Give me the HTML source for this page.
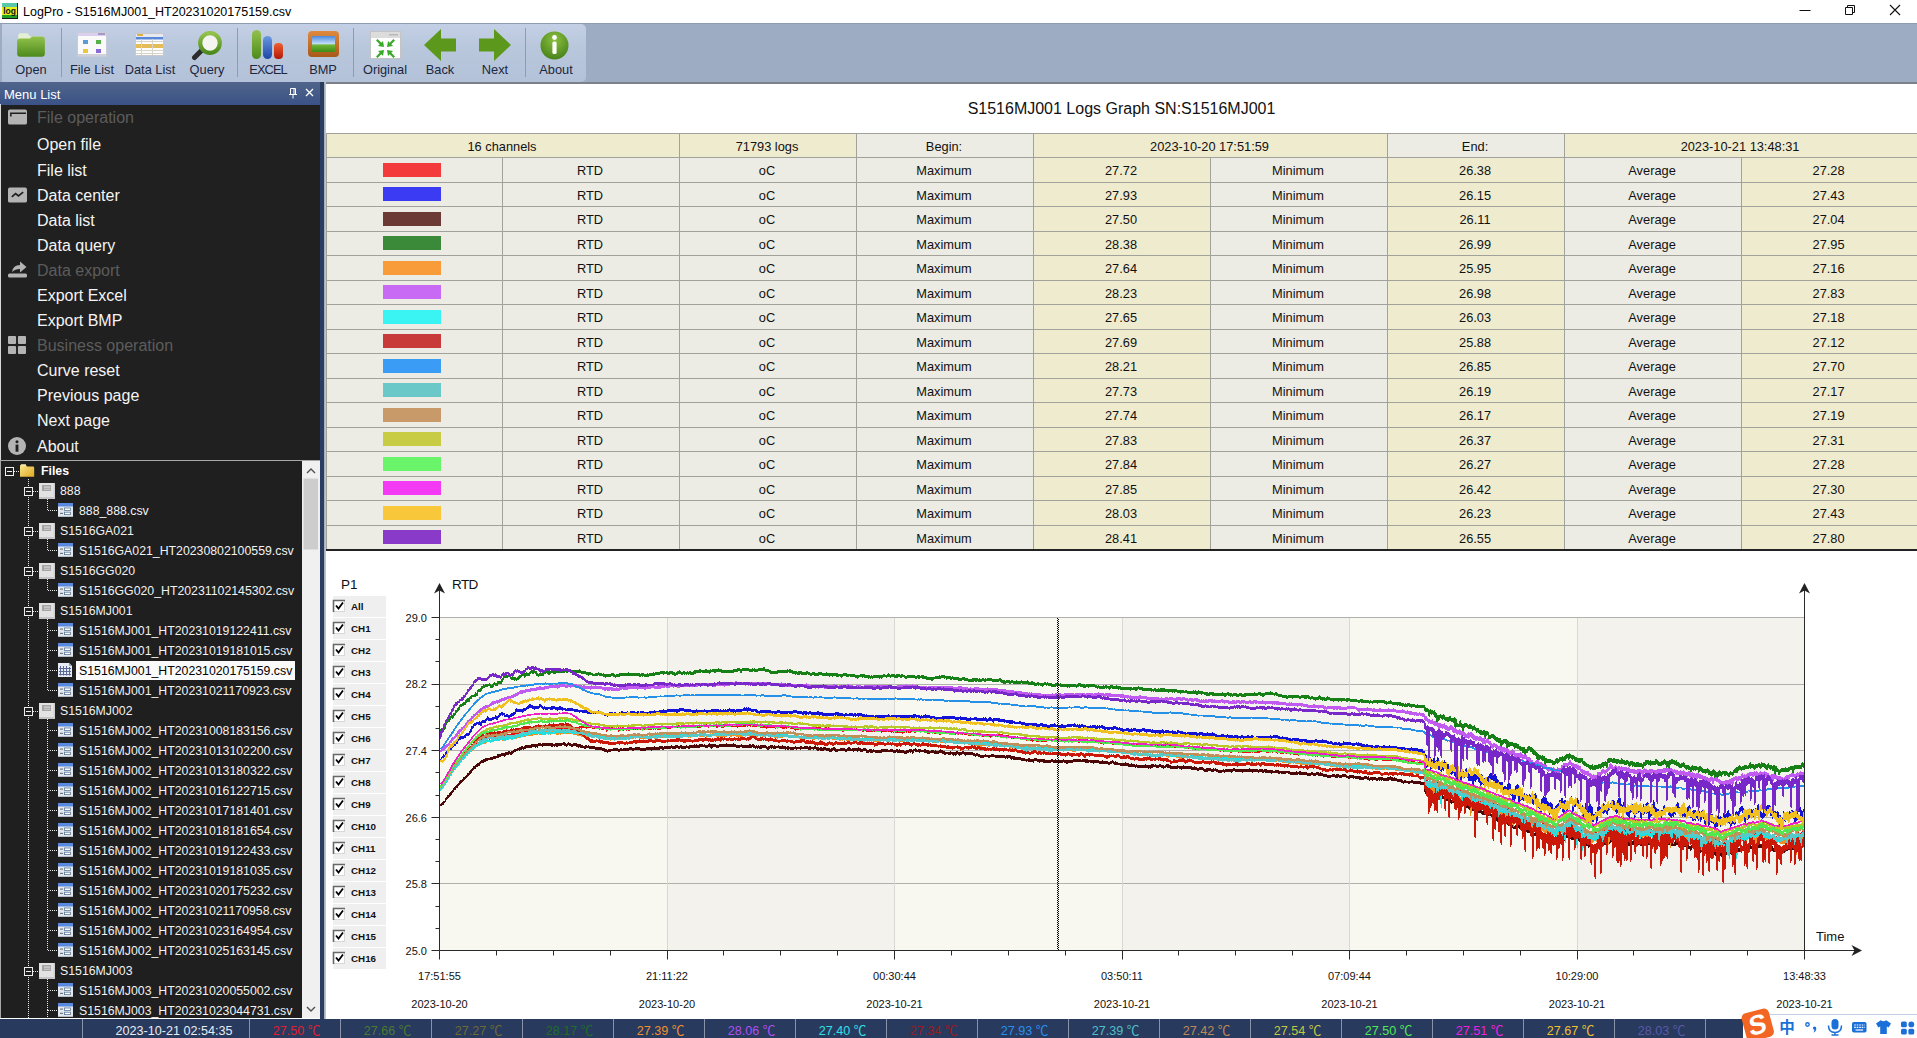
<!DOCTYPE html><html><head><meta charset="utf-8"><title>LogPro</title><style>

*{box-sizing:border-box}
html,body{margin:0;padding:0}
body{width:1917px;height:1038px;overflow:hidden;background:#fff;font-family:"Liberation Sans",sans-serif;position:relative;color:#000}
.abs{position:absolute}
#titlebar{left:0;top:0;width:1917px;height:23px;background:#fff}
#title{left:23px;top:4px;font-size:12.5px;line-height:16px;white-space:nowrap;color:#000}
#toolbar{left:0;top:23px;width:1917px;height:59px;background:#9dabc3;border-top:1px solid #8f9bb1}
#tbline{left:324px;top:82px;width:1593px;height:1.5px;background:#7c8088}
#tbpanel{left:2px;top:24px;width:584px;height:58px;background:linear-gradient(#c3cfe4,#b9c7dd 40%,#b4c2d9);border-radius:0 5px 5px 0}
.tbl{top:62px;font-size:12.8px;line-height:15px;color:#1c2740;white-space:nowrap;text-align:center;width:80px;margin-left:-40px}
.tsep{top:28px;width:1px;height:49px;background:#8d9bb5}
#lp{left:0;top:83px;width:320px;height:935px;background:#202020}
#mlh{left:0;top:82px;width:320px;height:23px;background:linear-gradient(#50658b,#3a5287);color:#fff;font-size:13px;line-height:26px;padding-left:4px;overflow:hidden}
.mi{left:37px;font-size:16px;line-height:20px;color:#f4f4f4;white-space:nowrap}
.mh{color:#5c5c5c}
#split{left:320px;top:82px;width:6px;height:937px;background:linear-gradient(90deg,#2c3d62 0,#2c3d62 4px,#9ea6b6 4px,#c8ccd4 6px)}
#tree{left:0;top:460px;width:320px;height:558px;background:#1f1f1f;border-top:1px solid #a8a8a8;border-left:1px solid #a8a8a8;overflow:hidden}
.tr{font-size:12.3px;line-height:16px;color:#f2f2f2;white-space:nowrap}
#main{left:326px;top:84px;width:1591px;height:934px;background:#fff}
#gtitle{left:326px;top:99px;width:1591px;text-align:center;font-size:16px;line-height:20px;color:#111}
table{border-collapse:collapse;position:absolute;left:326px;top:133px;width:1591px;table-layout:fixed;font-size:12.8px;color:#111}
td{border:1px solid #a2a29c;padding:2px 2px 0 0;text-align:center;height:24.5px;background:#edece4;overflow:hidden;white-space:nowrap}
td.y{background:#efebcf}
tr.h td{height:24px}
.sw{display:inline-block;width:58px;height:14px;vertical-align:middle;position:relative;top:-2px;left:-2px}
#status{left:0;top:1019px;width:1917px;height:19px;background:#283a5e}
.sc{font-family:"Liberation Sans","Noto Sans CJK SC",sans-serif;top:1019px;height:19px;font-size:12.6px;line-height:24px;padding-left:3px;text-align:center;white-space:nowrap;border-left:1px solid #8892a8}

</style></head><body>
<div id="titlebar" class="abs"></div>
<svg class="abs" style="left:2px;top:3px" width="16" height="16" viewBox="0 0 16 16"><rect x="0" y="0" width="16" height="16" fill="#1a1a1a"/><rect x="0" y="0" width="15" height="15" fill="#e8f020"/><rect x="0" y="0" width="15" height="4" fill="#58c8a8"/><rect x="0" y="12" width="15" height="3" fill="#20a020"/><text x="7.5" y="11" font-size="8.5" font-weight="700" text-anchor="middle" font-family="Liberation Sans, sans-serif" fill="#111">log</text></svg>
<div id="title" class="abs">LogPro - S1516MJ001_HT20231020175159.csv</div>
<svg class="abs" style="left:0px;top:0px" width="1917" height="23" viewBox="0 0 1917 23"><path d="M1799.5 10.5h11" stroke="#111" stroke-width="1" fill="none"/><path d="M1845.5 7.5h7v7h-7z M1847.5 7.5v-2h7v7h-2" stroke="#111" stroke-width="1" fill="none"/><path d="M1890 5l10 10M1900 5l-10 10" stroke="#111" stroke-width="1.1" fill="none"/></svg>
<div id="toolbar" class="abs"></div><div id="tbline" class="abs"></div><div id="tbpanel" class="abs"></div>
<div class="abs tsep" style="left:61px"></div>
<div class="abs tsep" style="left:237px"></div>
<div class="abs tsep" style="left:353px"></div>
<div class="abs tsep" style="left:525px"></div>
<svg class="abs" style="left:16px;top:29px" width="30" height="32" viewBox="0 0 28 30"><defs><linearGradient id="gG" x1="0" y1="0" x2="0" y2="1"><stop offset="0" stop-color="#93c24c"/><stop offset="1" stop-color="#4c8a1c"/></linearGradient><linearGradient id="gB" x1="0" y1="0" x2="0" y2="1"><stop offset="0" stop-color="#6a98e0"/><stop offset="1" stop-color="#1c48a8"/></linearGradient><linearGradient id="gR" x1="0" y1="0" x2="0" y2="1"><stop offset="0" stop-color="#f06030"/><stop offset="1" stop-color="#b01808"/></linearGradient><linearGradient id="gO" x1="0" y1="0" x2="0" y2="1"><stop offset="0" stop-color="#e08a40"/><stop offset="1" stop-color="#a85818"/></linearGradient><linearGradient id="gS" x1="0" y1="0" x2="0" y2="1"><stop offset="0" stop-color="#4a88e0"/><stop offset="0.5" stop-color="#c8e0f8"/><stop offset="0.55" stop-color="#70b838"/><stop offset="1" stop-color="#3c8a18"/></linearGradient><radialGradient id="gA" cx="0.5" cy="0.3" r="0.8"><stop offset="0" stop-color="#8cc040"/><stop offset="1" stop-color="#3f7a14"/></radialGradient></defs><path d="M2 6 q0-2 2-2 h7 l2 3 h11 q2 0 2 2 v4 h-24z" fill="#e4efd4"/><path d="M1 12 q0-3 3-3 h9 l2-2 h9 q3 0 3 3 v13 q0 3-3 3 h-20 q-3 0-3-3z" fill="url(#gG)"/></svg>
<div class="abs tbl" style="left:31px">Open</div>
<svg class="abs" style="left:77px;top:32px" width="30" height="25" viewBox="0 0 30 25"><rect x="0.5" y="0.5" width="29" height="24" fill="#fafafa" stroke="#c8ccd8"/><rect x="1" y="1" width="28" height="3" fill="#d8d0ec"/><rect x="21" y="1" width="7" height="2" fill="#a898c8"/><rect x="1" y="22" width="28" height="2" fill="#d0d0d8"/><rect x="6" y="8" width="5" height="4" fill="#5a9ad8"/><rect x="19" y="8" width="5" height="4" fill="#58b048"/><rect x="6" y="17" width="5" height="4" fill="#e8c840"/><rect x="19" y="17" width="5" height="4" fill="#8a6ad8"/></svg>
<div class="abs tbl" style="left:92px">File List</div>
<svg class="abs" style="left:135px;top:33px" width="29" height="23" viewBox="0 0 29 23"><rect x="0.5" y="0.5" width="28" height="22" fill="#fcfcfc" stroke="#c8c8cc"/><rect x="1" y="1" width="27" height="3" fill="#e8e8f0"/><rect x="2" y="1" width="6" height="2" fill="#e0b040"/><rect x="1" y="4" width="27" height="2.5" fill="#5a88d8"/><rect x="1" y="11" width="27" height="4" fill="#e4bc58"/><path d="M1 8.5h27M1 17.5h27M1 20.5h27M6.5 6v16M17.5 6v16" stroke="#d8d4c8" stroke-width="1" fill="none"/></svg>
<div class="abs tbl" style="left:150px">Data List</div>
<svg class="abs" style="left:191px;top:30px" width="32" height="32" viewBox="0 0 32 32"><defs><linearGradient id="gG" x1="0" y1="0" x2="0" y2="1"><stop offset="0" stop-color="#93c24c"/><stop offset="1" stop-color="#4c8a1c"/></linearGradient><linearGradient id="gB" x1="0" y1="0" x2="0" y2="1"><stop offset="0" stop-color="#6a98e0"/><stop offset="1" stop-color="#1c48a8"/></linearGradient><linearGradient id="gR" x1="0" y1="0" x2="0" y2="1"><stop offset="0" stop-color="#f06030"/><stop offset="1" stop-color="#b01808"/></linearGradient><linearGradient id="gO" x1="0" y1="0" x2="0" y2="1"><stop offset="0" stop-color="#e08a40"/><stop offset="1" stop-color="#a85818"/></linearGradient><linearGradient id="gS" x1="0" y1="0" x2="0" y2="1"><stop offset="0" stop-color="#4a88e0"/><stop offset="0.5" stop-color="#c8e0f8"/><stop offset="0.55" stop-color="#70b838"/><stop offset="1" stop-color="#3c8a18"/></linearGradient><radialGradient id="gA" cx="0.5" cy="0.3" r="0.8"><stop offset="0" stop-color="#8cc040"/><stop offset="1" stop-color="#3f7a14"/></radialGradient></defs><path d="M3.5 27.5 L11 20" stroke="#2c2c2c" stroke-width="5" stroke-linecap="round"/><circle cx="19" cy="13" r="9.8" fill="#f4f4f0" stroke="url(#gG)" stroke-width="4.2"/></svg>
<div class="abs tbl" style="left:207px">Query</div>
<svg class="abs" style="left:251px;top:30px" width="33" height="30" viewBox="0 0 33 30"><defs><linearGradient id="gG" x1="0" y1="0" x2="0" y2="1"><stop offset="0" stop-color="#93c24c"/><stop offset="1" stop-color="#4c8a1c"/></linearGradient><linearGradient id="gB" x1="0" y1="0" x2="0" y2="1"><stop offset="0" stop-color="#6a98e0"/><stop offset="1" stop-color="#1c48a8"/></linearGradient><linearGradient id="gR" x1="0" y1="0" x2="0" y2="1"><stop offset="0" stop-color="#f06030"/><stop offset="1" stop-color="#b01808"/></linearGradient><linearGradient id="gO" x1="0" y1="0" x2="0" y2="1"><stop offset="0" stop-color="#e08a40"/><stop offset="1" stop-color="#a85818"/></linearGradient><linearGradient id="gS" x1="0" y1="0" x2="0" y2="1"><stop offset="0" stop-color="#4a88e0"/><stop offset="0.5" stop-color="#c8e0f8"/><stop offset="0.55" stop-color="#70b838"/><stop offset="1" stop-color="#3c8a18"/></linearGradient><radialGradient id="gA" cx="0.5" cy="0.3" r="0.8"><stop offset="0" stop-color="#8cc040"/><stop offset="1" stop-color="#3f7a14"/></radialGradient></defs><rect x="1" y="0" width="9" height="29" rx="4.5" fill="url(#gG)"/><rect x="12" y="6" width="9" height="23" rx="4.5" fill="url(#gB)"/><rect x="23" y="13" width="9" height="16" rx="4" fill="url(#gR)"/></svg>
<div class="abs tbl" style="left:268px;letter-spacing:-0.9px">EXCEL</div>
<svg class="abs" style="left:307.5px;top:31px" width="31" height="26" viewBox="0 0 31 26"><defs><linearGradient id="gG" x1="0" y1="0" x2="0" y2="1"><stop offset="0" stop-color="#93c24c"/><stop offset="1" stop-color="#4c8a1c"/></linearGradient><linearGradient id="gB" x1="0" y1="0" x2="0" y2="1"><stop offset="0" stop-color="#6a98e0"/><stop offset="1" stop-color="#1c48a8"/></linearGradient><linearGradient id="gR" x1="0" y1="0" x2="0" y2="1"><stop offset="0" stop-color="#f06030"/><stop offset="1" stop-color="#b01808"/></linearGradient><linearGradient id="gO" x1="0" y1="0" x2="0" y2="1"><stop offset="0" stop-color="#e08a40"/><stop offset="1" stop-color="#a85818"/></linearGradient><linearGradient id="gS" x1="0" y1="0" x2="0" y2="1"><stop offset="0" stop-color="#4a88e0"/><stop offset="0.5" stop-color="#c8e0f8"/><stop offset="0.55" stop-color="#70b838"/><stop offset="1" stop-color="#3c8a18"/></linearGradient><radialGradient id="gA" cx="0.5" cy="0.3" r="0.8"><stop offset="0" stop-color="#8cc040"/><stop offset="1" stop-color="#3f7a14"/></radialGradient></defs><rect x="0" y="0" width="31" height="26" rx="4" fill="url(#gO)"/><rect x="4" y="5" width="23" height="16" rx="1" fill="url(#gS)"/></svg>
<div class="abs tbl" style="left:323px">BMP</div>
<svg class="abs" style="left:369.5px;top:31px" width="31" height="28" viewBox="0 0 31 28"><rect x="0.5" y="0.5" width="30" height="27" fill="#fff" stroke="#c4c4c4"/><rect x="1" y="1" width="29" height="6" fill="#dcdcdc"/><rect x="19" y="3" width="9" height="1.5" fill="#b8b8b8"/><g transform="translate(14,16)"><path d="M0 0 L-6 -1 L-4.3 -2.7 L-8 -6.4 L-6.4 -8 L-2.7 -4.3 L-1 -6z" fill="#3aa828"/></g><g transform="translate(17,16) scale(-1,1)"><path d="M0 0 L-6 -1 L-4.3 -2.7 L-8 -6.4 L-6.4 -8 L-2.7 -4.3 L-1 -6z" fill="#3aa828"/></g><g transform="translate(14,19) scale(1,-1)"><path d="M0 0 L-6 -1 L-4.3 -2.7 L-8 -6.4 L-6.4 -8 L-2.7 -4.3 L-1 -6z" fill="#3aa828"/></g><g transform="translate(17,19) scale(-1,-1)"><path d="M0 0 L-6 -1 L-4.3 -2.7 L-8 -6.4 L-6.4 -8 L-2.7 -4.3 L-1 -6z" fill="#3aa828"/></g></svg>
<div class="abs tbl" style="left:385px">Original</div>
<svg class="abs" style="left:424px;top:29px" width="32" height="32" viewBox="0 0 32 32"><path d="M0 16 L17 0 V9.5 H32 V22.5 H17 V32z" fill="#5c981c"/></svg>
<div class="abs tbl" style="left:440px">Back</div>
<svg class="abs" style="left:479px;top:29px" width="32" height="32" viewBox="0 0 32 32"><path d="M32 16 L15 0 V9.5 H0 V22.5 H15 V32z" fill="#5c981c"/></svg>
<div class="abs tbl" style="left:495px">Next</div>
<svg class="abs" style="left:540px;top:31px" width="29" height="29" viewBox="0 0 29 29"><defs><linearGradient id="gG" x1="0" y1="0" x2="0" y2="1"><stop offset="0" stop-color="#93c24c"/><stop offset="1" stop-color="#4c8a1c"/></linearGradient><linearGradient id="gB" x1="0" y1="0" x2="0" y2="1"><stop offset="0" stop-color="#6a98e0"/><stop offset="1" stop-color="#1c48a8"/></linearGradient><linearGradient id="gR" x1="0" y1="0" x2="0" y2="1"><stop offset="0" stop-color="#f06030"/><stop offset="1" stop-color="#b01808"/></linearGradient><linearGradient id="gO" x1="0" y1="0" x2="0" y2="1"><stop offset="0" stop-color="#e08a40"/><stop offset="1" stop-color="#a85818"/></linearGradient><linearGradient id="gS" x1="0" y1="0" x2="0" y2="1"><stop offset="0" stop-color="#4a88e0"/><stop offset="0.5" stop-color="#c8e0f8"/><stop offset="0.55" stop-color="#70b838"/><stop offset="1" stop-color="#3c8a18"/></linearGradient><radialGradient id="gA" cx="0.5" cy="0.3" r="0.8"><stop offset="0" stop-color="#8cc040"/><stop offset="1" stop-color="#3f7a14"/></radialGradient></defs><circle cx="14.5" cy="14.5" r="14" fill="url(#gA)"/><circle cx="14.5" cy="6.5" r="2.4" fill="#fff"/><rect x="12.4" y="10.5" width="4.2" height="12.5" rx="1.5" fill="#fff"/></svg>
<div class="abs tbl" style="left:556px">About</div>
<div id="lp" class="abs"></div>
<div id="mlh" class="abs">Menu List</div>
<svg class="abs" style="left:0px;top:0px" width="320" height="104" viewBox="0 0 320 104"><path d="M290.5 88.5h5v6h-5z M294 88.5v6 M289 94.5h8 M293 94.5v4" stroke="#fff" stroke-width="1" fill="none"/><path d="M306 89l7 7M313 89l-7 7" stroke="#fff" stroke-width="1.3" fill="none"/></svg>
<div class="abs mi mh" style="top:108px">File operation</div>
<svg class="abs" style="left:8px;top:109px" width="19" height="16" viewBox="0 0 20 16"><rect x="0" y="0" width="20" height="16" rx="2" fill="#b4b4b4"/><path d="M3 7.5 V4 H19" stroke="#1f1f1f" stroke-width="1.6" fill="none"/></svg>
<div class="abs mi" style="top:135px">Open file</div>
<div class="abs mi" style="top:161px">File list</div>
<div class="abs mi" style="top:186px">Data center</div>
<svg class="abs" style="left:8px;top:187px" width="19" height="16" viewBox="0 0 20 16"><rect x="0" y="0" width="20" height="16" rx="2" fill="#b4b4b4"/><path d="M4 10 L8 6.5 L11 9 L16 5" stroke="#1f1f1f" stroke-width="1.8" fill="none"/></svg>
<div class="abs mi" style="top:211px">Data list</div>
<div class="abs mi" style="top:236px">Data query</div>
<div class="abs mi mh" style="top:261px">Data export</div>
<svg class="abs" style="left:8px;top:260px" width="19" height="18" viewBox="0 0 19 18"><rect x="0" y="13.5" width="19" height="4" rx="1.5" fill="#b4b4b4"/><path d="M4 12 q1-7 8-7 v-3.5 l6.5 5.5 l-6.5 5.5 v-3.5 q-5 0 -8 3z" fill="#b4b4b4"/></svg>
<div class="abs mi" style="top:286px">Export Excel</div>
<div class="abs mi" style="top:311px">Export BMP</div>
<div class="abs mi mh" style="top:336px">Business operation</div>
<svg class="abs" style="left:8px;top:335.5px" width="18" height="18" viewBox="0 0 19 19"><rect x="0" y="0" width="8.5" height="8.5" rx="1" fill="#b4b4b4"/><rect x="10.5" y="0" width="8.5" height="8.5" rx="1" fill="#b4b4b4"/><rect x="0" y="10.5" width="8.5" height="8.5" rx="1" fill="#b4b4b4"/><rect x="10.5" y="10.5" width="8.5" height="8.5" rx="1" fill="#b4b4b4"/></svg>
<div class="abs mi" style="top:361px">Curve reset</div>
<div class="abs mi" style="top:386px">Previous page</div>
<div class="abs mi" style="top:411px">Next page</div>
<div class="abs mi" style="top:437px">About</div>
<svg class="abs" style="left:8px;top:437px" width="18" height="18" viewBox="0 0 19 19"><circle cx="9.5" cy="9.5" r="9.5" fill="#b4b4b4"/><circle cx="9.5" cy="5" r="1.6" fill="#1f1f1f"/><rect x="8" y="8" width="3" height="7.5" fill="#1f1f1f"/></svg>
<div class="abs" style="left:0;top:104px;width:1px;height:356px;background:#d8d8d8"></div>
<div id="tree" class="abs"></div>
<svg class="abs" style="left:0;top:0;font-family:'Liberation Sans',sans-serif" width="320" height="1018" viewBox="0 0 320 1018"><defs><linearGradient id="fy" x1="0" y1="0" x2="1" y2="1"><stop offset="0" stop-color="#fbe890"/><stop offset="1" stop-color="#e0a820"/></linearGradient><g id="exp"><rect x="0.5" y="0.5" width="8" height="8" fill="#1f1f1f" stroke="#f0f0f0"/><path d="M2 4.5h5" stroke="#f0f0f0" stroke-width="1"/></g><g id="dev"><rect x="0" y="0" width="16" height="16" fill="#e2e2e2"/><rect x="0" y="14" width="16" height="2" fill="#c4c4c4"/><rect x="14.5" y="0" width="1.5" height="16" fill="#cfcfcf"/><rect x="3" y="2" width="9" height="6" fill="#a4a4a4"/><rect x="5" y="3.5" width="6" height="1.2" fill="#d8d8d8"/><rect x="5" y="5.8" width="6" height="1" fill="#d0d0d0"/></g><g id="csv"><rect x="0" y="0" width="15" height="14" fill="#e4e8ec"/><rect x="0" y="0" width="15" height="3.5" fill="#5a8ae0"/><rect x="0" y="13" width="15" height="1" fill="#b8bcc4"/><rect x="2" y="5.5" width="3" height="1.2" fill="#6a7a8a"/><rect x="6.5" y="5" width="6" height="2.4" fill="#fff" stroke="#5a7a9a" stroke-width="0.8"/><rect x="2" y="9.8" width="3" height="1.2" fill="#6a7a8a"/><rect x="6.5" y="9.2" width="6" height="2.4" fill="#fff" stroke="#5a7a9a" stroke-width="0.8"/></g><g id="csvs"><path d="M0 0h11l3 3v11h-14z" fill="#e8ecf4"/><path d="M11 0l3 3h-3z" fill="#9aa8c0"/><path d="M2.5 3v9.5M5.5 3v9.5M8.5 3v9.5M11.5 4v8.5M1 5.5h12M1 8.5h12M1 11.5h12" stroke="#5a6a9a" stroke-width="1" fill="none"/></g></defs><path d="M28.5 479 V1020" stroke="#e8e8e8" stroke-width="1" stroke-dasharray="1 1" fill="none"/><path d="M47.5 499 V510.5" stroke="#e8e8e8" stroke-width="1" stroke-dasharray="1 1" fill="none"/><path d="M47.5 539 V550.5" stroke="#e8e8e8" stroke-width="1" stroke-dasharray="1 1" fill="none"/><path d="M47.5 579 V590.5" stroke="#e8e8e8" stroke-width="1" stroke-dasharray="1 1" fill="none"/><path d="M47.5 619 V690.5" stroke="#e8e8e8" stroke-width="1" stroke-dasharray="1 1" fill="none"/><path d="M47.5 719 V950.5" stroke="#e8e8e8" stroke-width="1" stroke-dasharray="1 1" fill="none"/><path d="M47.5 979 V1010.5" stroke="#e8e8e8" stroke-width="1" stroke-dasharray="1 1" fill="none"/><path d="M47.5 1010 V1020" stroke="#e8e8e8" stroke-width="1" stroke-dasharray="1 1" fill="none"/><path d="M14 471.5 H20" stroke="#e8e8e8" stroke-width="1" stroke-dasharray="1 1" fill="none"/><use href="#exp" x="5" y="467"/><path d="M20 466 q0-1.5 1.5-1.5 h4 l1.5 2 h6 q1.2 0 1.2 1.2 v9 h-14.2z" fill="url(#fy)"/><path d="M21 465 h5" stroke="#fdf6d0" stroke-width="1"/><text x="41" y="474.5" font-size="12.3" font-weight="700" fill="#fff">Files</text><path d="M33 491.5 H39" stroke="#e8e8e8" stroke-width="1" stroke-dasharray="1 1" fill="none"/><use href="#exp" x="24" y="487"/><use href="#dev" x="39" y="483"/><text x="60" y="494.5" font-size="12.3" fill="#f2f2f2">888</text><path d="M48 510.5 H58" stroke="#e8e8e8" stroke-width="1" stroke-dasharray="1 1" fill="none"/><use href="#csv" x="58" y="503"/><text x="79" y="514.5" font-size="12.3" fill="#f2f2f2">888_888.csv</text><path d="M33 531.5 H39" stroke="#e8e8e8" stroke-width="1" stroke-dasharray="1 1" fill="none"/><use href="#exp" x="24" y="527"/><use href="#dev" x="39" y="523"/><text x="60" y="534.5" font-size="12.3" fill="#f2f2f2">S1516GA021</text><path d="M48 550.5 H58" stroke="#e8e8e8" stroke-width="1" stroke-dasharray="1 1" fill="none"/><use href="#csv" x="58" y="543"/><text x="79" y="554.5" font-size="12.3" fill="#f2f2f2">S1516GA021_HT20230802100559.csv</text><path d="M33 571.5 H39" stroke="#e8e8e8" stroke-width="1" stroke-dasharray="1 1" fill="none"/><use href="#exp" x="24" y="567"/><use href="#dev" x="39" y="563"/><text x="60" y="574.5" font-size="12.3" fill="#f2f2f2">S1516GG020</text><path d="M48 590.5 H58" stroke="#e8e8e8" stroke-width="1" stroke-dasharray="1 1" fill="none"/><use href="#csv" x="58" y="583"/><text x="79" y="594.5" font-size="12.3" fill="#f2f2f2">S1516GG020_HT20231102145302.csv</text><path d="M33 611.5 H39" stroke="#e8e8e8" stroke-width="1" stroke-dasharray="1 1" fill="none"/><use href="#exp" x="24" y="607"/><use href="#dev" x="39" y="603"/><text x="60" y="614.5" font-size="12.3" fill="#f2f2f2">S1516MJ001</text><path d="M48 630.5 H58" stroke="#e8e8e8" stroke-width="1" stroke-dasharray="1 1" fill="none"/><use href="#csv" x="58" y="623"/><text x="79" y="634.5" font-size="12.3" fill="#f2f2f2">S1516MJ001_HT20231019122411.csv</text><path d="M48 650.5 H58" stroke="#e8e8e8" stroke-width="1" stroke-dasharray="1 1" fill="none"/><use href="#csv" x="58" y="643"/><text x="79" y="654.5" font-size="12.3" fill="#f2f2f2">S1516MJ001_HT20231019181015.csv</text><path d="M48 670.5 H58" stroke="#e8e8e8" stroke-width="1" stroke-dasharray="1 1" fill="none"/><use href="#csvs" x="58" y="663"/><rect x="76" y="661" width="219" height="19" fill="#fafafa"/><text x="79" y="674.5" font-size="12.3" fill="#000">S1516MJ001_HT20231020175159.csv</text><path d="M48 690.5 H58" stroke="#e8e8e8" stroke-width="1" stroke-dasharray="1 1" fill="none"/><use href="#csv" x="58" y="683"/><text x="79" y="694.5" font-size="12.3" fill="#f2f2f2">S1516MJ001_HT20231021170923.csv</text><path d="M33 711.5 H39" stroke="#e8e8e8" stroke-width="1" stroke-dasharray="1 1" fill="none"/><use href="#exp" x="24" y="707"/><use href="#dev" x="39" y="703"/><text x="60" y="714.5" font-size="12.3" fill="#f2f2f2">S1516MJ002</text><path d="M48 730.5 H58" stroke="#e8e8e8" stroke-width="1" stroke-dasharray="1 1" fill="none"/><use href="#csv" x="58" y="723"/><text x="79" y="734.5" font-size="12.3" fill="#f2f2f2">S1516MJ002_HT20231008183156.csv</text><path d="M48 750.5 H58" stroke="#e8e8e8" stroke-width="1" stroke-dasharray="1 1" fill="none"/><use href="#csv" x="58" y="743"/><text x="79" y="754.5" font-size="12.3" fill="#f2f2f2">S1516MJ002_HT20231013102200.csv</text><path d="M48 770.5 H58" stroke="#e8e8e8" stroke-width="1" stroke-dasharray="1 1" fill="none"/><use href="#csv" x="58" y="763"/><text x="79" y="774.5" font-size="12.3" fill="#f2f2f2">S1516MJ002_HT20231013180322.csv</text><path d="M48 790.5 H58" stroke="#e8e8e8" stroke-width="1" stroke-dasharray="1 1" fill="none"/><use href="#csv" x="58" y="783"/><text x="79" y="794.5" font-size="12.3" fill="#f2f2f2">S1516MJ002_HT20231016122715.csv</text><path d="M48 810.5 H58" stroke="#e8e8e8" stroke-width="1" stroke-dasharray="1 1" fill="none"/><use href="#csv" x="58" y="803"/><text x="79" y="814.5" font-size="12.3" fill="#f2f2f2">S1516MJ002_HT20231017181401.csv</text><path d="M48 830.5 H58" stroke="#e8e8e8" stroke-width="1" stroke-dasharray="1 1" fill="none"/><use href="#csv" x="58" y="823"/><text x="79" y="834.5" font-size="12.3" fill="#f2f2f2">S1516MJ002_HT20231018181654.csv</text><path d="M48 850.5 H58" stroke="#e8e8e8" stroke-width="1" stroke-dasharray="1 1" fill="none"/><use href="#csv" x="58" y="843"/><text x="79" y="854.5" font-size="12.3" fill="#f2f2f2">S1516MJ002_HT20231019122433.csv</text><path d="M48 870.5 H58" stroke="#e8e8e8" stroke-width="1" stroke-dasharray="1 1" fill="none"/><use href="#csv" x="58" y="863"/><text x="79" y="874.5" font-size="12.3" fill="#f2f2f2">S1516MJ002_HT20231019181035.csv</text><path d="M48 890.5 H58" stroke="#e8e8e8" stroke-width="1" stroke-dasharray="1 1" fill="none"/><use href="#csv" x="58" y="883"/><text x="79" y="894.5" font-size="12.3" fill="#f2f2f2">S1516MJ002_HT20231020175232.csv</text><path d="M48 910.5 H58" stroke="#e8e8e8" stroke-width="1" stroke-dasharray="1 1" fill="none"/><use href="#csv" x="58" y="903"/><text x="79" y="914.5" font-size="12.3" fill="#f2f2f2">S1516MJ002_HT20231021170958.csv</text><path d="M48 930.5 H58" stroke="#e8e8e8" stroke-width="1" stroke-dasharray="1 1" fill="none"/><use href="#csv" x="58" y="923"/><text x="79" y="934.5" font-size="12.3" fill="#f2f2f2">S1516MJ002_HT20231023164954.csv</text><path d="M48 950.5 H58" stroke="#e8e8e8" stroke-width="1" stroke-dasharray="1 1" fill="none"/><use href="#csv" x="58" y="943"/><text x="79" y="954.5" font-size="12.3" fill="#f2f2f2">S1516MJ002_HT20231025163145.csv</text><path d="M33 971.5 H39" stroke="#e8e8e8" stroke-width="1" stroke-dasharray="1 1" fill="none"/><use href="#exp" x="24" y="967"/><use href="#dev" x="39" y="963"/><text x="60" y="974.5" font-size="12.3" fill="#f2f2f2">S1516MJ003</text><path d="M48 990.5 H58" stroke="#e8e8e8" stroke-width="1" stroke-dasharray="1 1" fill="none"/><use href="#csv" x="58" y="983"/><text x="79" y="994.5" font-size="12.3" fill="#f2f2f2">S1516MJ003_HT20231020055002.csv</text><path d="M48 1010.5 H58" stroke="#e8e8e8" stroke-width="1" stroke-dasharray="1 1" fill="none"/><use href="#csv" x="58" y="1003"/><text x="79" y="1014.5" font-size="12.3" fill="#f2f2f2">S1516MJ003_HT20231023044731.csv</text><rect x="302" y="461" width="18" height="557" fill="#f0f0f0"/><rect x="303.5" y="478.5" width="14.5" height="71" fill="#cdcdcd"/><path d="M307 473l4-4l4 4" stroke="#505050" stroke-width="1.4" fill="none"/><path d="M307 1007l4 4l4-4" stroke="#505050" stroke-width="1.4" fill="none"/></svg>
<div id="split" class="abs"></div>
<div id="main" class="abs"></div>
<div id="gtitle" class="abs">S1516MJ001 Logs Graph SN:S1516MJ001</div>
<table><colgroup><col style="width:176px"><col style="width:177px"><col style="width:177px"><col style="width:177px"><col style="width:177px"><col style="width:177px"><col style="width:177px"><col style="width:177px"><col style="width:176px"></colgroup>
<tr class="h"><td class="y" colspan="2">16 channels</td><td class="y">71793 logs</td><td>Begin:</td><td class="y" colspan="2">2023-10-20 17:51:59</td><td>End:</td><td class="y" colspan="2">2023-10-21 13:48:31</td></tr>
<tr><td><span class="sw" style="background:#f43b3b"></span></td><td>RTD</td><td>oC</td><td>Maximum</td><td class="y">27.72</td><td>Minimum</td><td class="y">26.38</td><td>Average</td><td class="y">27.28</td></tr>
<tr><td><span class="sw" style="background:#3b3bf4"></span></td><td>RTD</td><td>oC</td><td>Maximum</td><td class="y">27.93</td><td>Minimum</td><td class="y">26.15</td><td>Average</td><td class="y">27.43</td></tr>
<tr><td><span class="sw" style="background:#6b3a35"></span></td><td>RTD</td><td>oC</td><td>Maximum</td><td class="y">27.50</td><td>Minimum</td><td class="y">26.11</td><td>Average</td><td class="y">27.04</td></tr>
<tr><td><span class="sw" style="background:#3a8a3a"></span></td><td>RTD</td><td>oC</td><td>Maximum</td><td class="y">28.38</td><td>Minimum</td><td class="y">26.99</td><td>Average</td><td class="y">27.95</td></tr>
<tr><td><span class="sw" style="background:#f89c3a"></span></td><td>RTD</td><td>oC</td><td>Maximum</td><td class="y">27.64</td><td>Minimum</td><td class="y">25.95</td><td>Average</td><td class="y">27.16</td></tr>
<tr><td><span class="sw" style="background:#c86af4"></span></td><td>RTD</td><td>oC</td><td>Maximum</td><td class="y">28.23</td><td>Minimum</td><td class="y">26.98</td><td>Average</td><td class="y">27.83</td></tr>
<tr><td><span class="sw" style="background:#3af4f4"></span></td><td>RTD</td><td>oC</td><td>Maximum</td><td class="y">27.65</td><td>Minimum</td><td class="y">26.03</td><td>Average</td><td class="y">27.18</td></tr>
<tr><td><span class="sw" style="background:#c83a3a"></span></td><td>RTD</td><td>oC</td><td>Maximum</td><td class="y">27.69</td><td>Minimum</td><td class="y">25.88</td><td>Average</td><td class="y">27.12</td></tr>
<tr><td><span class="sw" style="background:#3a9cf4"></span></td><td>RTD</td><td>oC</td><td>Maximum</td><td class="y">28.21</td><td>Minimum</td><td class="y">26.85</td><td>Average</td><td class="y">27.70</td></tr>
<tr><td><span class="sw" style="background:#6ac8c8"></span></td><td>RTD</td><td>oC</td><td>Maximum</td><td class="y">27.73</td><td>Minimum</td><td class="y">26.19</td><td>Average</td><td class="y">27.17</td></tr>
<tr><td><span class="sw" style="background:#c89a6a"></span></td><td>RTD</td><td>oC</td><td>Maximum</td><td class="y">27.74</td><td>Minimum</td><td class="y">26.17</td><td>Average</td><td class="y">27.19</td></tr>
<tr><td><span class="sw" style="background:#c8cc44"></span></td><td>RTD</td><td>oC</td><td>Maximum</td><td class="y">27.83</td><td>Minimum</td><td class="y">26.37</td><td>Average</td><td class="y">27.31</td></tr>
<tr><td><span class="sw" style="background:#6af46a"></span></td><td>RTD</td><td>oC</td><td>Maximum</td><td class="y">27.84</td><td>Minimum</td><td class="y">26.27</td><td>Average</td><td class="y">27.28</td></tr>
<tr><td><span class="sw" style="background:#f43af4"></span></td><td>RTD</td><td>oC</td><td>Maximum</td><td class="y">27.85</td><td>Minimum</td><td class="y">26.42</td><td>Average</td><td class="y">27.30</td></tr>
<tr><td><span class="sw" style="background:#f8c83a"></span></td><td>RTD</td><td>oC</td><td>Maximum</td><td class="y">28.03</td><td>Minimum</td><td class="y">26.23</td><td>Average</td><td class="y">27.43</td></tr>
<tr><td><span class="sw" style="background:#8a3ac8"></span></td><td>RTD</td><td>oC</td><td>Maximum</td><td class="y">28.41</td><td>Minimum</td><td class="y">26.55</td><td>Average</td><td class="y">27.80</td></tr>
</table>
<div class="abs" style="left:326px;top:549px;width:1591px;height:2px;background:#222"></div>
<svg class="abs" style="left:326px;top:551px;font-family:'Liberation Sans',sans-serif" width="1591" height="467" viewBox="326 551 1591 467"><rect x="440.0" y="617" width="227.5" height="334" fill="#f8f7f0"/><rect x="667.5" y="617" width="227.5" height="334" fill="#f3f2ec"/><rect x="895.0" y="617" width="227.5" height="334" fill="#f8f7f0"/><rect x="1122.5" y="617" width="227.5" height="334" fill="#f3f2ec"/><rect x="1350.0" y="617" width="227.5" height="334" fill="#f8f7f0"/><rect x="1577.5" y="617" width="227.5" height="334" fill="#f3f2ec"/><path d="M440 617.5H1804" stroke="#b0b0ac" stroke-width="1"/><path d="M440 684.5H1804" stroke="#b0b0ac" stroke-width="1"/><path d="M440 750.5H1804" stroke="#b0b0ac" stroke-width="1"/><path d="M440 817.5H1804" stroke="#b0b0ac" stroke-width="1"/><path d="M440 883.5H1804" stroke="#b0b0ac" stroke-width="1"/><path d="M440 950.5H1804" stroke="#b0b0ac" stroke-width="1"/><path d="M667.5 618V950" stroke="#d8d8d4" stroke-width="1"/><path d="M894.5 618V950" stroke="#d8d8d4" stroke-width="1"/><path d="M1122.5 618V950" stroke="#d8d8d4" stroke-width="1"/><path d="M1349.5 618V950" stroke="#d8d8d4" stroke-width="1"/><path d="M1577.5 618V950" stroke="#d8d8d4" stroke-width="1"/><g fill="none" stroke-linejoin="round" shape-rendering="crispEdges"><path d="M440.5,786.9v1.1l1-1.3v-.7l1-.3v.7l1-1.4v-.8l1-1.5v.8l1-1.6v-1.5l1-1.7v1l1-1.6v-.7l1-2.3v1.4l1-1.7v-.8l1-1.9v1.3l1-2.1v-.8l1-1.7v1l1-1.5v-1.2l1-.5v.8l1-1.7v-.9l1-1.3v.9l1-1.2v-.9l1-1.2v.9l1-1.3v-.8l1-1.6v1.7l1-1.7v-1l1-.9v1.2l1-1.2v-.8l1-1.3v.8l1-.7v-1.3l1-.6v2.3l1-2.3v-.8l1-1v1.3l1-1.5v-.9l1-.9v.7l1-.9v-1l1-.8v.9l1-.3v-1.1l1-1.2v1.4l1-.9v-1.1l1-1.1v1.3l1-.8v-.9l1-.1v.8l1-.8v-1.1l1-.7v1.1l1-.9v-.9l1-.6v1.2l1-.4v-.7l1-1.3v.9l1-.3v-.8l1-.4v.8l1,.1v-.7l1-.1v.7l1,.1v-1l1-.6v1.3l1-.5v-1.3l1-.1v1.1l1-.2v-.7l1-.6v1.4l1,.2v-1.2l1-.3v1l1-.5v-.7l1,.2v.8l1,.4v-1l1-.1v1l1-.5v-1l1-.6v.9l1-.1v-1.1l1-.4v1l1-.1v-1l1-.1v1.1l1,0v-.8l1,0v1.7l1-.9v-1.1l1-.1v.9l1,.1v-1.1l1-.2v1.1l1-.5v-1l1-.1v.7l1,.4v-1.2l1-.2v.8l1,0v-1.1l1-.4v1.1l1-.1v-.9l1-.1v.7l1,0v-1l1-.7v1.4l1-.3v-1.1l1-.3v.9l1-.2v-.8l1-.5v1.1l1,.1v-.9l1,.1v.7l1-.2v-.8l1,0v.9l1,.1v-1.1l1,.1v1l1,.2v-1l1-.3v.8l1,0v-1.2l1,.4v1.2l1-.2v-.9l1,.2v.8l1-.5v-1.2l1,.3v1l1-.3v-1.3l1-.2v.9l1,0v-1.1l1,.3v.9l1,.1v-.8l1-.2v.7l1-.5v-.8l1,.1v.9l1-.2v-.9l1-.4v.9l1,0v-1.2l1,.4v.8l1,.2v-.7l1-.3v1l1,.1v-.8l1,0v1.2l1-.2v-1l1,.2v1.1l1-.5v-.9l1-.3v1.1l1,.4v-1.2l1,.1v1.1l1,0v-1.3l1,.1v1l1,.5v-1.2l1,0v.8l1,0v-1l1-.5v1.4l1-.3v-.8l1-.3v.8l1-.1v-.9l1-.2v.7l1,.4v-1.6l1,.4v.9l1-.1v-1.2l1,.2v.9l1-.2v-.9l1-.2v.8l1,0v-.8l1-.7v1l1,.2v-.9l1-.6v.9l1,.1v-.9l1,.3v1l1-.2v-.8l1-.6v1.9l1-.5v-.9l1-.2v.8l1,0v-.8l1,0v1l1,.1v-1.1l1,.6v.9l1,.3v-1.2l1-.3v1.1l1,.2v-1.6l1,.4v.9l1,.6v-1.3l1,.3v.7l1,.8v-1.2l1-.2v1l1,.4v-1l1,0v1l1,.1v-.8l1-.3v.9l1,.2v-.7l1,.1v2.6l1-1.7v-.7l1-.5v1.3l1-.5v-1l1-.2v.9l1-.1v-.7l1,.3v.9l1,.5v-.9l1,.1v.7l1,0v-.7l1-.3v1.1l1,.3v-1.1l1-.4v2.7l1-1v-1l1-.8v1.4l1,.1v-1l1-.4v1.2l1,.5v-1.3l1,.4v.7l1-.1v-.7l1-.3v1.3l1-.2v-1.1l1,.5v.7l1,0v-1.1l1,.1v.8l1,.1v-1.1l1,.3v.7l1,.1v-1.1l1,.2v.9l1-.7v-.7l1-.2v.8l1,0v-.8l1,.4v.8l1,.3v-.8l1-.3v.9l1,.2v-1l1,.1v1.3l1-.3v-1.3l1,.1v.6l1,.1v-1.3l1,.1v1l1,.2v-.8l1,0v1l1-.3v-.7l1-.1v.8l1-.2v-.9l1-.1v.7l1,.2v-1.1l1-.1v1l1,.2v-.9l1,.1v.6l1,.3v-1.5l1,.9v1l1-.2v-1l1,0v.9l1-.5v-1.1l1-.4v1.1l1,0v-1.2l1,.3v.9l1,.2v-1.1l1,0v.9l1,.1v-.9l1-.3v1.1l1-.3v-.8l1-.6v1.7l1-.6v-.7l1-.3v.9l1-.1v-.7l1,.1v.9l1-.3v-.7l1-.5v.8l1,.3v-1.4l1,0v1.1l1,.2v-1l1,.2v1l1-.1v-1.1l1-.1v.7l1,.1v-1l1,.4v.7l1,.3v-1.1l1,0v1.3l1-.5v-.9l1,.1v1l1-.2v-1.1l1,.4v1l1,.3v-1.1l1-.6v1.2l1,0v-.8l1,.1v.7l1,.1v-.9l1,0v.6l1,.5v-1.2l1-.4v1.4l1-.3v-.8l1-.4v1.2l1-.3v-1.1l1,.1v1.2l1-.5v-1l1-.2v.8l1,.2v-1.1l1,.3v.9l1,.4v-.8l1-.3v1.4l1-.3v-.8l1-.5v1.1l1,.2v-.8l1,0v.8l1,0v-1l1-.3v.9l1,.4v-1.1l1,.7v.7l1,.2v-1l1-.3v1l1-.2v-1.4l1,.8v.7l1,.3v-.8l1,0v.9l1-.2v-1.1l1-.3v.9l1,.2v-.8l1-.2v.7l1-.1v-.8l1-.3v1l1,.1v-.9l1-.1v1l1,0v-.8l1,0v1.1l1-.3v-.9l1,.1v.9l1,.1v-1l1,.1v.9l1,.5v-.8l1-.4v.9l1-.2v-.9l1-.5v1.4l1-.3v-1l1,.4v.9l1-.3v-1l1,.4v.8l1,.4v-1.3l1-.5v.9l1,.2v-1l1-.1v.9l1,0v-.9l1,0v1.1l1-.3v-.7l1-.2v1.1l1,.2v-1l1-.1v1.3l1,0v-1l1-.2v1l1,.4v-1.3l1,.1v.8l1,.4v-.8l1,.4v.9l1,.1v-1.3l1,.2v1.4l1-.4v-.8l1,.4v.8l1-.2v-.8l1,.5v1l1-.6v-1.2l1,.2v1.3l1-.4v-.9l1,.3v1l1,.1v-1.1l1,.1v.8l1-.2v-.9l1,.2v1.1l1,.2v-1.1l1,.1v.8l1,0v-.9l1-.1v.8l1,.3v-1.1l1-.7v1.1l1,.3v-1l1,.7v1.2l1,0v-1.1l1-.5v1.2l1-.1v-1.1l1,.6v.9l1-.4v-.9l1-.1v.9l1,.1v-1l1,.4v.8l1,.2v-.8l1-.1v.7l1,.8v-1l1-.4v1.5l1,1v-1.9l1-.3v1.2l1,.1v-1.3l1,.3v.9l1,.1v-.8l1-.5v.8l1,.1v-.7l1,.1v1.1l1,0v-.8l1-.5v.8l1,.7v-1.9l1,.5v.8l1,.1v-.7l1,0v.9l1-.4v-1.2l1,.2v1l1,.4v-1.3l1-.2v1l1,.2v-1.3l1,.5v1.3l1-.3v-.6l1-.6v1.1l1-.1v-1.1l1,.1v1.3l1,.3v-1.2l1,0v1.3l1,.3v-1.1l1-.2v1.1l1,.3v-1.2l1-.5v1l1-.2v-.9l1-.3v1.6l1,.1v-.9l1-.3v1l1,1v-1.6l1,.3v1.1l1-.2v-.8l1-.1v1.1l1,.2v-1l1-.1v1.3l1-.5v-.9l1-.4v1.1l1,0v-.8l1,.3v.9l1,.4v-1.1l1,.4v.7l1,.3v-.8l1-.2v1.2l1,0v-1.6l1,.2v.9l1-.3v-1l1,0v.9l1,0v-1.1l1,.3v.9l1,.4v-1.2l1,.3v.8l1,.1v-1.2l1-.1v.7l1,.4v-.8l1,.1v.9l1-.2v-1l1-.2v1.2l1,0v-.9l1,.1v.8l1-.1v-.8l1,0v.8l1,.5v-1.3l1,.1v1.4l1,.1v-1.6l1,.3v1l1,0v-.9l1,.1v1.1l1-.2v-1l1-.1v1.1l1,.6v-1.2l1,0v1l1,0v-.9l1,0v.8l1,0v-.8l1,.1v.8l1,.4v-.7l1-.6v.9l1,0v-1.2l1,.1v1.1l1,.1v-1l1-.1v1.2l1,.4v-1l1-.5v1.3l1-.2v-.9l1-.6v1.5l1-.4v-.7l1-.1v.8l1,0v-1l1-.5v1.4l1,.2v-1.3l1,.2v1.1l1,.7v-1.1l1,.1v.8l1,.3v-1.3l1,.1v.8l1,.4v-1.2l1,.2v1.2l1,.5v-1l1,.1v.7l1,.2v-1.1l1-.4v1.4l1-.1v-.8l1-.1v1.3l1-.5v-1.1l1-.5v1.1l1-.4v-1l1,.2v1.4l1-.3v-.7l1-.1v1.4l1-.4v-1.1l1,.5v1.1l1-1v-1l1,0v1.1l1-.2v-.9l1,.3v1.1l1,.3v-1.3l1-.2v1l1-.1v-1.5l1,.5v.9l1,.2v-1.4l1,.2v1.1l1,.1v-1.1l1-.2v1.2l1-.7v-.7l1-.2v1.2l1,.6v-1.2l1,.9v.9l1,.8v-1.5l1,.2v1.4l1-.4v-1l1-.3v1l1-.2v-1.3l1,.4v.7l1,.6v-1.1l1,.3v.9l1,0v-1l1-.7v1.1l1,.5v-1.1l1,.6v.7l1,.9v-1.2l1,.4v.9l1-.2v-1.1l1-.9v.8l1,0v-.9l1,.3v1.1l1,.2v-1.1l1-.4v1.1l1,.1v-1.3l1-.1v1.3l1,.2v-1.2l1,.3v1.2l1,.1v-1.1l1,.3v.9l1,0v-1l1,.2v1.4l1-.3v-.9l1-.6v1.1l1-.3v-1l1,.4v1.3l1-.1v-1.1l1,.8v.8l1-.4v-.9l1,0v1.1l1-.4v-.8l1,.2v1.1l1-.1v-.7l1,0v1.2l1,.1v-.9l1,.2v.8l1,.6v-1.8l1,.2v1.1l1-.5v-.8l1,.3v1.1l1,.4v-1.1l1,.3v.9l1,0v-1l1-.2v.9l1,.4v-1l1,0v1l1-.1v-1.2l1,.4v.8l1,.1v-.7l1,.1v.7l1,.7v-1.2l1-.4v1.1l1,.4v-1.2l1-.2v1.4l1-.3v-.7l1-.4v1l1,.1v-1.1l1,.5v1.9l1-1.5v-.7l1-.1v.8l1-.3v-.8l1-.2v1.3l1-.1v-1.1l1,.5v1.2l1-.1v-1.1l1,.2v1l1-.2v-.9l1-.2v1l1,.1v-1.5l1,.9v1.1l1-.3v-.7l1,0v1.3l1,.2v-1.2l1,.1v1.5l1-.1v-1.2l1,0v1l1,.3v-1l1,.3v1l1,.3v-.9l1,.3v.7l1,.3v-1.2l1,.1v1.2l1-.4v-1.2l1,.6v.9l1-.3v-1l1,.6v.9l1,0v-.8l1-.2v.8l1,.4v-.9l1,0v1.1l1-.1v-.9l1-.1v.7l1,.6v-1.1l1,.6v1l1,.5v-1.2l1,.4v1l1-.1v-1l1,0v.8l1,.3v-.7l1-.2v1.3l1-.5v-.9l1,.1v.9l1,.3v-1.3l1,.4v1.8l1-1v-1l1,.4v1.1l1-.4v-.9l1-.1v1.1l1,0v-.8l1,.4v.8l1,.1v-.8l1,.1v.8l1,0v-.9l1-.5v1.1l1-.4v-1.1l1-.4v.9l1,.6v-1l1-.1v.9l1,.7v-1l1-.5v1.4l1-.6v-.7l1-.3v1.8l1-.6v-1.5l1,.9v1.1l1-1v-.6l1,.1v.8l1-.2v-.7l1,.3v.7l1,.2v-1l1-.4v1.3l1,.2v-1.2l1,.3v1l1-.1v-1.2l1,.3v.9l1-.5v-.9l1,.3v.9l1,.4v-1l1-.1v.8l1,0v-1l1-.1v1l1-.1v-1.1l1,.1v.9l1,.1v-.9l1,.5v.8l1,.1v-.8l1-.1v1.5l1,.4v-.9l1-.4v.7l1,.1v-1.2l1-.2v1l1,.2v-.8l1,.1v.8l1,.1v-1l1-.2v1.1l1,.1v-1.4l1,.4v.8l1-.1v-1l1,.3v.9l1-.3v-.8l1,0v1.2l1-.1v-.8l1,.3v.9l1,0v-.9l1,.1v1l1-.1v-1.1l1,.1v.8l1,.5v-.8l1,.2v1l1,.8v-1l1-.4v.8l1,1.1v-2.4l1,0v1.3l1-.1v-1.1l1,.4v.9l1-.1v-.7l1,0v1.3l1-.8v-.7l1,.3v.9l1,.3v-1l1,.3v1.1l1-.1v-1.3l1-.3v1.2l1,.3v-1.1l1,.2v.8l1,.4v-1l1-.2v1.2l1-.1v-.9l1,.5v.8l1-.3v-.9l1,.1v1.3l1-.3v-1.2l1-.1v1.2l1,0v-.6l1-.3v1.1l1,.7v-1l1-.5v1.3l1,0v-.9l1,.1v1.1l1,.5v-1.4l1,0v1.4l1,.1v-.7l1,.1v1.3l1-.6v-.7l1-.3v.8l1,.1v-1.1l1,.3v.7l1,.4v-1l1,.5v.9l1,0v-.8l1,.1v.8l1,0v-.9l1-.2v.9l1,.1v-1l1-.6v1.1l1,.4v-.8l1-.3v1l1,.3v-.9l1-.2v1.1l1,.2v-1.2l1-.3v1.3l1-.3v-.9l1,.2v1l1,.2v-1.2l1,.4v1l1,.1v-1.1l1-.4v.8l1,.3v-1.1l1,.1v1l1,.1v-1.1l1-.5v.8l1,0v-.8l1,.3v1l1,0v-.9l1-.1v.8l1,.1v-.7l1,.2v.9l1-.5v-.9l1,.1v1l1,.1v-1.6l1,.9v.6l1,.7v-1l1-.1v1.4l1-.4v-1.1l1-.1v1l1,0v-1.2l1,.5v.8l1,.7v-1.4l1,0v.8l1,.2v-1.3l1,0v1.3l1,0v-.9l1,.4v.7l1,.2v-1.1l1,.6v1l1-.1v-.9l1-.2v1l1-.1v-1.3l1,.5v.9l1,0v-1l1,.1v1l1,.3v-.7l1-.1v1.4l1-.1v-1.1l1-.8v1.1l1,.3v-.8l1,.1v1l1,.3v-.9l1-.1v1l1-.1v-1.2l1-.4v.7l1,.5v-1l1-.1v1.1l1,.4v-1.3l1-.1v1.3l1,.3v-1.2l1,.6v.9l1,.4v-1.1l1-.3v.8l1,.5v-1l1-.3v.7l1,.8v-1.4l1,0v1l1,.5v-.9l1-.3v1l1,.3v-.9l1,.2v.9l1,.2v-.8l1-.3v1.5l1-.3v-1.2l1,.2v.9l1,.5v-.8l1,0v.9l1,.3v-1.2l1,0v.9l1,.1v-.9l1,.3v1.2l1-.4v-1.1l1,0v1.7l1,0v-1l1-.1v.9l1-.2v-.8l1-.2v1.1l1-.1v-.8l1-.4v.8l1,.4v-.9l1,.3v1l1,.7v-1.2l1-.2v1.2l1,0v-1.3l1-.3v1.4l1-.1v-.8l1-.5v1.4l1,0v-1.2l1,0v.9l1,.4v-1.2l1,.1v1.1l1-.4v-1.2l1,.3v.9l1-.2v-1.1l1,.3v.9l1-.3v-.9l1,.2v.9l1,.5v-1.1l1,0v1.3l1-.2v-.7l1-.3v1l1-.3v-.9l1-.7v1.1l1,.3v-1.5l1-.1v1.4l1,0v-.8l1-.1v.8l1,.2v-.7l1,.1v.8l1,.5v-.8l1,.1v1l1-.1v-1.1l1-.6v1.2l1-.4v-.8l1,.2v1.1l1-.5v-.8l1,.1v.8l1-.1v-.7l1-.1v.8l1,1.2v-1.9l1,.1v1l1,.6v-1.1l1,.5v1.1l1-.1v-.9l1-.3v1.2l1-.2v-1.3l1,0v1l1,.2v-1l1,.5v.9l1,0v-1l1,.4v.8l1,.3v-1l1,.2v1.2l1-.5v-.7l1,0v.8l1,.2v-.8l1,.1v.8l1,0v-.9l1,.3v1.1l1,0v-.8l1,.6v1l1-.7v-1l1,.2v.8l1-.3v-.8l1,0v.9l1-.1v-1.1l1,.7v.7l1,.3v-1l1-.2v1.1l1-.2v-1.2l1,.4v.8l1,.4v-1.3l1,.8v1l1,.2v-1.1l1,.3v.9l1-.5v-1l1,.3v.8l1,.6v-1.2l1,.1v.9l1,.3v-1.3l1,.2v.7l1-.1v-.7l1,0v.9l1,.3v-.9l1-.1v1.2l1,1.2v-2.1l1-.7v1.2l1,0v-.7l1-.1v1.4l1,.1v-1.2l1,0v1l1,0v-1l1,.3v.9l1,.6v-1.2l1-.2v1.5l1-.4v-.9l1-.6v1.6l1,.2v-1.1l1-.2v.8l1,.3v-1.1l1-.2v1.3l1,.2v-1l1,0v.9l1,.3v-1l1-.4v1.1l1,0v-.8l1,0v1.1l1,.2v-1l1,.4v.8l1,0v-1.3l1,.7v1.1l1,.2v-1l1,.3v.8l1-.1v-.8l1-.5v1l1-.4v-.9l1,.2v1l1,.1v-.9l1,.4v.7l1,.2v-1.1l1,.1v.9l1-.3v-.8l1,0v.8l1,.1v-.8l1,0v.8l1,.5v-1l1,.5v1l1,.1v-1.1l1,.2v.8l1-.1v-.8l1,.4v1.1l1,0v-.9l1-.7v1.1l1-.3v-1l1,0v1.3l1,0v-.7l1,.3v1.3l1-.3v-.9l1,.5v.9l1-.7v-.9l1-.2v1l1-.1v-1.5l1,.5v.8l1,.3v-.8l1-.1v1.2l1-.1v-.9l1,.4v.9l1-.5v-.7l1,.1v1l1-.1v-.9l1-.3v1.7l1-.5v-.8l1,.1v1.3l1-.4v-1.1l1-.2v1.2l1,.1v-1.4l1,.5v.9l1-.4v-.7l1,0v.7l1,.4v-1.1l1,.2v1.4l1,0v-1.1l1-.1v1.3l1,.5v-1.1l1,.2v1l1-.1v-.8l1-.3v1l1,.2v-.6l1,.2v.8l1,.3v-.8l1-.3v.8l1,.4v-1.1l1,.3v.9l1,0v-.9l1,.4v.7l1,.4v-.9l1,.2v.9l1,.2v-.8l1-.1v1.1l1,0v-1l1,.5v1.1l1,.1v-1.5l1,.5v.9l1-.3v-.8l1,.2v1l1,.1v-.7l1,.3v1.1l1,15.9v-2.8l1,.6v2.4l1,1.9v-2l1,1.1v3.6l1-3v-2.2l1,1.3v1.9l1,1v-1.5l1-.8v1.7l1,1.4v-2.8l1-.3v1.6l1-.6v-1.8l1,1.6v2.4l1,.7v-3.7l1,.9v2.3l1,.5v-2.3l1,.7v2.7l1,.6v-2.4l1,.1v2.2l1-.4v-1.8l1,1.3v1.9l1,2.4v-2.1l1-.8v2.1l1-.5v-2.2l1,0v2.9l1-.3v-1.9l1-.2v2.3l1,1.7v-2l1-1.3v5.5l1-2.1v-3.2l1,1.4v4.8l1-2.5v-2.9l1-.8v3.4l1,1.5v-4.5l1,1.7v2.8l1-1.7v-1.8l1,.9v2l1,1.8v-2.8l1,1.1v2.3l1,.5v-2.1l1,1.1v1.8l1,1.3v-1.4l1-.5v1.6l1-.9v-2.1l1-.4v2.3l1,.9v-2.6l1-.3v2l1,1.1v-2l1,2.4v1.7l1-1.3v-2.2l1-1.1v2.6l1,2.5v-2l1-.9v3.2l1-1.6v-1.6l1,.4v1.9l1,.7v-1.8l1,.7v2.9l1,.1v-2.2l1-.9v2.2l1-1v-1.7l1,0v1.7l1,1.5v-2.3l1,.5v3.4l1,.1v-2.2l1,.8v1.9l1,1.4v-2.3l1,2.5v2.7l1-1.5v-1.4l1,0v2.2l1-2.1v-1.9l1-.4v2l1-.2v-2.4l1,1.5v2l1-.3v-1.7l1-.4v2.8l1,2.2v-2.7l1,1.7v1.2l1-1.7v-1.5l1-.3v2.8l1,.6v-1.9l1,2.1v1.7l1,.9v-1.6l1,.2v1.5l1,0v-1.3l1-2v2.8l1,0v-1.4l1,.3v3.2l1-.6v-2l1,.7v1.5l1,.9v-3.7l1,1.5v2.5l1-.2v-1.4l1,.3v2.8l1-.4v-2.2l1,1.2v1.7l1,1.9v-3.6l1,1.6v1.6l1,0v-1.8l1,.3v2.6l1,.9v-1.8l1-.4v1.8l1,1.6v-2.4l1,2.5v2l1-.2v-2.2l1-1v3.4l1-1.1v-1.8l1-.1v2.2l1,.1v-2.1l1,0v2l1,1v-2l1-1v2.4l1,1.6v-2.5l1,1.8v5.1l1-3.1v-1.8l1,1.4v1.5l1,.4v-2l1,.5v1.6l1-1v-2.1l1-.1v1.7l1-.8v-1.9l1,.3v1.9l1,.8v-2.3l1,2.7v2.1l1,.1v-2.2l1,.2v3.8l1-1.3v-2.9l1,.9v2l1-.3v-2.6l1,1.7v2.5l1,2.8v-2.4l1,.3v3.7l1-2.6v-3.1l1,.1v2.3l1,.8v-2.3l1-2.6v2.1l1-1.7v-1.8l1,.2v2.1l1-.3v-2l1-.9v1.7l1-.1v-2l1-.1v1.2l1-.4v-1.9l1-.8v1.6l1-.6v-2.3l1-.1v2.6l1-1.7v-2.2l1,1.9v1.5l1,1.7v-1.9l1,.7v2.1l1,.8v-2l1-1.3v2l1,1v-2.1l1,1.9v2l1,2.6v-2.9l1-1v3.1l1,2.8v-4l1-.5v2.3l1,1.3v-2.6l1-.4v2.5l1-.6v-1.4l1-.3v2l1,3.4v-3l1,1.4v4.8l1-2.6v-2.3l1-.2v1.3l1,.5v-2.3l1,.5v2l1,1.9v-2.1l1,1.1v2l1,1.6v-1.7l1-.8v1.9l1-2.2v-2.8l1-1.4v2.5l1-.1v-1.5l1,.1v2.5l1,4.1v-6.6l1-1.7v2.8l1-.7v-2.5l1,.6v1.6l1-.9v-2.2l1-1v1.8l1,.7v-1.7l1-.5v2.8l1,3v-5.6l1-1.7v2.9l1-.7v-2l1-.1v1.7l1,1.6v-3.2l1-1v4.9l1-4.1v-2.2l1,1.8v1.8l1,2.9v-3l1-2.1v2.2l1,.9v-2.8l1,1v1.6l1-.5v-2.3l1,.7v2l1,1.5v-1.9l1,0v2.3l1-.7v-1.9l1-.5v2.4l1-.3v-2.3l1,1v2.5l1-1.6v-1.6l1-.3v2l1,.1v-1.4l1-.3v2.2l1,.8v-2.5l1,1.2v1.9l1,.3v-2.4l1-1.8v1.5l1,.1v-1.9l1-.2v3l1,.4v-2.1l1,1.5v1.8l1,.1v-1.9l1-.1v1.5l1-1.1v-2.2l1,.9v2.6l1,0v-2.1l1-.9v2.4l1,3.3v-5.1l1,0v3.3l1-2.6v-1.6l1-1.4v2.2l1,1.9v-1.8l1,.1v2.4l1,1.8v-4.7l1,1.1v1.9l1,.6v-3.5l1,0v1.8l1-.1v-3.1l1,.8v3.1l1,.8v-1.6l1-1.2v3.1l1,.4v-2.1l1-.4v2.2l1-.2v-2.8l1,1.1v5.2l1-4.2v-2.4l1-.6v1.8l1,1.4v-2.5l1-.8v2.5l1-1.7v-1.5l1-.9v3.5l1,.2v-2.2l1,.8v2.6l1-.6v-2l1,.7v2.9l1,.6v-2.5l1-.1v1.5l1,1v-1.7l1-.1v2.6l1,1.8v-4.9l1,.9v1.9l1-.3v-2.4l1-.8v2.1l1,2v-2l1-1.7v1.5l1-.4v-3.5l1,2.7v2.6l1,2.4v-2.5l1-.3v2l1,.2v-2.3l1,.1v2.5l1-.6v-2.4l1-1.1v6.6l1-4.2v-2.6l1,1.6v1.6l1,1.5v-2.2l1,.4v1.4l1-.4v-2.6l1,1.3v1.8l1-.6v-1.4l1-.6v2.9l1,1.4v-2.1l1-1v3l1,.4v-2l1,.7v2.2l1,0v-2.1l1-.1v1.8l1,.6v-1.5l1-.6v1.9l1,.8v-1.6l1,.9v2.8l1-.4v-1.6l1-1.3v2.8l1-.3v-2.4l1,1.3v1.7l1,1v-1.7l1-1.9v2l1-1v-1.6l1,1.6v2.5l1-.1v-2l1-.8v2l1,.9v-1.7l1,.6v2.1l1-.2v-1.8l1-.7v1.8l1,.6v-2.3l1,.2v2.3l1-1.7v-2.6l1-1v2.6l1,4.2v-4.8l1-.6v2.9l1-1.7v-2.3l1-1.6v1.5l1,0v-3.1l1,1.8v3.2l1-.1v-2.5l1-.2v1.7l1-.2v-1.8l1-1.7v2.9l1,2.4v-3.1l1-2.6v4.2l1-1v-1.8l1-1.9v1.7l1-.6v-2.5l1,.7v2.3l1,5v-6.3l1-2.8v5.1l1-1.1v-1.6l1,.4v2.1l1-.2v-2.3l1,0v2.2l1,.2v-2.4l1-1.8v1.6l1,1.5v-2.1l1,0v1.3l1-1v-2.3l1,0v2.3l1,.1v-1.4l1-.4v2.6l1,5.4v-7.5l1,.2v5.6l1-3.4v-2.6l1-2.3v3.5l1-2.2v-1.9l1,0v1.3l1,1.6v-2.2l1,.5v2.2l1,.5v-2.6l1,2.7v4l1-2.2v-2.8l1,.5v2l1,1v-2.7l1,1.1v2.6l1,2.1v-2.5l1-1.7v3l1-1.9v-2.5l1,1.1v1.8l1,1v-1.4l1-.5v1.9l1,2.1v-2.9l1,.2v2.7l1,.5v-1.9l1,.9v2.8l1-1.3v-2.1l1-2.2v1.9l1,.3v-2.1l1,1.2v1.8l1,1.5v-2.8l1-2.1v2.4l1-.1v-1.8l1-.7v3.6l1-1.4v-2.5l1-1.9v2.4l1-1.4v-1.7l1,.7v2.5l1,.3v-1.8l1-1.4v2.8l1-1.1v-2.6l1,.5v4l1-2.3v-2.5l1-.1v2.2l1,1.4v-2.2l1-.5v2l1-.9v-2l1-.9v1.8l1,.2v-2.2l1,.6v2.1" stroke="#e81010" stroke-width="1.5"/><path d="M440.5,760v1.1l1-2.1v-.8l1-1.5v.8l1-1.3v-.9l1,.2v.7l1-1.1v-.9l1-2v1.2l1-2.2v-.9l1-1.5v1l1-.8v-1l1,.2v1.3l1-.9v-1.9l1-.6v1l1-1.1v-.9l1-.3v.7l1-.9v-1.2l1-1.3v1.1l1-.4v-1.7l1-2v1l1-.8v-1.2l1-.7v1.6l1-1.3v-1l1-.2v1.8l1-.9v-.7l1-.3v1.2l1-1v-2.1l1-.1v1.2l1-1.2v-.8l1,.3v.9l1-1.4v-1.1l1-1.2v1.5l1-4.2v-1l1-.5v1.5l1-1.8v-1.3l1-.9v1.1l1-1.2v-.7l1-.5v.9l1-.5v-.9l1,1.1v.7l1-1v-1.2l1,1.8v.8l1-.2v-1.4l1-2.1v1.5l1-1.1v-.8l1-.1v1l1,.4v-1.3l1-1.7v1.2l1-1.1v-1.7l1,.7v1.2l1,1v-1.7l1,.3v1l1,.1v-.8l1-1v1.1l1-.1v-1.1l1-.6v1l1-1.8v-.7l1,1.3v1.2l1,.7v-1.1l1-2.1v.8l1-1.7v-.7l1-.6v1.4l1-1.8v-.9l1,1.2v1.1l1-.6v-.8l1,.2v1.3l1,1.5v-.8l1-.3v.8l1,0v-1.2l1,1.7v1.6l1-1.4v-.8l1-1v1.2l1-.3v-1.5l1-.5v.9l1-.1v-1l1-1v1.3l1-2.4v-1.5l1-1.3v1.9l1,.3v-1.2l1-.2v1l1,.9v-1.5l1,.4v1l1-.8v-1.2l1,1.2v1.3l1-1.2v-.8l1-1.3v1.3l1,.2v-.8l1-1.4v1.2l1-1.3v-1l1-.7v1.6l1-1.2v-1.9l1,1.1v1.6l1-.1v-1.6l1,1v1.1l1,.3v-1.5l1,.9v1.3l1-.8v-1.4l1,.9v.9l1,.2v-.9l1-.9v.9l1-.8v-1l1-1.3v1.3l1,1.4v-1.3l1,.9v1.4l1,.8v-.9l1-1.1v1.1l1,1v-1l1,0v.9l1,.1v-1.1l1-.3v.8l1,0v-.8l1,0v1.2l1-.2v-1.7l1,.2v1.8l1-.7v-1.1l1-.1v1l1,.8v-1.1l1,.5v1.3l1,.1v-1l1-1v1.8l1-1.1v-1.2l1,.2v1.4l1,.6v-1.8l1,.9v1.2l1-.3v-1l1,0v.9l1,.4v-.6l1,.4v1l1,.1v-1.2l1-.3v1.3l1-.3v-1l1,0v1.2l1,0v-1.2l1,.3v1.1l1,.1v-.9l1,.6v1l1-.1v-1.3l1-.1v1.3l1,0v-1.1l1,.6v1l1,.1v-1.3l1,.4v.7l1,.1v-1l1,.2v.8l1,.3v-1.4l1,.5v1l1,.3v-1l1,0v1.1l1,.5v-1l1-.3v1.4l1-.2v-.7l1-.6v1.2l1,.1v-1.1l1-.1v1.1l1,0v-.7l1-.4v1.7l1-.1v-1l1-.4v1l1,.4v-1.4l1-.4v1l1,.4v-.9l1,.3v1.1l1,.1v-.8l1,.4v1l1,.3v-.8l1,0v1.4l1,.2v-1.1l1,.2v1.1l1,.7v-1.6l1-.3v1.1l1-.5v-1.4l1-.3v1.1l1,.2v-1l1,.1v1.2l1,.7v-1.7l1-.4v1.5l1-.6v-1l1,.7v.7l1,.1v-1.1l1,.3v1.2l1-.7v-1.4l1-.2v1.1l1-.9v-.9l1,0v.9l1,.8v-1.3l1,.4v1.4l1,0v-1.7l1,.1v.7l1,.1v-1.1l1,.2v.8l1,.3v-1l1-.2v1.1l1-.3v-1l1-.1v1.3l1-.1v-.9l1-.2v1l1,.8v-1.5l1,0v1.2l1-.3v-1.1l1,.1v.9l1,.4v-1.2l1-.1v1.5l1-.8v-1.2l1,.3v1l1,.1v-1.2l1,.5v.9l1,.1v-.7l1,0v1.5l1-.4v-.7l1,.1v.8l1-.4v-1.5l1,.1v1.1l1-.3v-1.1l1-.2v1.6l1-.7v-1l1-.5v1.6l1,.4v-1.3l1-.1v.9l1,0v-1.2l1,.1v1l1-.7v-1.5l1,.6v1.2l1-.8v-1l1,.1v1.8l1-1v-1l1,.5v1l1-.3v-.9l1,.4v.7l1-.4v-1l1-.2v1.4l1-.8v-1.1l1,.2v1.2l1-.3v-.7l1,.1v1l1-.2v-.8l1-.6v1.9l1-.3v-1l1,.2v1.4l1-.2v-1.1l1-.7v1.4l1-.7v-1.1l1-.5v1.2l1,.1v-.9l1-.7v1.3l1,.3v-.9l1,.5v1.3l1,0v-1.1l1-.1v.9l1,.5v-1.5l1,.3v.9l1,.3v-1l1-.1v1.2l1-.1v-.9l1,.4v.9l1,1.7v-2.5l1,.7v.8l1-1v-.7l1-.8v2.3l1,.1v-1.3l1,.4v1.3l1-.7v-.9l1-.1v.8l1,.8v-1.2l1-.5v1.1l1,0v-1.5l1-.3v1.1l1,.2v-.9l1,.3v1.1l1,.3v-1.3l1-.3v.7l1,.2v-1.1l1,0v.9l1-.6v-.8l1-.5v1.1l1,.7v-1.5l1,.5v1.2l1,0v-1.3l1-.2v1.4l1-.3v-.8l1,.1v.9l1,.4v-.7l1-.6v1.4l1,.2v-1.4l1,.6v1.1l1-.3v-1.8l1,.4v.9l1,.6v-2.1l1,.9v.8l1-.2v-1.3l1-.2v1.1l1-.7v-1.3l1,1.2v1.2l1,.5v-1.5l1-.6v2.6l1-1.4v-.8l1,0v1.2l1,.2v-1.2l1-.2v1.2l1,.4v-1.9l1-.1v1.3l1,.1v-1.5l1-.2v1.5l1,.1v-1l1-.7v.7l1-.4v-1l1-.6v1.6l1,.5v-.9l1-1v1.7l1,.5v-1.4l1-1.1v1.7l1,.1v-1.1l1,.6v1l1,.4v-1.1l1,.4v1.4l1-.5v-1.4l1,.1v.8l1,.5v-.7l1-.3v1.2l1,1.3v-1.4l1,.6v1.1l1,0v-1l1-.4v1l1-.9v-.8l1,.2v1.2l1-.3v-1.3l1,.9v.7l1,0v-.7l1-.4v1.2l1-.1v-1.4l1,.1v1l1,.7v-1.7l1,.8v1.3l1-.2v-1.2l1,0v1.2l1-.1v-1l1,.3v1.1l1,0v-.9l1-.4v.9l1-.4v-1l1,0v.8l1,.2v-1.3l1,.9v1l1,.1v-1.4l1,.7v1.2l1,.1v-2l1,.4v1.2l1-.2v-1.4l1,.5v.8l1,.1v-.7l1-.5v.8l1,.3v-1.1l1,0v1l1,.2v-.8l1-.4v1.5l1-.9v-.9l1-.5v1.3l1-.3v-1.1l1,.1v1.1l1,.8v-1.3l1,.5v1.3l1-.6v-.8l1-.1v1.2l1,.3v-.9l1,.1v1l1,.6v-2l1-.1v1.5l1,.2v-1.3l1-.1v1.4l1-.1v-1l1,.1v1l1-.3v-.9l1-.5v1.3l1,.5v-.9l1,.3v1l1,.5v-1.3l1-.3v1.2l1,.3v-1.1l1-.9v1.1l1,.2v-1.1l1-1.1v1.8l1,1.1v-1.4l1-.2v.8l1,.3v-1l1,.3v1.2l1,.4v-1.1l1,.2v1.1l1,.1v-1.6l1,.4v1.1l1,0v-1.6l1,.5v1l1,.1v-1.6l1,.4v1.1l1-.3v-.8l1,.1v1.2l1-.6v-1.1l1-.1v.7l1,.5v-1.7l1-.3v.9l1,1.1v-1.4l1-.1v1.8l1,.3v-1.3l1-.2v1.4l1-.2v-1l1-.1v1.1l1,.3v-.8l1,0v1.1l1-.4v-1.1l1,.1v1.1l1,.1v-.9l1,.1v.8l1-.2v-1l1-.6v1.2l1,0v-.9l1,0v1.6l1,.4v-1l1-.5v1.1l1,.3v-1.5l1,.2v1l1-.5v-.7l1-.2v1.8l1-.6v-1.2l1-.1v1.3l1,.2v-1.1l1,.2v1.2l1,.5v-1.3l1,.4v1.6l1-.5v-.9l1-.2v1.3l1,.2v-.8l1,.1v1.2l1-.6v-1.1l1,.2v.7l1,0v-.8l1,.6v1.2l1-.5v-1l1,.6v.9l1-.6v-1.2l1-.1v1.5l1-.8v-.8l1,.2v1l1,.2v-1.1l1,.1v1l1,.1v-1.3l1,.3v1l1-.3v-.9l1,0v1.1l1,.1v-.9l1-.1v.8l1,.1v-1.1l1-.9v.9l1,1.1v-.9l1,.5v1.1l1,.8v-2.3l1,0v1l1,0v-1l1-.5v1.1l1,.3v-1l1,.2v1.1l1-.3v-1l1-.4v.9l1,.7v-.9l1-.2v1.4l1,0v-1.3l1-.3v1.1l1,0v-.7l1-.2v1.1l1,0v-.9l1-.4v1.1l1,.6v-2l1,.3v1.7l1-.6v-1.3l1,0v1.2l1-.3v-1l1-.1v1.8l1-.8v-1.6l1,.3v1.6l1-.7v-1l1,.5v1.2l1-.4v-1l1,.9v.8l1-.2v-.8l1,.4v1.3l1-.4v-1.1l1,.2v1.3l1-.3v-1.5l1-.2v1.1l1-.4v-1.5l1,.9v1.4l1-.2v-1.4l1,.5v1l1-.3v-1l1,.7v1.4l1,.7v-1.9l1-.4v1.6l1,0v-1.1l1,.2v1l1,.4v-1.1l1,.3v1.2l1,0v-1.1l1,0v.8l1,.2v-.6l1-.3v.9l1,.1v-1.2l1-.9v2.2l1-.6v-1.2l1-.5v1.3l1-.4v-.8l1-.2v.9l1,.3v-1l1,.4v.9l1-.1v-.8l1-.6v1.4l1,0v-.9l1-.1v1.5l1-.9v-1l1,.2v1.5l1,.4v-1.2l1,.1v1.3l1-.2v-1.2l1,.4v.8l1-.3v-.9l1-.2v1.2l1,.3v-1.4l1,.4v.8l1,.4v-.8l1-.6v1.1l1,0v-.9l1,.1v1.3l1,1.1v-1.9l1,.5v.8l1,0v-1l1-.4v1.3l1-.4v-.7l1,.1v.9l1-.1v-1l1-.1v.9l1,.2v-1.2l1,.1v1.2l1,.3v-.7l1-.3v1l1,.6v-1.5l1,.2v1.1l1-.1v-.9l1-.5v1.4l1-.2v-1.6l1,.2v1.1l1,.1v-1.5l1,.8v1.5l1,.2v-1.2l1-.6v1.2l1-.8v-1.1l1,.1v1.4l1,.5v-.9l1,.1v.7l1,1.7v-1.9l1-1.5v1.9l1-.2v-1.3l1,0v1.4l1-.1v-.9l1,.1v.9l1,1.2v-2.1l1,.4v1.3l1-.3v-.9l1,.1v1.1l1-.2v-.7l1,0v1.5l1-.3v-.8l1,.7v.8l1,0v-.9l1,.1v.9l1,.4v-1.7l1,.1v1.8l1-.1v-1.3l1,0v1.5l1-.4v-1l1,.8v1.1l1-.1v-.8l1,.2v.9l1-.3v-.8l1,0v1.1l1-.2v-1.4l1,.2v1.1l1,.4v-1.2l1,.6v1.9l1-.9v-1.3l1,.6v1.1l1,.4v-1.1l1,.4v.9l1,.7v-1.6l1-.2v1.3l1-.3v-1l1-.1v.7l1,.5v-1.6l1,.1v.9l1,.7v-1.5l1,.2v1l1,.2v-1.3l1,.8v1.5l1-.4v-1l1,0v.9l1,.4v-1.4l1-.4v1l1-.5v-1l1,.7v1.3l1,.5v-.9l1-.5v1.1l1,.1v-1l1,.1v.9l1,1.4v-1.4l1,.3v1.8l1-1.2v-1l1-.9v1.5l1-.4v-1l1-.3v1.4l1-.2v-1.2l1-.5v1.8l1,.4v-1.3l1,.4v1l1-.1v-1.2l1,.3v1.2l1,.3v-.9l1-.2v1.3l1-.3v-1.4l1-.8v1.9l1,.8v-1.8l1-.1v1.3l1,.2v-1.6l1,0v1l1-.1v-.8l1-.7v1.2l1,.4v-1.2l1-.3v.7l1,.4v-1l1-.5v.9l1,.3v-.8l1-.6v1.2l1,.3v-.9l1,.6v1.1l1-.3v-1.1l1,.4v1.6l1-.4v-1.5l1,.1v1.4l1-.4v-1.2l1,0v1l1,.7v-1.3l1,.9v.9l1,.5v-1.6l1,.1v.9l1,.2v-1l1,.1v.9l1-.3v-.8l1-.2v1.2l1,.2v-1.2l1-.4v.9l1,0v-1.2l1,.3v.8l1,1.2v-2l1,.7v.9l1,0v-1.6l1,.6v.9l1,.1v-1.3l1,.4v.7l1-.2v-1l1,0v1.1l1,1v-1.6l1,0v2.5l1-.8v-.9l1,0v.9l1,.3v-1.1l1-.1v1.4l1,.1v-1.4l1-.1v.9l1,.2v-.9l1-.3v1.1l1,0v-1.4l1,0v1.2l1,0v-1.1l1,.8v1.1l1,.2v-1.3l1,.5v.9l1-.5v-.7l1,.5v1l1,.5v-1.5l1,.8v1.1l1,.7v-1.2l1-.7v1.1l1-.2v-.9l1-.2v.9l1-.4v-.6l1-.2v1.2l1,1.2v-1.8l1,.3v1l1-.3v-1.2l1,.1v1.3l1-1v-.7l1,.2v.8l1,.3v-1.3l1,.4v1.4l1-.2v-.9l1,.4v1l1,.4v-1.7l1-.2v1.4l1-.2v-1l1-.5v.8l1-.1v-.8l1,0v1.2l1,.6v-1.5l1,.3v1.7l1-.2v-1l1-.5v1.2l1,.2v-1.6l1,.4v1l1,.7v-1.3l1-.2v1.3l1,.2v-1.2l1,.1v1.5l1,.5v-1.3l1-.1v.8l1-.5v-1.1l1,.5v1.3l1,.4v-1.4l1,.1v1.5l1-1.2v-.7l1-.8v2.1l1,.5v-1.6l1,.3v.9l1-.2v-.8l1-.1v1l1-.1v-.9l1-.1v1.3l1-.2v-.9l1,.4v.8l1-.4v-.7l1-.2v1.3l1,.4v-.9l1,.3v1.3l1-.1v-1.4l1,.3v1l1-1.1v-1.6l1,.7v.7l1,.3v-1.1l1,.8v1.2l1-.2v-.8l1-.1v1.2l1-.2v-.8l1,.4v1.3l1,0v-1l1,.3v.9l1,.1v-1.2l1-.3v.9l1,.2v-1.3l1,0v1.2l1,.3v-1.1l1,0v1.2l1-.3v-1l1,.1v1.4l1-.2v-1.5l1,.5v1.1l1,.9v-1l1-.6v1.8l1-.6v-1.9l1,.3v1.1l1-.4v-1.3l1,.9v.8l1,.6v-1.4l1,.2v1.3l1-.2v-1.2l1-.2v1l1,.2v-1.6l1,.7v1.8l1-.9v-1l1-.1v1.4l1-.1v-1.1l1-.6v1.7l1,.3v-1l1,0v1.2l1,.4v-1l1,.1v.9l1,.9v-.9l1-.2v1.4l1-.2v-.7l1-.5v1l1-.1v-1.5l1,.1v.9l1,.6v-1.6l1,1.4v.9l1-.6v-.8l1-.5v1.8l1-1.7v-.7l1,1.3v1.4l1-.3v-1.3l1,.5v1.1l1-.2v-1.2l1-.2v1.9l1-.6v-.8l1-.3v1.1l1-.1v-1.6l1,1v1l1,0v-1.3l1,.5v.9l1-.2v-1l1,.2v1l1-.2v-1l1-.6v1l1,.7v-.8l1-.3v1.5l1,0v-1.2l1-.1v1.1l1-.5v-1.1l1,0v1l1,1.1v-1.6l1,.1v1.7l1,.1v-2.1l1-.5v1.6l1,.8v-1.5l1,1.2v1l1-.5v-1l1-.6v.9l1-.4v-.8l1,.2v1.1l1,.5v-1.5l1-.1v1.4l1,.3v-1.3l1,0v1.3l1-.7v-1.1l1-.2v.8l1-.2v-.8l1,.2v1.3l1,.3v-1.1l1,.1v1.1l1,.2v-1.7l1-.7v1.8l1-.1v-1.1l1,0v.7l1,0v-1l1-.4v1.2l1-.7v-.7l1,.4v.8l1,.7v-1.6l1,1.2v.8l1,.6v-1.4l1,.5v1.3l1,.3v-1.5l1-.5v1.3l1,.4v-1.5l1,.6v1.1l1-.3v-1.2l1,.3v.8l1,.7v-1.4l1,.4v1.6l1-.2v-1l1,.4v.9l1,0v-.8l1-.2v.8l1,.2v-1.1l1-.1v1.2l1-.3v-.9l1-.2v1.1l1,.7v-1.4l1,0v1l1,.4v-1.2l1,.3v1l1,.6v-1.1l1-.6v1l1-.3v-.7l1,.2v.7l1,1v-1.2l1-.2v1.6l1,.1v-.9l1,.2v1.1l1-.3v-1.6l1,.8v1.1l1-.2v-1l1,0v.8l1-.3v-1.1l1,.2v1l1-.2v-1.4l1-.2v1.3l1,.5v-.9l1,0v1.4l1,.1v-1.1l1-.5v1.2l1-.2v-1l1-.6v1.5l1,.8v-1.4l1,0v.9l1,.5v-1.3l1,0v1.4l1,.4v-.7l1,.1v.8l1,.4v-.7l1-.8v1.2l1,.3v-1.3l1,.5v1.9l1,.1v-1.2l1-.2v1.1l1-.4v-1.3l1,.5v1l1,.1v-.7l1-.2v1.2l1,.1v-1.4l1,.9v1l1-.2v-1.5l1,0v1.1l1-.7v-1.6l1,.3v1.3l1,.4v-1.2l1-.3v1.6l1,.1v-1.2l1-.5v1.1l1,.1v-1l1,.4v.9l1,.1v-1l1,.3v1.5l1-.8v-.9l1,.1v1.1l1-.2v-.8l1-.4v1.3l1,.1v-1l1-.4v1.4l1,.4v-.9l1-.1v.8l1,.7v-1.2l1,.2v1.4l1,1.1v-1.7l1-.3v1.6l1,.5v-1.5l1-.5v1.1l1,.1v-1.1l1,.2v1.1l1,.4v-1l1-.5v1.2l1,.6v-1.7l1,.4v.8l1,1.1v-1.4l1,0v1l1,.7v-2.2l1,.2v1.3l1-.4v-.7l1-.1v1.1l1,.2v-.7l1-.1v.8l1,.3v-1.1l1-.1v.7l1-.1v-1.2l1-.1v1.4l1,.2v-.7l1,0v1.4l1-.3v-1.3l1-.2v1l1,.2v-1.8l1,1v.9l1-.1v-.7l1-.2v.9l1,.4v-1.5l1,0v1.6l1,.4v-1.6l1,0v1.2l1,.6v-1.4l1,.4v.9l1,.5v-.9l1-.1v.7l1,.1v-.9l1,.3v1.1l1-.3v-.9l1-.5v1.6l1,.2v-1l1,.1v.9l1,1.2v-1.5l1-.1v1.4l1,.3v-2.2l1,.2v.7l1-.3v-1l1,.3v1.8l1-.4v-1.2l1,.1v.9l1,.2v-1.2l1,.1v.8l1,.9v-1.4l1,.5v1.1l1-.1v-1.3l1,.8v.8l1,.4v-1.4l1,.5v2l1-.1v-.9l1,.7v1.4l1,9v-4.9l1-2v11.5l1-2.6v-5.7l1,.8v3.3l1,1.8v-7.9l1,2.7v10l1-3.2v-6.2l1,.3v4.7l1,.6v-5.2l1-2.7v6.1l1,.9v-3.2l1-.5v5.4l1-2.5v-5.7l1,2.2v8.5l1-.6v-6.6l1,1.3v4.1l1,4.2v-5.4l1-.3v2.5l1,1.6v-5l1-3.5v5.7l1,.9v-5.2l1,.1v4.7l1,3.5v-6.5l1,.5v3.6l1,3.1v-3.2l1,.9v3.2l1,1.1v-3.3l1-.9v3.1l1-.9v-4.9l1,.9v5.2l1,2.8v-6.2l1,1v4.4l1,8.2v-9.7l1,.8v3.8l1-2.5v-3.1l1-1.7v7.4l1,1.1v-9.6l1-.2v7.4l1-1.5v-3.7l1,1.3v4.1l1-3.3v-3.2l1-1.5v6.3l1,1.5v-4.7l1-.5v7.2l1,1.5v-5.4l1,.6v3.6l1,1.2v-3.3l1,0v6.2l1,5.2v-13l1-3.9v5.4l1,4.1v-6.5l1,.8v3.9l1-1.6v-3.5l1,2.7v3.9l1,1.3v-3.6l1-1.3v8.8l1-5v-6.4l1,1.9v5.6l1,2.2v-3.8l1-1.5v8.4l1-4v-4.4l1-.7v5.8l1-.3v-5.4l1-1.2v3.7l1-.7v-3.8l1-2.3v4.1l1,.6v-4.8l1,.5v3.7l1,1.8v-3.3l1-1.8v4.5l1,3.5v-7.7l1,4.8v3.4l1,1.5v-4.8l1,.5v3.5l1,3v-4l1,.3v4.4l1-.1v-4.4l1-.3v5.9l1,3.6v-3.7l1-2.2v4.7l1-.3v-3.6l1,1.1v4.3l1-1.2v-2.7l1-5.2v5l1,1v-5.8l1,5v3.3l1,2.6v-5.2l1,.3v7.1l1,5.9v-9l1,.5v5.7l1-5.9v-3.9l1-4.6v3.4l1,1.1v-5.5l1,4.9v11.6l1-.2v-7.8l1,2.1v4.8l1-3.1v-5.7l1,2.5v4.1l1,2.4v-4l1-1.9v4.5l1,.6v-2.9l1-1.8v3.7l1,1.2v-4.2l1,2.8v3.5l1-1.7v-5.1l1,1.6v3.4l1-.4v-5.3l1,1.4v4.5l1,3.8v-6.6l1-2.2v3.7l1,1.1v-5.6l1,6.6v4.5l1,1v-5.1l1,.3v2.9l1,3.8v-5.8l1,1.8v8.5l1-4v-7.8l1-1.8v4.5l1-1.8v-5.1l1,2.4v4.1l1,4.1v-9.4l1,2.8v5.2l1-.8v-3.1l1,.5v3.7l1,7.3v-10.2l1-.2v6.4l1-1.4v-4.7l1,6.5v8l1-3.9v-5.7l1,.5v5.5l1-1.8v-3l1-4.1v4.7l1,.9v-3l1-4.3v2.6l1-.6v-4.5l1-.8v7.1l1-3v-5.6l1-.4v6.9l1,7.1v-10.8l1-.7v9.5l1-2.9v-6.9l1,4.5v5.7l1-5.4v-4.3l1,.6v2.3l1,0v-3.1l1-3.6v4.5l1,.6v-5.4l1,5.2v6.1l1,4.4v-9l1-2.4v4.8l1-.2v-5.3l1-2.3v3.8l1,1.6v-5l1,5.9v3.6l1-.6v-4.6l1,2.2v3.4l1,3.3v-4.7l1-1.7v11.7l1-5.6v-5.1l1,1.1v7.6l1-5.1v-6.6l1-.8v6.8l1,4v-6.2l1-1.1v6.4l1-3.2v-5.3l1,1.8v4l1,4.9v-8.2l1,5v9.6l1-1.5v-5.5l1,.5v3.3l1-.9v-4.3l1,.7v7.9l1-6.1v-7.1l1-1.7v3.9l1,1.7v-5.2l1,2.1v3.7l1-3.7v-2.9l1-1.1v6.7l1,.9v-9l1,1.7v6.1l1-.9v-4.3l1-.2v4l1,4v-7.3l1-.2v3.6l1-1.6v-3l1-2.3v3.9l1,0v-4.7l1-1.9v3.7l1-.2v-3.6l1,1.5v3.9l1,5.2v-4.1l1,1.7v4.2l1-3v-2.8l1-8.3v7l1-2.6v-5l1,2.1v3.5l1,4.8v-3.4l1,.2v8.7l1-3.9v-7.7l1,2.8v3.6l1,1.2v-3.3l1,2.4v2.5l1,3.3v-2.1l1-2.5v5l1,1.5v-9.7l1,.6v4.2l1-1.6v-3.5l1-2.4v6.3l1,2.1v-2.8l1,2.3v4.1l1-1.1v-5.2l1-.8v3.4l1-.5v-3.2l1-1.7v4.6l1-1v-5.5l1,1.2v6.3l1,4.8v-8.7l1-.5v4.1l1,1.4v-9.1l1,4.8v3l1-.6v-5.9l1-2.4v9.4l1-2.4v-8.4l1,6.5v7.4l1,2v-7.9l1,.6v4.6l1-2.1v-3.1l1-5.8v9.5l1-6.1v-7l1,5v4.1l1,2.4v-4.8l1,1.8v3l1,1.9v-4l1-1.1v4.5l1,.7v-2.6l1,.9v3.1l1,.4v-4.8l1-1.3v4.4l1-1.6v-3.9l1-3.2v2.6l1,4.3v-4.6l1-.3v3.4l1-1.7v-2.2l1,1.4v3.4l1,2.8v-4.2l1,.8v4.4l1,.6v-4l1-1.8v4.1l1,.6v-4.8l1-1.3v3.7l1,.4v-2.9l1-5.7v5.2l1-.7v-6.7l1,1.7v5l1,2.5v-4l1,.2v5.9l1-.9v-3.3l1,3.1v3.2l1-1.6v-3.5l1,.4v4.4l1-.2v-3.3l1-2.2v3.2l1-.9v-4.8l1-.8v3l1,2.2v-5.9l1,5.5v3l1,2.7v-4.6l1-.6v7.8l1-.1v-9.3l1,.5v6l1,2.5v-8.9l1,1.1v4.1l1,1.5v-4.5l1-.1v6.7l1-2.6v-5.3l1,3.7v5.1l1-3.3v-3.7l1-2.2v4.8l1,2.3v-4.4l1-1.4v6.3l1,5.2v-8.8l1,1.1v4.4l1-1.6v-4l1-.3v9.9l1-3.4v-3.9l1-.4v3.1l1,2.1v-7.8l1,1.4v5.9l1,1v-3.4l1,1.3v5.6l1,1.6v-6.6l1-2.6v6.4l1,1.2v-9.6l1-.8v4.3l1,4.2v-6.5l1-1v9.2l1-5.2v-3.6l1,.4v6.4l1-3.4v-4.7l1-3.2v4.3l1,1.4v-2.8l1-1.4v3.8l1-1.9v-2.7l1-2.5v5.3l1,7.2v-9.5l1,2.2v10.8l1-7.5v-4.9l1,2.5v4.6l1,1.6v-3.9l1-2v6.5l1-3v-7l1-1.9v3.7l1,2v-4.2l1-1.3v3.5l1-1.3v-4.2l1-2.5v3.1l1-.5v-3.1l1-.4v3.8l1,1.9v-3.7l1,2.7v4.9l1,5.4v-8l1-1.2v6.8l1-1.3v-6.3l1,2.1v4.1l1-3.3v-5.1l1,1.4v4.7l1-2.6v-3.4l1,1.6v3.5l1,1.4v-6.2l1,.5v8.9l1-4.8v-5.8l1,.8v4.4l1-1.8v-3.1l1-4.7v7.2l1,1.5v-3.9l1,1.9v3.2l1,3v-4.3l1,.5v4.4l1-1v-5.4l1,1v3.8l1-3.8v-5.6l1,.5v5.4l1-1.3v-6l1,0v5.8l1-.7v-5.2l1,3.3v5.5l1,1.2v-2.9l1-1.7v6.9l1-.5v-3.9l1-1.3v6l1,.3v-6.9l1,2.1v4.8l1-2.9v-3.5l1,3.4v6.1l1,3.8v-9.8l1,1.6v4.8l1,4.3v-5.5l1-1.4v4.4l1-5.7v-5.7l1,4v3.6l1,.9v-6.3l1,.1v4.7l1-.8v-4.3l1,.2v3.9l1-2.2v-4.2l1,.9v3.1l1-.4v-4l1-.6v5.2l1,1.7v-6.2l1,2v8.9l1-4.4v-3.9l1-1.5v7.6l1-2.8v-4.6l1-5.3v3.9l1-1.5v-2.8l1,1.3v4.2l1,3.2v-4.7l1,1.5v8.8l1-2.2v-7.3l1-2.8v7.9" stroke="#1414d8" stroke-width="1.8"/><path d="M440.5,803.9v1.5l1-.7v-1l1-.7v1.1l1-.3v-1.2l1-1v.8l1-1.8v-.9l1-2.1v1.1l1-.9v-1.2l1-1.1v1.3l1-1.3v-1l1-1.3v1.4l1-1.7v-1l1-1v.8l1-1v-1.6l1-.7v1l1-1.3v-1.1l1-.6v1.1l1-1.5v-.7l1-1.2v.9l1-.8v-1.3l1-1.6v1.6l1-1v-.9l1-.9v1.1l1-1.7v-1.3l1-.7v1.2l1-.7v-.8l1-1.2v.8l1-1v-1.2l1-.7v.8l1-.2v-1.6l1-1.7v1.5l1-1.6v-.9l1-1v1l1-1.2v-.7l1-1.8v1.9l1-1.2v-.9l1-1.7v1.3l1,.1v-1.7l1-.7v1.1l1,.2v-1.8l1-.8v.7l1-.5v-1.2l1-.7v1.7l1-1.1v-1l1-.3v1.2l1-.4v-1.2l1-.9v1.6l1-.8v-.9l1,0v.9l1,0v-.9l1-.1v.9l1-.2v-1.4l1,.2v1l1-.4v-1.1l1-.2v.9l1-.2v-1.1l1-.2v.8l1-.6v-1.2l1-.8v1.9l1-.2v-1.4l1-.5v1.3l1-.5v-1l1-.8v1.9l1-.2v-1.3l1,.4v1.3l1-.6v-1.5l1-.8v1.4l1-.3v-1.3l1-.5v1.8l1-.4v-1.1l1,.3v1l1,.1v-1.2l1-.7v.9l1-.8v-1.3l1-.6v1l1,.2v-1.3l1-.5v.8l1,.2v-1.4l1-.5v.8l1,.3v-1.5l1-.6v1.2l1,0v-1.6l1,.1v1l1,.3v-.9l1-.6v1.4l1,.1v-1.7l1-1.3v1.2l1,.7v-1.5l1-.1v1.5l1-.2v-1l1-.3v1.4l1-.6v-1l1-1v1.2l1,.2v-.9l1-.4v.9l1,1v-2.2l1,.8v1l1,.3v-1.5l1-.8v.8l1,.1v-1l1,0v1.1l1,.2v-.9l1-.3v1.6l1-.5v-1l1-.3v1.2l1-.1v-1.2l1-.1v1.3l1-.2v-1.2l1,.4v1.3l1-.6v-.7l1-.1v1.3l1,.6v-1.3l1-.9v2.1l1-.5v-.7l1-.2v1.2l1-.4v-1.2l1,.3v1.3l1,.1v-1.6l1-.4v1.1l1,.3v-1.3l1,.2v.8l1,.5v-1.8l1,0v.8l1-.4v-1.2l1,.5v1.4l1,.4v-.8l1,.3v1.4l1-1v-.9l1-.7v1.1l1,.5v-1.1l1,.5v.9l1,.3v-1l1,.4v.8l1-.9v-.9l1,.5v1.1l1-.2v-1.2l1,0v1.3l1,.6v-1.2l1,.7v1.2l1-.8v-.8l1-.1v2.3l1-.5v-1.4l1,.8v.8l1,.2v-.7l1,.1v1.2l1-.3v-1.3l1-.1v1.3l1,0v-.9l1-.4v1.2l1,.7v-1l1,.3v.8l1,.2v-1.4l1,.3v1.3l1-.2v-1.2l1,.1v.9l1,.5v-1.2l1,.5v1l1-.2v-.7l1-.2v1.1l1-.1v-1.1l1,.3v1l1,.2v-.9l1,.3v1.7l1,0v-1l1-.3v1.7l1,.6v-1.1l1-.2v1.1l1,.5v-1l1-.4v.7l1,.1v-1.5l1,.3v1.1l1-.5v-.9l1,0v.8l1,0v-1.3l1,.3v.8l1-.2v-1.1l1,0v1.4l1,.1v-1.1l1,.3v1.5l1-.5v-1l1-.2v1.2l1-.2v-1l1,.2v.7l1,0v-1l1-.6v1.6l1-.5v-.8l1,0v.7l1,.6v-1.1l1-.3v1.1l1-.9v-1l1-.4v1.4l1,.2v-.9l1,.2v1.1l1,.1v-1.1l1,0v.8l1-.2v-.9l1-.3v1.1l1-.4v-1.1l1,0v1l1,.4v-1l1,.5v1.1l1,.2v-1.2l1,.2v1.2l1-.1v-1.5l1,.6v.8l1,0v-1.4l1-.1v1l1-.2v-.8l1-.5v.9l1,.4v-1.1l1,0v1.3l1,.3v-1.4l1,0v.9l1-.5v-1l1-.4v1.5l1,.3v-1.2l1,.2v1l1-.2v-.7l1-.3v.9l1-.2v-1.5l1,.2v1l1,0v-1.1l1-.1v1.7l1,.1v-.9l1-.6v.9l1-.2v-.7l1-.7v1.1l1,.2v-.8l1,0v.9l1-.3v-.7l1-.4v1l1-.6v-1l1,.7v.9l1,.4v-1.2l1-.4v2l1-1.5v-1.3l1,.5v1.1l1,.1v-1.1l1,.5v1.1l1-.2v-.8l1-.6v1l1,.4v-1.3l1,.2v1.2l1,.4v-.7l1-.9v1.2l1-.1v-.9l1-.8v1.2l1,.2v-.8l1,.1v1.5l1-.7v-1.4l1-.2v.9l1,.5v-1.1l1-.3v1.2l1,.3v-1.1l1-1.2v1.7l1,.2v-1.2l1-.5v1.3l1,.6v-1.1l1-.4v1.2l1-.1v-1.7l1,.2v.9l1,0v-1.2l1,.5v.7l1,.3v-1l1-.4v1l1,.6v-1l1,.2v1l1-.3v-1l1-.3v1.3l1-.7v-1.5l1,.4v1.2l1,1.8v-2.8l1,0v1.7l1-.5v-.8l1,0v1.1l1-.2v-1.2l1,.6v.9l1,.4v-1.1l1-.3v1.3l1-1v-1l1,.1v1.1l1,.1v-.7l1-.6v1.4l1-.2v-.9l1-.4v.9l1,.3v-.9l1-.7v2l1-.3v-1l1-.5v1.3l1,.2v-1l1,.2v.8l1-.3v-1.2l1,.1v1l1,.3v-2l1,.7v1.1l1,.2v-.9l1,.7v1.2l1,0v-1.1l1,.2v1.2l1-.2v-1.3l1-.1v.7l1,.1v-1.2l1,.5v1l1,.5v-1.1l1,.2v1l1-.1v-1.4l1-.2v1.6l1,.1v-1.3l1-.1v.9l1-.3v-1.2l1-.6v1.8l1,.4v-1.2l1-.6v1.2l1,.3v-1.5l1,.7v.9l1,1.3v-1.4l1-.4v.9l1,.4v-1l1-.5v1.2l1,.5v-.8l1-.8v1.7l1-.2v-1.6l1-.2v1l1,0v-1.2l1-.1v1.1l1,.7v-1.3l1,.7v1.5l1,.4v-.9l1-.4v1.3l1-.4v-1l1-1.6v1.8l1,.2v-1.7l1,.1v1l1,.6v-1.1l1-.4v1.9l1,.2v-1.8l1,0v.9l1-.1v-.8l1-.4v1.1l1,.8v-1.2l1-.1v1l1,.5v-.8l1-1.1v1.4l1,.2v-1.1l1,.2v1l1,.6v-1.3l1,.2v1.1l1,.1v-1.4l1-.4v2l1-.4v-.9l1,.1v1.4l1,.4v-1.2l1,0v1.1l1-.2v-1.4l1-.2v.9l1-.2v-1l1,.2v1.2l1-.1v-1.1l1,0v1.1l1,0v-.9l1-.3v1.4l1-.4v-1l1,.2v.9l1,.1v-1.1l1-.2v1l1-.9v-.8l1,.3v.8l1,.5v-1l1,.6v1.3l1-.6v-1.3l1,0v1.5l1-.3v-.8l1-.1v.7l1,.5v-1.1l1-.5v1l1,.4v-1.2l1,.8v1.2l1,.4v-1.4l1,.1v1.3l1-.2v-.9l1-.4v.9l1,1.3v-2l1,.2v1.1l1,0v-1.7l1,.2v.8l1,.3v-1.1l1,.5v1l1,.3v-1l1,.4v.9l1,.5v-1.5l1,.7v.8l1,0v-.9l1-1.3v1.5l1-.8v-1.5l1,.7v1l1,1.2v-1.4l1,.3v1.2l1,.1v-1.4l1,.1v.8l1,0v-.9l1-.1v.9l1,.1v-1l1-.3v.8l1,.1v-1l1-.4v1.6l1,.7v-1.2l1-.1v1.4l1-.6v-1.7l1-.7v1.8l1,0v-1.5l1,1.4v.8l1,.1v-.8l1-.8v1l1,.6v-1.4l1-.5v.7l1,1v-1.4l1-.1v1.2l1,.8v-1.1l1-1.7v2.1l1,.3v-1.3l1,.1v.6l1,1.5v-1.4l1-.2v1.1l1-.4v-.9l1-.7v1.3l1,0v-.8l1,1.3v1l1,.4v-1.4l1-.2v1.5l1-1.2v-1.1l1,.6v2.2l1-1v-1.4l1,.6v1.1l1-.5v-1.2l1,.6v.9l1,.1v-.9l1,.2v.8l1,0v-.9l1,0v1.1l1,.4v-1.6l1,.2v1.2l1-.4v-1.4l1-.1v1.3l1-.2v-1.2l1,0v1.2l1-.3v-1.2l1,0v1.2l1,.1v-.9l1,.2v.8l1-.1v-.7l1-.4v1.1l1-.3v-1.1l1,.4v1.1l1,.5v-.7l1-.4v1l1,.3v-1l1-.8v.9l1,.7v-1.5l1,.4v1.4l1,.4v-2.1l1,1.1v.9l1-.1v-1.3l1-.3v1.7l1-.2v-1.2l1,.7v1.2l1,.2v-1.2l1-.6v2.1l1-1.7v-.9l1,.6v.8l1-1v-1.1l1,.1v1.7l1-1v-.7l1,.8v1.7l1-1.2v-1.4l1-.2v.7l1,.1v-1.4l1,.4v1.8l1-.4v-.6l1-.2v1l1,.3v-1.2l1-.1v1l1,.2v-.7l1-.1v.7l1,.1v-.7l1-.7v1.6l1,.1v-1.5l1,.9v1.2l1,.3v-2.1l1,1.3v1.1l1-.3v-1l1-.1v.8l1-.6v-1.1l1,.1v1.4l1,0v-1.2l1,.8v1.1l1-.1v-1.6l1,.3v1.2l1,.2v-.9l1-.5v1.8l1-1.3v-.9l1-1.1v1.6l1,.8v-1.1l1-.2v1.2l1,1.2v-1.4l1,.2v1.4l1,0v-.8l1-.3v.7l1,.2v-1l1,.4v1.1l1,.4v-1.3l1-.7v1.5l1-.4v-.8l1-.1v1.3l1,.7v-1.5l1-.1v1.3l1,.3v-1.6l1-.6v1.4l1-.5v-.9l1,.1v1.1l1,1.6v-2l1-.2v1l1,0v-.9l1-.8v1.3l1,0v-1.2l1,.6v.9l1,.8v-1.3l1-.3v.7l1,0v-.9l1-.2v1.3l1,.1v-1.2l1-.1v1.4l1,.1v-1.2l1-.1v1.2l1,1v-1.1l1,0v1.3l1,.5v-1.1l1-.4v.9l1,0v-1.2l1,1v1l1-.3v-.7l1,1v1.1l1-.6v-.8l1-.2v1.8l1-.4v-.9l1-.5v.6l1,.2v-1l1,.4v.7l1,0v-.7l1-.2v1.9l1-.3v-1.3l1-.4v1.1l1-.7v-.9l1-.2v.9l1,.1v-1l1,1v.6l1,.3v-.7l1,0v1.4l1-.3v-1.1l1,.3v1.1l1-.1v-1l1-.4v.9l1,.1v-1.3l1,.1v.9l1,.8v-1.6l1,.1v.8l1,1.1v-1.3l1-.2v.8l1,.5v-1.1l1-.6v.9l1,.6v-1.6l1,.3v.8l1,1.9v-2.1l1,.4v1l1,1.1v-1.9l1,.1v1.1l1,.9v-1.5l1,0v1.5l1,.2v-1.1l1-.8v1.6l1-.5v-.9l1,.1v1.2l1,.8v-1.5l1,.4v.7l1,.6v-1.2l1-.1v1.2l1,.3v-.7l1,.1v1.1l1-.6v-.7l1-.2v1.2l1,.5v-1.7l1,.4v1l1,.2v-1.1l1,.1v.7l1,1v-1.8l1-.7v1.3l1,0v-1.2l1-.2v1l1,1.1v-1.4l1,.3v.9l1,.6v-1.1l1-.5v.6l1,.5v-.9l1-.2v1.1l1,.7v-1.6l1-.1v1.5l1,.5v-1.2l1,.1v1.1l1,.3v-1.1l1-.4v1.2l1,0v-1.2l1,0v.9l1-.5v-.9l1,0v1.1l1,.2v-1l1-.2v1.1l1,.3v-1.6l1,1v.9l1,.2v-1.6l1,.1v1.1l1,0v-1.4l1,0v1.5l1-.4v-.9l1,.2v1.1l1-1v-.8l1,.3v1.2l1-.2v-1l1,.5v1.6l1,.1v-1.4l1-.2v1.1l1,.2v-1.1l1-.4v1.3l1-.2v-.9l1-.4v1l1-.4v-.9l1-.6v1.2l1-.5v-.7l1,.2v1.2l1,.2v-1.5l1,.3v1.1l1,.1v-1.4l1-.1v1.5l1,.1v-.9l1-.4v1.3l1-.3v-1.1l1-.6v1.3l1,.7v-1.3l1,0v1.8l1-.6v-1.2l1,.5v1.2l1-.5v-1l1,.4v.8l1,.1v-.8l1-.2v1.4l1,.6v-1.5l1,0v1.1l1,0v-1l1-.1v.8l1,.3v-1.2l1-.1v1l1,1v-1.3l1,.5v1.2l1,0v-1.1l1-1.2v1.6l1,0v-1.2l1,.3v.8l1,.2v-1l1,.2v.8l1,.5v-1.5l1,.8v.9l1,.2v-.8l1-1.1v1.1l1,.3v-1.8l1-.1v.8l1,.8v-.8l1,.4v1.1l1,0v-1.4l1,1v1l1,0v-1.2l1,.4v1.1l1-.1v-1l1,.4v.9l1,.2v-1.2l1,0v1.1l1,.5v-1.6l1-.1v1.2l1-.2v-1.4l1,.4v.9l1,.5v-1.2l1,0v2.1l1-.4v-.9l1-.1v1.2l1-.2v-1.2l1,.3v1.1l1,.4v-1.4l1,.3v1l1,.6v-1.1l1-.5v.8l1,.7v-1.1l1,.2v1.1l1,.7v-1.1l1-.1v1.1l1-.8v-1l1,.6v.8l1,.1v-1.4l1,.2v1.4l1-.7v-1.2l1,.2v1.2l1-.1v-.8l1,.2v1.6l1-.5v-1.1l1-.6v2.4l1-1.5v-1.4l1,0v2l1-.8v-1.1l1,.5v.7l1,0v-.9l1,.2v1.4l1,.3v-1.2l1-.4v1.3l1-.5v-1.4l1,0v1.2l1,.3v-1l1,.4v1l1,.8v-1.6l1,.4v.6l1-.5v-1.2l1-.3v1.3l1,.3v-1.7l1,.2v2.1l1-.5v-.7l1-.2v1.7l1,0v-1.1l1,0v1.1l1,.4v-1.4l1,.2v1.3l1,.1v-1.3l1,.3v1.2l1-.8v-1.4l1,.3v.7l1,.4v-1.1l1,.5v.8l1,.7v-1.8l1,.4v1.1l1-.2v-1.7l1,.2v1.5l1-.2v-.7l1,.1v.9l1-.1v-.9l1-.3v1.1l1-.3v-.9l1,.2v1.2l1,.4v-1.2l1,.6v.7l1,.3v-1.5l1-.4v1.6l1,.5v-1.3l1-.1v1.4l1,.6v-1.3l1,0v1.3l1-.4v-1.1l1-.5v1.5l1-.3v-.9l1,.3v1.1l1,.5v-.8l1,.7v1l1-.2v-1.1l1-.4v1.4l1,.3v-1.5l1-.7v1.4l1,.2v-1l1,0v1.2l1,.5v-1.2l1,.2v.8l1-.2v-1.3l1,.6v.7l1,0v-1.7l1,1.2v1.4l1-.2v-1.4l1,.9v1.2l1,.1v-1.4l1,.1v1.6l1-1.2v-.7l1,.2v.8l1-.3v-.9l1,.2v1.5l1-.5v-1.4l1,.1v1.4l1-.7v-.9l1-.3v1.1l1,.2v-1.1l1-.4v1.1l1,1v-1.4l1-.7v1.5l1-.7v-1.5l1-.2v1.8l1,.3v-1l1,.2v1.7l1-.4v-1.5l1,.3v1l1,0v-1.3l1,.2v1.4l1-.2v-1.1l1,.5v1.2l1-.3v-1.2l1,.2v.9l1-.2v-1.1l1-.2v1.1l1,.4v-1.4l1,.3v1.1l1-1v-1.3l1,.6v.9l1,.6v-1.1l1,.5v1.4l1-.8v-1.1l1,.4v1.1l1-.2v-1.3l1,0v1.5l1-.4v-.9l1,.5v1.1l1-.8v-.9l1-.2v.9l1,.2v-1.1l1,.2v1.7l1-.2v-.9l1-.4v.9l1,.6v-1.8l1,.3v1.3l1,.5v-1.3l1,.6v.8l1-.1v-.8l1,0v.9l1,.4v-1.2l1-.4v1.3l1,.2v-.8l1-.2v.9l1,.1v-1.3l1-.3v1.1l1-.1v-1.2l1,.2v1.2l1,1.4v-1.8l1,.1v.7l1,.4v-1l1-.1v1l1,.4v-1.1l1,0v.9l1-.3v-.7l1-.4v1l1,0v-.9l1-.2v1.2l1,.6v-1.4l1,.9v1l1,.6v-1.5l1,.3v1.1l1-.1v-1l1-.7v1.2l1,.4v-1.2l1-.6v1.5l1,.2v-1l1-.5v1l1,.2v-1l1-.9v1.6l1,.9v-1.2l1,0v.8l1,.6v-1.3l1-.5v1.8l1-.5v-1.1l1,.2v1l1,.6v-1.2l1,.9v.9l1,0v-1.1l1-.4v1.1l1-.4v-1.6l1,.1v1.3l1,.3v-.8l1-.1v1.3l1-.3v-1.2l1-.2v1.1l1-.3v-1l1,.2v1.7l1,.1v-1l1-.9v1.3l1,.8v-1.5l1,.3v1l1,1.1v-1.3l1,.7v.7l1,.2v-1.3l1,.2v1l1,.5v-1.4l1,0v1.2l1,.7v-1.5l1-.4v1.2l1-.1v-.8l1-.6v1.3l1-.4v-.9l1-.3v1.2l1,.7v-1.2l1-.2v2.1l1-.7v-1.5l1-.4v.9l1,1.3v-1.3l1-.1v1.4l1,0v-.9l1-1.4v1.6l1-.1v-1.6l1,.5v.8l1,.3v-1.1l1,.8v1l1,.3v-.8l1,.1v1.3l1-.3v-1.4l1-.1v1.2l1,0v-1l1,0v.8l1,.5v-1.2l1,.2v1l1,.1v-1l1,.4v.9l1,0v-.7l1-.1v.8l1,.6v-1.5l1-.3v1.7l1,.6v-1.6l1,.3v1.6l1-.8v-.7l1-.9v.9l1,0v-1.2l1,.2v1.2l1,.8v-1.1l1-.4v1.5l1,.9v-1.3l1-.4v1.1l1,0v-1l1,.1v1.4l1-.8v-1.2l1,.8v.8l1-.3v-1.1l1,1.2v.9l1-.2v-1.2l1-.5v1.2l1,.3v-1.4l1-.2v.9l1,.7v-1.2l1,0v1.2l1,.1v-.9l1,.1v1.1l1-.1v-1.1l1-.1v.9l1,.3v-1.6l1,0v1.7l1-1.2v-.8l1-1.1v1.3l1,1.4v-1.4l1,0v1.4l1,.4v-1.1l1-1v1.5l1,1.1v-1.2l1-.4v1.1l1,.8v-1l1-.2v1.7l1-.5v-1.3l1,.2v1l1,.9v-1.2l1,.8v1.2l1,.3v-1.2l1-.3v1.2l1-.1v-1.4l1,.9v.8l1,0v-1l1,.1v.8l1,.8v-1.7l1,0v.7l1,.1v-1l1-.2v1.1l1,.3v-1l1,0v1l1,.5v-1l1-.3v1.6l1,.1v-1.4l1-.2v1l1,.3v-1.2l1,.5v1.3l1,.4v-1.2l1,.4v.8l1,.1v-1.1l1,0v.7l1,8.8v-2.6l1-.5v2.5l1,.3v-1.9l1-.4v2l1,.7v-2.2l1,1.4v1.4l1,0v-1.6l1-1v1.6l1,1.7v-1.6l1,.9v2.7l1,.1v-2.4l1-.1v2.3l1,2v-2.1l1-.4v3.2l1-2.2v-2.3l1,1.4v1.3l1,0v-1.4l1-.3v1.7l1,1.5v-1.7l1-.3v2.3l1-.7v-2.6l1,2.3v1.8l1,.7v-2.2l1-.6v2.4l1,.2v-1.4l1,1.3v1.5l1,1.5v-2.2l1-.3v2l1-.3v-2l1,.7v1.4l1,.5v-2l1,.5v1.6l1,1.6v-2.2l1-.6v1.3l1,.7v-1.9l1,1.2v2.2l1-.2v-1.9l1,0v2.1l1,.3v-2.4l1,1.7v1.9l1-.6v-1.8l1-.6v3.2l1,.2v-1.6l1,.9v1.5l1,1.5v-1.7l1,.1v3l1-1.2v-1.7l1,.5v1.5l1,.1v-2.3l1,.3v2.4l1-.2v-1.9l1,1.2v1.4l1,1.7v-2.7l1,.1v2.4l1,0v-1.4l1-.8v1.9l1,.7v-1.3l1,.2v1.7l1,.9v-1.9l1,.7v1.4l1,0v-2.6l1,.3v1.9l1,1.1v-2l1,.3v2l1-.4v-1.6l1-.3v1.8l1,1.4v-1.6l1,.9v1.7l1-.2v-1.8l1,.1v1.9l1,1v-1.6l1,.5v1.9l1,1.5v-2.3l1-.3v2l1,1.8v-2.8l1,.7v1.4l1,.6v-1.7l1,.6v1.6l1,.1v-2.5l1,1v2.2l1-.4v-3l1,.8v1.5l1,1.8v-2.3l1,.5v3.3l1-.9v-1.9l1,1.7v1.9l1,1.1v-2.3l1,.2v2.2l1,.5v-1.3l1,.2v1.6l1,.3v-1.9l1-1.2v1.4l1-1.1v-2.1l1,1.6v2.2l1,.7v-2.3l1,1v2.4l1,.1v-2.3l1,.9v1.7l1-.3v-1.3l1,.3v2.3l1-.1v-1.3l1,1v1.3l1,.2v-1.8l1-.2v1.6l1,.9v-2.4l1,0v2l1,.5v-1.9l1,1.3v2.1l1,1.7v-2l1,.4v1.4l1,.2v-2.2l1,1.3v2.1l1,.9v-1.9l1-.7v1.4l1,0v-2.9l1,1.8v1.6l1,1.7v-2.5l1,.7v1.4l1,1.7v-1.8l1,.1v2l1-.4v-2.1l1,1v1.7l1,1.2v-2.1l1-.3v2.4l1,0v-2.1l1-.2v2.6l1,1.3v-2.8l1,1.2v2.3l1-.6v-2.5l1,1.2v1.9l1-1.3v-1.6l1-.8v1.9l1,.8v-1.8l1-.8v2.5l1-1v-1.9l1-.3v2.8l1-1.6v-1.6l1-1.8v1.8l1,1.2v-1.6l1-.4v1.5l1-1.6v-1.8l1-1.9v2.5l1-.4v-1.8l1-1.3v1.9l1-.4v-1.9l1,2.6v2l1,1v-1.6l1,.4v1.9l1-.1v-1.7l1,.9v1.8l1,.3v-1.9l1-.5v2.7l1-.5v-2.2l1,.4v1.8l1,.5v-1.5l1,.4v1.9l1,.2v-1.4l1,.6v2l1-.4v-1.6l1,1.2v1.8l1,1.1v-2.1l1-.5v1.7l1,1.1v-2.4l1,1.9v1.7l1-.8v-1.7l1,1.5v1.3l1,2.7v-2.6l1,.2v2.1l1-.3v-1.7l1,.1v1.9l1,.2v-2.1l1-.2v1.9l1-.7v-2.1l1-.6v1.9l1-.4v-1.7l1-1.1v2.4l1-1.2v-1.9l1-.5v2l1-.5v-1.3l1-1.5v2.1l1-.1v-1.8l1-.1v1.3l1-.7v-1.5l1-.2v1.3l1,.3v-2.4l1-.5v2.5l1-1.9v-1.7l1-.7v2.2l1,.5v-2l1,.3v2.8l1-.4v-1.7l1,.4v2.6l1-.2v-1.9l1,.6v1.8l1,1v-1.5l1,0v2.1l1-.8v-1.8l1-.7v2.6l1-.5v-1.5l1,.3v1.5l1-.1v-2.6l1,.7v1.6l1,1.6v-2.2l1,.5v2.1l1-.5v-3.3l1,.6v1.7l1,1.1v-1.7l1-.8v1.5l1,0v-2.3l1,.8v1.7l1,.7v-2l1,.4v1.3l1,.4v-1.9l1-1.2v2.4l1,0v-2.4l1,1.1v2l1,.4v-2.2l1,0v2l1,.4v-2.4l1-.4v1.3l1,.5v-2.1l1,1.2v1.4l1-.6v-2.7l1,0v2.5l1-.6v-2.7l1,.7v1.8l1,.7v-1.7l1-.2v2.2l1,.4v-2l1,.6v1.6l1,.1v-2l1-.7v2.1l1-1.5v-2.1l1-.3v2.3l1,1.2v-2.1l1-.6v2.9l1-.7v-1.8l1,.1v1.6l1,.1v-2.4l1,.2v1.4l1,0v-2.5l1-.1v1.9l1,1.7v-3l1,1.2v2l1,.5v-2.2l1,.8v1.5l1,.3v-2.4l1-.1v2.4l1,.7v-2.6l1,.7v2.1l1-1.3v-1.8l1-1v2.4l1,.3v-2.5l1,1v2.2l1-.2v-2.4l1,.7v2.4l1,.5v-1.5l1-.1v2.6l1-.4v-2l1-.6v2.3l1-.3v-1.8l1,1.2v2.5l1-.2v-2.3l1,.7v2.3l1,.2v-1.6l1,.1v2.9l1-1.1v-2l1-1.3v1.7l1-.9v-1.6l1,1.3v2.6l1,.6v-1.8l1-.6v1.6l1,.6v-2l1,1.4v1.8l1-.8v-2.5l1,1.5v3.4l1-.3v-2.2l1,1.4v2.4l1-.7v-1.7l1-.6v2l1-.1v-2.1l1,.4v2.3l1-1.3v-2.8l1,2.1v1.9l1-.3v-1.2l1-.7v2.1l1,.3v-2.9l1,.6v2.3l1,.2v-1.8l1,1.4v1.8l1,.7v-1.9l1-.1v1.9l1,.2v-2l1-.6v2.9l1-.1v-1.6l1,.1v1.3l1,.7v-1.5l1-1.2v1.4l1,.2v-2.3l1,1.4v1.5l1,.4v-2.6l1-.6v2.1l1-1.2v-2l1,.2v1.4l1-.4v-2.1l1,.9v1.7l1,1.1v-2.4l1-1.8v2.7l1-1v-2.6l1-.2v2.4l1,.1v-1.9l1-.2v1.4l1,.4v-1.5l1-.6v1.4l1,.9v-2l1,.6v1.5l1-.2v-2.8l1-.3v2.5l1-1.1v-2.3l1,.4v1.4l1,.5v-2.3l1,.1v1.5l1-.3v-1.7l1-.9v1.4l1,.7v-3l1,1.8v1.8l1-.4v-1.5l1-.8v1.3l1,.1v-1.9l1,0v2l1-2.1v-2.7l1,.7v2.2l1,1.3v-1.8l1,0v2.3l1-.3v-2.3l1,.2v2.2l1-.1v-2.2l1-.6v2l1-.9v-2.3l1-.7v2.8l1,.6v-1.9l1,1v1.8l1-.2v-3.1l1,2.2v1.9l1,1.2v-1.7l1-.5v1.9l1-.1v-2.3l1,1.4v1.9l1,1.6v-1.8l1,.1v2l1-.9v-2l1,1.2v1.7l1,1.4v-1.7l1-.8v1.6l1-.2v-3l1,2.7v1.8l1-.4v-1.5l1-.7v2.3l1-.8v-1.8l1-.3v2.3l1-.8v-1.6l1-.7v1.4l1-.3v-2.5l1-.3v2.2l1-.3v-2l1,.7v2l1,0v-2.2l1-.9v2.8l1-.9v-1.6l1,.2v1.5l1-.3v-1.8l1-.1v2.3l1-.6v-1.4l1-.5v2.6l1-1.2v-1.7l1-2v3.2l1-2.2v-1.4l1-1.1v2l1-.3v-1.7l1,.9v1.5" stroke="#4c0808" stroke-width="1.8"/><path d="M440.5,729.1v1l1-.3v-.9l1,.4v1.1l1,.7v-1.4l1-2.3v2l1-3.4v-1.3l1-2.7v1.2l1-1.6v-.7l1-.5v.7l1-.2v-1.2l1-3.2v1.3l1-1.1v-1.7l1,1.7v1l1-1.7v-.7l1-1.8v1.3l1-1.9v-.9l1-1.3v.9l1-1.4v-1.5l1-.5v1.6l1-2.5v-.8l1-1.7v1.6l1-.3v-1.2l1-.8v1.2l1-1.3v-.8l1,.4v.8l1-1.8v-1.2l1-1v1.2l1-1.6v-1.4l1,1.3v1.6l1-2.5v-1l1-1.1v1.5l1-1.1v-.9l1-.7v.7l1-.1v-.8l1,.3v.6l1-2v-1.4l1,1v1.5l1-2.4v-.9l1-2.2v1.3l1,.1v-1l1-.9v1.1l1-1.3v-1.7l1-.7v.9l1-1.6v-1.1l1,.7v.9l1-.5v-1.1l1-.1v.6l1,.7v-1.6l1-.2v.9l1,0v-1.3l1,1.3v1.4l1,.6v-1.2l1-.8v1.5l1-1.4v-1.2l1-1v.8l1,1v-1.2l1,.2v1.4l1-1.8v-1.4l1-.5v1.2l1,.2v-1l1,.3v1l1-1v-.8l1-2.7v1.3l1-2.6v-1l1-.6v1.1l1-.5v-1l1,.3v1.4l1-.6v-.8l1-.6v1.1l1-.5v-1.3l1,1.9v1.1l1,1v-1l1-.6v1.1l1,1.2v-1.5l1,.5v1.6l1-.6v-1.3l1,.8v1.3l1-1.6v-.9l1-.6v1.7l1-.6v-1.7l1-.3v.8l1-.8v-1.4l1-1.7v1.6l1-.1v-1.2l1,2v1.2l1-1v-1.3l1-.8v1.5l1,.3v-1.2l1-.5v1.3l1,.2v-1.7l1-1.4v1.1l1-2v-1l1,2.1v.7l1,.1v-1.6l1-.2v.9l1,.5v-1l1,1.4v1.3l1,1.1v-1.4l1,1.3v1l1-2.1v-.7l1,.3v.9l1,.7v-1.3l1-.2v.9l1,0v-1.1l1-1.7v1.2l1-.8v-1.1l1,.2v.7l1,.9v-1.5l1,1v1.8l1-1.3v-1.3l1,0v1.3l1-1.3v-.7l1-.3v1.1l1,.8v-1.4l1,.3v1.4l1-.5v-.8l1-.8v.9l1,.1v-.7l1-.1v1.1l1-.4v-1.2l1-.2v1.7l1-.2v-1.1l1-.3v1.6l1-.7v-1.7l1,.6v1.5l1-.4v-1.1l1,.6v.9l1-.1v-1l1-.3v1.1l1-.2v-.7l1,.3v.8l1,.4v-.8l1,.1v.8l1-.1v-1.3l1,.3v1l1-.3v-1.3l1,.3v1.5l1-.3v-1.4l1,.4v1.4l1-1v-1l1,.7v1l1,.6v-1.2l1,.5v.6l1,.8v-1.6l1,.5v.7l1,.1v-.9l1,.4v1.3l1-.1v-1l1,.7v1.5l1-.7v-1.3l1,.5v.9l1-.1v-.7l1,.9v.9l1,.1v-1l1,.2v.8l1-.5v-.9l1-.6v1.4l1-.2v-.9l1-.7v1.1l1,.6v-.8l1-.3v1.5l1,.1v-1.1l1,.6v.7l1,.3v-1.5l1,.4v1.3l1,.7v-1.2l1-.7v1l1-.1v-.7l1-.1v1l1-.4v-1l1,.1v1.4l1-.8v-.9l1-.1v1.2l1,.2v-1.2l1,.6v1.2l1,.5v-.9l1-.4v1.1l1-.2v-.7l1-1v1.6l1-1v-1.4l1,.4v1.1l1-.5v-.8l1-.2v1.2l1,.4v-1.3l1-.1v1.4l1-.3v-1l1-.5v1.1l1,.2v-1.1l1-.6v1.9l1,.2v-.8l1-.4v.8l1,.2v-1.1l1-.3v1.1l1,.4v-1.6l1,.6v.6l1,.3v-.9l1,0v1.2l1,0v-1.8l1,.8v1.1l1,.2v-1.3l1,.2v1l1-.8v-.8l1-.1v1.8l1-.7v-.7l1,.3v1l1,.2v-1.3l1,.6v1.1l1-.8v-1l1,.3v.9l1-.2v-1.6l1,.6v.7l1-.1v-1.1l1,0v.8l1,.5v-2l1,.4v1l1-.2v-1.3l1-.1v.8l1,.2v-.9l1-.5v1.6l1-.2v-1.1l1-.7v1.1l1-.2v-1.3l1,.3v1l1,.5v-1.1l1-.4v1.4l1-.3v-.7l1-.2v1.2l1,.2v-1.4l1,.7v1.1l1-.5v-1.1l1-.9v1.9l1-.6v-1.4l1,.7v1.6l1,.3v-1l1,.4v1.9l1-1v-.7l1-.4v.8l1-.3v-1.8l1-.3v.9l1,.1v-1.3l1,.7v.9l1,.6v-.8l1,.1v.8l1-.2v-1.1l1,0v1.4l1-.3v-.8l1,0v1l1-.4v-1l1,.2v1.3l1-.6v-.9l1,.1v1.2l1,.6v-1.7l1,.4v.9l1-.2v-1.1l1-1.3v1.5l1-.1v-1.1l1-.8v1.6l1,.1v-1.1l1-.3v1l1,0v-1.6l1-.7v2l1-.4v-.8l1,.8v.6l1,0v-1l1,.1v1.3l1-.4v-1.7l1,.2v1.8l1-.6v-1l1,.5v1.2l1,.6v-1.5l1-1.2v1.4l1-.2v-.9l1-.2v.9l1,.2v-1.8l1,.6v1.3l1,.4v-1.6l1,0v1.2l1-.9v-.7l1-.5v1.3l1,.1v-1l1,.6v1.1l1,.3v-1.5l1,.7v1l1-.1v-1.2l1-.2v1.5l1,.2v-.9l1-.7v1.4l1,.1v-1l1-.3v1.2l1-.2v-1.3l1,.1v.9l1,.4v-1.2l1,0v1.3l1-.4v-1.3l1-.4v1.4l1,0v-1l1-.1v.9l1-.6v-1.1l1-.5v1.6l1,0v-1.5l1,1v1l1,1.3v-2.2l1-.7v1l1-.3v-.9l1-.2v1.3l1,.1v-1.7l1,.8v.9l1-.2v-1.3l1,.7v.8l1,.4v-1.1l1,.6v1.2l1-.3v-1.3l1-.7v1.4l1-.3v-.7l1-.2v1.4l1,.4v-1l1-.4v1.3l1-.6v-1l1-.2v1l1-.4v-1.1l1,.3v1l1,.3v-1.1l1-.2v.9l1-.3v-1.4l1-.1v1.2l1,1.2v-1.1l1,.6v1.1l1,.1v-1.1l1-.5v1.6l1,.6v-1l1-.2v2l1,.3v-1.2l1,0v1.2l1,.2v-.9l1-.1v1.1l1-.1v-.8l1-.2v1.1l1-.5v-1.5l1-.1v1.3l1-.5v-1.1l1,.1v1.2l1-.1v-1.2l1,.3v1.1l1-.5v-1.3l1,.1v1l1,.3v-1.2l1,.5v1l1,.2v-2l1,.4v.7l1,.1v-1.3l1,.1v1.1l1,.6v-1.4l1,.8v1.3l1-.2v-1.1l1,.6v1l1,.6v-1.4l1,.1v.9l1,.5v-.8l1-.8v1.4l1,0v-1.2l1-.2v1l1,.4v-1.2l1,.5v1.1l1-.1v-.8l1-.1v1.2l1-.5v-1l1-.3v1.2l1-.3v-1l1,.2v1.3l1,.5v-1l1,.6v.8l1-.1v-.9l1-.4v.7l1-.2v-1.1l1,.3v2l1-.2v-1.1l1,.6v1.2l1-.1v-1.1l1-.8v1.3l1-.5v-.9l1-.4v1l1,.3v-.9l1,.8v.9l1,.2v-.9l1,0v.9l1-.3v-1l1-.8v1.8l1-.1v-1l1,.1v1.4l1,.2v-1.4l1,0v1.1l1-.2v-1l1,.1v1.8l1-.7v-1.2l1,.2v1l1,.2v-1.6l1,.2v1.7l1,.2v-1.7l1,.5v1l1-.5v-.6l1-.2v1l1,1.8v-2.4l1,0v.9l1-.3v-1.2l1,0v.9l1,.2v-1.1l1,.1v1.3l1,.2v-1l1,0v1.1l1-.6v-.7l1-.2v1.4l1,0v-1l1,.2v1.4l1-.2v-1.6l1,.3v1.3l1,.3v-.9l1,.2v1.1l1,.6v-1.6l1,.1v.7l1-.3v-1l1-.2v1.1l1-.2v-1.4l1,.5v1.4l1-.3v-1.3l1,.3v1.3l1,.5v-1.2l1,.1v1.1l1-.2v-1.3l1,.4v1.5l1-.4v-1.1l1,.7v1l1-.4v-1l1,.4v1.1l1-.6v-1.5l1,0v1.5l1-.4v-1.4l1,.3v1.1l1,.3v-1.2l1,0v.9l1,.8v-1.1l1-.6v1.2l1,.6v-1.8l1-.3v1.1l1-.4v-1.4l1-.2v1.2l1,.5v-.9l1,0v1.1l1-.4v-1.2l1-.7v1.3l1,.5v-1.2l1,.8v1.1l1-.5v-1l1-.3v1.4l1-.6v-1l1,.8v1.1l1,.4v-1.2l1-.6v1.9l1-1.1v-.8l1-.2v.8l1,.4v-1.2l1,.4v1l1,.3v-1.7l1-.1v1.4l1,0v-.8l1,.5v.9l1,.6v-1l1,.3v.9l1-.5v-1.4l1,0v1.2l1-.4v-1l1-.1v1.2l1-.3v-1.1l1,.9v.6l1-.1v-1.1l1,.5v1.1l1,.2v-1l1,.3v1.1l1-.8v-.8l1-.3v2.1l1-.7v-1.3l1,.4v.9l1-.3v-1.4l1,.5v1.4l1,0v-1.3l1,.4v1.6l1-.2v-1.2l1,.5v1.2l1,.3v-1.3l1-.2v1.7l1-.3v-1.2l1,.6v.7l1,.6v-.9l1-1v1.9l1-.5v-1.4l1,0v.7l1-.1v-1.2l1,.2v.7l1,.1v-1.2l1,.2v1.1l1-.6v-1.2l1,.1v1.1l1-.4v-1.1l1-.3v1.2l1-.2v-.8l1,.3v1.3l1-.2v-.7l1,.6v1.5l1-.5v-1l1,.1v1l1,0v-1.1l1,0v1.4l1,.4v-1.5l1-.3v.9l1,.4v-.8l1,0v1.2l1,.2v-1.2l1,.2v1.2l1-.1v-1.2l1,0v1.4l1,.9v-1.1l1-.1v.8l1,.1v-1.3l1-.5v.9l1,.3v-1.3l1-.1v1.4l1,.7v-1.6l1,.4v.7l1,.5v-.8l1,.3v.9l1,.3v-1.1l1,.4v1.3l1-.3v-.7l1-1.1v1.4l1,.2v-2l1,.3v.9l1,.4v-1.7l1,.6v1.4l1-.5v-1.1l1,.4v1l1,.4v-1.7l1,.5v1.1l1-.5v-.9l1-.2v.6l1,.3v-1l1,.4v.9l1,0v-1.3l1,.3v.8l1-.1v-1l1-.5v1.5l1-.5v-1.1l1,.3v1.4l1-.3v-.9l1,.5v1.2l1,.1v-1.1l1,0v1.4l1-.4v-1.1l1-.2v1.6l1-.3v-1.1l1,0v.9l1-.2v-1.1l1-.1v2.2l1,.1v-1.7l1,1.5v.9l1,.7v-2.3l1,.8v.9l1,.8v-1.5l1-.4v1.2l1-.4v-.9l1-.2v1.2l1,.6v-1.5l1,.5v.8l1-.1v-1l1-.4v1.2l1,.3v-.8l1,.2v1.3l1-.6v-1.1l1-.3v1.3l1,.5v-1.5l1,.8v.7l1,0v-1.3l1-.1v1.1l1-.6v-1l1,.8v1.3l1-.2v-1.4l1,.3v1.3l1-.1v-1.4l1-.3v1.3l1,0v-1.6l1,1.2v.8l1,1v-1l1-.3v1.2l1-.2v-1.8l1-.4v1.9l1,.4v-1.1l1,.7v.7l1,1.1v-1.4l1,.2v.6l1-.4v-1.5l1,.7v1.2l1-.3v-.9l1,.3v1l1-.1v-1l1,.4v1.5l1-.9v-.9l1-.8v1.3l1,0v-1.2l1,.6v.8l1-.2v-1l1,.2v1.4l1-.1v-1.1l1,.3v1.2l1,.6v-1.9l1,1.1v.7l1,0v-.8l1-.1v1l1,.5v-2.1l1-.1v1l1,0v-1l1-.2v1.3l1,.2v-.8l1-.4v1.6l1,.1v-1.5l1,.7v.9l1-.1v-1.4l1,.2v1l1,.3v-1.1l1,.1v1l1,.5v-1.3l1-.4v1.1l1,.6v-1.5l1,.2v.9l1,0v-1.4l1-.1v1.4l1-.7v-.9l1,.4v1.5l1-.3v-1l1,.6v1.1l1-.6v-1.4l1-.5v1.5l1-.6v-1l1,.3v2l1-.7v-1.2l1,.5v1.4l1,.2v-1.6l1,.4v1.1l1,0v-.9l1-.5v1.2l1,.1v-1.3l1,.2v1.2l1-.3v-.8l1-.5v1.1l1-.1v-1.5l1,0v1.1l1,.5v-1l1,.1v.8l1,1.1v-1.4l1,.5v1l1,.5v-1.1l1-.3v.7l1,1.1v-1.1l1-.1v1.4l1,.1v-1.1l1-.6v1.3l1,0v-1.6l1,.2v1.3l1-.7v-1.2l1,.4v1.2l1-.1v-.8l1,0v1.2l1,.7v-1.4l1-.7v1.3l1-.3v-1.2l1-.1v1.3l1,.5v-1.2l1,.1v1l1,0v-.9l1-1.1v2.1l1-.5v-1l1,.1v2.5l1-1.2v-1.2l1,.9v.9l1,.7v-.9l1,.1v1.1l1-.4v-.9l1-.3v.8l1,.3v-.8l1-.1v.9l1,0v-1.2l1,.1v.7l1,.2v-.8l1,.3v1.4l1-.2v-1.2l1,.3v.7l1-.1v-1.2l1,.3v1.1l1,.5v-1.7l1,.3v1.2l1-.3v-1.1l1-.8v1l1,.1v-.7l1-.3v1.6l1,.3v-1.7l1,.9v1l1,.3v-1.1l1-.2v1.4l1-.1v-1.4l1,.1v1.1l1,0v-.8l1-.1v1.4l1-.6v-.8l1,.1v1l1,.9v-1.7l1,.4v.9l1,.1v-1l1-.4v1.2l1,.4v-1.4l1,.2v1.2l1,0v-.8l1-.9v1.5l1,.1v-1.2l1-.1v1.3l1,0v-1.2l1-.6v2l1-.4v-1.5l1,.5v1.4l1-.2v-1l1,.7v.9l1,.1v-1.3l1,.3v1.2l1-.2v-1.6l1,.5v1.2l1-.1v-1.5l1,.8v1l1-.2v-1.4l1,.2v1.3l1-.8v-1l1,.2v1.4l1,.4v-1.1l1,.5v.8l1,.1v-.9l1-.5v2.1l1-1.2v-1.1l1,.5v1.2l1,.3v-1.2l1,.2v.7l1,0v-.9l1-.4v.9l1,.9v-1.2l1,0v1.2l1,.4v-1.3l1,.2v1.1l1-.6v-.9l1,.4v1l1-.4v-1.3l1,.4v1.1l1,.3v-1.9l1,1.3v1.4l1-.3v-1.1l1-1.1v1.4l1,.2v-1.5l1,.5v.9l1,.8v-1.5l1,0v1.1l1,.2v-.9l1,0v1.3l1,.5v-1.2l1,.2v1.3l1,.3v-1.6l1,.3v1.3l1-.3v-1.3l1-.2v1.3l1-.4v-.8l1-.2v1.3l1,.6v-1.6l1,.1v1.2l1,.2v-.7l1-.3v.9l1,.2v-.9l1-.4v1.2l1-.2v-.9l1-.3v1.1l1,.1v-1.2l1-.1v1.1l1,.4v-1.2l1,.8v1.1l1,.1v-.7l1-1.3v1.4l1-.9v-1.1l1,.2v1.3l1,.3v-1.4l1,1.1v1.1l1-.5v-1.2l1,.7v.9l1-.6v-1.3l1,.8v.9l1-.4v-1.2l1,.4v1l1,1v-1.7l1,.2v1l1-.3v-1l1-.4v1.5l1,.3v-1.4l1,.1v1.3l1-.1v-.8l1-.5v1.2l1,.1v-1.5l1-.5v1l1,0v-1l1,.2v1.4l1-.4v-1.2l1,0v1l1-.1v-.7l1,.1v1.2l1-.4v-.8l1-.6v1.1l1,.4v-1l1,0v.7l1,.1v-.9l1-.5v.9l1,.1v-1.5l1,.5v1.6l1-.2v-.7l1,.3v1.4l1-.1v-1.4l1-.6v1.6l1-1.1v-.9l1-.6v1.5l1,.1v-1l1,0v1.2l1-.2v-1.1l1-.9v1.5l1,.1v-.8l1-.3v1.5l1,.3v-.9l1,.1v.9l1-.5v-1.2l1,.7v1.3l1,.2v-1l1,.5v1.3l1-.1v-1l1,.5v1.2l1,0v-1.3l1,.6v.9l1,.3v-1.2l1,.3v.9l1,.3v-1.1l1,.2v1.5l1-.1v-1.3l1-.2v1.2l1-.5v-1.1l1-.2v1l1,0v-1.1l1,.5v2l1-1.1v-1.4l1,.5v.9l1-.1v-.7l1-.5v1.3l1,.1v-.9l1-.1v1.3l1,.5v-1.1l1-.1v1.2l1-.7v-1.1l1,0v1.3l1-.3v-.8l1,.1v1.2l1,0v-.7l1-1.2v2.1l1-.5v-.9l1-.2v1.7l1,.6v-1.1l1,.4v.9l1-.2v-.9l1-.6v1.5l1,.2v-.8l1,.3v1.1l1,.5v-1.2l1-.6v1l1,.1v-1.1l1-.8v1.5l1-1v-1.6l1,1.5v.9l1,.6v-.8l1-.3v1.7l1-.3v-1.3l1,.4v1.1l1,.5v-1.3l1-.7v1.6l1-.7v-1.8l1,.4v1.6l1,.2v-1l1,.3v1.3l1,.4v-1.6l1,.5v1l1,.6v-1.4l1-.3v1.3l1-.2v-.9l1-.3v.9l1,0v-.9l1,.3v1.7l1-.8v-1.2l1-.3v1.7l1,.1v-1.2l1,0v.7l1,.4v-1.3l1,0v1.1l1,.1v-.9l1-.2v.9l1,1v-2l1,.1v1l1,.1v-1.4l1,.8v1l1-.2v-.7l1,0v.8l1,.4v-1.1l1-.4v1.5l1,.2v-1.3l1,.3v.9l1,.3v-1l1,.3v.9l1,.6v-1.1l1-.7v.9l1,.3v-1.4l1-.1v1.8l1-.5v-.7l1,.4v1.1l1-.2v-1.3l1,.1v1.2l1,0v-1.2l1,.4v.9l1,.9v-1.5l1-.4v1.3l1-.1v-.6l1-.2v1l1-.5v-.9l1-.5v1.2l1,.3v-1l1-.2v1.1l1,.6v-1.2l1-.7v1l1,0v-1l1-.1v1l1,.4v-.8l1-.1v.8l1,.4v-1.4l1,.5v1.5l1,.1v-1.3l1,.5v1.5l1-.3v-.9l1-.5v1l1,.1v-1l1-.9v1.8l1,.1v-.9l1,.2v1l1,.7v-.7l1-.6v1.4l1-.1v-1.2l1-.5v1.8l1,.4v-1.5l1,.1v.8l1,.5v-2l1,.7v1.5l1,.3v-1.2l1,.1v1.6l1-.1v-1.2l1,.6v1.1l1,0v-2.1l1,1v1.5l1-.9v-1.4l1,.2v1l1,.6v-1.5l1,.6v1l1,.7v-1.3l1-.4v.8l1,.2v-1.2l1,.4v1.2l1,.4v-1.1l1,.1v1.1l1,0v-1.6l1,.8v1l1,.2v-.7l1-.8v1.3l1,.4v-1.6l1-.4v1.3l1,.5v-1l1-.2v1.3l1,3.5v-2.4l1,.1v1.9l1,.6v-2.5l1,2.2v2.4l1,2.7v-4.6l1-1v2.8l1,.7v-2.8l1-.1v1.7l1,1.5v-2.4l1-.3v2.2l1,3.3v-3.6l1,.8v7.9l1-1.6v-4.6l1,.6v3.5l1-.8v-3.2l1-.8v1.8l1,1.1v-2.5l1,1.1v2.1l1-.9v-2.4l1,.1v1.6l1,3.1v-2.5l1,.4v2.1l1,.4v-2.3l1-.6v2.9l1-1.6v-2l1,.5v2.7l1,.5v-1.9l1,.1v1.8l1,1.5v-2.9l1-1v4.2l1,4.5v-8l1,3.4v2.7l1,1.4v-2.1l1,.1v1.7l1-1v-2.2l1-1.5v3.3l1,2v-2.6l1,1.7v5l1-2.9v-2.9l1-1.1v2.8l1-.3v-1.6l1-1.1v2.3l1,.8v-1.5l1,.5v2.3l1-.4v-3l1-.3v2.2l1,1.6v-2.6l1,1.9v2.1l1-.4v-1.9l1-.9v2.4l1,.9v-2.1l1,1.6v2.7l1-1.3v-1.9l1,0v2.5l1,1.5v-2l1,.5v2.9l1-.9v-2.3l1,.7v2.1l1,0v-2.7l1,.4v2.9l1,3.7v-5.8l1-.4v2.9l1-.7v-2.5l1,2.7v2.3l1,1.8v-2.4l1-.4v2.2l1-.8v-1.9l1-.2v2.5l1,.5v-3l1,2v2.3l1,.5v-2.3l1,1.1v2.1l1,.2v-2.9l1,.9v2.2l1,1.4v-3.2l1-.3v4.2l1,5.1v-7.3l1-.1v2.8l1-2v-1.9l1,.5v1.8l1,1.2v-2.9l1-.2v2.7l1,5.5v-7.4l1,2.3v3l1,.2v-3.3l1-.3v2.1l1,.3v-1.8l1-.2v1.9l1,.6v-1.7l1-.1v3.8l1-.9v-2.6l1,.1v2.4l1,1.1v-2.4l1-.4v2.2l1,1.4v-1.9l1,.6v1.9l1,1.3v-2.9l1-.1v5l1-2.1v-2.9l1,1.4v2.6l1,5v-6.6l1-.4v3l1-.9v-2.3l1-2.4v3l1-.7v-2.6l1,2.2v1.8l1,.8v-3.2l1,1.2v2.3l1,2.1v-3.4l1,.9v2l1,1.8v-2.8l1,2v2.6l1,2v-4.7l1,3.2v2.2l1-1.4v-2l1-.1v1.9l1,1.2v-2.1l1-.8v4.1l1-1.6v-1.6l1-.4v2.9l1,5.3v-6.1l1,0v3.1l1,.2v-1.9l1-.7v2.4l1,.3v-2l1-.5v2l1,.2v-1.5l1,1.2v2.2l1-.1v-2.1l1,.1v2.6l1-2.3v-2l1-.8v2l1,1.3v-3.3l1,.6v1.8l1-.7v-3.3l1-.1v2.2l1,0v-2l1-.5v3.3l1-1v-2l1-.3v2.3l1,.1v-2.5l1-2.4v2.9l1-1.1v-2.1l1,1.4v3l1-1.5v-3.2l1,.6v2.3l1,.9v-2.1l1,.2v2.8l1-1.2v-1.9l1,1.2v2.3l1,1.3v-2.5l1,.3v3.1l1-.1v-2.7l1,.3v2.6l1,.2v-2.6l1,.3v2.3l1-.8v-2.5l1,1.7v2.6l1,.9v-2.1l1,.5v3.3l1-.2v-2.2l1,1.2v2.1l1,.1v-1.7l1,.5v2.3l1,.1v-1.9l1,.2v2.7l1-.9v-2l1-.4v2.7l1,1.5v-2.8l1-.4v3.2l1-.9v-2.6l1-.4v2.3l1,.4v-2.3l1-1.1v2.7l1-.7v-1.9l1,.4v2.5l1-.6v-3l1-1v2.4l1,1.2v-2.6l1-1.6v2.5l1-.2v-2.7l1,1v2.6l1,2.3v-6.5l1-2.7v3.3l1-.8v-2.4l1,.2v2l1-.2v-1.8l1,.2v2.4l1-.2v-2.2l1-.3v2l1,1.3v-2.6l1,.8v2.7l1-1.4v-2.1l1,.2v1.7l1,1.4v-2.2l1-.5v2.1l1,0v-4l1,2.8v2l1,0v-2.1l1,.1v2.4l1,.3v-2l1-.8v2.3l1-.4v-1.9l1,1v2.4l1,1.2v-2.6l1-1.1v2.6l1-.7v-2l1,.3v3.7l1-1.2v-2.1l1-.3v2.9l1,.7v-1.9l1-1v2.2l1,1.1v-3.7l1,.9v1.5l1,1.1v-2.1l1-.1v2l1-.4v-1.9l1,2.1v2.1l1-1.2v-2l1-2.2v2.4l1-.4v-2.4l1-1.6v3l1-1v-2.1l1,.9v2.8l1,.3v-2.3l1-1v3.9l1-1.5v-2.1l1,.7v1.8l1,.1v-2.5l1,.2v1.9l1,.7v-4.9l1,.7v2.9l1,.8v-2.6l1,1v2.4l1,0v-1.7l1,.5v1.5l1,0v-2.3l1-1.1v2.9l1-.2v-3l1-1v2.7l1,1.1v-3l1,.7v5.2l1-2v-3.5l1,0v3.1l1,3.6v-6.8l1-.3v2.6l1-.9v-2.1l1-.8v2.6l1,.6v-2.6l1,.1v1.6l1,2.2v-2.9l1-.1v2.9l1,1v-2.2l1,.3v2.3l1,1v-2.3l1,.6v2l1-.5v-2.6l1,.1v1.9l1-.4v-2.1l1,1.3v1.7l1,1.3v-1.6l1-.3v3.4l1-1.4v-2.1l1,.2v1.7l1,1.9v-2.8l1,1.9v2.8l1-.1v-2.2l1-2.8v2.3l1,1v-3l1,.5v2l1,.6v-1.8l1-1.2v2.6l1,.1v-1.7l1,1.3v2.7l1-1.3v-3.3l1,.4v2l1,1v-2.4l1,1.7v1.9l1,.7v-2.4l1,.3v1.9l1,.4v-2.2l1-.5v1.8l1,0v-2.5l1,1.5v2.4l1,1.4v-3.5l1,1.3v3.2l1-1.9v-1.6l1-.9v3.6l1-2.2v-2.1l1,.6v2.4l1,4.2v-5.5l1,1v4.9l1,1.9v-5.8l1-1.8v3.3l1-1.4v-2.8l1,1.3v2l1,1.1v-2.2l1-1.9v2l1-.8v-1.4l1,1.6v2.2l1-.9v-2.1l1-.7v2.4l1,.9v-1.6l1,.2v2l1,.9v-3.2l1-1.4v2.4l1,.2v-1.6l1-.2v2.5l1-2.4v-1.6l1-.7v1.9l1,.1v-3l1-1.1v4.1l1-1.8v-2.4l1-1.1v2.9l1-.9v-3l1,1v2.2l1,.3v-1.6l1-.6v1.8l1-.2v-1.8l1-1v2.4l1-.9v-2.2l1,.1v2.1l1,.5v-1.6l1-.4v1.6l1-1v-2.5l1-.9v4.2l1-.9v-2.1l1,0v2.5l1,.7v-2.4l1,.6v3.2l1-2.2v-1.8l1-.2v1.8l1-.2v-1.8l1-.7v2.1l1,.8v-3l1,.9v2.9l1-1.4v-3l1,.7v1.8l1,.2v-2.4l1,1.2v2.1l1,1v-3l1,1.7v2.6l1-.9v-2.3l1-2.5v3.7l1,.6v-2.4l1,1.1v2.2l1-.7v-1.8l1,1.7v1.9l1,.1v-3.3l1-1v4.1l1,4v-7l1,1.1v3.2l1,.2v-2.1l1,1.4v1.8l1,2v-3.5l1-.8v2.2l1-1.6v-2l1,.5v2l1-.6v-1.9l1,0v2.2l1,.6v-3.2l1,.9v1.7l1,0v-1.8l1-1v2.7l1-1.6v-1.5l1-.4v1.9l1-.1v-2.6l1,1.7v6.7l1-3.2v-4l1-1.5v2.5l1-1.4v-1.6l1,.4v1.6l1,.5v-2.2l1,.3v1.6l1-.2v-1.9l1,1v1.7l1-2.3v-1.6l1-1.5v2.9l1,.6v-2.6l1,.6v2.3" stroke="#168016" stroke-width="1.9"/><path d="M440.5,787.2v3.4l1-2.9v-1.2l1-1.3v1l1-1.3v-1.2l1-1.1v1.1l1-2.2v-1l1-1.8v1.4l1-1.6v-1l1-1.4v1l1-2v-.8l1-1.9v.8l1-1.6v-.7l1-1.4v1l1-.8v-1.1l1-.9v1l1-.8v-.8l1-1.5v1l1-.9v-1l1-2.4v1l1-1v-1.2l1-2.3v1.6l1-.7v-.7l1-1v1.1l1-.4v-1.2l1-1.2v.8l1-1.2v-1.1l1-.8v.7l1-.6v-.8l1-1.8v1.8l1-.7v-.9l1-1.2v1l1-.4v-.9l1-1.1v1.1l1-.8v-1.2l1-.9v1.1l1-1.1v-1l1-.6v1l1-.5v-1.2l1-.8v1l1-.5v-1.2l1-.5v1.1l1-.5v-.8l1-.5v1.2l1-.1v-1.4l1-.8v1.6l1,.1v-2.3l1,.2v1.3l1-.5v-1l1-.2v1l1,.2v-.9l1,.1v1l1-.3v-.9l1-.2v1.1l1-.3v-1.2l1-.7v1.3l1-.1v-1l1-.2v.8l1,.1v-.9l1,.2v.7l1,.2v-1.1l1-.6v.9l1,.1v-1l1,.5v.9l1,.2v-.7l1-.4v.7l1,0v-1.3l1,.2v.9l1-.1v-.7l1-.7v1l1-.8v-1.1l1-.2v1l1,.4v-1.3l1,.4v1.6l1-.6v-1.1l1-.1v1.3l1-.5v-.9l1-.2v1.1l1-1v-.7l1,.2v.9l1-.7v-1.3l1,.6v1l1-.7v-1.7l1,.5v.9l1-.2v-1l1,.5v.8l1-.2v-1.1l1-.4v1.1l1-.2v-.8l1,0v1l1-.3v-.7l1-.1v.7l1-.2v-1l1-.3v1.2l1-.4v-.8l1-.8v1.1l1,.2v-.9l1-1v1.7l1,.2v-1.6l1-.3v1l1,.4v-1.1l1,.5v.8l1,.1v-1.4l1-.2v1.5l1-.1v-.8l1,.1v1.2l1-.6v-.7l1-1v1l1-.3v-1.1l1-.1v1l1,.7v-1.4l1,0v2.2l1-.9v-.9l1-.1v1.3l1,0v-.9l1-.4v1.2l1,0v-.8l1-.1v1.3l1,0v-1.6l1,.4v1.4l1-.3v-1.1l1,.2v1l1-.7v-.9l1,.1v.7l1,0v-1.1l1-.3v1.5l1-.2v-1.2l1,.5v1.2l1,0v-1.8l1,.4v.9l1,.1v-.8l1,.4v1l1,.1v-1.3l1,.2v.8l1,.7v-1.8l1,.9v.8l1,.3v-.9l1,0v1l1,.4v-1.1l1,0v1.3l1-.2v-.9l1,.3v1.1l1,.6v-.9l1-.2v1.3l1,.4v-1l1-.3v1l1,.1v-.8l1-.1v.9l1,1v-1.8l1-.1v.9l1-.4v-1l1,.2v1.3l1,0v-1.1l1,.2v2.1l1-1.6v-1.1l1,.2v1.3l1-.1v-1.3l1,.2v1.2l1-.1v-.6l1,.2v1.2l1-.3v-1l1,.6v.8l1,.2v-1.1l1,.3v1.2l1,0v-.7l1,.5v1.1l1,.2v-1.1l1-.2v.8l1,.7v-1.1l1-.2v1.3l1,.3v-1.2l1,0v1.7l1-.3v-1.5l1,.5v1.1l1,0v-1.4l1,.1v1.5l1-.5v-1.2l1,.4v.9l1-.1v-1l1,.1v1.2l1-.6v-.9l1-.4v.9l1,.5v-.9l1-.3v1.2l1-.2v-.7l1-.3v.8l1,.2v-1.1l1-.5v1.2l1-.5v-1.4l1,.1v1.5l1-.6v-1.2l1,.2v.8l1,.2v-.7l1-.3v1.1l1-.3v-1.4l1-.2v1.5l1-.3v-.9l1,.2v.7l1,0v-1l1,.3v1.1l1,.7v-1.2l1,.6v1.1l1,0v-1.6l1,0v.6l1,1.3v-2.1l1-.3v1.7l1-.4v-.8l1-.4v1.2l1,.4v-.9l1-.3v1l1-.5v-1.4l1,.2v1l1-.3v-.7l1-.3v1.2l1,.1v-1.3l1,.4v1.3l1,.9v-1.9l1,.1v.9l1,0v-1.1l1-.4v1l1,0v-1.1l1,0v1.3l1-.1v-.9l1-.1v1.2l1-.1v-1.3l1,0v1.1l1-.2v-1l1-.4v1.5l1-.1v-1.3l1-.1v1.2l1,.2v-.9l1,.6v.8l1-.2v-.7l1-.9v1.5l1-.3v-1.3l1,.4v.9l1,.7v-1.2l1-.5v.9l1-.2v-1.1l1,0v1.4l1,0v-1.4l1,.5v.9l1-.3v-1.2l1-.1v1.2l1-.2v-.9l1-.1v.7l1,.4v-.9l1,.1v1l1,0v-1l1-.2v1.6l1-1v-.6l1-.3v1.8l1-.8v-1.2l1,.4v.8l1-.1v-.8l1-.2v.7l1,.1v-1l1-.3v1.1l1-.1v-.8l1,0v.9l1-.5v-1.1l1,0v1.7l1,.2v-1.2l1,.4v1.1l1-.5v-1.1l1-.1v1.1l1,0v-1.1l1,.2v2l1-.8v-1l1-.3v1.2l1,.1v-1l1-.8v1.1l1,.5v-1.2l1-.7v.8l1,.9v-1.6l1,.2v1l1,.5v-.6l1-.1v1.5l1,0v-1.6l1-.5v1.5l1,.3v-1l1-.4v1l1,.1v-.9l1-.4v1.1l1,.5v-.9l1,.1v1l1-.3v-.9l1-.1v.7l1-.6v-1.1l1,.2v.7l1,0v-.6l1,.3v.9l1,.7v-1.4l1-.8v1.2l1-.3v-.8l1,.2v.8l1,0v-.8l1,.2v1.3l1,.2v-1.2l1,.3v1.3l1-.2v-.9l1-1v1.6l1,0v-1l1,.1v.8l1-.2v-1.2l1,.1v1.1l1-.3v-1.3l1-.6v1.5l1,.2v-1.6l1,1.1v.8l1,.3v-.8l1,0v2l1-1.4v-.9l1-.2v1.2l1-.2v-1.1l1-.1v.8l1,.9v-1.3l1,.5v.9l1-.1v-1.3l1-.6v1.5l1-.3v-1.7l1,.8v.7l1,.4v-.7l1,.1v.8l1,.5v-1.5l1-.1v.9l1-.1v-1.5l1-.3v1.1l1,.2v-1l1,1v.9l1,.6v-1.2l1,.5v1.3l1-.4v-1l1,0v.9l1,.2v-1.3l1,.5v.9l1,.5v-1.2l1,0v1.3l1,.4v-1.3l1-.2v1.2l1-.2v-.9l1-.1v.8l1,.2v-1.5l1,0v1.2l1-.8v-.9l1,0v.9l1,.4v-1.7l1-.3v1.4l1-.1v-1l1,.7v.7l1,.5v-.9l1,.1v.9l1-.5v-.8l1-.1v1l1,0v-.8l1,.3v1l1-.6v-1.1l1,.3v1l1,.3v-.8l1,.3v.9l1,0v-.9l1,.1v1.4l1-.1v-1.4l1,.3v1.1l1-.3v-1.2l1,0v.9l1,.9v-1.6l1,.2v1.1l1,.5v-.8l1-.9v1.2l1,.2v-1l1-.7v1.4l1,.3v-.7l1,.3v1.1l1,.4v-1.1l1,0v1l1-.3v-1.4l1-.1v1.2l1-.1v-.8l1-.3v1l1,.3v-.8l1-.4v1.1l1,.4v-1l1,.3v1.1l1-.8v-.9l1-.2v1l1,.1v-.9l1,.3v.7l1,.6v-1.4l1,.1v1.1l1-.4v-.8l1-.2v.9l1-.1v-.9l1,.2v1.1l1,.4v-1.5l1,.4v1.3l1-.4v-1.2l1,.1v1.1l1-.2v-1l1,.4v1.1l1,1v-1.5l1,.2v.9l1-.3v-1.1l1-.8v2.2l1-1.1v-.8l1,.5v.7l1,.6v-.7l1,.2v.8l1,.3v-1.4l1,.4v1.1l1,.1v-1.6l1,.3v.9l1-.4v-.8l1-.1v1.4l1-.7v-.7l1,.5v.9l1-.3v-.7l1-.6v1.3l1,.1v-1.2l1-.3v.9l1,.5v-1.1l1-.1v.8l1,.9v-1.1l1,.2v.7l1,.1v-.8l1-.7v1.4l1-1.2v-.7l1,.1v.8l1,.1v-.7l1-.3v1.6l1,0v-1.2l1-.7v1.2l1,.7v-1.1l1,.3v1.3l1,1v-1.1l1-.3v1.1l1,.2v-.9l1,0v1.2l1,.1v-1.4l1-.3v.8l1-.2v-.8l1-.2v1.1l1-.2v-1.1l1,0v.8l1,.1v-1.5l1,.2v1.3l1,0v-.9l1,.2v.8l1,.3v-.8l1-.3v1.1l1,0v-1.3l1-.3v1.1l1-.1v-1.1l1,.2v.9l1,.4v-1.1l1,.3v1l1,0v-.7l1-.6v.7l1,0v-1.3l1,.2v1.1l1,.5v-.9l1,0v1.2l1-.1v-1.4l1,.3v1.1l1-.3v-.8l1-.1v1l1-.1v-1l1-.2v1.1l1,0v-.9l1-.1v1.1l1,.1v-.9l1,0v.8l1,.3v-1.1l1,.2v1l1,.3v-.8l1-.3v1.3l1-1v-.7l1-.2v.9l1,0v-1l1,.3v1.3l1-.2v-.9l1,.6v1l1-.6v-.9l1-.2v.9l1-.2v-1.3l1,.4v.9l1-.1v-.8l1,.2v1.1l1,.1v-1.3l1,0v1l1,.4v-1.1l1-.3v1.1l1-.1v-.9l1,.1v1.1l1,.1v-.8l1,0v1.7l1-.2v-.9l1-.1v1.1l1-.3v-.9l1-.5v1.2l1,.2v-1l1,.5v.8l1,.2v-1.3l1-.2v1.2l1,.2v-.9l1,.2v1.2l1,.2v-1.3l1-.6v1.4l1,.1v-.6l1-.4v1.2l1,0v-1.1l1,.3v.7l1-.3v-.7l1,.4v.7l1,.2v-1.3l1,.4v1.4l1,0v-.8l1-.2v1l1-.1v-1.2l1,0v.8l1,.1v-1l1,.3v.8l1-.2v-.6l1-.3v1l1,.2v-1.3l1,.2v1l1-.3v-.8l1,.6v.7l1,.2v-.7l1,.5v.9l1,.1v-.9l1,.1v1.4l1-.6v-.8l1,.1v1.5l1-.6v-.6l1-.5v1.7l1,.1v-1l1,.3v1.1l1-.5v-1l1,.2v1l1,.3v-.9l1,.8v1.2l1-.8v-.6l1-.6v1.1l1-.7v-1.2l1,.7v.8l1,.4v-.9l1,.1v.8l1,.1v-1l1,.2v1.6l1-.9v-1.3l1-.2v1.4l1-.5v-1.2l1,.6v.8l1,.9v-1.5l1,.4v.8l1-.4v-.9l1-.4v1.1l1,0v-.8l1,.2v.9l1,.3v-.9l1,0v.9l1,.7v-.8l1-.2v.8l1-.3v-1.3l1,.3v.7l1,.3v-.9l1,.4v.9l1-.3v-1l1,.7v.7l1,.3v-.9l1,.5v1.5l1-.6v-1.1l1,0v1.3l1,.2v-1.1l1,.1v1.2l1-.8v-.9l1,.1v1.5l1-.1v-.8l1-.4v1.2l1,.2v-1.2l1-.1v1.2l1,.5v-1l1,.5v.9l1,.1v-2l1,1v1.3l1-.3v-1.1l1,.4v1.3l1-.3v-.9l1-.9v1.2l1,.4v-1.1l1-.5v1.2l1,.3v-.9l1,.2v1l1,.4v-1.5l1-.1v.9l1,.8v-1.2l1-.7v.8l1,.7v-1.6l1,.1v1.2l1,.8v-.7l1-.6v1l1-.4v-1l1-.3v1l1,.3v-1.2l1,.3v1.2l1-.5v-.9l1,.2v1.4l1,.2v-1.1l1,.2v.9l1,.2v-1.3l1,0v1.2l1-.3v-.6l1,0v.9l1-.5v-1.4l1,.5v1.7l1,0v-1.1l1,.5v1.1l1-.3v-1.1l1-.1v.8l1-.3v-.8l1,.1v.7l1,.4v-1.1l1,.3v.9l1-.4v-1l1,.1v.8l1,.1v-.8l1,.1v.8l1,.6v-1.1l1-.7v1.1l1,0v-1l1,0v1.1l1,.8v-1.2l1,.8v.9l1,.2v-1.5l1-.3v1.4l1,0v-1.4l1-.3v1l1,.1v-1.2l1,.1v.6l1,.2v-1.2l1,0v1.2l1,0v-.9l1-.2v1.2l1,0v-.9l1,.3v.9l1,.3v-1.4l1,.5v.9l1,.8v-1l1-.2v.7l1-.3v-.8l1-.5v1.2l1,.7v-1.1l1,.2v1.3l1,0v-1.3l1,.2v.8l1-.5v-.8l1,.4v.7l1-.1v-1.4l1,.1v1.8l1,.2v-1.2l1-.3v1.1l1-.1v-1.5l1,.1v.8l1,.5v-.9l1-.8v1.5l1-.2v-1.2l1-.1v1.2l1,.1v-1l1-.1v1.3l1-.6v-.7l1-.5v.9l1,.4v-1.2l1,.3v.8l1,.4v-.8l1,.6v1.4l1,0v-.8l1-.6v1.4l1-.1v-.9l1-.2v1.2l1,0v-.8l1-.2v.8l1,.6v-1.1l1-.5v1.1l1,1.7v-2l1,.1v1l1,.6v-1l1,.6v.7l1,.1v-.9l1,0v.9l1,0v-1l1-.1v1l1,.4v-1.2l1,.4v1l1-.1v-1l1-.3v1.2l1-.1v-1l1-.1v1.8l1,.2v-1.5l1,0v1.4l1,.3v-1.1l1,.3v1.2l1-.1v-1.4l1-.3v1.2l1-.2v-1.1l1,.1v1l1-.4v-.7l1,.8v1.2l1,.3v-1.3l1,.2v.9l1,.3v-1.2l1,0v1.3l1,.2v-1.8l1,.2v1.1l1,.2v-1.2l1,.3v.9l1,0v-.8l1-.2v1l1-.4v-1l1,.1v1l1-.2v-1.3l1,.8v.7l1-.1v-1.6l1,.1v1.5l1,0v-.8l1,0v.9l1,0v-1l1,0v1.4l1,.1v-1.3l1,.7v1.4l1-.7v-.9l1,.2v.8l1-.5v-.7l1,0v1.6l1-.6v-.8l1,.3v1.1l1,0v-1.1l1,.3v1.8l1-.4v-1.4l1-.2v1.2l1,1v-1.6l1,.6v.9l1,.1v-.9l1-.2v.8l1-.4v-.9l1-.2v1.1l1-.3v-.8l1,.5v.6l1,.8v-1.2l1-.8v1.3l1,.9v-1.4l1-.4v1.1l1-.3v-1.2l1,.5v.9l1,.3v-1.1l1,0v1.1l1-.7v-1l1,.6v.9l1-.1v-.8l1-.1v1.2l1,.2v-.9l1-.1v.7l1,.7v-.9l1,.3v1l1-.1v-1.1l1,.4v.8l1,.2v-1.6l1,.2v.9l1-.2v-.8l1,0v1.3l1,0v-.9l1,.2v1l1,.2v-1.2l1-.1v1l1,.2v-1.3l1,.5v.9l1-.1v-1.3l1-.2v1.5l1-.3v-.9l1,.6v1.3l1-.1v-1.1l1-.2v1.3l1-.2v-.9l1-.3v.8l1-.2v-.9l1-.4v1.3l1,.4v-1.8l1,1v1.2l1,0v-1.6l1-.1v1l1-.4v-.6l1,.4v.9l1,.3v-1l1,.3v1.1l1-.4v-.7l1-.4v1l1,.4v-1.4l1,0v1.1l1,0v-1.1l1-.1v1.3l1-.2v-.6l1-.6v1.4l1,.1v-.9l1,.2v.9l1-.3v-.8l1-.4v.7l1,.4v-.7l1-.4v1.7l1-.3v-1l1-.1v1.3l1-.2v-1.4l1,0v.9l1-.1v-1.6l1,.1v1.1l1-.1v-.8l1,.4v.9l1,.7v-1.5l1-.1v1l1,.3v-1.4l1,.6v.8l1,0v-1.4l1,.1v1.1l1-.1v-.7l1,.3v1l1-.2v-.8l1-.2v1.6l1-.3v-1.1l1,.3v1l1-.4v-.7l1,0v1.2l1-.1v-1.5l1,.2v1.4l1-.4v-.9l1,0v1.2l1,.2v-1.2l1-.5v1.1l1-.1v-.7l1,.5v1.2l1-.1v-.9l1,.2v1.1l1,.6v-1.7l1,.4v1.1l1-.1v-1.2l1,.3v1.5l1,.3v-1.5l1,.3v1.1l1-.2v-1l1-.3v.7l1,.4v-1l1,.5v1.7l1-.2v-1.4l1,.3v1.5l1-.8v-.9l1,.2v.7l1,.5v-1.3l1-.4v1.1l1,.6v-1l1,0v1.1l1,.1v-1l1-.4v1.4l1,.3v-1.2l1,.7v1.2l1-.3v-.8l1-.2v1.1l1,.3v-1.4l1,.1v.8l1,.7v-1.1l1-.7v1.6l1-.1v-1l1-.2v1l1,.2v-.9l1-.1v1l1,.2v-1.1l1,.7v1l1,.2v-.7l1-.9v1.3l1-.5v-1.1l1,.2v.8l1,.1v-1.4l1,.7v1.4l1-.2v-.9l1-.3v1l1,0v-1l1-.3v1.1l1-.2v-.8l1,.3v.8l1,.8v-1.3l1,0v1.3l1,0v-1l1-.3v1l1,.4v-.8l1-.2v1.5l1,.1v-.8l1-.1v.8l1,.2v-1l1-.1v1.4l1,0v-.8l1,.4v1.2l1-.5v-1l1-.2v.9l1,.3v-1.6l1-.2v1.6l1-.3v-1.1l1,.5v1.1l1,.5v-1.4l1,.2v1l1-.3v-.9l1,0v.8l1,0v-.9l1,.2v.8l1,.5v-1.7l1,.3v.9l1,.2v-1l1,.1v1.4l1-.1v-.9l1,0v1l1,.1v-1.8l1,.7v1.3l1-.3v-1l1,.1v.9l1,.1v-1l1,.2v.6l1-.1v-.8l1,.2v1.1l1-.1v-1.4l1,.6v.9l1-.5v-.8l1,.2v1.1l1,.2v-1.1l1-.2v1.4l1-.1v-.8l1,.3v1.3l1-.2v-.9l1-.5v1.7l1-.4v-1l1,0v1.1l1,.5v-1.2l1,.2v1.4l1,0v-1.4l1,.6v1l1,0v-1.1l1-.3v1l1-.2v-.8l1-.2v.8l1,.1v-1l1-.4v1.3l1-.1v-.9l1-.2v1.8l1-.3v-1l1,.1v.8l1,.3v-1.2l1-.2v.8l1-.2v-1.6l1,.9v.9l1,.4v-1l1,.5v.9l1,.5v-1.4l1,.5v.7l1,.1v-.9l1-.5v1.1l1,.3v-1.2l1,.2v1.4l1-.2v-.9l1-.2v1.1l1,.6v-1.2l1,.4v1l1,.7v-1l1-.9v1.3l1,.1v-1.3l1-.1v1.4l1,.3v-1l1,.7v1.8l1-.9v-1.1l1,.1v1.3l1-.5v-.8l1-.2v1.2l1,.9v-1.2l1-.2v1l1,1v-1.7l1,.3v.8l1,.4v-1.5l1,.6v1.1l1-.3v-1.3l1,.6v1.2l1,.2v-.8l1-.4v1.4l1,14.3v-4l1,1.2v2.2l1-.7v-3.1l1,1.6v2l1,2.2v-4.5l1,1.7v13.1l1-10.4v-3.6l1-.5v5.8l1,11.5v-16.1l1-.1v5.4l1-2.8v-1.9l1,.3v2.6l1,2.1v-4.4l1,2.1v2.7l1-1.9v-2.3l1-2v3.9l1,.7v-1.8l1-2.5v3.5l1-.6v-2.5l1,2.4v2.4l1,2.5v-2.9l1,.1v3l1,0v-2.5l1,0v4l1-1.2v-3.1l1-1.1v3.7l1,.2v-2l1-.8v1.8l1,2.8v-3.2l1,1.1v2.3l1,2.5v-1.9l1,.4v2.1l1-.9v-2.2l1-1.4v1.9l1,2.5v-3l1,1.5v3.4l1-1.8v-2.8l1,.7v2.9l1-.3v-3l1-.6v3.7l1-2.2v-1.8l1-1v3.8l1,.4v-2.7l1-.5v2l1,3.6v-4.6l1,3.4v14.4l1-10.2v-4.7l1,.5v2.6l1-.1v-1.9l1-1.3v2.8l1-.2v-2.5l1,.4v2.4l1,.7v-2.4l1,.4v1.8l1,.1v-1.9l1,2v2.1l1,0v-2.8l1-.2v2.2l1,.5v-2.9l1,1.6v2.2l1,1.1v-3.1l1,.8v3.7l1-.8v-2.2l1-.4v2.6l1,.3v-1.8l1,.1v2.9l1-.2v-2.5l1-.3v4.6l1-3v-1.9l1-.6v3.5l1-.4v-2.4l1-.2v4.2l1,1.5v-2.3l1-.5v3l1-1v-2.7l1,.6v4.1l1,2.7v-4.6l1,1.7v11.7l1-8.6v-3.8l1,.3v2.2l1,1v-2.5l1,.8v2.5l1-1.7v-2.9l1,1.2v2.2l1,.7v-3.8l1,4.2v8l1-3.6v-3.4l1-4v6l1,7.2v-10.4l1,.4v3.4l1-1.3v-2.2l1-1.3v3.1l1,5.9v-7.6l1-.4v3.2l1,.3v-3.3l1,.8v3.1l1-.8v-3.5l1,1.2v3.3l1,.3v-2.4l1-.3v5l1-.5v-2.7l1-.1v4l1,.6v-2.1l1-.2v2.4l1-.1v-2.4l1,1v2.1l1,.9v-3.3l1,.9v6.5l1,9.4v-14.3l1,0v4.2l1-2.5v-2.6l1,3.2v2.9l1-.5v-3.6l1-.7v2.5l1,.1v-2.3l1,1.4v2.3l1,.3v-1.9l1-1.5v2.4l1,1.9v-4.7l1,1.2v15l1-9.7v-4.5l1,.8v3l1,1.2v-5.5l1,1.7v12.3l1-7.3v-4.2l1,1.9v2.8l1-1.4v-3.1l1-.5v3.4l1,2.4v-2.5l1-.1v2.1l1-2.3v-2l1,.7v2.1l1,.2v-2.4l1,1.2v1.9l1,1.1v-3.6l1-1.2v2.4l1-3.4v-2.5l1,.8v3.6l1,.3v-2.8l1-1.6v2.1l1-.2v-4.2l1,1v6.4l1-3.1v-3.2l1-1v5.2l1,7.2v-11.7l1-.2v5.2l1,4.3v-7.8l1-.1v3.4l1-1.3v-2.1l1-.6v3.7l1,.2v-2.5l1-2.5v3.4l1,3.3v-4.8l1,.2v4.8l1-.4v-2.3l1,2.3v2.3l1,1.6v-2.5l1-.6v3l1,1.6v-2.3l1-1.4v4.3l1,8.9v-11.3l1-1.1v5.3l1,2.9v-7.1l1,1.3v3.3l1,.7v-2.1l1-1v1.8l1,1v-1.8l1,.8v2.2l1-1v-1.9l1-3.6v2.4l1,1.8v-2.6l1,.5v3.3l1-.8v-3.1l1,1.8v1.7l1,1.1v-2.4l1-2.7v2.3l1-1.6v-3.2l1-.2v3.8l1,0v-1.8l1-1.4v1.8l1,1.5v-3.9l1,.9v12.7l1-.6v-14.1l1,.8v10.6l1-8.1v-3.8l1-1.9v3.5l1-3.3v-2.4l1,2.2v1.9l1-2.2v-2.6l1,.8v2.7l1,1.4v-2.4l1-1.5v3.2l1-.5v-2.2l1-1.4v2.6l1,2.3v-3.3l1,.3v3.8l1,1.4v-3.7l1,2.3v11.7l1-7.9v-5.3l1,1.1v2.4l1,.7v-2.3l1-1.1v3.8l1,.4v-2l1,1v2.1l1-.4v-2.3l1-.4v3l1-.1v-3.7l1-.7v3.2l1-1.5v-2.3l1,.6v2.5l1-1v-3.1l1,3.4v2.7l1-.2v-2l1-2.3v5.2l1-2.3v-2.4l1-.4v2.1l1,1.4v-2.2l1,.8v1.5l1-2.8v-2.6l1,1.6v3.1l1,4.7v-7.4l1-.6v3.6l1-1v-2l1,1.6v1.9l1-1v-2l1-.5v2.4l1-.4v-3.5l1,.6v3.8l1-1.1v-2l1-1v3.3l1-2.3v-3.2l1,.7v2.1l1,2.1v-2.6l1,2v3.9l1,5.9v-9.8l1,1.1v3.8l1-5.9v-1.8l1-1.8v2.4l1,2.6v-2.9l1-.5v3.7l1,4v-7.3l1,.4v3.4l1,.3v-3.6l1-.9v2.3l1,2.3v-4l1,.3v14.6l1-13v-4.6l1,1.3v1.8l1,3.8v-3l1,.3v3.4l1-2.1v-3.2l1-1.4v4.7l1,1.8v-3.6l1,.6v1.8l1-.2v-1.6l1-.3v2.4l1-.2v-2.9l1-.9v2.8l1,2v-2.2l1,3.1v2l1-2.3v-2.2l1-.9v3l1,1.7v-3.3l1-.1v2.3l1,.9v-4l1,1.6v2.7l1,1v-2.9l1-.7v2.7l1-1.4v-2.5l1,2.2v2.1l1,3.1v-3.9l1-.5v4.5l1,9.5v-12.9l1-2v4.9l1-2.5v-1.7l1,2.1v2.6l1-.3v-3l1-1.3v2.1l1,.6v-1.7l1-.3v4.1l1-.5v-3l1,.1v5.5l1,11v-13.3l1-.7v4.6l1-1.2v-2.7l1,.6v3.1l1-.7v-2.6l1-.6v4l1-1.8v-2.8l1,2.2v2.8l1-2v-1.9l1-.6v4.7l1,4.5v-8.4l1,1.1v3.4l1-1.6v-2.1l1-.4v2.7l1,.1v-1.7l1-2.9v3.8l1,3.2v-3.4l1-.7v4.3l1,5.2v-9.7l1-2.6v3.7l1-.7v-2.5l1-.6v4.6l1,11.4v-14.3l1-.7v4.5l1-3.4v-1.8l1-.5v2.4l1,0v-2.8l1,.7v3.4l1-.1v-3.9l1-1.8v3.1l1,1v-3.8l1-1v2.2l1,.1v-2.4l1,.7v2.1l1-1.6v-2.5l1-1.5v2l1-.4v-2.4l1-.7v2.6l1,1.9v-3.7l1,.5v4.9l1-2.4v-2.3l1-.8v3l1,.6v-2.6l1,.1v2.8l1-2.1v-1.9l1,.7v2.2l1,3.6v-4.8l1,2v13l1-10.4v-4.8l1-1.4v7.9l1-3.9v-3.6l1,.2v3l1-.2v-2l1,.6v1.9l1,.2v-2.8l1,1.6v1.9l1,1v-3.2l1-2.2v2.9l1,1.2v-2l1,1.4v2l1-1.7v-3.2l1,.3v2.5l1,.5v-2.8l1-.8v3.7l1,7v-8.4l1-2.7v5.2l1,2.9v-6.7l1,.7v2.4l1-1.2v-2.4l1,1.7v2.1l1,2.2v-2.7l1-.4v2.2l1,.4v-2.1l1,.7v3l1-1v-1.5l1,.4v2l1,.2v-2.4l1-.2v2l1-1.9v-4l1,1.2v2l1,.7v-2.5l1-1.8v2.5l1-.6v-2.4l1-.6v2.8l1-.7v-4l1,1.3v2.3l1,2.3v-2l1,1v3l1,2.1v-4.7l1,.6v14.2l1-9.2v-5.1l1,.4v7.2l1,3.2v-11.9l1-1.1v12.8l1-10.4v-5.5l1,.8v2.1l1,2.4v-5.1l1,2.2v11.7" stroke="#f09020" stroke-width="1.5"/><path d="M440.5,750.2v1.3l1-.9v-1.3l1-.4v1.4l1-1v-1.1l1-.7v1.3l1-1.3v-1.1l1-.9v1.6l1-1v-1.2l1-.9v1.2l1-1.2v-1.3l1-1.6v1.3l1-1.3v-1.5l1-1.4v1.6l1-.9v-1.3l1-.5v1.1l1-1.4v-1l1-1.8v1.6l1-1.2v-1.4l1-1.7v2l1-1.4v-1.4l1-.9v1.3l1-1.1v-1.2l1-.8v1.3l1-1.2v-1l1-1v1.1l1-1.4v-1.4l1-.7v1.2l1-1.3v-1.1l1-1.6v1.4l1-.8v-1.3l1-1v1.5l1-.9v-1.8l1-1v1.4l1-1.4v-1.2l1-.7v1.2l1-.9v-1.4l1-.4v1.1l1-.7v-1.3l1-1.1v1.1l1-.9v-1.2l1-1.1v1.3l1-.4v-1.3l1-.6v1.1l1-.7v-1.1l1-.7v1.3l1-.4v-1.3l1-.6v1.4l1-.3v-1l1-.5v1.1l1-.2v-1.8l1-.4v1.1l1-.9v-1.2l1-.8v1.2l1,.1v-1.7l1,.1v1l1-.2v-1l1-.8v1.4l1,.2v-1.2l1-.4v1.1l1-.4v-1.4l1-.7v1.3l1-.4v-1.5l1-.1v1.3l1,0v-1.5l1-.9v1.7l1-.4v-1.4l1-.2v1.2l1-.3v-1.5l1-.1v1.3l1,.1v-1.3l1-.4v1.3l1-.6v-1.3l1-.3v1.1l1,0v-2l1,.1v1.3l1-.5v-1.5l1-.2v1.1l1-.4v-1.4l1-.6v1.4l1-.9v-1.5l1-.3v1.8l1-.5v-1.6l1,0v1.5l1-.2v-1.5l1,.1v1.2l1-.4v-1.2l1-.7v1.2l1-.1v-1.3l1-.2v1.2l1,.1v-1.2l1-.2v1.2l1-.5v-1.3l1-.2v1.3l1,.1v-1.3l1,0v1.1l1-.2v-1.1l1-.1v1.3l1-.3v-1.4l1-.2v1.6l1-.6v-1.4l1,0v1.1l1,.8v-1.5l1,.4v.9l1,.2v-1.4l1-.6v1.8l1-1v-.9l1-.5v1.4l1,.2v-1.5l1,0v1l1-.3v-1.3l1-.1v1.1l1-.4v-1.3l1,.3v1.4l1-.4v-1.1l1-.1v1.2l1,.2v-1.7l1,.2v1.4l1,1.3v-2.9l1,.2v1.4l1-.1v-1.5l1,.1v1.1l1-.2v-.9l1-.5v1l1,.2v-1l1-.1v1l1,.9v-1.3l1,0v1.6l1-.2v-1.7l1-.5v1.4l1-.2v-1.3l1,.5v1.4l1-.6v-1.3l1,.2v1.3l1-.2v-1.2l1,.5v1l1,.6v-1.4l1-.3v1.8l1,.1v-1.2l1-.4v1.2l1,.2v-1.1l1,.2v1.5l1,.3v-1.5l1,.3v1l1,.1v-1.2l1-.3v1.8l1,0v-1.3l1,.1v1.6l1-.1v-1.3l1,.1v1.3l1-.3v-1.2l1-.3v2.2l1-1v-1.4l1,.7v1l1,.3v-1.2l1-.4v1.2l1-.4v-1.4l1,.4v1.1l1,.6v-1.2l1,.1v.9l1,.2v-1.4l1,0v1.4l1,.1v-1.1l1,.5v.9l1,.5v-1l1,.2v1.5l1,0v-1.4l1-.4v1.3l1,.5v-1.5l1-.3v1.5l1,0v-1.2l1-.2v1.3l1,.2v-1.3l1,0v1.3l1,0v-1.2l1,0v1.6l1-.3v-1.3l1-.2v1.4l1,.2v-1.2l1,.2v1.1l1-.2v-1.1l1-1.3v1.4l1,0v-1.3l1-.3v1.1l1,.7v-1.2l1-.5v1.4l1,.1v-1.4l1-.1v1.3l1,.7v-2l1-.1v1.2l1-.1v-1l1-.4v1l1,.2v-1.3l1-.1v1.3l1,.3v-1.1l1-.3v1.2l1,.4v-1.6l1,.2v1.4l1,.3v-1.6l1-.1v1.4l1-.3v-1.3l1-.2v1.2l1,.2v-1.1l1-.3v1.3l1,.1v-1.3l1,0v2.7l1-1.3v-1.1l1-.4v1.2l1,.4v-1.5l1-.5v1.3l1,0v-1.5l1,.2v1.3l1-.3v-1.4l1,.1v1.2l1,.1v-1.5l1,.1v1.8l1,.2v-1.4l1,0v1.4l1-.2v-1.4l1,.1v1.5l1-.3v-1.4l1-.2v1.6l1-.3v-1.2l1,0v1.1l1-.3v-1.2l1-.6v1.5l1-.6v-1l1,.3v1.8l1-.3v-1.1l1-.2v1.6l1-.2v-2l1,.3v1.2l1-.5v-1.1l1-.2v1.6l1,.4v-1.3l1,.1v1l1,.1v-1.4l1,.1v1.3l1,.2v-.9l1-.4v1.3l1-.1v-1.3l1-.4v1.2l1,0v-1.3l1,.1v1.6l1-.1v-1l1-.4v1.1l1,0v-1l1-.9v1.6l1-.2v-1.1l1,.1v1.4l1,.1v-1.3l1-.1v1.4l1,.2v-1.2l1-.4v1.8l1-.5v-1.5l1,.2v1.5l1,.2v-1.2l1-.6v1.4l1-.5v-1.1l1-.3v1.1l1,0v-1.3l1-.1v1.1l1,.5v-1.3l1-.3v1.7l1-.3v-1.6l1,.3v1.3l1,0v-1.6l1,.6v1.2l1-.1v-1.2l1,.1v1.4l1-.4v-1.1l1-.2v1.3l1,.1v-1.3l1,.2v1.2l1,.4v-1.3l1-.3v1.6l1-.1v-1.5l1-.2v1.1l1,0v-1.3l1,0v1.2l1,0v-1.1l1-.2v1.2l1,.6v-1.3l1,.1v1.2l1-.3v-1.1l1-.3v1.9l1-1v-1.1l1-.3v1.2l1,.5v-1.3l1,0v1.2l1,0v-1.1l1-.5v1.1l1-.3v-1.3l1-.1v1.2l1,0v-1.3l1,0v1.1l1,.2v-1.5l1-.1v1.2l1,.7v-1.5l1,.3v1l1,.5v-1.5l1,0v1.1l1-.2v-1l1-.1v1.1l1,.3v-1.1l1,.1v1.2l1,.4v-1.5l1-.2v1.3l1-.1v-1.2l1,0v1.8l1-.5v-1.4l1-.1v1.6l1-.2v-1l1,0v1.1l1-.1v-1.3l1,.3v1.5l1,.2v-1.7l1,.1v1.1l1-.1v-1.5l1,.4v1.1l1,0v-1.4l1,.3v1.5l1-.2v-1.2l1,.1v1.1l1,.2v-1.6l1,.1v1.3l1-.2v-1.3l1,.1v1.3l1-.2v-1.2l1,0v1.1l1,.2v-1l1,.2v1.3l1,0v-1l1-.4v1.5l1,.3v-1.3l1-.2v1.1l1,.2v-1.4l1-.1v1.3l1,.2v-1.2l1,.3v1.1l1,0v-1.8l1,.3v1.3l1-.3v-1.7l1,.5v1.2l1,.6v-1.6l1,.8v1l1,.4v-1.2l1-.1v1.6l1-.2v-1.2l1-.1v1.2l1,.1v-1.2l1,0v1.2l1,.3v-1.4l1-.2v1.4l1,.1v-1.1l1,0v1.2l1,.5v-1.7l1-.3v1.6l1-.2v-1.2l1,.2v1l1,.4v-1.3l1-.2v1.2l1-.1v-1.3l1-.1v1.2l1,.4v-1.1l1-.3v1.4l1,0v-1.4l1-1v1.8l1,.4v-1.4l1,.7v1.2l1,.3v-1.1l1-.1v1.3l1,0v-1.4l1,.1v1.1l1,.2v-1.6l1,.2v1l1,.8v-1.7l1-.2v1.4l1,0v-1.2l1-.2v2.1l1-.5v-1.3l1,.2v1.3l1-.1v-1.1l1-.3v1.2l1-.2v-1.2l1,.4v1.4l1,.1v-1.4l1,0v1.3l1,0v-1.5l1-.1v1.1l1-.3v-1.2l1,.4v1l1-.3v-1l1,0v1.4l1,0v-1.9l1,.3v1.6l1-.3v-1.2l1-.1v1.4l1,.6v-1.3l1,.5v1l1-.5v-1.2l1,0v1.4l1-.2v-1.3l1,.4v1.1l1-.1v-1.4l1,0v1l1,.3v-1.2l1-.3v1.3l1-.3v-1.2l1-.6v1.7l1,.3v-1.3l1,.1v1.2l1,.3v-1.3l1,.2v1.6l1-.2v-1l1,.1v1.2l1,.3v-1.6l1-.2v1.2l1-.2v-1.3l1-.5v1.2l1,.5v-1.2l1,.3v1.2l1,.6v-1.2l1,.2v1l1-.2v-1.2l1-.4v1.7l1-.6v-1.1l1-.1v1.5l1,0v-1.6l1,.1v1.6l1,.1v-1.5l1,0v1.3l1-.5v-1l1,.1v1.2l1-.3v-1.1l1,.3v1.1l1-.3v-1.1l1,0v.9l1,.4v-1.4l1,.2v1.2l1,.2v-1.5l1,.4v1.3l1-.6v-1.1l1,.2v1.1l1-.3v-1.2l1,.3v1.4l1-.3v-1.7l1,.6v1.7l1-.4v-1.3l1,.1v1.4l1-.4v-1.3l1,.2v1.5l1,.1v-1.3l1,.5v1.2l1-.2v-1.2l1-.2v1.2l1,.3v-1.5l1-.1v1.2l1-.1v-1.6l1-.2v1.3l1,.2v-1.3l1,0v1.3l1,.5v-1.7l1-.3v1l1,.1v-1l1-.1v1.2l1-.3v-1.1l1-.3v1.5l1,.2v-1.5l1,.5v1.2l1,.3v-1.5l1,.3v1l1,.3v-1.5l1-.8v1.9l1,0v-1.5l1,.4v1.2l1,0v-1.1l1,0v1.5l1,0v-1.2l1,.1v1.3l1,.2v-1.4l1-.2v1.6l1,.2v-1.4l1,.1v1.1l1,0v-1.2l1-.3v1.2l1,.4v-1.5l1,.4v1.1l1,.4v-1l1-.5v1.4l1-.2v-1.3l1,.1v1.4l1-.3v-1l1-.5v1.3l1,.5v-1.6l1,.1v1.4l1-.1v-1.2l1,.2v.9l1,0v-1.3l1,.1v1l1,0v-1.5l1,.3v1.7l1-.1v-1.5l1,.2v1.3l1,.6v-1.6l1-.4v1.5l1-.3v-1.3l1,.1v1.1l1,.2v-1.2l1,.4v1.3l1,.2v-1.7l1-.1v1.4l1-.1v-1.8l1,.7v1.2l1,.7v-1.5l1,.2v1.4l1-.1v-1l1-.5v1.3l1-.1v-1l1-.7v1.1l1,.2v-1.6l1,.5v1.1l1,.5v-1.7l1,.3v1.5l1-.3v-1.1l1,.6v1l1-.1v-1.5l1,.7v1.2l1-.1v-1.2l1,.2v1.2l1-.2v-1l1-.2v1.1l1,.2v-1.1l1,0v1.6l1-.5v-1.2l1-.1v1.3l1-.4v-1.1l1-.2v1.5l1-.2v-1.2l1,.1v1.2l1,.3v-1.2l1,.2v.9l1,0v-.9l1-.1v1.4l1-.1v-1l1,.1v1.2l1-.1v-1.5l1,0v1.4l1-.1v-1.6l1,.6v1.1l1,.2v-1.4l1,.9v1.2l1-.6v-1.3l1,0v1.2l1-.2v-1.4l1,.3v1.2l1,.5v-1.4l1-.5v1.8l1,0v-1.4l1,.5v1l1,.7v-1.3l1,0v1.4l1,.1v-2l1,.2v1.1l1,.3v-1.2l1-.1v1.3l1,.6v-1.4l1,.4v1.1l1,.8v-1.6l1-.1v1.5l1-.1v-1.2l1-.2v1l1,.1v-1.1l1-.3v1.5l1,.4v-1.3l1,.6v1l1,.4v-1.5l1,.1v1.1l1-.1v-1.2l1,.4v1l1,.1v-1.4l1,.6v1.4l1,.1v-1.5l1,.7v2.2l1-.9v-1.3l1,.1v1.2l1,0v-1.1l1-.1v1.2l1,.1v-1.2l1,.4v1.3l1,0v-1.5l1,.1v1.2l1,0v-1.3l1,.1v1.1l1,.4v-1.3l1,.1v1l1,.3v-1.3l1,0v1.1l1,.3v-1.5l1,.6v1l1,.9v-1.9l1,.1v1.6l1,.3v-1.3l1-.3v1l1,.5v-1.3l1,.3v1.2l1-.2v-1.1l1,.1v1l1-.2v-1.2l1,.2v1.3l1,0v-1.2l1-.3v1.4l1,.1v-1.5l1-.5v1.7l1,0v-1.3l1-.2v1.2l1-.2v-1.4l1,.2v1.8l1,.1v-1.5l1-.1v1.2l1-.2v-1.3l1,.1v1.6l1-.4v-1l1,.4v1.1l1-.2v-1l1-.5v1.4l1-.1v-1.3l1-.2v1.2l1,.4v-1.4l1-.1v1.4l1-.1v-1.5l1-.2v1l1,.2v-1.2l1,.3v1.1l1,.3v-1.3l1,.2v1.1l1-.1v-1l1-.3v1.3l1-.6v-1.2l1-.1v1.5l1-.1v-1.5l1,.3v1l1,.8v-1.9l1,.7v1.3l1,.2v-1.9l1,.2v1.3l1,.5v-1.2l1-.5v1.4l1,.1v-1.8l1,0v1.3l1,.1v-1l1-.2v1.3l1,.3v-1.3l1-.5v2l1-.4v-1.1l1-.2v1.1l1,.2v-1.5l1-.4v1.6l1-.5v-1.2l1-.2v1.3l1,.2v-1.1l1,.1v1.5l1-.1v-1l1-.3v1.1l1,.5v-1.3l1,.2v1.2l1,.1v-1.6l1-.2v1.4l1,.5v-1.5l1,0v2l1-.3v-1.8l1-.4v1.5l1,.8v-1.7l1,0v1.6l1,.2v-1.4l1,.2v1.2l1,.1v-1.3l1,0v1.3l1,.1v-1.5l1,.1v1.1l1,.3v-1.5l1,.5v1.7l1-.4v-1.5l1,.1v1.2l1,.3v-1.6l1,.4v1.4l1,.1v-1l1-.2v1.1l1,.5v-1.4l1,.3v1l1,.2v-1.2l1-.1v1.1l1,.8v-1.5l1,0v1l1,.3v-1.5l1-.1v1.4l1,0v-1.3l1,.1v1.5l1-.3v-1.1l1,0v1.3l1-.1v-1.5l1-.3v1.6l1,.2v-1.2l1-.1v1l1,.2v-1.2l1-.2v1.3l1,.3v-1.6l1,1.2v1.3l1,.1v-1.3l1,.1v1.2l1-.4v-1l1,.1v1.4l1-.2v-1.2l1,.5v1.2l1,.2v-1.7l1,.5v1.3l1-.6v-1.3l1-.1v1.3l1,.5v-1.8l1,.3v1.3l1,.3v-1.1l1,.1v1l1-.1v-1.3l1,.2v1.1l1,.3v-1.1l1-.1v1.2l1-.4v-1.4l1-.3v1.5l1,.6v-1.6l1,.3v1l1-.3v-1.1l1-.2v1.1l1,0v-1.1l1,.1v1.1l1,.6v-1.3l1,.1v1l1,.2v-1.2l1-.2v1.5l1-.3v-1.4l1-.3v1.5l1-.1v-1.3l1,.3v1.1l1,.9v-1.6l1-.3v1.2l1-.1v-1.3l1,0v1.2l1,.5v-1.4l1,.2v1.5l1,.6v-1.5l1,.3v1.1l1-.3v-1l1-.3v1.2l1,.3v-1.5l1,.3v1.2l1,.3v-1.2l1-.7v1.3l1,0v-1.4l1,.2v1.4l1,.5v-1.6l1,1.1v1l1,.1v-1.2l1,.2v1.4l1-.2v-1.4l1,.4v1.5l1-.5v-1.6l1,.4v1.2l1,.1v-1.5l1-.1v1.5l1,.1v-1.4l1-.1v1.4l1-.3v-1.3l1-.1v1.1l1,.7v-1.7l1,.2v1.5l1,.2v-1.5l1-.3v1.2l1,.4v-1.3l1-.1v1.3l1,.4v-1.2l1,.2v1.2l1,0v-1.1l1-.6v1.1l1-.3v-1.1l1,0v1.1l1,.8v-1.4l1,.6v1.2l1-.4v-.9l1-.3v1.2l1-.1v-1.1l1,.2v1.6l1-.1v-1.3l1,.5v1.2l1-.1v-1.4l1-.5v1.7l1-.3v-1.5l1,0v1.5l1,.3v-1.3l1-.4v1.5l1-.2v-1.3l1-.2v1.1l1,.7v-1.4l1,.3v1.2l1-.2v-1.2l1-.7v1.2l1,1.2v-2.4l1,.2v1.4l1,.5v-1.3l1,.1v1.2l1,0v-1.4l1,.1v1.1l1-.3v-1l1,0v1.4l1,.1v-1.4l1,0v1.3l1,.1v-1.7l1-.2v1.1l1,.5v-1.3l1,.1v1.2l1-.1v-1l1,.2v1.1l1-.1v-1.1l1-.1v1.5l1,.4v-1.5l1-.8v1.6l1,0v-1.1l1-.1v1l1,1.3v-1.7l1-.2v1.3l1,.3v-.9l1-.7v1.3l1-.1v-1.2l1-.1v1.2l1,.4v-1.4l1,.3v1.3l1-.2v-1.5l1,.4v1.5l1-.4v-1.3l1,.4v1.1l1,.1v-1.3l1-.1v1.6l1,.1v-1.1l1,.2v1.1l1,.2v-1.6l1,.2v1.3l1-.1v-1.1l1,.1v1.2l1-.1v-1.2l1,.5v1.5l1-.3v-1l1,0v1.1l1,.2v-1.7l1,.2v1.1l1-.1v-1.2l1,.1v1.2l1,.4v-1.4l1,0v1.6l1,.2v-1.4l1-.3v1.5l1,.3v-1.5l1,0v1.4l1-.3v-1.5l1,.6v1l1,.3v-1.4l1,.3v1l1,.2v-1.2l1,.1v1.6l1,0v-1l1-.2v1.2l1,.5v-1.4l1,.3v1.1l1,.5v-1.2l1-.4v1.5l1,.3v-1.4l1-.4v1.1l1,0v-1.4l1,.1v1.2l1,.1v-1.2l1,.6v1.3l1,.1v-1.2l1-.3v1.6l1-.7v-1.4l1,.1v1.4l1,.5v-1.4l1,.4v1l1,.3v-1.4l1,.5v2l1-.6v-1.1l1,.5v1l1-.3v-1.1l1-.4v1.6l1-.5v-1.1l1-.3v1.4l1,.2v-1.3l1,.1v1.3l1,.4v-1.8l1,0v1.9l1-.5v-1l1,0v1.4l1-.1v-1.5l1,0v1.3l1,.2v-1.5l1,.2v1.4l1,.1v-1.3l1,.2v1.4l1,.2v-1.5l1,0v1.7l1-.2v-1.1l1-.6v1.3l1-.7v-1.2l1-.1v1.4l1,.1v-1.2l1-.2v1.1l1,.3v-1.5l1-.2v1.2l1,.6v-1.3l1-.1v1.4l1,0v-.9l1,.4v1.5l1,.1v-1.1l1,.5v1.1l1,1.5v-2.6l1,.1v1.3l1-.2v-1.1l1-.3v1.2l1,.3v-1.4l1-.1v1.2l1,0v-1.1l1-.3v1.4l1-.2v-1.6l1,.5v1.8l1,0v-1.1l1-.1v1.1l1,.1v-1.3l1,.4v1.1l1-.1v-1.2l1-.2v1.8l1-.2v-1.1l1-.1v1.2l1-.2v-1.1l1,0v1.3l1-.1v-1.3l1-.3v1.4l1,.5v-1.4l1,.3v1l1,.1v-1.1l1,0v1.4l1-.3v-1.3l1,.1v1l1,.1v-1.2l1-.3v1.6l1,.2v-1.3l1,.3v1.3l1,0v-1.2l1-.4v1.5l1-.5v-1.5l1,.1v1.6l1,.4v-1.1l1,.3v1.1l1,0v-1.1l1-.2v1.8l1-.1v-1.5l1,.5v1.2l1-.6v-.9l1-.5v1.5l1,0v-1.1l1,.2v1.5l1,.2v-1.1l1,.1v1.1l1,.1v-1.6l1,.5v1.1l1,1.3v-1.9l1,0v1.3l1,.1v-1.5l1,.4v1l1,.8v-1.5l1,.6v1.1l1-.3v-1.1l1-.1v1.7l1-.2v-1l1-.1v1.5l1-.6v-1.1l1,.2v1l1,.5v-1.2l1,.7v1.3l1-.1v-1.3l1,.4v1l1,4.2v-2.3l1-.5v2.9l1,.8v-1.7l1,.8v2.6l1-.4v-2.2l1,.7v2.7l1-.2v-2.2l1-.6v2.8l1,.8v-2.2l1,1.1v2l1,.6v-3.4l1,1v1.8l1,.8v-2.6l1,1v4.6l1-.8v-4.1l1,.4v3.1l1-.6v-2.2l1,0v3.3l1-1v-1.8l1-1v3l1,1.6v-2.9l1,1.4v2.1l1,.7v-2.9l1,.9v2l1,.1v-2.4l1-1.9v3.6l1-.3v-2.6l1,.8v3.2l1,1.4v-3.5l1,1v2.3l1,.6v-3.2l1,1.1v2.3l1,1.5v-2.9l1-.3v2.5l1,.8v-3.7l1,.7v1.9l1,1.7v-2.3l1-.1v2.1l1,.4v-2.4l1,1.4v4.4l1-1.5v-2.5l1,.9v2.2l1,.1v-2.8l1-1.1v4.2l1-1.6v-2.3l1-.7v2l1,1.6v-3.3l1,.3v3.3l1,2.3v-4.4l1,1.5v2.7l1,.7v-2.3l1-.3v2.6l1-.2v-2.3l1,1.1v2.1l1-1.1v-1.8l1-.7v1.7l1,2.2v-2.4l1,1.6v3.8l1-.6v-4.4l1-.3v4.6l1,.9v-2.8l1-1.2v2.3l1-.1v-2.7l1,1.8v2.1l1,.6v-2l1,.6v2.6l1,1.7v-3.1l1,2.1v2.5l1-1.8v-2.1l1-.7v2.3l1,1.1v-1.8l1,0v2.9l1-.2v-2.1l1,.9v2.5l1,.1v-2.4l1-.2v2.1l1,1.8v-3.2l1,.8v2.3l1,.8v-3.3l1-.4v4l1-.4v-2l1-.7v1.9l1,1.4v-2.8l1,.7v2.9l1,1.9v-2.6l1-.4v2.2l1,.2v-3.1l1-.6v3.8l1-.5v-2.4l1,2v2.2l1,.8v-2.4l1,.5v2.5l1-.9v-2.1l1-.1v2.6l1,1.4v-2.7l1-1.7v3.7l1-.4v-2.6l1,2.1v2.8l1-.7v-2.2l1-.7v2l1,.9v-2.2l1,.5v3.4l1-.1v-2.1l1,.5v2.3l1,.3v-2.8l1,2.1v2l1,1v-2.1l1,.4v2l1,2.1v-2.3l1,0v2.2l1-.3v-2.4l1-1.5v2.4l1-.2v-2.5l1,.7v3.1l1,.4v-2.2l1-.3v2.8l1,.3v-2.5l1,1.2v2.2l1-.2v-1.8l1,.6v2.5l1,.6v-2.4l1,.3v2.4l1,1.3v-2l1,.9v2.4l1-1.2v-1.6l1-.4v2.5l1,.3v-2.7l1,.5v2.2l1,.3v-2.9l1,1.4v2.1l1,.1v-2.2l1,.8v2.4l1-1.8v-3.1l1,1.2v4.5l1-2.1v-2.2l1-.7v2.3l1-2.3v-2.4l1-.5v2.4l1-.6v-3.3l1-.5v1.9l1,.5v-2.5l1,.7v2l1-.3v-1.9l1-1.2v2.2l1-1.6v-2.7l1,.1v2.9l1,1.3v-2l1,1v2l1,.3v-2.3l1,1.6v1.7l1-.3v-2.4l1,.6v2.2l1,1.6v-3.1l1,.6v2l1,.3v-2.4l1,1.9v1.8l1,1.6v-2.3l1,.7v2.3l1,.8v-2.6l1,0v3.4l1,.1v-2.2l1-.2v2.5l1,.4v-2.6l1,.4v1.9l1,1.3v-2l1,.7v2.2l1,1.1v-2.9l1,1.6v2.1l1,.4v-3.5l1,.1v2.2l1-.2v-2l1,.5v1.8l1-2.4v-2.5l1,.7v2.1l1-.3v-2.9l1,.6v2l1-1.3v-1.9l1-1.6v2.9l1-1.1v-1.8l1,.4v2.5l1,.5v-2.3l1-1.5v2.2l1-1.1v-2.5l1-.8v2l1-1.7v-2.2l1-1.3v2.5l1,1.3v-3l1,.6v2.2l1,1.7v-1.8l1-.8v3.3l1-1.8v-2.7l1,1.5v3l1,1.1v-1.9l1-3.1v3l1-.3v-2.5l1,1.9v2.3l1-1.3v-2.3l1,.6v2.3l1-.2v-2.1l1-.1v2.5l1,.1v-2.9l1,.9v2.6l1-.6v-1.8l1-.3v2.8l1,.7v-2.6l1,.7v2.2l1-.2v-2.3l1,.1v2l1,.8v-2.5l1,.4v2.5l1,0v-2l1-.5v2.7l1-.1v-2.8l1-.1v2.3l1,0v-2.5l1,0v2.4l1,1v-2.6l1,.9v4.4l1-3.3v-2.6l1-.7v2.5l1,.9v-3.1l1,1v3.9l1-.2v-3.8l1,.5v1.9l1-.7v-2.2l1,.3v3.6l1-1.3v-2.3l1-.5v1.8l1,.8v-2l1-.1v2.5l1,.1v-2.1l1,.2v2.4l1,.2v-3.3l1-.4v2.9l1-.6v-2.3l1-.2v2.1l1-.5v-2l1,.5v2.1l1-.5v-2.4l1,.1v2l1,.8v-2.8l1-.4v2.1l1,0v-2.4l1,.7v1.8l1,1.3v-2.4l1-.6v4.1l1-1.6v-2.5l1,.9v4.7l1-1.5v-2.1l1-1.2v2.3l1,.1v-2l1,0v2.5l1,1.1v-2.8l1,.3v2.1l1,0v-2.1l1-.3v2.3l1,.5v-2l1-.1v2.3l1-1.1v-2.4l1,1.4v2.8l1-.2v-2l1,0v2.4l1,.5v-2.6l1-1.3v3.1l1,1v-3.8l1,2.3v3.2l1-1.6v-1.9l1-.8v3.4l1,.3v-3.5l1,1.7v2l1,.3v-2.4l1-.8v4.8l1-2.1v-2.8l1-.6v2.3l1,2v-3l1,.2v3l1,.1v-2.3l1,.1v2l1,1.4v-2.4l1,0v3.7l1-.1v-3.6l1,.6v2.5l1-.2v-2l1,1.4v2.2l1,.5v-2l1-2.4v3.1l1-1.2v-2.2l1,1.7v4.3l1-1.8v-2.8l1-.2v1.9l1-.7v-2.3l1,.7v2.1l1,.8v-2.2l1,1v2.3l1,.4v-2.3l1,.5v3.3l1,.2v-2.7l1,1v2.7l1,.1v-3.4l1,.3v2.2l1-1.5v-2.1l1,.7v3l1-.4v-2.9l1-.1v2.4l1-.6v-2.7l1-.4v3.7l1-1.5v-2.6l1-.3v4.4l1-2.6v-2.8l1-.3v1.8l1-.2v-2.5l1,.4v1.8l1,1v-2.7l1-.1v2.2l1-.4v-2.5l1,.3v3.3l1-2.9v-2.6l1-.4v2.4l1,.8v-1.9l1-.3v2.6l1,.2v-2.7l1-.1v2.2l1-.2v-3l1,0v2.3l1-.9v-2.1l1-.8v2.1l1,0v-2.1l1,.5v2.3l1,.2v-2.5l1-1.6v2.5l1,1v-2.4l1-.6v3l1,.4v-2.8l1,1.1v2.1l1-.7v-2.8l1-.4v2.5l1,.1v-2.3l1,.7v2.5l1-.3v-2.6l1-.5v2.6l1,.9v-2.5l1-.1v2.4l1,.6v-2.1l1-.4v2.8l1,1.5v-2.3l1,.4v2.1l1-.7v-2.6l1,0v2.9l1,1.8v-4.6l1,.1v2.6l1,.8v-2.7l1,.9v1.6l1,1.7v-3.1l1,.3v2.3l1-.4v-2.5l1,.6v2.6l1,1.7v-3.5l1,0v2.8l1,0v-2l1-.4v2.4l1,1.4v-4.5l1-1.4v2.6l1-.2v-2.2l1-.7v3.1l1-2.2v-2l1-.2v1.9l1,.1v-2.7l1-.3v2.4l1,.5v-2.1l1,.7v2.1l1-.2v-2.3l1-.3v2.3l1-.6v-2.8l1,.5v2.5l1-.5v-2.1l1-1.7v2.8l1,.7v-2.5l1,.3v2.9l1-.7v-2.4l1-1.1v2.2" stroke="#c05af0" stroke-width="1.9"/><path d="M440.5,789.4v1.1l1-1.5v-.8l1-1.2v1.3l1-1.5v-1l1-1.9v1.4l1-2v-.9l1-1.2v.7l1-.5v-1.6l1-1.6v.9l1-1.4v-.8l1-2.2v1l1-.6v-1.8l1-1.6v.6l1-1v-1l1-1.5v.8l1-1.2v-1.2l1-.9v1.2l1-1.1v-1.4l1-1v1.2l1-1.1v-1.5l1-1.7v1.2l1-1.5v-1.3l1-.4v.8l1-.6v-1.1l1-1.3v1.4l1-1.3v-1.1l1-.9v.7l1-1v-1.2l1-.6v.8l1-.7v-1.7l1-1.2v1.1l1-1v-.8l1-.9v.8l1-.6v-1l1-.5v1l1-.8v-.9l1-.5v.8l1-.7v-.7l1-.9v1l1-.5v-1l1-.6v.9l1-.3v-1l1-.8v1.1l1-.1v-1l1-.7v1l1-.8v-.7l1-.4v.9l1,.1v-.9l1,.4v.7l1,0v-.7l1-.4v1.3l1-.7v-.7l1-.1v.6l1-.2v-.9l1,.1v.7l1-.8v-.9l1,.3v.7l1-.4v-1.1l1,.3v1.2l1-.7v-.7l1,0v1l1,0v-.9l1,0v.9l1,.3v-1.4l1,.4v1.1l1-.9v-.8l1-.3v.9l1-.3v-.8l1,.1v1l1-.6v-.9l1,.6v.8l1,.1v-.9l1-.2v1.1l1-.7v-1.3l1-.2v1.2l1-.5v-.6l1-.2v.9l1-.2v-1.1l1-.3v.8l1,.1v-1.1l1,.2v1l1-.2v-.8l1-1.1v1.2l1-.6v-1l1-.1v.8l1,.3v-.8l1-.8v1.1l1-.5v-.7l1-.5v.8l1,0v-.9l1,0v.9l1-.2v-1.1l1-.3v1.2l1,.1v-1.1l1-.4v1.3l1,0v-.7l1-.2v1.2l1,0v-.7l1-.2v.7l1-.1v-1.1l1,0v1l1,.4v-1.2l1,.6v1l1-.1v-1l1,.2v.9l1-.6v-1.2l1,.4v.8l1,.1v-.8l1,.2v1.1l1-.5v-.6l1-.5v1.1l1-.1v-.8l1-.4v.9l1-.2v-1l1-.3v1.3l1-.2v-1.3l1,.4v.8l1-.4v-.6l1-1v1.5l1-.3v-.8l1-.2v1l1,0v-1.2l1,.4v1.4l1-.2v-.8l1,.2v1.2l1-.7v-1l1-.2v.9l1,0v-.7l1-.3v.8l1,.8v-1l1-.2v1.3l1,.4v-.9l1-.3v1.1l1,.2v-.9l1-.4v1l1,.4v-1.4l1,.3v1.5l1-.1v-1l1-.4v1.2l1,.7v-.9l1-.2v.9l1-.1v-.8l1,0v.9l1,.1v-1l1,0v1.2l1,.1v-1.1l1,.4v1.1l1,0v-1.1l1,.3v1l1,.9v-1.2l1,.3v1l1-.1v-1.1l1,.4v1.3l1-.6v-1l1,.7v1.1l1-.3v-1.1l1-.1v1.1l1-.4v-1l1,.4v.8l1,.4v-1l1,.1v.9l1,.1v-.9l1,.3v1.1l1,.3v-.9l1,.5v.9l1,.9v-2.1l1,0v.7l1-.3v-1.1l1,.3v.8l1,.3v-.7l1,0v.8l1,.3v-.8l1,0v1l1,.2v-1l1,.2v.7l1-.1v-1.1l1,.1v.8l1,0v-1l1,.3v.9l1,.2v-.8l1-.1v1l1,.3v-1l1-.1v.9l1-.6v-.8l1,0v.8l1-.2v-.8l1,.3v1l1,.1v-1.2l1,.2v.8l1,.3v-.9l1-.3v1l1,.3v-1.8l1-.7v1.3l1,0v-1.1l1,.5v.8l1,.3v-1l1,0v1.2l1-.1v-.7l1-.5v1.2l1-.2v-1.2l1-.1v1l1,0v-1l1-.1v1.3l1-.3v-1.3l1,.6v1.1l1,0v-.7l1,0v1.2l1-.1v-1.3l1,.1v.9l1-.3v-1l1-.3v1.1l1-.3v-1.2l1-.2v1.3l1-.2v-.9l1,.1v1.2l1,0v-.8l1-.2v1.1l1,.2v-1.8l1-.1v1l1,0v-.8l1,0v.9l1,.3v-.9l1-.5v1l1-.2v-1l1-.3v.9l1-.2v-.7l1,.5v.8l1-.1v-.9l1,.3v1.5l1-.7v-1l1,.2v.9l1-.2v-.6l1-.2v1l1-.1v-1.1l1-.4v1.5l1-.7v-.8l1,.1v.9l1,0v-1l1-.5v1.2l1,.5v-1l1,.1v.9l1,.4v-1.2l1-.6v1.6l1-.1v-.8l1,0v1.1l1-.4v-.9l1-.1v1l1-.2v-.8l1,.3v.7l1,.5v-1.8l1,.6v.7l1-.1v-.9l1,.3v.8l1,0v-1.1l1-.1v.9l1,0v-1l1,0v1.6l1-.4v-1.1l1-.1v.9l1,.3v-1.2l1-.3v.9l1-.1v-1.2l1,0v1l1-.1v-1l1,.4v1l1,.4v-1.1l1-.1v1.2l1,.1v-.9l1-.2v1.3l1-.3v-.8l1-.4v.9l1,0v-.7l1,0v1l1,0v-.8l1-.2v.8l1-.4v-.9l1,0v1l1,0v-1l1,.1v.8l1-.2v-1.2l1,.1v.8l1-.4v-.8l1,0v.9l1,.1v-.7l1,.1v1.1l1-.6v-1l1,.3v1l1-.4v-.8l1,0v.8l1,.1v-.9l1-.3v.9l1,.3v-1.1l1-.1v1l1,.1v-1.1l1,.1v.7l1-.6v-.7l1,.1v.7l1,0v-.9l1,.5v1l1,0v-.7l1-.2v.7l1-.3v-1l1,.1v.9l1,.1v-1.2l1,.6v.9l1,0v-1l1,.4v1l1-.1v-1.2l1,.1v1l1,.6v-1.9l1,.6v.6l1-.2v-.7l1-.1v.9l1-.2v-1.5l1,.4v1.1l1-.2v-1.1l1,.4v1l1,1.4v-1.7l1,.2v.9l1-.6v-.8l1-.3v.8l1-.1v-.8l1,.6v.7l1,.6v-1.3l1,.4v1.3l1-.2v-1.3l1,.3v.9l1-.1v-1l1,.5v.8l1,.3v-1l1-.1v1.2l1,0v-1.1l1-.3v1l1,1.1v-1.2l1,0v1.2l1-.2v-1l1-.7v1l1-.2v-.8l1,.3v.9l1,0v-.8l1-.3v.9l1-.2v-1l1,.6v.6l1,.5v-1.3l1,.4v1l1-.1v-.7l1,.2v.9l1,.3v-.9l1,.3v.8l1,.2v-.9l1-.4v1l1,.3v-1l1,0v1l1-.1v-1.1l1,.2v1.1l1,.2v-.7l1,.1v.9l1-.2v-1.1l1,.3v1.2l1-.3v-.7l1,0v1.1l1-.1v-1.3l1,.4v1.3l1,.9v-2.3l1,.4v1l1-.1v-.9l1-.1v1.1l1,.2v-1l1-.2v.9l1,.6v-1.2l1-.4v1.1l1-.3v-.8l1-.2v.9l1,.5v-1l1-.2v.6l1,.1v-1.1l1,.1v.8l1,.7v-1l1,.2v.9l1-.3v-.9l1-.4v1.1l1,.1v-1l1,.2v1.3l1-.1v-.9l1-.3v1.1l1,0v-1.2l1,.7v1l1,.3v-1.3l1,.3v.8l1,.2v-1.2l1-.5v.7l1,.3v-1.1l1,.1v1.4l1,0v-.9l1,.1v1l1-.2v-1.3l1,.2v1l1,.2v-1l1-.1v1.5l1-.5v-.6l1-.6v.7l1-.2v-.8l1,.1v1.3l1,.4v-1.3l1-.4v1.5l1,0v-1l1,.2v.8l1,.5v-1l1,.1v.9l1-.3v-1.1l1,.6v.8l1,.3v-1.2l1,.5v1.1l1,.6v-1.4l1-.3v1l1,.5v-1.5l1-.1v1.1l1,.1v-.8l1-.2v1.1l1,.1v-1.1l1-.1v1.2l1,.4v-1.5l1-.3v.9l1-.3v-.7l1-.4v.9l1-.1v-.8l1,.2v1.1l1-.3v-.8l1-.3v1l1,.4v-1.3l1-.3v1.1l1-.1v-.7l1-.5v1l1,.1v-.8l1,.4v1.1l1,.2v-1.2l1,.3v1.4l1,0v-1l1,.1v.9l1,.2v-.7l1-.4v.8l1-.2v-1l1-.3v1.2l1,.3v-1.3l1,.4v1l1,.2v-1l1,.2v.7l1-.6v-1.3l1-.1v1.2l1,0v-1.1l1,.6v1.3l1-.5v-1l1,.1v.8l1-.2v-1.1l1,.5v.9l1-.2v-.6l1-.4v.8l1,.1v-1l1,0v1.1l1-.1v-.9l1,.1v.7l1,.1v-1.2l1-.3v1.3l1-.2v-1.1l1,.6v.7l1,.3v-1l1-.1v1.6l1-.5v-1.1l1,.2v.8l1,.2v-1.3l1,.4v.8l1,.1v-.7l1-.4v1l1,.4v-1l1-.9v1.1l1,0v-.6l1,.1v.8l1-.1v-.8l1-.5v2l1-.6v-1.1l1,.4v.7l1,0v-.7l1-.1v1.1l1,.1v-.8l1,0v1l1-.1v-1l1-.6v1.5l1-.4v-.9l1-.2v1.1l1,.4v-.7l1,0v1.1l1,.2v-1.1l1,0v.9l1,.7v-1.4l1,.2v.9l1,.3v-.8l1,0v.7l1,0v-1.1l1,0v1.1l1,0v-1.1l1,.1v.8l1,.2v-.9l1-.2v.9l1-.4v-.9l1,.2v1.2l1-.2v-.8l1-.4v1.3l1-.1v-1.2l1,.1v1.2l1-.2v-.8l1-.1v.9l1,0v-.7l1,.1v.7l1,.6v-1l1-.1v1.1l1,.3v-.8l1,0v.7l1,.4v-.9l1,0v.6l1,.2v-.6l1-.2v.9l1,.5v-1l1-.4v1l1,.5v-1l1,.3v1.2l1-.3v-.7l1-.2v1.3l1-.4v-1.3l1,.5v.8l1,.5v-1.3l1,0v.6l1,.2v-1.3l1,.5v.9l1,0v-.9l1-.5v1.2l1-.1v-.8l1,.1v1l1,.2v-1l1,.2v.8l1,.3v-1l1,.4v.7l1,.3v-1.1l1,.1v1l1-.2v-.9l1,.1v1.2l1,.1v-1.2l1,0v1.2l1-.4v-.6l1,.4v1l1-.3v-1l1-.1v1l1-.5v-.7l1,.9v.7l1,.2v-.7l1-.4v2.5l1-1.7v-.9l1,0v1.1l1,0v-1.2l1,.9v.7l1,0v-.7l1,0v.9l1,.1v-1.3l1,.4v1.1l1-.3v-1.2l1,.1v1.2l1,.4v-1.2l1-.7v1.6l1,.3v-.7l1,.3v1.2l1-.9v-.9l1,.1v.8l1,.7v-1l1-.2v1.2l1,.3v-1.3l1-.4v1.3l1-.2v-.7l1-1v1.7l1,.1v-1.1l1,.2v.9l1,.4v-.9l1,.1v.9l1,.7v-.9l1,.3v.8l1,.3v-.9l1-.6v1.1l1-.3v-.8l1-.1v.8l1,.6v-.9l1,0v.7l1,.8v-.8l1-.1v.8l1,.1v-.9l1,0v.8l1,.1v-.8l1,.2v.8l1,.1v-.9l1,.1v.8l1-.3v-1l1,.3v1.2l1,.7v-2l1,.5v1.2l1-.3v-.7l1,.2v1.2l1-.1v-1.3l1-.3v1.1l1,.4v-1.4l1-.1v1.4l1,.4v-1.3l1-.1v1.1l1,.2v-1.1l1-.1v.7l1,.3v-.7l1-.1v.8l1-.4v-.8l1-.1v1l1,.3v-1.6l1,.6v.9l1,.2v-1.1l1,.2v.9l1,0v-.8l1-.1v1.5l1-.3v-.7l1,.3v.7l1,.1v-1l1,.3v1.1l1-.6v-1l1-.1v.7l1,.1v-1.2l1-.1v1l1,.6v-1.6l1,.9v.7l1-.2v-.6l1-.2v1.2l1-.8v-.9l1-.6v.8l1-.3v-1l1,.6v.7l1,.7v-1.2l1,.7v1.2l1-.3v-1.4l1,0v1.1l1-.2v-.8l1-.2v.9l1,.1v-1.2l1,.3v1.2l1,.5v-1l1-.1v1l1-.2v-.9l1,.1v.8l1,.7v-1.3l1,.1v1l1,0v-.9l1-.3v.8l1,.4v-1.1l1-.3v.9l1,1.1v-1.8l1-.1v.9l1,.5v-1.5l1,.6v1.3l1-.1v-.7l1-.1v1.1l1,.1v-1.3l1-.4v1.4l1,0v-.9l1-.2v.8l1,.3v-.7l1,0v1l1,.3v-1.1l1-.1v1.5l1-.4v-1l1,.2v1.1l1,.2v-1.2l1-.1v1.2l1-.5v-.8l1-.1v1.3l1-.2v-1l1,.3v1l1,.2v-.6l1,0v1.4l1-.7v-.7l1-.1v1.2l1-.5v-.9l1,.3v.8l1,.7v-1.3l1,.5v.7l1,.5v-1l1,0v.7l1,.3v-.9l1,0v.8l1,.9v-1.3l1,.4v.9l1-.1v-.8l1,0v.9l1,.1v-1.1l1,.8v1.3l1-.5v-1.1l1,.2v.9l1,0v-.8l1,.3v1.1l1-.2v-.9l1-.2v1.1l1-.2v-1l1,0v.8l1,.3v-.8l1-.1v1.2l1,.3v-.8l1,0v.9l1-.1v-1.3l1,.2v.9l1,.1v-.7l1-.1v.9l1,.3v-1l1-.4v1.1l1,.4v-1.2l1,.1v1l1,0v-.7l1,.2v1.2l1-.3v-1.6l1,.7v.8l1,1v-2l1,0v1.3l1-.4v-.8l1-.2v1l1-.4v-.8l1,.3v.9l1-.3v-.8l1,.2v.9l1-.1v-.8l1,0v.8l1,.4v-1.1l1,.3v.8l1,.4v-1.1l1,0v.9l1,.1v-1.3l1,.2v.9l1,.2v-1.1l1,.3v.9l1,.2v-1.1l1,.4v.7l1-.3v-1.1l1,.4v1l1,.1v-.8l1,.5v1.3l1-.6v-1.3l1,.3v.7l1,.2v-1.2l1,.2v1l1,1.1v-1.9l1-.1v.9l1,.4v-1l1-.1v1.2l1,0v-1l1-.3v1.2l1-.4v-1.2l1,.2v1.1l1-.2v-.8l1,.1v1.1l1,0v-.8l1-.1v1.1l1-.1v-.7l1-.4v1l1,.6v-1.1l1,.5v.7l1,.5v-1.1l1,.2v.8l1,.3v-1.4l1,.1v.7l1,.1v-.9l1-.2v1l1,.4v-1.1l1,0v.9l1,.8v-1.2l1-.3v.8l1,.3v-.7l1-.1v.7l1,.4v-.9l1-.4v1l1,.5v-1.3l1,.4v.7l1,.2v-1l1-.3v.9l1,.7v-.9l1-.8v1.5l1,.2v-.9l1-.4v1l1-.2v-.7l1-.1v1l1-.1v-1l1,.9v.6l1,.3v-.9l1-.3v1.1l1,.1v-1l1-.3v.8l1,.3v-.8l1-.1v1.3l1-.5v-.9l1-.2v1.2l1,.6v-1.8l1,.3v.9l1-.6v-.7l1-.3v1l1-.2v-1l1,.3v.9l1-.1v-1l1,.6v.8l1,.1v-.8l1-.1v1.6l1-.4v-1.1l1,0v.8l1-.4v-.9l1,.3v1.2l1,.2v-1.1l1,.2v.7l1-.2v-.7l1-.2v1l1,0v-.8l1-.2v1.2l1-.4v-1.1l1,.2v1l1,.2v-.7l1,.1v1l1,.7v-1.3l1-.4v.9l1-.2v-.8l1-.5v1l1,.8v-1.4l1,.1v1.5l1-.2v-1.3l1-.2v1.3l1,0v-.8l1-.2v1.3l1-.4v-.9l1,.1v1l1,1.5v-2.4l1-.6v1.5l1-.4v-1.1l1,.1v1.1l1,.4v-1.2l1,.4v1l1-.3v-1.2l1,.2v1.1l1,.1v-1.2l1,.5v1l1-.1v-.9l1,.4v.9l1,.5v-1.3l1,.3v.8l1,.3v-.8l1,.3v1.3l1,0v-1l1-.3v.9l1,.2v-1l1,.1v.6l1,.7v-.8l1-.6v1.3l1-.2v-1.2l1-.8v1.4l1,.1v-1.4l1-.1v1.6l1-.2v-.7l1-.1v.9l1,.2v-1l1-.1v1.1l1,.1v-1l1-.1v1.2l1,0v-.9l1-.2v.7l1,.3v-1.4l1,.3v1.4l1,.2v-1.2l1,.2v.9l1-.1v-.8l1,.2v.8l1,0v-.9l1,.2v.9l1-.3v-1.1l1,.2v1.1l1,.1v-1.2l1,.9v.7l1,1v-1.5l1,0v1.1l1-.1v-.8l1,.1v.8l1,.1v-.9l1,.5v.8l1,.4v-1.1l1,.3v.8l1-.7v-1.1l1,0v.8l1,.5v-1l1,.7v.7l1,0v-.9l1,.5v1.1l1,.3v-1.3l1,.6v.9l1-.1v-.9l1-.2v1l1-.2v-1.1l1,.2v1l1-.3v-.7l1,.2v.9l1-.4v-1.1l1,.5v1.1l1-.5v-1l1,.5v1.1l1-.4v-1l1,.1v1.4l1-.9v-.8l1,.4v.8l1,.2v-1.4l1,.7v1l1,0v-1.1l1-.1v1.1l1,.6v-.9l1-.4v1.3l1-.5v-.7l1-.2v1.2l1,.3v-1.1l1-.6v1l1,0v-.7l1,.4v1l1,.2v-1.3l1,.2v1.4l1-.4v-1.1l1-.2v1.3l1,.1v-.9l1,0v1l1,0v-.9l1,.6v.9l1,.4v-1.1l1,.3v.9l1-.3v-1l1,.8v.8l1,.5v-1.3l1,.2v.8l1-.4v-1l1-.7v1.3l1,.3v-1.4l1,.9v.7l1,.7v-1.3l1-.3v1.1l1-.2v-1.1l1-.1v1.2l1,.3v-1.1l1,.7v.8l1-.1v-1.1l1-.2v1l1,.1v-1.3l1,0v1.3l1,.1v-.9l1,.1v1l1-.2v-.9l1-.4v1.9l1-.6v-.9l1,.5v.7l1,.1v-.8l1,0v.9l1-.1v-.7l1-.5v1.3l1-.2v-.8l1,.3v1l1,.5v-1.1l1,.4v1.1l1-.2v-.9l1-.1v1.3l1-.5v-.8l1-.2v1.2l1-.1v-1l1,.2v.9l1,.8v-1l1,.6v1l1,0v-.9l1-.2v.9l1,.4v-1.3l1,.5v1.2l1,.2v-1.1l1,.7v.7l1,.3v-1.4l1-.1v1.1l1,.5v-1.5l1,.4v1l1,0v-.8l1,.4v1.3l1,0v-.8l1,0v1l1,12.8v-3.9l1,.4v2.7l1,.5v-2.2l1-.9v5.1l1,9.1v-13.6l1-1v4.1l1-.6v-2.5l1,.4v1.8l1-.2v-1.8l1,.7v1.9l1,1.4v-1.7l1-1.1v2.4l1,1.4v-2.3l1,.8v2.9l1-1.9v-2.4l1,1.2v6.2l1,13.7v-16.3l1-2.4v4.6l1-3.5v-3.4l1,.4v2.7l1,2v-3.5l1,1.6v2.3l1,.3v-3.1l1,1v1.6l1,1v-3l1,2.7v2.8l1-1.1v-3.3l1,.1v2.5l1,.8v-2.8l1,2.6v2l1-.2v-2.1l1-2.9v4.2l1-2.6v-2.4l1,3.2v1.7l1,1.1v-3.2l1-1.4v2.9l1,1.8v-1.5l1,.8v4l1,5.2v-8.9l1-1.7v3.6l1,.5v-1.8l1-.3v1.9l1,1.8v-2.3l1,1.9v3.8l1-.3v-4.1l1,1v2.2l1,.9v-2.8l1,.3v2.8l1-1.7v-2.5l1,.1v2.7l1,.2v-2.2l1,0v1.7l1,.9v-2.1l1,0v2.1l1,2.3v-3l1,1.5v1.9l1,2.2v-3.6l1,.3v2.1l1,.5v-2.8l1-.4v2.4l1,2v-3.9l1-.2v3.9l1-.8v-2.4l1,1.2v3l1,1.6v-3l1-.3v2.3l1-.1v-3.5l1,3v8.1l1-3.6v-3.9l1,.2v6.8l1-5.3v-2.8l1,.7v2.2l1,.1v-3l1,.2v2.1l1,1.3v-2.4l1-.3v2.4l1,.4v-2.8l1,.1v3.1l1-1.2v-1.9l1,.4v2.8l1,.2v-3.6l1,2.3v2.8l1,.5v-3.1l1,1.2v1.8l1,0v-2.7l1,1.2v2.1l1,2v-3l1-1v2.9l1,.5v-2.6l1,2.8v2.3l1,.2v-2.7l1,1.2v2.3l1-.4v-3l1,.6v2.4l1-1v-3l1-.9v3.8l1,7.2v-7.8l1,1.9v3.2l1-1.2v-2.1l1-.8v4.5l1-1.8v-2.4l1-1.2v4.7l1,.3v-1.9l1,.1v2.8l1,.1v-1.8l1,.1v2.3l1,1.4v-2.4l1-.3v2.1l1,.1v-2.9l1-.6v3.5l1,.9v-3.3l1-.1v3l1,2.1v-2.1l1,.9v3.3l1-3.3v-2l1-.7v1.7l1,1.9v-2.3l1-.8v2.5l1,.2v-2.7l1,.7v2.9l1-.3v-2.2l1,1v2l1,0v-2.3l1,.7v2l1,2.6v-2.2l1,.6v2.9l1-.9v-3.3l1,1.4v2.4l1,1.1v-1.6l1-1.1v3.2l1,1.8v-4.2l1-.7v8.7l1-7.4v-2.9l1-1.9v3.3l1-.8v-2.5l1-.3v3.2l1,.2v-3.8l1,.7v2.8l1,0v-3.8l1,.4v5.6l1,9.9v-14.8l1-2.3v5.6l1-3.6v-2.6l1,.1v1.6l1-1.8v-2.8l1,.4v4.8l1,.8v-2.1l1,.3v1.9l1,1.9v-3.4l1,2.2v2.4l1,.2v-1.8l1,.6v5.1l1,12.5v-16l1-1.6v5.4l1-2.1v-3.5l1,1.2v2.3l1,4v-5.8l1,3.1v15.6l1-9.3v-6.6l1,.8v7.5l1-5.3v-4.7l1,.5v2.4l1,.4v-3.2l1,1.2v2.6l1,4.6v-6.8l1,4v15.6l1-11.2v-5.7l1-.1v1.9l1,1.6v-2.4l1-.4v2.2l1-1.4v-1.7l1,.1v2.2l1,.9v-1.6l1-1.7v3.8l1,5v-9l1-2.9v3.5l1-.5v-4.2l1,.2v2.6l1-.2v-3.3l1,.9v2.7l1,.6v-2.1l1-1.9v2.1l1,.1v-2.8l1,1.8v2.1l1-.1v-2.7l1-4.3v4.1l1-.7v-3.5l1,.6v2.9l1-1.9v-2.6l1,.2v2.3l1,1.5v-3.1l1-1.1v2.9l1,1.3v-3.2l1,2.4v2.2l1,.2v-3.5l1,.9v2.2l1,.1v-3.4l1,.1v2.6l1,.7v-2.5l1,1.8v3.1l1,.6v-1.5l1-2.4v2.9l1-.4v-2.6l1,1.2v1.4l1,3v-2.7l1-1.1v1.9l1-2.5v-1.7l1,.7v1.4l1,2.6v-4.5l1-1v3.6l1-.1v-2l1,.6v3.8l1-.5v-1.6l1-1.8v2l1,1.7v-3.4l1,.8v9.5l1-5.6v-4l1-.8v2.2l1,1.7v-2.3l1-1.3v3.3l1-2.1v-2l1-.7v2.7l1,1v-3.1l1,.1v2.3l1,1.9v-2.7l1,.3v3.4l1-1.1v-2.1l1-1.9v4.3l1,6.4v-8.8l1-.2v3.4l1-1.3v-2.2l1-.1v4l1,10.5v-12.7l1-1.3v3.9l1-3.2v-2.9l1-.9v2.1l1,3.1v-6.5l1,2.3v16.7l1-5.5v-11.9l1,1.9v4.7l1-5v-1.8l1-.3v3l1,2.1v-3.8l1,2.2v6.7l1-4.2v-3.3l1-1.5v2.4l1-1.8v-2.4l1,1.7v3.7l1,7.8v-11.6l1-1.4v3.8l1,1.2v-3.7l1,1.3v1.8l1,1v-2.5l1,.6v3.6l1,.4v-3.7l1-.3v2.8l1-.2v-1.7l1-2.7v3l1-.6v-2l1,2.8v1.7l1,1v-1.8l1-2.4v2.1l1,1.2v-2.3l1-.1v2.1l1-1.3v-2.1l1,.2v3.3l1,2.1v-3.6l1,.7v7.9l1-4.5v-4.5l1,.2v2l1,3.5v-3.3l1,1.7v3.8l1-2.8v-1.9l1-1v2.3l1,1.4v-2.4l1,1.7v3l1,4.9v-6.4l1-2.1v3.8l1-1.1v-2.2l1-1.2v3.3l1,.5v-1.9l1,.2v2.4l1-.1v-3.1l1,.5v2.5l1,1.9v-2.3l1-1.1v2.9l1-.6v-2.5l1,0v2.6l1-1.9v-3.6l1,1.6v2.4l1,5.6v-4.9l1,2.5v17.2l1-15.2v-5.5l1,1.4v2l1,.4v-2.6l1-.6v2.2l1,4.7v-6.1l1,3.1v15.2l1-10.8v-5.6l1,0v2.3l1-1.1v-2.8l1-.5v3.1l1-.9v-2.8l1-.5v2.3l1,0v-1.9l1-4.1v3.6l1-1.2v-2.2l1,2.7v2.6l1,.9v-2.7l1-1.7v2l1,2.9v-6.3l1,2.5v17.3l1-11.9v-5.3l1-2.2v3l1-1.2v-1.9l1,0v2.4l1-.7v-3.6l1-1.1v2.9l1,.6v-2.6l1-1.1v3.1l1,5.1v-8.3l1-.5v3.8l1-1.8v-2.1l1,0v3.1l1,.8v-3.4l1,1v1.8l1,1.6v-2.5l1,1.1v1.9l1-1.5v-1.8l1-2v1.8l1,.4v-2.9l1-.4v1.5l1-1.1v-2l1-.1v3l1-2.2v-2l1-.3v3.1l1,3.4v-3.2l1-.2v2.9l1,.3v-3.1l1,.2v3.2l1-1.1v-2.6l1,.2v2.7l1,.4v-1.7l1,.4v3l1,.5v-3.3l1,2.5v2.7l1-1.6v-1.9l1,.8v2.8l1-.3v-3.5l1,1v2.6l1,1.7v-5l1-.2v3l1,.1v-2.6l1,0v2.7l1-2.1v-2.6l1,2v2.5l1-1.2v-1.6l1-1.4v2.6l1,.1v-2.5l1,.6v2.2l1-.8v-2.3l1,0v3l1,1.5v-3.1l1-1.2v1.7l1,0v-2.5l1,.8v2.9l1-1.9v-2l1-2.2v2.4l1,.7v-1.7l1,1.3v1.7l1-.1v-3l1,.4v2.4l1,1.5v-2.8l1,.1v2.2l1-.8v-2.4l1,.4v2.1l1-1.6v-2.5l1-.4v2.9l1,.3v-3.7l1,1v2.5" stroke="#20e0e0" stroke-width="1.5"/><path d="M440.5,785.3v.8l1-.8v-1.3l1-1v.9l1-.7v-1.2l1-1.6v1.5l1-1.5v-1.6l1-2v.6l1-1.5v-.7l1-2.3v1.3l1-2.1v-.8l1-1.8v1.5l1-1.4v-1.1l1-.6v1.3l1-2.5v-1.4l1-.8v1.4l1-1.3v-1.3l1-.3v1.5l1-2.9v-1.4l1-.6v1l1-.9v-1l1-.2v1.6l1-2v-1.5l1-.7v1.1l1-2v-.8l1-1.3v1.3l1-1.5v-1.6l1-.3v.7l1-.8v-1l1-1v1.8l1-1.8v-.7l1-1.2v.9l1-.9v-.9l1-1.3v.7l1-1.4v-.9l1-1.2v1.1l1-.8v-.6l1-1.8v1.3l1-1.5v-1.2l1-.6v1l1-.4v-1.4l1,.4v.8l1-1.1v-.8l1-.8v1l1,.1v-1.3l1,.5v.9l1-.3v-1l1-1.4v1.1l1-.5v-1.1l1-.3v1.1l1,0v-.6l1-1.1v1.2l1,0v-.8l1-.2v1l1,0v-1.1l1-.3v.9l1,.4v-.8l1,.7v.8l1-.3v-1.8l1,.2v.7l1-.3v-1l1,.3v1.1l1,.2v-.8l1-.5v1l1-.2v-1.5l1-.1v1.2l1-.9v-.7l1-1v1.8l1,.1v-.9l1,.5v1l1,.1v-1.2l1-.9v.7l1,.4v-2.1l1,.1v1.3l1,.1v-1.6l1,.4v.7l1-.3v-1.2l1,.2v1.2l1-.2v-1.3l1,0v1.7l1-.9v-1.1l1,.5v1.2l1-.9v-.9l1-.1v.7l1-.6v-1.4l1-.2v1.5l1-.6v-1l1,.3v.9l1,.1v-1.4l1-.1v1.6l1-.2v-.7l1,.2v1.1l1,.3v-.8l1-.3v1l1-.7v-1.1l1-.4v.9l1-.4v-1.1l1,0v1.2l1-.4v-.8l1-.5v1.9l1-.4v-1.4l1,.1v.8l1,.5v-.8l1,.2v1.1l1-.1v-1.3l1,.2v1.1l1-.2v-2.1l1,1.2v2.1l1-1.8v-1l1-.2v1.1l1,0v-2.1l1,.9v.5l1,0v-.7l1-.1v1.4l1-.3v-1.6l1,.2v1.4l1,0v-1.1l1-.2v.9l1,.2v-1.2l1,.2v1.2l1-.8v-1l1,0v1.4l1-.8v-.9l1,0v1.7l1-.2v-1.1l1,.4v1l1-1.5v-.9l1,.4v1.3l1-.2v-1l1,.5v1.2l1,.4v-1.4l1,.5v1l1,1.3v-1.2l1,1v1l1,.5v-1l1,.8v.9l1,1v-1l1,.3v1.3l1,.7v-.9l1,.6v.8l1,1.6v-1.6l1,1v1l1,.4v-1.1l1,.7v1.3l1,.3v-1.2l1,1.8v1l1,.4v-.8l1,1v.7l1,.7v-1.2l1,.4v1.6l1,.6v-1.3l1,.8v1.4l1,.2v-1.8l1,.4v1.5l1,.5v-1.3l1-.6v1.6l1-.5v-.8l1-.8v1.3l1,.2v-.6l1,0v1.2l1-.5v-1.2l1,.9v1.3l1-.5v-.9l1,.2v1.6l1,.2v-1.1l1,.3v1.1l1-.3v-1.3l1-.1v1.3l1-.1v-1l1,.6v.8l1,1v-1.3l1,0v.8l1,.2v-1.2l1-.1v1.2l1-.2v-.7l1,.4v.9l1-.1v-1.2l1-.4v.6l1-.6v-1.1l1,0v.9l1,1.6v-2l1,0v1.1l1,.1v-.7l1-.6v1.4l1,0v-.8l1,.2v1l1,0v-1.2l1-.4v1.1l1,.4v-1.1l1-.1v.9l1-.1v-1.2l1-.3v1.3l1-.1v-1l1-.5v1.4l1-.6v-.9l1-.7v1.3l1,.6v-1.1l1-.3v1.7l1-.7v-.7l1-.7v1.6l1-1.1v-1.3l1,1.2v1l1-.4v-.7l1-.1v1.4l1,0v-1.5l1,0v1.1l1-.1v-.9l1,.1v1l1,.1v-1.2l1-.7v1.5l1-.3v-.9l1-.6v1.1l1,.2v-1.2l1,.8v.7l1,.2v-1.1l1,.2v1.6l1-1.6v-1.3l1-.1v1.3l1,.1v-1.5l1,.5v.9l1-.1v-.9l1,.4v.6l1,1v-1.3l1,.6v1.3l1-.3v-1.3l1,.2v1.2l1,.2v-1.3l1-.4v.7l1,.2v-1.6l1-.1v1.3l1,.3v-.7l1-.4v1l1-.3v-1l1-.3v.8l1,.1v-1.1l1,.4v.9l1-.1v-1l1-.7v1.5l1,.1v-1.9l1,.4v1.6l1-.4v-1l1,.3v1.4l1-.1v-1.2l1,.3v1.4l1,.2v-1.7l1,.5v1.1l1,0v-1.5l1,.4v.5l1,.1v-1.2l1-.2v1l1,.6v-.9l1-.7v1.1l1,.6v-.8l1,.2v.8l1-.3v-.7l1-.4v.8l1,.5v-1.1l1-.4v.6l1,.3v-.9l1-.8v1.5l1-.7v-.6l1-.1v.8l1-.2v-1.2l1,.5v1.5l1-.1v-1.7l1,.1v1.4l1-.8v-1.3l1,1.1v.6l1,0v-.6l1-.1v1.8l1-1.2v-1.1l1,.8v1l1,.9v-1.2l1-.9v1.7l1,.1v-1.5l1-.3v.9l1,.3v-1.2l1-.3v1.2l1-.8v-1l1-.4v1.5l1,.4v-1.3l1-.5v2.8l1-1.8v-1.3l1,0v.9l1,.8v-1.1l1-.1v1.1l1,0v-1l1,.3v1.5l1-.3v-1.5l1,.2v.9l1-.3v-.9l1,.6v1.1l1-.4v-.6l1,.3v1l1-.2v-.8l1-1.1v.9l1,.5v-1l1-.2v.8l1,.7v-1.1l1-.9v1.5l1,.5v-1.1l1-1v1.8l1-.4v-1l1-.5v1.4l1-.2v-1l1-.1v1.3l1,0v-.6l1,.2v.8l1-.3v-1.3l1,.3v1.3l1-.4v-1l1-.8v1.3l1-1.2v-.7l1-.2v.7l1,0v-.6l1,0v1.1l1,.8v-1.2l1,.8v.8l1,1v-1.3l1,.4v.9l1-.1v-.8l1-.7v1.2l1,.2v-1.8l1,.6v.8l1,.4v-1l1-.2v.8l1,.5v-1.7l1,.6v.8l1,.6v-1.3l1,.2v1.6l1-.8v-1.1l1-.9v1.9l1-.1v-.6l1-.1v1.4l1,.5v-1.4l1,.2v1.6l1-1.1v-.8l1,.4v1.1l1,.3v-.6l1-.1v1.4l1,.3v-1.2l1-.4v.8l1-.3v-1l1,0v1l1-.5v-.7l1,.1v.7l1,.6v-.9l1,.2v1.3l1-.4v-1.4l1,.5v.8l1,.1v-.7l1,.1v1.1l1,0v-.9l1,.3v.9l1,.4v-1l1,.1v.9l1-.5v-1l1-.2v1.2l1-.3v-1.1l1,.2v.6l1,.1v-.8l1-.8v1.8l1-.4v-.9l1-.6v1.2l1,.2v-1.1l1,.1v1.5l1,.9v-.8l1-1v1.6l1,.2v-1.4l1,0v1.2l1,.4v-1.4l1-.2v2.1l1-.5v-1.1l1-.5v2l1-.4v-1.2l1,.9v1.1l1,.9v-2.1l1,.8v.7l1,.6v-1.1l1-.7v1l1-.3v-1l1-1.1v2.1l1,0v-1l1-.6v1.6l1,.5v-.7l1-.3v1l1,1.3v-1.6l1-.2v1.2l1,.1v-1.4l1-.6v.7l1-.3v-1l1,.2v1.4l1-.4v-1l1,1.6v.8l1,.1v-1.1l1-.8v1.2l1-1.4v-1.1l1-.2v1.1l1,1.4v-.9l1-.4v1.4l1-.1v-1l1,.1v1.3l1-.8v-1.1l1,.1v1.4l1-.5v-.9l1-.4v1.4l1,.2v-.8l1-.2v.7l1-.2v-.9l1-.4v1.4l1-.2v-1l1,.4v1.4l1-.5v-.9l1,.2v.6l1-.7v-.9l1-.6v1.3l1-.1v-.6l1,.1v1.2l1,.8v-1.3l1,.1v.9l1,.2v-1.4l1-.3v1.5l1-.7v-.7l1-.4v1.2l1,1.2v-1.5l1,.2v.7l1,.2v-.6l1-.4v1.2l1,.1v-1l1-.4v1.3l1,0v-1.3l1,.3v.6l1,.1v-1.9l1,1.1v1l1,.5v-1.8l1,1.7v1.3l1-.7v-.9l1-.4v.9l1,.2v-1.4l1-.4v1.3l1-.9v-1.1l1,.3v1.2l1,.1v-.9l1-.4v1.1l1,.6v-1.1l1,.4v.9l1,.6v-1.5l1,0v.6l1,.1v-.8l1-.4v.7l1,.6v-.8l1-.4v1.2l1,.2v-1l1-.4v.8l1,.3v-.8l1,.2v1.3l1,.5v-1.8l1,.5v2.1l1-1.3v-1.3l1,.3v1.3l1-.6v-1.7l1,1.1v1.8l1-1v-1.4l1,.1v.8l1-.2v-.8l1-.2v1l1,.6v-2.1l1,.1v1.5l1-.5v-1.3l1,.1v1.3l1,.7v-1.3l1,.3v1l1,1.5v-1.6l1-.8v1.1l1-.6v-1.6l1,.1v1.3l1,1v-1.5l1,.8v1l1,.7v-1.8l1-.4v1.8l1-.6v-.9l1,.5v1.2l1-.7v-.8l1-1v2l1-.8v-1.3l1,.7v.7l1,.7v-1.5l1,.1v1.5l1,.3v-1.8l1,.5v1.2l1-.2v-.7l1-.4v1.8l1-.1v-.8l1-.1v1.3l1-.5v-1.1l1-.2v1.5l1-.7v-.9l1,.8v.8l1,.3v-.6l1,.1v.8l1-.2v-1l1-.1v1.8l1-.3v-1.1l1,.1v1.2l1-.1v-.9l1,0v1.1l1,.1v-.9l1,.1v1l1,.6v-2.2l1,.8v1.5l1-.3v-1l1,.3v.9l1,.1v-1.1l1,.4v1.3l1-.6v-.9l1-.1v.7l1-.5v-.9l1,.1v.7l1,.3v-1.4l1,.5v.8l1,.8v-1.4l1,.4v2.4l1-.2v-1.7l1,.2v1.1l1-.7v-.8l1-.4v.7l1-.8v-.6l1,.1v.8l1,.6v-.7l1-.1v1.4l1-.4v-.7l1-.6v.7l1,0v-1l1-.7v1.3l1,.8v-1.3l1-.3v1.3l1,.9v-1.2l1,.4v1l1,.4v-1.8l1-.1v1.1l1,.2v-1.5l1,.5v1.7l1-.4v-1.4l1,.3v.9l1,.6v-1.3l1,.3v1.5l1,.1v-1.5l1,.3v1l1-.5v-.9l1,.3v1l1-.2v-.9l1,0v1.1l1,.4v-1.5l1-.1v.8l1,.6v-1.8l1,.4v1.5l1-.1v-1.1l1-.3v1.9l1-.5v-1.2l1,.4v1.2l1,.5v-1.3l1,0v1l1,.1v-1.1l1-.7v1.2l1,.7v-1.4l1-.2v.6l1,.3v-1.3l1,.4v.8l1,.5v-.7l1-.1v1.2l1-.2v-1.4l1,.8v1.4l1-.1v-1.1l1-.8v1.9l1-.2v-1.2l1-.1v1.4l1-.9v-.9l1,.9v1.1l1,.6v-.6l1,.1v.6l1,.1v-1.6l1,1.1v.6l1-.3v-1.2l1,1v1.2l1-.3v-1.1l1,1v.9l1,.3v-1.3l1-.6v1l1,.3v-.9l1,0v1l1,.5v-.9l1,.2v.7l1-.4v-.8l1-.4v.8l1-.2v-1.4l1-.3v1.3l1-.2v-1l1,.6v.6l1,1.5v-1.2l1-.3v1.4l1-.5v-1l1-.6v2.2l1,0v-1l1-.3v.8l1,.6v-1.8l1-.1v1.2l1,.8v-.9l1-.3v1.3l1-.3v-.8l1-.6v2.1l1-.5v-.8l1-.1v1.3l1,0v-.9l1-.1v.6l1-.1v-1.1l1,.3v1.2l1-.3v-.7l1,.1v.7l1,.9v-2.2l1,.6v.9l1-.6v-1.2l1,.7v1.1l1,.8v-.9l1,0v1l1-.6v-1.1l1,.9v.7l1,.7v-1.4l1-.2v.8l1-.2v-1.6l1-.1v1.2l1,.5v-1.2l1,.1v1.2l1,.7v-1.7l1,.4v1.4l1-.3v-1.4l1,.4v.9l1,0v-.8l1-.1v.9l1-.1v-1.1l1,.2v1.5l1,0v-1.4l1-.9v1.2l1-.4v-1.1l1,.4v1l1,1.3v-1.5l1,1.3v.6l1,.9v-2.6l1-.6v1.2l1-.3v-.8l1,0v.9l1,.8v-1.7l1,.1v1.2l1-.6v-1.1l1,.3v1.3l1-.1v-.5l1,.1v.9l1,0v-.6l1,0v1.4l1-.7v-1l1-.1v1.7l1-.5v-1l1-.1v1.4l1-.3v-1.1l1-.1v.8l1,.5v-1l1,.8v.7l1,.8v-1.5l1,.2v1.7l1-.1v-1.3l1-.3v.6l1,.3v-1.7l1,.4v.7l1,0v-1l1,.3v.9l1-.1v-1.1l1,.3v1.3l1,.3v-.7l1-1v1.1l1-.2v-1.9l1,.9v1.1l1,.2v-.7l1,.8v1.5l1-.5v-1.3l1,.3v1.4l1-.3v-2.2l1,1.1v1.1l1,.2v-1.3l1-.5v1.4l1-1v-.9l1,.4v1.4l1,.2v-1.1l1,1.6v.8l1-.2v-.9l1,.1v1.1l1-.2v-.7l1,.7v.9l1-.5v-1.2l1,0v.7l1-.2v-.9l1,.9v.8l1,.5v-1.4l1,.3v1.2l1-.5v-1l1,.2v1.1l1,0v-1.8l1,.4v1.3l1-.3v-1.6l1,.8v1.2l1-.8v-1.4l1,.6v1.2l1-1v-1.6l1,1.6v1l1,.4v-.7l1-.4v1.2l1-.7v-.8l1,.1v1.8l1-1.1v-1.2l1,.6v.8l1,0v-.7l1-.6v1.6l1-.7v-.9l1,.3v1l1,.4v-1l1,0v1.5l1,.3v-1.3l1-.2v1.1l1,0v-1.8l1,.9v1.2l1,0v-1.3l1,.6v.7l1,.9v-.7l1,.4v1.4l1,.4v-1.1l1-.4v.9l1-.8v-1.1l1-.5v1.6l1,0v-.8l1-.1v1.2l1,.3v-1.3l1-1v1.5l1-.3v-.8l1-.1v1.1l1-.1v-.6l1-1.2v1.4l1,.5v-1.9l1,1.5v.7l1,1.1v-1.4l1,.1v.9l1-.2v-1.9l1,.1v1l1-.6v-.8l1,.2v1.2l1,.2v-1.2l1,.4v1.7l1,0v-1.1l1,.7v1.1l1-.1v-.8l1-.4v1l1-.2v-.8l1-.2v1.1l1,.1v-.7l1,0v.8l1,.1v-1.2l1-.4v.8l1,.3v-1.2l1,.5v1.2l1,.4v-.9l1-.6v.7l1,.8v-1.2l1-.4v.7l1,1v-1.2l1-.4v1.6l1-.9v-1.2l1,.1v1l1-.1v-1.3l1,1.1v.9l1,.7v-1.4l1,0v1.8l1,0v-.9l1-.8v1.1l1,.1v-.6l1-.6v1.5l1,.4v-1l1,0v1.9l1-.1v-1.9l1,1v1l1-.3v-.8l1-.1v1.6l1-.9v-.8l1-.4v1.2l1,.1v-.9l1,.5v.9l1,0v-.9l1-.2v1.2l1-.4v-1.3l1,.1v1.4l1-.6v-1.5l1,.1v1.4l1,.9v-2.2l1,.8v.9l1-.4v-.7l1-.4v1.3l1-.4v-.9l1,.2v.8l1,.3v-1.2l1,.1v.8l1,.1v-1.2l1-.1v1l1-.2v-1.2l1,.2v1.2l1-.1v-1.3l1,.7v1.1l1,.3v-2.1l1,.4v1.2l1,0v-1.1l1,.1v.7l1,1v-1.3l1-.7v1.6l1-.5v-.6l1-.4v.6l1,.6v-.9l1,.2v2.2l1-1.1v-1.6l1-.3v1.4l1-.2v-1.5l1,1.1v1.4l1-.4v-1l1,.4v.9l1-.1v-.9l1-.3v1.4l1-.3v-1.3l1,0v1.2l1-.4v-1l1,.6v.8l1,.5v-1.1l1,.7v.8l1-.3v-.8l1-.6v1.5l1-.2v-1.4l1,.4v1.2l1-.1v-.9l1-.2v1.4l1,0v-.9l1,.2v.7l1,.6v-1.5l1,.2v1.6l1-.3v-1l1-.4v1.5l1,.1v-1.3l1-.1v.7l1,.6v-.5l1-.1v1.2l1-.2v-.6l1-.6v1.6l1-.2v-1.3l1,0v1.1l1,.5v-1.6l1,0v.9l1,.8v-1.1l1,.5v1.1l1-.6v-.5l1-.6v1l1-.4v-1l1,.9v.7l1,.3v-.7l1-.5v.9l1-.3v-.8l1-.3v1.4l1,1v-2.2l1,.8v.7l1-.4v-.9l1-.5v1.4l1-.3v-1l1,.4v.9l1,.2v-1.3l1-.5v1l1,.7v-.9l1,.4v.6l1,.8v-1.4l1-.2v1.7l1,.1v-.9l1,.5v.9l1,.2v-.8l1,.7v1.4l1-1.4v-.6l1,.2v.7l1,1v-1.6l1,1v.7l1,.7v-1.6l1-.2v1.7l1-1.4v-.6l1,.1v1.1l1,.1v-.9l1-.3v1.4l1-.7v-1.1l1-.4v.8l1,.4v-.9l1,.5v.5l1,.3v-1.4l1,.3v.9l1-.3v-.8l1-.1v1.5l1,0v-.8l1,.1v.8l1,.1v-1.1l1-.1v.9l1,.5v-1.3l1,1.4v.8l1,.8v-1.4l1-.4v.9l1-.9v-.6l1-1v1.3l1,1.1v-.9l1-.4v1.2l1,.9v-1.3l1-.3v1.6l1,0v-.8l1-.4v.6l1,1.5v-2.7l1,.6v1.3l1,.8v-1.7l1-.1v.8l1,.3v-.9l1,.3v1.2l1,.4v-1.1l1-1v1.5l1,0v-1.9l1,1v1.1l1,1.1v-1.5l1,.6v.8l1-.2v-1.3l1,.4v1l1-.1v-.7l1-.5v1.1l1-.3v-1.2l1,.3v.8l1-.1v-.7l1-.3v1.1l1,0v-1.5l1,.2v1.4l1,.1v-1l1,.9v1.1l1,.3v-1.2l1,.1v1.2l1-.3v-.8l1-.6v1.1l1,.3v-1.6l1,.4v.8l1,.3v-1l1,.2v1l1-.1v-.8l1-1v1.8l1-.1v-1.1l1-.2v1.8l1-.3v-1.1l1-.7v1.4l1,.2v-1.2l1,.1v.6l1,.7v-.9l1-.1v.9l1,0v-1.2l1-.2v1.2l1,.6v-1.9l1,.6v.7l1,.3v-1.5l1,.6v1.3l1,.3v-1.4l1,.3v1.1l1-.3v-.7l1-.1v.7l1,1v-1.2l1-.9v.7l1,1v-1.3l1-.2v1.2l1,1.2v-1l1,.1v.9l1,.1v-.9l1-.4v1.1l1,0v-1.6l1,1.3v1.3l1,.3v-1l1,.2v1.8l1-.5v-1.3l1,.4v1l1,0v-1.6l1,.7v.9l1,11.4v-3.9l1,2.7v3.9l1,4v-8.5l1,2.5v22.8l1-12.5v-11.5l1,3.8v13.8l1-9.2v-6.4l1,1.6v4.9l1,5.4v-7.9l1-.1v15.5l1-14v-7.2l1,.6v8.3l1,13.6v-19.6l1,1.3v5.9l1-.6v-5.9l1-3.9v6.4l1-3.4v-3.4l1,2.1v3.1l1,.7v-3.5l1-.9v5.8l1,13.9v-18.5l1-1.3v7.9l1-.2v-7.6l1,3v17.8l1,6.2v-24.1l1-3.9v7.9l1,1.3v-6.3l1,5.2v3.9l1-1.4v-3.2l1-3.9v5.7l1,11v-15.5l1,.3v14.5l1-4v-9.1l1,4v19.8l1-11.8v-8.1l1,.3v11.9l1-4.2v-6l1,.2v4.6l1-1.1v-7l1,1.7v13.7l1-7.9v-7.4l1,.2v6.4l1-1.6v-6l1,1.2v3.7l1,3.9v-5.6l1,1.9v4.4l1-2v-2.7l1-.3v4.2l1,2.7v-6.9l1,1.7v19.9l1,14.2v-30.4l1-4.3v11.7l1,5.9v-15.8l1-2.8v7.8l1,.2v-6.3l1,1.6v3.9l1,1.1v-4.6l1-.6v3.2l1,1.9v-4.6l1,1.1v3l1,4.9v-5.3l1-3.2v6.1l1,11.7v-18.1l1,2.6v5.9l1,.9v-5.9l1,.6v3.2l1-2.7v-3.3l1,1.7v8.7l1,22.3v-26.9l1-2.9v11.7l1,7.6v-18.1l1-3.3v7.7l1,1.2v-7l1,2.8v18.7l1-.2v-15.4l1-.2v10.7l1,18v-27.1l1-1.9v8.9l1-5v-4.7l1,2v6.2l1,13.9v-14.8l1-4.9v6.6l1-4.8v-5.2l1,2.3v3.2l1,6.7v-8l1,2.8v25.9l1-19.7v-8l1-2.9v5.9l1,1.3v-4.7l1,.1v4.7l1-.9v-4.1l1-1.9v7.4l1,12v-16.8l1-1.3v6.8l1-.3v-5l1,3.7v4.5l1,3v-6.8l1,1.9v13l1-11.1v-6.7l1,.1v8.7l1,22.2v-28.4l1-3.9v10.5l1-.7v-5.7l1-.2v4.3l1,3v-7.3l1,2.8v4.4l1,5.8v-8.2l1,4.9v25.6l1-21.6v-8.1l1-4.8v4.8l1,3.4v-7.5l1,1.9v23.7l1-17.2v-8.2l1,2.4v7.2l1,14.1v-21l1,0v8.1l1,3.3v-6.7l1,4.2v5.6l1,6.3v-14.4l1,1.4v20.1l1-13.8v-7l1,.8v3.2l1,4.5v-10.7l1,3.1v15l1-10.7v-5.1l1-1.6v7.3l1,13.4v-17.5l1-.6v7.2l1,2.7v-8.2l1,2.9v3.7l1,.1v-6.6l1,1.3v20.6l1-14.8v-8.4l1,.6v11.6l1-7.6v-8.7l1,4.8v3.7l1,4v-9.3l1-.3v25.1l1-19.7v-8.6l1-1.2v3.4l1-2.2v-5.8l1,3.1v4.3l1,1.6v-4.5l1-2v9.3l1,21.2v-30.3l1-.6v9.7l1-7.4v-4l1,.4v6.2l1,4.8v-8.2l1,5.2v14.3l1-9.6v-6.6l1,1.4v4.4l1-.6v-6.2l1-.1v3.9l1,2.7v-4.9l1,4.3v8.3l1,13.7v-20.8l1,.1v6.3l1,.3v-7.1l1,1.1v17.1l1-8.9v-7.9l1-2.5v3.6l1,3.7v-5l1,.5v3.5l1,.9v-4.2l1-.6v9.1l1,15v-18.4l1-.4v6.5l1,1.1v-4.8l1-2.8v8.5l1,24.5v-28.1l1-5.9v8.7l1-8.1v-5l1,.2v4.9l1,4.5v-12.8l1,2.4v34.1l1-.7v-32.1l1-2.3v8.5l1-3.9v-3.1l1-1.6v4.8l1,.3v-7.3l1-.1v18.6l1-12.3v-7.1l1-2v3.2l1,.5v-4.5l1-1.1v3.8l1,5.9v-9.5l1,2v24.3l1-17v-9.6l1-.8v17.2l1-.7v-13.8l1-1.7v9.8l1,21.2v-30l1,3.9v26.4l1-13.8v-13.9l1,1.8v29.8l1-14.3v-17.9l1-1.5v6.3l1,15.4v-18.6l1,1.1v23.8l1-15.3v-9.5l1,5v19.5l1-5v-16.1l1-5.5v5.9l1,2.6v-7.4l1,3.6v23.3l1-18.8v-7.4l1-1.4v5.3l1,.8v-6.1l1-1.4v6.9l1,13.7v-15.2l1,1.2v7.3l1-5.9v-4.1l1-.3v3.5l1,4.4v-3.5l1,.1v3.3l1-2v-3.6l1,.6v5.7l1,11.9v-16.7l1-1.5v7.1l1,.1v-8l1,2.6v18l1-10.2v-7.6l1-3.3v5l1,1v-5.2l1,.8v15.8l1,13.9v-28.4l1-.4v8.3l1-5.5v-6.1l1-.2v6.1l1,11.5v-18.5l1-1.6v16.1l1-11.9v-5.4l1,2.2v3.4l1,8.3v-9.3l1,.8v27.4l1-16.3v-14.7l1,1.3v24.7l1-13.6v-12.1l1,1.4v21.5l1-18.7v-7.9l1,.1v7.6l1,19.4v-22.8l1,1.1v6.9l1-3.2v-4.3l1,1v4.7l1,2.1v-3.5l1-.5v3.4l1-3.4v-4.7l1-.5v3.5l1,2.3v-5.1l1,4.5v3.2l1-2v-3.1l1-1.1v4.6l1,6.1v-10.5l1,1.3v30.8l1,3.4v-34.4l1-.8v11.1l1,1.8v-12.5l1,2.1v6.3l1-.4v-5.8l1,3.4v17.5l1-9.9v-7.5l1-2.1v3.4l1-1.1v-4.8l1,2v4l1-1v-2.6l1-1v5.4l1,2.9v-7.2l1,.7v16.1l1-9.1v-6.5l1-2.7v7.9l1,11.8v-18.2l1,1.1v30l1-22.3v-9.2l1,1.6v4.5l1,3.7v-7l1-.6v29.5l1,3.2v-29.8l1-.5v9.8l1-3.8v-6.6l1,1v16.4l1-12.5v-7.1l1-.7v9l1,21v-26.1l1-2.1v11.6l1,3v-15.3l1-1v17.1l1-6.3v-7.2l1,1.3v5.2l1-1.7v-4.8l1,2.1v6.5l1,16.6v-21.5l1-.9v8.2l1,5.2v-13.1l1-3v6.6l1,.8v-8l1,5v25.2l1,7.5v-32.7l1-2.7v22.2l1-7.6v-20.8l1,3.2v6.8l1-.5v-3.5l1-2.3v4.7l1-1.7v-4.3l1-.1v3.5l1,6.3v-8.6l1,.4v21.4l1-18.4v-6.9l1,1v7.7l1,24.8v-28.3l1-4.4v10.3l1-4.3v-4.3l1-3.3v6.3l1-2.9v-3.7l1,2.1v6.3l1,4.1v-5.6l1,.1v3.5l1-.9v-8.1l1,2.6v21.7l1-17.4v-6.9l1,1.3v7.3l1,18.3v-22.6l1-1.1v8.3l1-8.2v-5.9l1,.5v5.5l1-.7v-3.8l1-2v8.3l1,15.3v-19.1l1-1.9v8.3l1,5.6v-9.7l1-.3v24.5l1-10.3v-15.9l1-4.6v6.3l1-2.7v-4.4l1-2.4v4.4l1,1v-5.3l1,2.7v8.7l1,16.1v-23.3l1-.4v10.4l1,11.7v-16.3l1-3.3v6.5l1-2.4v-3.8l1-1.4v10.3l1,12.5v-18l1-5.3v11.3l1-8.2v-3.3l1-1.1v5.4l1,.3v-3.4l1,.3v4.1l1,5.7v-8.8l1,2v29.6l1-12.7v-15.6l1,.7v7.3l1,5.9v-12.9l1,2.3v10.4l1,5.5v-13.8l1-4.2v6.4l1-2.3v-4.2l1-.2v3.7l1,1.3v-6.1l1-1.6v6l1-2.2v-4.5l1-1.5v7l1-.9v-6.6l1-.7v22.2l1-14.6v-9.2l1-.2v6.4l1,3.7v-7.4l1-.9v23.9l1-8.3v-15.2l1-2v14l1-7.1v-7.9l1,1.3v6.7l1,14.6v-18.9l1,.6v10.1l1,8.3v-16.5l1-3.4v6.5l1-2.9v-6.7l1,1.5v5.2" stroke="#cc1808" stroke-width="1.9"/><path d="M440.5,748.8l1-1l1-1l1-1l1-1.6l1-1.4l1-1.6l1-1.2l1-1.6l1-1.5l1-1.3l1-1.4l1-1.6l1-1.4l1-1.9l1-1.7l1-1.6l1-1.2l1-1.4l1-1.2l1-1.4l1-1.3l1-1.1l1-1.6l1-1.4l1-1.2l1-1l1-1l1-1.2l1-1.4l1-1.7l1-.7l1-1.1l1-1.1l1-1.4l1-.9l1-1.2l1-.9l1-.8l1-1l1-1.1l1-.5l1-.6l1-.8l1-.8l1-.6l1-.7l1-.2l1-.3l1-.2l1-.3l1-.3l1-.1l1-.5l1-.1l1-.3l1-.2l1-.2l1-.4l1-.3l1-.3l1-.3l1-.4l1-.4l1-.1l1,0l1,0l1-.4l1,0l1-.4l1,0l1-.3l1,.2l1-.3l1-.2l1-.3l1-.1l1-.4l1-.1l1,.1l1-.3l1-.1l1-.2l1-.1l1-.3l1,0l1-.2l1,.3l1-.4l1-.1l1-.4l1-.2l1,0l1,0l1-.2l1-.4l1,0l1-.2l1-.1l1-.1l1,0l1-.1l1,.3l1,0l1-.2l1-.2l1,.3l1-.1l1,0l1,0l1,0l1,.2l1-.1l1-.2l1-.1l1,.1l1,.2l1-.1l1-.3l1,.1l1,0l1-.5l1,0l1-.3l1,.2l1,0l1,0l1,.4l1,.4l1,.2l1,.2l1,.3l1,.1l1,.6l1,.6l1,.6l1,.6l1,.2l1,.4l1,.3l1,.5l1,.6l1,.8l1,.2l1,.7l1,.1l1,.6l1,.4l1,.5l1,.3l1,.3l1,.3l1,.1l1,.5l1,.1l1,.3l1-.2l1,.6l1-.2l1,.2l1,.4l1,.4l1,.3l1,.5l1,.2l1,.6l1,.3l1,0l1,0l1,.1l1,0l1,.3l1,.1l1,.2l1,.4l1,0l1-.2l1,.1l1-.1l1,.2l1-.1l1,.1l1,0l1-.4l1,.1l1-.4l1-.1l1,.2l1,0l1-.2l1,0l1,0l1-.1l1-.1l1,.2l1-.4l1,.4l1,0l1,.4l1-.3l1,.1l1-.1l1,0l1,.1l1-.2l1,.5l1-.3l1,0l1-.6l1-.1l1,.1l1,.4l1-.4l1,0l1,0l1-.3l1,0l1-.2l1,0l1,0l1-.1l1,.2l1,0l1,0l1-.4l1,0l1-.1l1-.3l1,.2l1,0l1,.1l1-.3l1,0l1,0l1-.2l1-.1l1-.1l1,.2l1-.1l1,.5l1-.4l1-.1l1,.1l1-.2l1,0l1-.1l1-.1l1,.1l1,.1l1,0l1,.1l1-.1l1,0l1-.2l1,.4l1-.2l1-.2l1-.1l1,.1l1-.2l1,0l1,.1l1,.1l1,.1l1,.1l1,0l1-.2l1-.1l1,.1l1-.6l1,.2l1,.1l1,.3l1-.1l1,0l1-.1l1-.1l1-.3l1,0l1,.2l1-.2l1,.2l1-.2l1,.2l1,.3l1,0l1,.1l1-.4l1,.1l1-.3l1,.2l1,.4l1-.1l1,.1l1,0l1-.2l1,0l1-.2l1,.2l1,0l1,.2l1,.3l1,.1l1,0l1-.2l1-.2l1-.2l1,0l1-.3l1,.2l1,.2l1-.1l1,.2l1-.3l1-.1l1,.4l1,.5l1-.1l1-.1l1,.1l1,0l1-.2l1-.1l1,0l1,.6l1-.1l1,.4l1-.2l1-.2l1,.2l1,0l1,.1l1-.1l1,0l1,.2l1-.4l1,0l1,0l1,.2l1,0l1-.4l1,0l1-.2l1,0l1,0l1,0l1,.3l1,.1l1,0l1,.3l1,.1l1,.4l1,0l1,.4l1-.4l1,.2l1,.1l1,.1l1,.3l1-.3l1,0l1-.1l1,.1l1,.2l1,0l1,0l1,0l1,.2l1,.1l1-.1l1,0l1,0l1,.2l1,.1l1-.3l1,0l1,0l1,.1l1,.1l1-.2l1,0l1-.3l1,.4l1,.1l1,0l1,.2l1-.2l1,.2l1,.1l1,.1l1,0l1-.2l1-.2l1-.1l1-.1l1,.1l1,.3l1,0l1-.2l1,.2l1-.1l1,.1l1,.2l1-.2l1-.2l1,0l1,.6l1,0l1-.2l1,.1l1,.1l1,.4l1,0l1,.1l1-.2l1,.1l1-.2l1,0l1,.3l1-.1l1,.2l1-.3l1,.3l1,.1l1-.2l1-.1l1,0l1,0l1,.2l1-.2l1,.3l1,.1l1,.2l1,0l1-.2l1-.1l1-.1l1,.2l1,.1l1,.1l1-.1l1-.1l1-.2l1,.1l1-.1l1,0l1-.1l1-.1l1,.1l1,.1l1,.1l1-.1l1,0l1,.2l1-.4l1-.2l1,.2l1,.1l1,.1l1,0l1,.4l1-.2l1,.1l1,.2l1-.1l1-.1l1,.1l1-.2l1,.2l1,.1l1-.3l1,0l1-.2l1,.4l1-.1l1,.4l1,0l1,.2l1-.3l1,.4l1-.5l1-.1l1,.4l1,.2l1-.3l1,.1l1,.2l1,.2l1,0l1-.2l1,0l1-.1l1-.1l1,.1l1,.1l1,.3l1-.1l1,0l1,.2l1,.2l1-.2l1,0l1,.1l1,.1l1,.2l1,.3l1-.1l1-.1l1-.1l1,0l1,.4l1-.2l1,0l1,0l1,.3l1-.1l1-.2l1,0l1-.1l1,.3l1,0l1,.1l1,.1l1-.2l1,.2l1,.1l1,.1l1-.2l1,0l1,.2l1,.4l1,0l1-.2l1,.2l1,.1l1,.1l1-.2l1-.2l1,.1l1,.5l1,.1l1-.1l1-.2l1,0l1,.2l1,.2l1-.1l1,.1l1-.4l1,.2l1,0l1,.4l1,.4l1,0l1,.2l1,0l1-.2l1,.3l1,.3l1,.2l1-.3l1,.1l1,.4l1,0l1-.1l1,0l1-.1l1,.2l1,0l1,.5l1,.1l1,.1l1,.1l1,0l1,.4l1-.4l1,.1l1,.1l1,.6l1,0l1,.2l1,.1l1,.1l1,.2l1,0l1,.3l1,0l1-.1l1,0l1-.1l1-.1l1,0l1,.2l1-.1l1,0l1,0l1,.4l1,.4l1-.1l1-.1l1,.1l1,0l1,.2l1,0l1,.6l1-.2l1,0l1,0l1,.2l1-.2l1,0l1-.2l1,.2l1,0l1,.4l1-.1l1,.1l1,.2l1,.1l1-.3l1-.2l1-.1l1,0l1,.2l1-.1l1,0l1,0l1-.2l1-.1l1-.1l1,.2l1,.1l1-.2l1,.1l1-.4l1-.1l1,.1l1,.1l1,.1l1,0l1,.4l1,0l1,.1l1,0l1-.5l1,0l1-.2l1,.3l1,.2l1,.1l1,0l1-.1l1,.1l1,.2l1,0l1,0l1,0l1,0l1,.3l1-.1l1-.2l1-.2l1,.2l1,.2l1-.1l1,.1l1,.3l1-.1l1,.2l1,.2l1,.2l1,.4l1,0l1,.2l1-.4l1,.5l1,0l1,.2l1-.1l1-.1l1,.2l1-.1l1,.1l1,.1l1,.6l1-.2l1,.2l1,0l1-.2l1,.2l1,.2l1,.2l1,0l1,0l1-.2l1,.2l1,.2l1,.2l1,0l1,.1l1-.1l1,.1l1,0l1,.3l1,0l1-.2l1,.2l1,.2l1,.2l1-.2l1,.3l1,.1l1,.6l1-.2l1,.4l1-.5l1,.3l1-.2l1,0l1-.2l1,.2l1-.2l1,.3l1-.3l1,.3l1-.1l1,.2l1-.2l1-.2l1,0l1-.2l1,.3l1,.3l1-.2l1,0l1-.1l1,.3l1-.2l1,.2l1,.2l1,.2l1,0l1-.1l1,.3l1,.3l1,.2l1-.1l1,.2l1,.1l1,.3l1,0l1,0l1,.3l1-.1l1,.2l1,.3l1,.1l1,.2l1,.1l1-.1l1,0l1,0l1,0l1,.1l1,0l1,.4l1-.1l1,.1l1,0l1,.1l1,0l1,.1l1,0l1-.1l1,.2l1,.2l1,.6l1,0l1,0l1-.2l1,.2l1-.2l1,.1l1,.1l1,.2l1,0l1,.2l1,0l1,.3l1-.5l1,0l1,.4l1,.2l1-.1l1,.1l1,.1l1-.1l1-.1l1-.1l1,.2l1,.2l1-.4l1,0l1,0l1-.1l1,.2l1,0l1,0l1-.1l1,0l1-.1l1-.1l1,0l1,.2l1,0l1,0l1,0l1-.1l1-.1l1,.2l1,.2l1,0l1,0l1,0l1,.2l1-.1l1,.1l1,.2l1,.1l1,0l1,.3l1,0l1,.2l1-.4l1,0l1,.2l1,.2l1,0l1,.2l1,0l1,.4l1,.1l1,.1l1-.1l1-.1l1,.1l1-.1l1,.4l1,.2l1,.5l1-.3l1-.2l1,0l1,0l1,0l1,0l1,.4l1,0l1,0l1,0l1,0l1,.2l1-.1l1,.1l1,.2l1,.4l1,.2l1-.4l1-.1l1,.2l1,.1l1-.1l1,.2l1-.1l1-.1l1,.1l1,.2l1,0l1,.4l1,0l1,.4l1,.3l1,.2l1,.1l1,.1l1,.1l1,0l1,0l1,.2l1,.2l1,.1l1-.1l1,0l1,.1l1,.1l1,.2l1,.2l1,.1l1,0l1,.1l1-.3l1,.2l1,.1l1,0l1,0l1,.3l1,.1l1,.3l1-.1l1,.2l1-.2l1,.2l1-.3l1-.1l1,.2l1,.2l1,.2l1,0l1-.2l1,.5l1-.3l1,.3l1,.3l1,0l1-.4l1-.4l1,.2l1,0l1,.2l1,.2l1,.2l1,.2l1,.1l1,.1l1,.2l1,.1l1,.1l1,.2l1-.2l1,0l1-.2l1,.5l1-.1l1,0l1,0l1-.3l1,.6l1-.1l1,0l1-.3l1,.4l1-.1l1,.2l1,0l1,0l1,0l1,.2l1,0l1-.2l1,.1l1,.5l1,.3l1,.3l1,.5l1-.1l1-.2l1,.5l1-.3l1,.4l1-.4l1,.4l1,.4l1,.3l1,.1l1,0l1,.4l1,0l1,.2l1-.1l1,.5l1-.2l1,.1l1,.3l1,.4l1,.6l1,2l1,.2l1-.2l1,.8l1-.2l1,.2l1,.6l1,.9l1,0l1,.6l1,.3l1,.2l1,.6l1-.1l1-.3l1,.8l1,0l1,.1l1-.1l1,.4l1,.4l1,.6l1,.6l1-.3l1,.5l1,.8l1-.4l1,.4l1,.6l1,.4l1,.4l1,.6l1-.1l1,.7l1,.7l1,.3l1-.1l1,.3l1,.5l1-.3l1,.4l1,.2l1,.3l1,.3l1,.4l1-.1l1,.1l1,.3l1,.5l1,.6l1,.3l1,0l1,.5l1,.2l1-.1l1-.2l1,.5l1,.3l1,.5l1-.2l1,.4l1,.7l1,.5l1,.2l1,0l1,0l1,.4l1,.2l1,0l1,.7l1,.2l1-.2l1-.1l1,.6l1,.2l1,.4l1,.5l1,.1l1,.6l1,.7l1-.3l1,.4l1,.4l1,.6l1,0l1-.3l1,.3l1,.8l1-.1l1,.2l1,.3l1,.7l1-.5l1,.4l1,.7l1,.5l1-.4l1,.6l1,.2l1,.6l1,0l1,.2l1-.1l1,.3l1,.4l1,.2l1,.4l1,0l1,.1l1,.5l1,.3l1,.7l1-.4l1,.7l1,.7l1-.1l1,.3l1,1l1,.7l1,0l1,.3l1-.1l1,.1l1,.2l1,.2l1,.2l1,.4l1,.5l1,.7l1,.3l1-.2l1-.1l1,.2l1,0l1,.2l1,.4l1,.3l1-.1l1,0l1-.5l1,.8l1,.5l1,.2l1,.4l1,.3l1-.4l1-.5l1,.6l1,1.1l1-.1l1,.6l1,.6l1,.8l1,.7l1-.3l1,.4l1,.9l1-.1l1,.1l1,.9l1,.9l1-.3l1,.2l1,.6l1,1l1,.6l1,0l1,.5l1,.8l1,.2l1-.4l1,.5l1,0l1-.5l1-.4l1,.3l1,.1l1,.4l1-.1l1-.2l1,.4l1-.4l1,0l1,.2l1,0l1,.4l1-.2l1-.4l1,.6l1-.2l1,.5l1,0l1,.2l1,.5l1,.2l1-.4l1-.1l1,.3l1,0l1,0l1,.4l1,.2l1-.1l1-.3l1,0l1,.6l1,0l1,.2l1,.4l1,.4l1-.6l1,.4l1,.5l1-.1l1,.2l1,.4l1,.1l1-.4l1-.1l1-.5l1,.1l1-.1l1,.1l1,.4l1,.4l1-.4l1,0l1,.2l1,0l1,.1l1,.1l1-.4l1,.3l1,.1l1-.1l1,0l1,.2l1,.5l1-.4l1,0l1,.2l1,.4l1,.1l1-.3l1,0l1-.8l1,.4l1,.4l1,.1l1,.2l1,.3l1-.2l1,0l1,.3l1-.4l1-.1l1,.6l1,.8l1,.2l1-.2l1-.3l1,.2l1,.3l1-.4l1,.2l1,.6l1,.4l1,.2l1-.3l1,0l1,.4l1,.1l1,.4l1,.8l1,0l1-.2l1-.1l1-.3l1,.4l1,.3l1,.1l1,.4l1,0l1,.4l1,.6l1,0l1,0l1,.6l1-.1l1,.1l1,.2l1,.2l1,.2l1,.6l1-.1l1-.3l1,.4l1,.1l1,.1l1,0l1-.4l1-.8l1,.2l1-.2l1-.4l1-.3l1,.1l1-.9l1,.1l1-.1l1,.4l1-.5l1,0l1,.4l1-.1l1-.1l1,.6l1-.2l1,0l1-.2l1-.2l1-.7l1,0l1-.2l1-.5l1-.5l1,.5l1-.4l1,0l1,.9l1-.3l1-.7l1,.3l1,.2l1-.7l1,.1l1,.1l1,.1l1-.9l1-.1l1,.2l1-.2l1-.4l1-.2l1,0l1-.3l1,.3l1,.3l1,.1l1-.5l1-.4l1-.1l1-.1l1,0l1-.4l1,.1l1,.4l1-.4l1-.4l1,.2l1,.2l1-.2l1,.4l1-.5l1-.4l1-.1l1,0l1,0l1,.2l1-.4l1-.5l1,0l1-.2l1-.1l1,.1l1-.3l1,0l1,0l1-.2l1-.2" stroke="#2490e8" stroke-width="1.8"/><path d="M440.5,788.1v1.4l1-1.3v-.9l1-.9v.7l1-1.5v-.9l1-1.6v.9l1-1.7v-1l1-1.5v.8l1-1.2v-.9l1-1.7v1.2l1-1.6v-1.1l1-1.8v1.1l1-1.4v-1.2l1-1.8v1.2l1-1.1v-1.2l1-1.8v1.1l1-1.1v-.8l1-1.3v.9l1-1.4v-.8l1-1.8v1.4l1-1.6v-.8l1-1.3v.9l1-1.1v-.9l1-1.6v.9l1-.7v-1.2l1-1v1.1l1-1.1v-.7l1-1.8v.9l1-.4v-1.2l1-.8v1.1l1-1v-1.1l1-.5v.9l1-1.1v-1.1l1-1.1v1l1-1v-.9l1-.5v.8l1-.9v-.6l1-.6v.7l1-.5v-1.1l1-1v1l1-.7v-1.1l1-.9v1.1l1-.5v-1l1-.3v.9l1-.8v-1l1-.4v.9l1-.1v-1.1l1-.3v.9l1-.5v-.6l1-.4v.7l1,0v-1l1,.2v1.1l1,.2v-1.4l1,.6v1l1-.3v-1.3l1-.2v1.1l1,.7v-1.8l1-.2v.9l1,0v-.8l1-.3v1l1-.2v-1.1l1,.2v1l1-.1v-1l1-.5v1.1l1-.2v-1l1,.2v1.1l1-.1v-1.2l1-.7v.9l1,.1v-.9l1,.1v.7l1,.1v-1l1,.2v.6l1,.2v-.9l1-.1v1l1-.1v-.9l1,.1v1.1l1,0v-1.5l1-.6v1.2l1-.6v-.7l1,0v.8l1-.1v-.8l1-.6v.9l1-.4v-.9l1-.4v.8l1-.1v-.8l1,0v.7l1-.1v-1l1-.1v1.1l1,.1v-1.1l1-.4v.9l1-.4v-.9l1-.6v1.2l1,.1v-1.1l1-.6v1l1,.1v-.9l1-.4v.9l1,.1v-1l1-.4v1.4l1,.5v-1.5l1-.3v.9l1,.3v-1.3l1-.1v1l1-.1v-1.1l1,.5v1.1l1-.2v-1l1,.1v.9l1-.1v-1.2l1-.1v1l1,.3v-1.2l1,.1v1.2l1-.4v-.6l1-.3v1.1l1,0v-1.3l1-.3v1.1l1,.4v-1.1l1-.1v.6l1,.4v-1.6l1,.3v1l1,.2v-.8l1,.3v.6l1,.3v-1l1-.2v1.4l1-.2v-.6l1-.2v1l1-.3v-.8l1-.4v1.2l1,.1v-1.1l1,.2v.9l1,.4v-1.3l1-.1v1.1l1,0v-.9l1,.2v1.1l1-.2v-.9l1,.4v1l1-.2v-.7l1,.4v1l1,0v-1.1l1,1.1v.9l1,0v-.7l1,.1v1l1,.1v-1l1-.2v1.2l1-.1v-1.2l1,.7v1.1l1,.6v-1.2l1,.4v.8l1,.3v-1.1l1,.3v1.5l1,0v-1.2l1,.4v1.4l1-.2v-1l1,.8v.8l1,.3v-1.1l1,0v1l1,.2v-1.1l1-.2v1.2l1-.5v-.7l1,.7v.7l1,.5v-1.1l1,.5v1l1,.3v-1.4l1,.2v1.1l1,.1v-.9l1,.1v.8l1,.5v-1.4l1,1v.7l1,.2v-.9l1-.5v1.6l1-.6v-1.1l1-.4v1.4l1,.1v-.8l1-.2v.8l1,.6v-1.6l1,.6v1l1,.1v-1l1,.5v.8l1-.2v-1.1l1-.3v.9l1-.1v-1.3l1,.2v1l1,0v-1.3l1,.2v1l1,0v-1.1l1,.6v1l1,0v-.9l1,0v.6l1-.4v-1.1l1-.2v1.6l1-.9v-1l1,.4v1.8l1-.2v-1.3l1,.1v.7l1-.6v-1.1l1,0v.8l1,.4v-1l1-.2v.7l1,.3v-1.1l1-.2v1.1l1-.3v-.8l1,0v.9l1,.4v-1.3l1,.1v.8l1,.2v-.8l1-.3v.8l1,.7v-1.2l1-.2v1l1,.5v-1l1,.4v.8l1,0v-.9l1-.3v.9l1,.2v-.9l1-.3v1l1,.2v-.9l1-1v1l1,0v-.7l1-.6v1l1,.4v-1.1l1,.5v1.1l1-.1v-1.1l1-.1v1l1,0v-.9l1-.5v1.1l1-.4v-1.1l1-.2v.9l1,.6v-1.6l1,.6v.9l1,.3v-1.1l1,.2v1.3l1-.3v-.9l1,.2v.9l1-.2v-.8l1-.5v.7l1,.6v-1.2l1,.1v.8l1,0v-.8l1-.1v1.3l1-.4v-1l1,.1v.9l1,.1v-1.2l1-.1v1.2l1-.3v-.7l1,0v.9l1-.2v-.8l1-.5v1.6l1-.8v-1.2l1,.1v.8l1-.4v-.8l1-.1v.9l1-.1v-.8l1-.1v1.2l1,.2v-1.3l1,.3v1.6l1-.3v-1l1-.2v.8l1,.5v-1.2l1-.3v1l1-.1v-.7l1-.2v.8l1,0v-1l1-.3v.9l1,.1v-1.3l1,0v.9l1-.3v-1.3l1,.4v.9l1,.6v-.8l1-.4v2.2l1-1.1v-.7l1,.1v.7l1,.5v-.8l1-.2v.9l1-.3v-.7l1,.3v1l1-.6v-.7l1-.3v1.1l1-.6v-1.1l1,.1v1l1,.3v-.8l1,.3v.9l1,0v-1.1l1,0v.9l1-.4v-.7l1-.3v1.2l1-.3v-.7l1,0v1.1l1-.1v-1.1l1-.2v1l1,0v-1.1l1,.3v.8l1-.1v-.8l1,0v1l1-.3v-.8l1-.3v1.1l1-.2v-.8l1,.1v.9l1,0v-1l1-.2v.8l1-.2v-.8l1-.1v.8l1,.5v-1.1l1,.4v.6l1,0v-.7l1-.3v.8l1,.4v-1l1,.2v1l1-.1v-1.1l1,.3v1.1l1,1.1v-2.3l1,.2v1.2l1-.4v-.9l1-.4v1.2l1-.1v-1.1l1,.2v1.2l1-.7v-1.1l1,.4v.8l1,.2v-.7l1,.5v1l1-.3v-.9l1-.1v1.4l1-.7v-1.2l1,.5v1.2l1,.5v-1.2l1,.2v1.1l1-.6v-.8l1,0v1l1,.5v-1l1,.2v1.3l1-.4v-1l1-.4v1l1,0v-1.2l1,.6v1.1l1-.3v-.8l1,.1v.8l1,.1v-.8l1,.4v1l1,.1v-.9l1-.5v1.4l1-.5v-1.1l1-.2v1.3l1,.4v-1.2l1,0v1.4l1,0v-1.1l1,.1v.8l1-.1v-1l1-.2v.9l1,.2v-.9l1,.4v.8l1,0v-.9l1,0v.9l1,0v-.9l1,.3v.9l1-.1v-1l1,.3v1.3l1-.3v-1l1,0v.9l1,.2v-1.4l1,.3v1l1,.5v-1.6l1,.4v.7l1,0v-1.1l1-.3v1.4l1,.8v-1.4l1,.2v.7l1,.3v-1.2l1,.2v1.2l1,.2v-.9l1,.2v1l1-.8v-1l1,.3v1l1-.1v-1.2l1,.2v1.3l1,.1v-1.3l1,.3v1.3l1-.2v-1.1l1-.4v1.1l1-.1v-.8l1,.2v1.1l1-.2v-.8l1-.1v1.1l1-.1v-1.3l1,.1v2.2l1-1.3v-.7l1-.3v1.1l1,.5v-1l1,.4v.8l1,.5v-1.2l1-.3v1.2l1,0v-1.6l1,.2v.9l1,.2v-1l1,.1v1.2l1-.3v-.9l1-.1v.9l1,.1v-1.2l1-.1v1.2l1-.2v-.9l1,.4v.7l1,.4v-1l1-.2v1.1l1-.1v-.8l1-.2v.9l1-.1v-.8l1,.4v.6l1,.8v-1.1l1,.4v.7l1-.4v-1.2l1-.1v2l1-1v-.9l1,.1v1.1l1,.5v-1.1l1,0v.7l1,.6v-.9l1-.1v1.3l1-.2v-1.3l1-.1v1.3l1-.3v-.7l1,.2v.8l1,0v-1.1l1-.1v.7l1,0v-1.7l1,.7v1.1l1,.1v-1.2l1,.7v1.2l1-.1v-.7l1,.3v.8l1,.2v-1.3l1,.2v1.2l1-.5v-.9l1,.1v.8l1,.6v-1.1l1-.2v.9l1,.2v-1.4l1,.6v.7l1,.2v-1.5l1,.5v.7l1,.1v-1.7l1,.3v1.1l1-.1v-.9l1,0v.8l1,.3v-.8l1,.1v.7l1,.3v-.9l1-.5v1.6l1-.4v-.7l1-.2v1l1,.3v-1.3l1,.2v.6l1,.1v-.9l1-.2v1.3l1,.2v-.9l1,0v.7l1,.5v-1l1-.4v.8l1,0v-.7l1,.1v.8l1,.3v-1.2l1,.1v.8l1,.2v-1.3l1,0v1.1l1-.2v-1l1,0v1.2l1-.1v-.8l1-.5v.9l1,.2v-1.1l1-.3v1.3l1,.4v-.9l1-.1v1.1l1-.4v-.8l1,.3v.7l1,0v-.7l1-.4v1.3l1-.9v-.9l1,.5v1l1,.5v-.9l1,.3v.9l1-.7v-.8l1-.5v1.3l1-.1v-1.1l1,.3v1.8l1-.5v-.7l1-.1v.6l1,.2v-1.1l1,.1v.7l1,.3v-.7l1,0v1l1,.2v-1.2l1-.7v1.1l1,0v-.8l1,0v1.1l1,.4v-1l1,.5v.9l1-.2v-1l1-.6v.8l1,.4v-1l1,.4v1.3l1-.3v-.8l1-.4v1.1l1-.5v-.9l1,.6v.8l1,.7v-1.2l1-.6v1.6l1-.7v-.9l1-.4v1.2l1,0v-1.2l1,.2v.9l1,.4v-.7l1,.5v1.1l1,.3v-1.2l1-.4v1.2l1,.2v-1.7l1,.1v1.4l1,.1v-1l1-.2v1.1l1-.4v-1l1,.6v1l1,.3v-.9l1,0v1.1l1,0v-1.1l1,0v.7l1,.3v-1.1l1,0v1.2l1-.2v-1l1,0v1l1,.4v-1.1l1-.1v1.2l1-.3v-1l1,.7v1.1l1-.3v-.7l1,0v.8l1-.5v-.8l1,.6v.7l1-.1v-1.1l1,.1v1.6l1-.9v-.8l1,.1v1.3l1,.3v-1.2l1,.2v.9l1,.1v-1.2l1,.4v.9l1-.1v-.8l1-.1v.8l1,1.5v-2.4l1,.4v.9l1-.6v-1l1,.4v.9l1-.1v-1.1l1,.6v1l1,0v-1.1l1,.8v.8l1,.5v-1.3l1,0v.7l1,0v-.8l1-.1v.8l1,.2v-1.6l1,.9v.7l1,.1v-.8l1,.5v.9l1,.4v-1.1l1-.2v1l1-.1v-1.1l1-.2v1l1,0v-.6l1,.6v.7l1,.3v-.9l1-.2v1.2l1,0v-1.4l1,.2v1.6l1-.3v-1l1,0v1l1-.1v-.8l1-.5v1.2l1,.2v-1.1l1,.2v.9l1,.3v-1l1,.2v1.1l1,0v-1l1,.2v1l1,.2v-.8l1,0v1.1l1,.3v-.8l1,.3v.9l1-.1v-.9l1,.2v.8l1,.1v-1l1,.2v1.2l1,0v-.9l1,.5v.9l1,.6v-1.4l1,.2v2.1l1-1.6v-1l1-.5v1.3l1-.3v-.7l1-.9v1.6l1-.1v-.8l1-.4v.9l1,.7v-1.4l1,.2v1l1,.3v-1l1-.3v.9l1,.1v-1.3l1,1v.8l1,.3v-.9l1-.3v1l1,0v-.9l1-.2v.8l1,.6v-1l1,.1v1l1,.1v-.9l1-.4v1l1,.1v-.9l1,0v1l1,1.6v-2l1,.2v1.1l1,.1v-.8l1-.6v1l1-.5v-.7l1-.2v1l1-.1v-1.5l1,.6v.9l1-.1v-.7l1-.7v1.2l1,.2v-1l1-.1v1.1l1,.2v-.9l1,.1v.8l1,.5v-.8l1-.6v1.1l1-.2v-1l1-.3v1.1l1-.5v-.8l1-.1v1.1l1-.1v-1.1l1,.1v.9l1,0v-.8l1-.1v1.1l1,.8v-2l1,0v1.2l1,0v-1l1,.4v1l1,0v-1.2l1-.1v.9l1,0v-1l1,.5v1l1-.2v-.9l1,.3v.9l1-.2v-.7l1-.1v1l1-.1v-1l1,.7v1.1l1,0v-1l1,.5v1.1l1-.9v-.8l1,.2v.7l1,.1v-.8l1,.2v.9l1-.2v-1.2l1,.1v1.1l1-.3v-1.1l1-.1v1.2l1-.3v-.7l1,.2v1l1,.1v-1.2l1,0v1.1l1,.1v-1.2l1,.3v.7l1,.1v-.8l1-.3v1l1,.1v-1l1,.2v1.2l1,.4v-1.5l1,.6v.8l1,0v-1.1l1,.3v.7l1,.4v-.7l1,.2v.8l1,.2v-1.1l1-.2v1.3l1-.2v-.7l1-.2v1.2l1-.1v-1.1l1,.2v1l1-.3v-.9l1,0v1l1,.4v-.8l1,.1v.7l1-.1v-1l1,0v1.1l1,.1v-.9l1,.6v.9l1,.1v-1.3l1,.4v.9l1-.1v-.8l1,.1v.9l1,.3v-.8l1,.2v.7l1,.7v-.9l1-.1v1l1,0v-1.1l1-.5v1.2l1,0v-.8l1,0v.8l1,.1v-.7l1-.6v1.5l1-.3v-.8l1,0v1l1,.2v-.9l1,.1v1.3l1-.6v-1l1,0v1l1,.2v-.7l1,.1v.9l1-.1v-.8l1,.4v1.1l1-.3v-.7l1,.1v1l1-.3v-1.3l1,.5v1l1,.2v-1l1-.2v.8l1,.1v-1.1l1,0v1.2l1-.6v-.6l1-.5v1l1-.2v-1l1,.2v1.6l1-1v-1.1l1,.2v1.4l1,0v-1.6l1,.2v.9l1,.3v-1l1,.4v.9l1,.2v-1.3l1-.8v1.9l1-.5v-1.1l1,.6v.9l1-.1v-.9l1,.3v.7l1,.4v-.6l1,.1v1.3l1-.2v-1.1l1-.3v1.2l1-.4v-.7l1-.3v1.5l1-.2v-.9l1,.1v1l1,.3v-1.3l1,.7v.7l1,.4v-.7l1,0v1.2l1-.2v-.9l1-.1v.9l1,0v-.9l1,.1v1l1,.2v-.9l1,.5v.8l1,.2v-1.2l1-.2v1.1l1,.3v-1l1,.5v1l1,0v-1.2l1,.4v1.3l1-.4v-.8l1,.2v1.1l1-.5v-.9l1,.5v1.1l1-.7v-.7l1,.6v.6l1-.1v-1l1-.2v1.2l1-.5v-.7l1,.2v1l1,0v-1.3l1,.2v1l1-.5v-.7l1,.4v.9l1,0v-.9l1,.2v1l1-.2v-1l1,.3v1.1l1,.2v-1.4l1,.2v1.4l1-.2v-.9l1-.4v1.8l1,.1v-1.3l1,.4v1.2l1-.6v-.9l1,0v.7l1,.2v-1.2l1,.5v1l1,.6v-.9l1-.1v1l1-.1v-1l1-.3v1l1,.1v-.9l1-.5v1.2l1,.3v-1.1l1,0v1l1,.3v-.8l1,.1v.9l1,.3v-1.1l1-.1v1.4l1-.5v-.8l1-.6v1.3l1-.7v-1.2l1,.4v.8l1,0v-.9l1-.4v1.2l1,.2v-.7l1,.3v.9l1-.1v-.8l1-.2v.6l1,0v-1.1l1,.3v.9l1,.1v-.8l1,0v1l1-.4v-.9l1-.2v1.4l1-.6v-1l1-.4v1.2l1,.1v-1l1-.1v.9l1,.5v-1l1,.2v.9l1-.2v-.8l1-.4v1l1,.3v-1.2l1,.3v.9l1-.1v-.8l1,.2v1l1,.2v-1l1-.3v1.3l1-.2v-.8l1-.1v1l1,0v-1l1,.1v.8l1,.2v-.8l1,0v.8l1,0v-1.1l1-.2v.8l1,.2v-1.1l1,.4v.9l1,.3v-1.1l1,.1v1l1-.3v-.7l1,0v.8l1,.4v-.9l1,0v1.2l1,.2v-.8l1,.1v.8l1,.4v-1.2l1-.4v1.1l1,0v-.7l1-.2v.9l1-.1v-1l1,0v1.2l1,.2v-1l1,.4v1.1l1,0v-1l1-.5v.7l1,.2v-1.7l1,.6v.9l1,.3v-1.3l1,.3v1l1,.1v-1l1,.4v1.1l1-.1v-1l1,.7v1l1-.2v-1l1,.2v.9l1-.3v-.7l1,.4v.7l1-.1v-.8l1,.1v1.3l1-.4v-1.1l1,.4v.9l1-.1v-.9l1,.2v1l1,.2v-.9l1-.1v1l1-.2v-.9l1,.2v.8l1,.1v-.9l1,.3v.7l1-.3v-.8l1,.3v.8l1,.3v-.9l1,.8v.7l1,.4v-1l1-.4v1.1l1,.1v-1l1,.1v.8l1-.3v-.7l1-.3v.9l1,.2v-.9l1,.1v1l1,.2v-1l1,.6v1.3l1,0v-1.3l1,.1v1.1l1,.2v-.9l1,.1v.8l1,.5v-.9l1-.2v1l1-.2v-.9l1,0v1l1,.3v-1.1l1-.1v1.2l1,.1v-1l1,.4v1.3l1-.3v-1l1,.5v1.3l1-.7v-1.1l1,.2v.7l1,.3v-1l1,.5v.9l1,.5v-1.2l1,0v1l1,.1v-1.2l1,0v1.1l1-.4v-1.1l1,.2v.8l1,.6v-1.3l1-.1v.8l1,.4v-.9l1-.3v.8l1,.4v-1.4l1-.1v.9l1,.3v-.8l1,0v1.1l1,.2v-.8l1-1v1.4l1,.3v-1.1l1-.3v1l1,.2v-.9l1-.1v1l1,.1v-1.1l1-.2v1.6l1-.6v-.9l1,.2v.9l1,.1v-.8l1,.5v1.4l1-.6v-1.2l1,.3v1.2l1-.5v-1l1-.4v1.4l1-.1v-.9l1-.4v.9l1,.1v-1.5l1,.8v.7l1,.3v-.9l1,.1v1l1,.4v-1.1l1,.2v.7l1,.1v-.9l1-.1v.9l1,.8v-1.6l1,.6v.8l1-.3v-.8l1,0v.8l1,.1v-1.1l1,.4v1.2l1,.3v-1.5l1,.2v1.2l1-.5v-1l1,.4v1.2l1,.1v-.8l1,.5v1.9l1-1.1v-.9l1-.1v1.3l1-.1v-1.2l1,.8v.9l1-.1v-.8l1,.4v.7l1,0v-1l1,.2v.7l1,.2v-1.4l1-.1v1l1,.3v-.9l1,.4v1.1l1,.4v-1.2l1,.3v1.2l1-.5v-.7l1,.2v.9l1,0v-1.2l1,.5v1l1,.4v-1.1l1,.3v1.4l1,10.4v-2.7l1,.4v2.5l1,0v-2.7l1,0v1.7l1-.5v-1.9l1-.2v2.1l1,.9v-2.6l1,.4v2.5l1,1.1v-1.4l1-1.5v3.2l1-.6v-4.6l1,3.8v8.1l1-4v-4.6l1,2.6v2.3l1-1v-1.7l1-.5v3.8l1-1.9v-2.1l1-.5v2l1-.4v-2.9l1,.6v1.6l1,.9v-1.9l1,.5v2.5l1,1.8v-2.7l1,1.5v2.7l1,1.6v-2.5l1-.2v1.4l1,.8v-1.7l1-2.5v3.9l1,4.8v-6.4l1-1.4v3.5l1,.2v-2.2l1-.4v3.3l1-1.2v-3.2l1,1.1v2.2l1,.7v-2.3l1,2.1v2.5l1-.3v-2.8l1-1.8v3.6l1-.7v-4l1,2.1v2.5l1,1.7v-2.4l1-.4v2.9l1,.9v-2.5l1,1.1v1.8l1,1v-2.2l1,.6v2.4l1,.2v-1.7l1-1.6v2.8l1,.5v-2.9l1-.1v2.2l1,1.6v-2.6l1,2.1v2.3l1-2.4v-1.7l1,.6v2.6l1-.1v-2.9l1,.5v2l1,1v-2l1-.3v3l1,1.2v-3.8l1,.3v2.2l1,.4v-2.6l1-.3v3.3l1-.4v-1.9l1,.9v2.7l1,1.3v-3l1,.6v2.4l1,.9v-4.4l1,1.6v2.2l1,2v-1.9l1-1.3v2.7l1-.8v-3.5l1,2.2v1.7l1,3.8v-4.4l1,.5v9.8l1-5.4v-4.3l1,1.2v2.6l1-1.4v-2.2l1-.7v2.7l1-.1v-1.9l1,.2v3l1,1v-2.3l1,.3v3.6l1,2.5v-3.2l1-1.5v2l1-.9v-3.2l1,2.7v2l1-.3v-2.6l1-.9v2.6l1,1.1v-1.5l1,.7v3.2l1,.9v-2.9l1,1.1v1.6l1,.3v-2.2l1,.4v2.9l1,.4v-3.1l1-.5v3.5l1-1.7v-1.7l1-.7v2.7l1,1.8v-3.6l1,0v9.1l1-3.3v-4.8l1,.4v3.5l1,0v-1.5l1,.3v2.4l1,1v-3.1l1-1.2v3.4l1-1.4v-1.7l1,3v2.2l1-1.8v-2.1l1-1.2v2.8l1,1.4v-2.7l1,.4v3.1l1,5.1v-6.9l1,1.7v3.7l1-.3v-3.1l1,.2v2.1l1,1.9v-2.4l1-.2v2.1l1,.6v-2.6l1-.2v3.1l1,2.7v-2.7l1-1.9v2.4l1-1.7v-2.1l1,.3v2.3l1,2.2v-2.9l1,.1v3.9l1,1.3v-3.4l1,.9v2.5l1,.6v-1.7l1,0v1.7l1-1.2v-2l1-1.6v2.3l1,.1v-2.5l1-1.6v2.8l1,.3v-2.3l1,.1v2.5l1,1.2v-3.7l1-.5v9.1l1-7.6v-3.1l1,.3v4.4l1,3.7v-7.1l1-2.3v3.2l1-1.1v-2.9l1,.7v2.1l1-2.5v-2.6l1,.1v2l1,1.3v-2l1-.4v2.9l1,1.5v-3.2l1,1.3v1.7l1,1.3v-4.1l1,2.3v2.8l1,1.6v-2.9l1,.8v2.5l1,.7v-2.2l1-1.2v3.4l1-1.7v-2.3l1,2.8v2.5l1,.9v-3l1,1.6v6l1-1.6v-3.5l1,.1v2.1l1,.3v-4.3l1,3.3v2.5l1-.7v-2.7l1,.4v2.8l1,1v-2.7l1,.6v3.6l1-.6v-3.9l1-1v4.6l1-1.1v-2.5l1-.3v2.9l1-1v-1.7l1-.8v2.6l1-1.9v-2.3l1-.3v2.2l1,1.4v-4l1,2.2v8.8l1-5.9v-3.2l1-1.1v2.1l1-2.2v-2.9l1-.7v2.4l1,1.2v-2.5l1-2v2.1l1-.7v-2.1l1,.7v2.7l1-.7v-1.6l1-2.4v2.5l1,.8v-2l1,1.4v1.8l1,.4v-2l1-1.8v3l1,.2v-2.7l1,1.2v2.7l1,.5v-3.1l1,.6v1.9l1-2.1v-1.7l1,.4v1.5l1-.3v-2.1l1,0v2.6l1,.4v-2l1-.2v2.6l1,2v-3l1,2.2v1.9l1,2v-2.2l1-.2v1.6l1-3.4v-2.4l1-1.3v2.1l1,2.3v-2.4l1-.1v2.3l1-1v-1.8l1,1.7v2.3l1,.7v-1.6l1-1.2v3.2l1-.9v-2l1-.3v2.7l1,.5v-3.4l1,.8v3l1-.9v-2.3l1-.5v2.8l1-.2v-2l1-.9v3.1l1,.8v-4l1,1.4v2l1-1.1v-2.2l1-.3v1.8l1,1.7v-2l1,.2v1.9l1,.3v-2.7l1-1.2v3l1,.7v-2.6l1,.3v2.2l1-.2v-2.6l1-.9v4.4l1,8.1v-9.7l1-1.7v4.9l1-2.2v-2.2l1-1.4v3.1l1,0v-2l1-2.2v2.9l1,1.4v-3.9l1,2.2v2.5l1,0v-2.1l1-2.4v2.9l1,.5v-3.3l1-.2v8l1-5.3v-2.9l1,0v1.5l1,1.1v-3.1l1,1.8v2.3l1,2.6v-4.1l1-.3v7.7l1-4.3v-3.2l1-1.4v5.1l1,5.8v-8.9l1,0v3.8l1-2v-1.9l1-.2v1.7l1,1.3v-2.2l1-.1v3.3l1,.1v-2.6l1-.6v1.7l1,.2v-3.1l1,2.6v4.1l1,6.5v-9.9l1-.6v3.6l1-1.8v-2.1l1-1.1v3.2l1,1.8v-2.3l1-1.3v3.1l1,.1v-3.7l1,1.1v2.6l1,.6v-3.3l1,1.4v2.2l1,.1v-2.1l1,1v4.2l1,8.5v-10.3l1-1v8.3l1-6.6v-4.2l1,.6v7.6l1,1.1v-9l1,.1v3.3l1-1.2v-1.8l1,.7v4.1l1-.4v-1.7l1,.6v1.8l1-1.2v-2l1-2.1v2l1,1.2v-2.9l1,2.4v3.2l1,6.6v-7.6l1-.6v3.6l1-1.3v-2.9l1,1.4v2.7l1,.8v-1.7l1-.3v1.7l1,2v-3.1l1-.8v1.9l1-3.1v-2.3l1,.1v1.9l1,1.6v-1.7l1,.2v3.8l1,9.6v-12.8l1-.2v14.6l1-11.7v-4.6l1-1.5v1.8l1,.6v-2.7l1-2.5v3.8l1,.5v-1.9l1,.5v2l1,1.2v-2.9l1-1.3v2.5l1-1.8v-1.9l1,0v2.9l1,.3v-3.2l1-1.9v2.6l1-1v-2.4l1,1.1v1.9l1,.4v-3l1,.9v3.3l1-.4v-2l1-1.9v3.3l1-.4v-2.2l1-1.2v2.3l1,.9v-2.5l1,0v2.2l1-1.1v-1.8l1,.5v2.1l1,2.1v-2.6l1-3.5v2.1l1-1.7v-3.4l1,3.1v2.2l1,1.5v-3.2l1-2v3.7l1-.2v-2.8l1-.2v2l1-.2v-2.7l1,1.1v2.7l1,0v-2.5l1-.5v2.3l1,1.1v-2.5l1,2.1v2.4l1-.3v-2.1l1-.8v2.3l1,.4v-1.5l1,1.4v2.6l1,.4v-2l1-1.6v3l1,.3v-2.1l1-1.7v3.3l1,1.7v-2l1,.7v3.3l1-.8v-2.2l1-1.4v1.7l1,.3v-2l1,2.2v2.1l1-1v-2l1-1.1v3.1l1-1v-2.3l1-1v2.2l1,1.2v-2.6l1-1.3v4l1,5v-9.5l1-.3v4.1l1,0v-2.8l1-1.5v6.9l1-4.3v-2.9l1,.8v2.3l1,1.3v-3.7l1,0v9.8l1-8.2v-4.7l1,1.2v2l1,1.7v-2.9l1,0v3l1-.5v-1.8l1,.2v3l1,7.6v-10.3l1-2.3v4.3l1-.4v-2.9l1-1.6v4.4" stroke="#58c8c8" stroke-width="1.5"/><path d="M440.5,786.4v1.3l1-1.5v-1.3l1-.4v.7l1-1.3v-.9l1-1.5v1l1-2v-.6l1-2.1v1l1-1.8v-.8l1-1.6v1.3l1-1.4v-1l1-1.8v1.1l1-1.1v-1l1-1.6v1.1l1-1.6v-1.4l1-1.9v1.4l1-1.5v-1l1-1v1l1-1.5v-.9l1-1.5v1.3l1-1.6v-1l1-1v1.1l1-1.2v-1.1l1-1.5v1.3l1-.9v-1l1-1.3v1l1-.7v-1.6l1-1.1v1.5l1-1v-.7l1-1.2v.8l1-.9v-.9l1-1v1.1l1-1.4v-.9l1-1.1v1.3l1-1.4v-1.1l1-.7v.8l1-1v-1l1-.6v.8l1-.6v-.9l1-.9v.7l1-1v-.7l1-.8v1.1l1-.7v-1.1l1-.3v1l1-.7v-1l1-.3v.8l1-.6v-1.2l1-.1v.9l1,.1v-.7l1-.4v1.5l1-.3v-1.1l1,.3v.9l1-.1v-1.4l1,0v1.2l1,0v-1l1-.2v.8l1,0v-.7l1-.7v1.6l1-.5v-1l1,.1v1.2l1,.1v-1.1l1-.7v1.1l1-.1v-.9l1-.5v.6l1,.7v-1.3l1-.5v1l1,0v-.8l1-.5v1.1l1-.6v-1l1-.7v1.1l1-.5v-.8l1,.2v.8l1,.2v-1l1-.1v1l1-.1v-1.2l1,.1v.9l1,.1v-.9l1-.2v.8l1,.1v-1.1l1,0v1.2l1-1.1v-1l1-.2v1.1l1,0v-1.7l1,.7v1.1l1-.1v-1.2l1-.1v1l1-.2v-.9l1,.2v1l1-.1v-1.1l1,0v.9l1-.3v-1l1-.4v.7l1,.7v-1.4l1-.4v1.1l1-.2v-.8l1-.5v1.2l1-.6v-1.1l1,0v1.3l1-.4v-1.1l1,.8v2.5l1-1.7v-1.3l1-.2v.8l1-.6v-1.1l1-.4v2.1l1-.4v-.8l1,.6v1.1l1-.1v-1.4l1-.1v.9l1-.6v-.9l1,.6v.8l1,.2v-.8l1-.2v1.1l1,.2v-.9l1,.2v.9l1,0v-.8l1-.4v.7l1-.2v-1.2l1-.2v1.1l1,0v-1l1,.1v.8l1,.2v-1.4l1-.1v.9l1,.4v-1l1,0v.9l1,.5v-1l1-.8v1.3l1-.2v-.9l1,.2v.9l1,.3v-1.1l1,.3v1l1,0v-.8l1,0v1.2l1-.1v-.7l1,.2v1l1,.3v-1.1l1,.4v.9l1,.4v-.8l1-.4v1.2l1,.2v-1.2l1,.8v.9l1,.5v-1l1,.5v.7l1,.4v-1.2l1,.5v.9l1,.3v-.9l1,.3v1.1l1,.5v-.8l1,.1v1l1-.4v-1l1-.3v1.3l1,.1v-.8l1,.4v.7l1,.3v-.9l1,.4v1l1,.1v-.8l1-.1v1l1,0v-1.1l1,.1v.9l1,.6v-1l1,.1v.9l1-.3v-1l1,.8v.9l1,.3v-.9l1,.4v.9l1-.1v-1l1,.4v.7l1,.3v-1.1l1,.4v.9l1,0v-.9l1,.4v1l1-.3v-.8l1-.4v1.2l1-.4v-.8l1,.4v1l1-.2v-.8l1-.2v1.1l1-.3v-.7l1,.1v1.3l1-.4v-.8l1-.4v1.1l1,.4v-1.2l1-.5v1.2l1-.6v-.7l1-.3v1.2l1,.4v-1.1l1,.3v1l1,.1v-.8l1-.5v.9l1-.3v-.7l1,0v1.1l1-.8v-1.1l1,.4v.9l1-.5v-.9l1,.6v.7l1-.7v-1l1-.1v1l1,.3v-1l1,.2v.9l1,.2v-1.4l1,.1v.9l1-.2v-.7l1,.3v1.1l1,.1v-.8l1,.2v1.2l1-.8v-.9l1-.2v1.3l1-.3v-.9l1-.1v1.2l1-.4v-1l1-.5v.8l1,0v-1.3l1,.9v1.2l1-.3v-1l1-.1v1l1-.2v-.8l1-.3v.7l1-.2v-.9l1,.4v.6l1-.1v-.8l1,.1v.9l1-.5v-.9l1,.2v.9l1,.3v-1.2l1-.4v1.3l1-.3v-1l1,0v1.1l1,0v-1.1l1,.3v1l1-.1v-1l1,.3v1.3l1-.6v-1l1,.1v1l1-.1v-.8l1,.2v.8l1,.2v-1.1l1-.3v1.1l1,0v-.9l1,0v1.1l1,.1v-.9l1-.7v1.4l1-.4v-1l1,.1v.6l1-.2v-.9l1,.2v.9l1,.1v-.7l1-.1v1.1l1-.4v-1.2l1,.2v.7l1,.9v-1.2l1-.2v1.4l1-.2v-.9l1-.4v.8l1,.5v-1.2l1,0v.9l1,0v-1.2l1,.1v.8l1,0v-.8l1-.3v1.1l1-.6v-.9l1-.5v1l1-.1v-1.3l1,.7v1l1-.2v-.7l1-.4v2l1-1.1v-1.2l1,.3v1.1l1,1.3v-2l1-.2v1.1l1-.3v-.9l1-.2v.9l1,.3v-.9l1-.1v.9l1-.2v-.9l1-.1v1.2l1-.2v-.8l1-.1v1.2l1-.1v-1.5l1,.7v.7l1,.4v-.7l1-.2v.9l1,.3v-1.3l1,.3v.8l1,.1v-1.3l1,.2v.9l1-.3v-1l1,.1v1.1l1,0v-1l1,.1v1.4l1-.3v-.7l1,.3v.9l1-.8v-.8l1-.1v1.1l1,.7v-2.1l1,.3v1.2l1-.2v-.9l1-.3v1.2l1,0v-1l1,.3v1.2l1,.3v-1.2l1-.3v.7l1,.1v-.9l1-.3v1.2l1-.2v-.9l1,0v.9l1,0v-.6l1-.4v.8l1,.3v-1.4l1,.3v.7l1-.2v-.9l1-.3v1l1,0v-1.6l1,.9v.9l1,0v-.8l1-.2v1.1l1,0v-1.3l1,.3v1.1l1,.6v-.9l1,.5v1l1,0v-1l1,.2v.6l1,.2v-.6l1,.1v1.1l1,.3v-1.1l1,0v.7l1,.3v-1l1,.4v.8l1-.1v-1l1-.8v1.1l1,.1v-1.4l1,.3v.9l1,.3v-1.1l1,0v1.3l1,0v-.8l1-.5v1.5l1,0v-1.2l1,.4v.8l1,0v-.9l1-.2v.9l1-.4v-1.2l1,.4v1.1l1,.3v-1.5l1,.2v.8l1-.2v-.9l1,0v1l1-.1v-1l1,.2v.9l1-.1v-.8l1-.4v1l1,.4v-1.4l1,.2v1l1,0v-.8l1-.4v1.5l1-.1v-1.1l1,.1v1l1-.3v-1.1l1,.5v1.5l1,.1v-1l1,.3v.7l1,.3v-.9l1,0v1.2l1-.3v-.7l1-.4v1.2l1-.4v-.8l1,.5v.9l1,.3v-.8l1,.2v1.1l1,.1v-1.1l1,.4v.9l1,.4v-1.2l1,0v.8l1,0v-1.4l1,.5v1.5l1-.4v-.9l1,.3v1l1-.2v-.8l1-.8v.9l1,0v-.8l1,0v1l1,.2v-.7l1-.7v1.4l1,.2v-.9l1-.2v.9l1,.2v-1l1-.1v.7l1,.7v-1.4l1,.3v1.9l1-.9v-1.2l1,.1v.8l1,0v-1.3l1,.1v1.1l1,.1v-1l1,.1v1.1l1-.4v-1.1l1,.2v.8l1,.1v-.8l1,.1v.8l1-.2v-.8l1-.2v.9l1,.3v-.8l1,0v.8l1,.4v-1.1l1,.3v.6l1,.4v-1.1l1-.1v1.3l1-.7v-1l1,.1v.9l1,.4v-.9l1,.3v1.2l1-.1v-1.2l1,.2v.8l1,0v-1l1,.2v.8l1,.2v-1.5l1,.8v.9l1,.3v-.9l1-.8v1.5l1-.3v-.6l1-.5v1.4l1,.1v-1.1l1-.2v1l1,0v-1.1l1-.3v.9l1,.1v-1.6l1,.9v1.1l1-.3v-.9l1,.2v.9l1,.1v-.8l1,0v.9l1,.5v-1.1l1,0v.9l1,.1v-1l1,0v1l1,.2v-.9l1-.1v.7l1,.2v-.8l1,.1v1l1,.2v-1.3l1,.6v1l1-.2v-.9l1,.2v.9l1,.2v-1.5l1,.2v.9l1,.4v-1.2l1,.1v.8l1,.1v-1.3l1,.1v1.2l1-.1v-.9l1,.2v.8l1-.1v-1l1-.9v1.3l1-.5v-1l1,.5v1l1-.1v-1l1,.3v.8l1,0v-1l1-.1v.8l1,.2v-1l1,.2v1.1l1,.1v-.7l1,0v.9l1-.3v-1l1,.1v1.2l1-.2v-.9l1,.1v1l1,.7v-1.3l1,0v2l1-1v-1l1-.4v1.1l1-.5v-1.1l1,.4v1l1,.1v-.6l1-.4v.9l1-.1v-.8l1-.4v.9l1,.2v-.9l1,.4v.7l1,.5v-1.1l1,0v1l1,.1v-.9l1,0v1l1,.2v-1l1-.3v.8l1,.2v-1.2l1-.1v1l1,.3v-1.2l1,.5v.9l1,.2v-1.3l1,.3v1l1-.1v-1l1,.1v1.2l1-.1v-.8l1,.2v.9l1-.4v-.7l1,.2v.7l1-.1v-.7l1,.1v1.1l1-.2v-1l1,.1v.8l1,.2v-.8l1,.1v1.1l1,.1v-.9l1-.5v1.2l1,.9v-2l1-.9v.9l1,.1v-.8l1,0v1l1,.7v-.8l1,.4v1l1,0v-1.2l1,.1v1.1l1-.2v-1.2l1-.4v.9l1,0v-.9l1,.5v1l1,.1v-1.1l1,.5v.9l1-.1v-1.1l1,.5v.8l1-.1v-1.1l1-.2v1.2l1,.1v-.8l1,.3v.9l1,.5v-1.1l1,.1v1.1l1-.2v-.7l1-.3v1.5l1-.4v-.7l1-.2v1.1l1-.4v-.9l1,.1v.8l1,.4v-1.1l1-.2v1.4l1-.5v-.6l1,.1v.9l1-.2v-.7l1-.6v1.7l1-.3v-.6l1-.6v1.1l1-.1v-.9l1,0v1.2l1,.3v-.9l1,.2v1l1-.4v-.8l1,0v.8l1-.3v-1.2l1,.3v1.1l1,0v-1l1,.1v.6l1,.7v-1.3l1,.4v.6l1,.5v-.8l1,.3v.9l1,.2v-1l1-.8v2l1-1.3v-.8l1,.1v1.1l1,.4v-.8l1,.3v.8l1,.3v-.8l1,.4v.9l1,.2v-.9l1-.4v1.2l1,.3v-1.6l1,.4v1.3l1-.3v-1l1,.4v.8l1,.2v-.9l1-.2v1l1-.2v-.9l1,.5v.7l1,.3v-.9l1-.1v.8l1,.1v-.9l1,.1v1l1,.8v-1.4l1,.3v.9l1,.2v-1l1-.5v1.1l1,.1v-.8l1,0v1l1,.4v-1.3l1,.6v1l1,.1v-1.2l1,0v1.2l1-.2v-1.5l1,.4v1.1l1-.1v-1.1l1,0v.9l1-.5v-.7l1,.3v1.2l1,.1v-1.1l1,.1v.9l1-.1v-.8l1,0v1.2l1-.4v-1l1,.3v1.1l1-.2v-.9l1-.6v1.3l1,.3v-.9l1,.1v1.3l1-.2v-1.1l1,.4v.8l1,.6v-1l1-.2v1.1l1-.1v-.8l1-.2v.8l1-.3v-1l1-.2v1.1l1,.1v-1.2l1,.8v1.2l1-.3v-1.1l1,.5v1.1l1,0v-.9l1,.2v.7l1,1v-1.4l1-.1v.9l1,.4v-1.1l1-.5v1.6l1-.3v-1l1,.4v1.2l1-.7v-.9l1-.2v1.2l1-.2v-.8l1,.4v.9l1,0v-1l1-.1v1.1l1-.2v-1.3l1,0v1l1,0v-1l1,0v1.1l1-.2v-.9l1-.1v.8l1,.4v-1.1l1,.1v.9l1,.2v-.6l1-.2v.8l1,.1v-1.1l1-.4v1.2l1,.1v-1.1l1,.1v1.2l1-.5v-1l1-.1v1.1l1,.4v-1.1l1,.2v1.1l1,0v-1l1,0v.9l1-.2v-.9l1,0v1.4l1-.3v-.8l1-.1v1l1-.2v-1.1l1,.5v.8l1-.4v-.9l1-.1v.9l1,.4v-1.3l1,1.2v.8l1,.4v-1.1l1,.1v.8l1,.8v-1.5l1,.2v.9l1,.1v-.7l1-.5v1.1l1,0v-1l1-.2v1.1l1,.1v-.7l1,.1v.8l1,.8v-1.3l1-.3v1.2l1,0v-1.3l1,.1v.7l1,.5v-1.1l1-.1v1.1l1,.2v-1.4l1,.2v1.1l1,.4v-1.1l1,.3v1.2l1,.1v-1.2l1,.4v.9l1,.4v-.9l1-.4v1.4l1-.2v-.9l1-.1v.9l1-.1v-.9l1,.1v1.2l1-.2v-1l1,0v1.1l1,.3v-.9l1,.3v.9l1,.2v-.8l1,.5v.8l1-.5v-1.1l1-.1v1.1l1-.3v-.8l1-.1v1.3l1-.3v-1.2l1-.2v.9l1,.6v-.9l1,.2v1.1l1-.1v-1.1l1,.2v.8l1-.4v-.9l1,.4v.9l1-.3v-.8l1,.5v1.2l1-.5v-.7l1-.3v1.5l1-.1v-.7l1-.3v1.1l1,0v-1.1l1-.2v.7l1-.1v-.9l1,.4v1l1,.2v-1l1,.1v1.2l1-.4v-1.4l1,.7v.9l1-.1v-1.4l1,.7v.6l1,.2v-.7l1-.8v1.2l1,.1v-.9l1-.1v.8l1,.2v-.7l1-.1v.8l1,.6v-1.1l1,.3v.8l1,.2v-1.2l1,.3v.7l1,.2v-1l1,.2v.9l1-.1v-1.6l1,.8v1.2l1-.5v-.7l1-.1v1.1l1,.7v-1.5l1,.5v.6l1,.1v-.7l1-.2v1.1l1-.9v-.9l1,.3v.8l1,.1v-.9l1,.1v1.5l1-.4v-.8l1-.1v1l1,.7v-1.1l1,0v.8l1,.3v-1.1l1,.6v.8l1-.1v-.6l1-.1v.7l1-.2v-1.2l1,.2v.9l1,.3v-1.4l1,.2v.9l1,.4v-.9l1,.1v.9l1,.3v-1.2l1,0v1.1l1-.4v-1l1,.2v.7l1,.8v-1l1-.2v.9l1-.2v-1.1l1-.1v1l1,.4v-1.1l1,0v1.3l1-.1v-.8l1-.1v.7l1,0v-.9l1-.1v2.3l1-.9v-.8l1,.5v1.2l1-.2v-1l1-.1v1.1l1,0v-1.2l1,.6v.8l1,0v-1.4l1,.2v1l1,.2v-1.4l1,0v1l1,.1v-.7l1,.1v1.2l1,.4v-1.5l1-.1v1.1l1-.6v-.8l1,.3v.7l1,0v-.7l1-.1v.9l1,.4v-1.3l1-.1v.9l1,.2v-1.2l1,.6v1.1l1-.1v-.6l1,0v.9l1-.3v-.8l1,.2v.7l1,.3v-1l1,.2v.6l1,.1v-1.1l1,.4v.9l1-.2v-1l1,.3v.7l1,.7v-1.6l1,.5v.8l1,0v-.6l1-.4v1.3l1,.1v-1l1,.2v.8l1,.2v-1.7l1,.7v.7l1,.1v-1.1l1,.1v.8l1-.2v-.8l1-.1v1.3l1,.1v-1l1,.5v.7l1-.1v-.7l1,0v.8l1,.3v-.7l1-.3v.9l1-.3v-1l1,.3v.9l1-.2v-.8l1-.4v1.2l1,0v-1.4l1,.4v.8l1,.1v-1l1,.5v.9l1,.3v-1l1-.3v1l1-.2v-1.3l1,.3v.8l1,1.1v-1.7l1-.1v.9l1,.3v-1.1l1,0v.9l1,.3v-.8l1-.4v1.6l1,0v-1.2l1,.1v1.9l1-1.1v-.9l1-.2v1.2l1,.1v-.8l1,.2v.9l1,.7v-1.3l1,.2v1l1,0v-1l1-.1v1l1,.4v-1.6l1,0v1.1l1-.3v-.7l1,.3v1.1l1,.1v-1l1,.6v.7l1,.1v-.7l1,.1v.9l1-.7v-.7l1-.4v.9l1-.4v-.9l1-.1v1.4l1,0v-1l1,.5v1.2l1,0v-1.1l1-.1v1.5l1-.2v-.8l1,.1v1l1,.5v-1.1l1,.4v.9l1-.4v-.9l1,.2v.6l1,0v-1.3l1,.9v.8l1-.2v-1.2l1,1v1.2l1-.3v-.9l1-.1v.9l1-.9v-.9l1,.2v1.4l1-.3v-1l1,.3v1.3l1-.2v-.6l1,.1v1l1,0v-.7l1,.1v.7l1,0v-.9l1,.2v1l1-.1v-.6l1-.4v1l1-.5v-.8l1,0v1.2l1,0v-.7l1,.1v1.4l1-.2v-.8l1-.1v1.1l1-.4v-.7l1,.1v.8l1,.2v-1l1,.4v1.2l1,.1v-.8l1-.2v1.5l1-.2v-1.3l1,.1v1.1l1,0v-.9l1,.4v1.1l1,.2v-1.2l1,0v.7l1-.3v-1.3l1,.7v.9l1,0v-.8l1,.3v1l1,.2v-1.1l1-.1v.9l1-.2v-.9l1-.4v.8l1-.1v-.8l1-.1v1l1-.5v-.7l1,.2v1.2l1-.2v-1.1l1,0v1.1l1-.2v-1l1,.2v1.3l1,0v-.6l1-.1v1.1l1,0v-1.1l1-.3v1.1l1-.3v-.9l1,.1v1.3l1,0v-.9l1,0v1.3l1,.4v-.9l1-.3v.9l1-.2v-.9l1,.7v.8l1,.2v-.7l1,.2v.9l1-.2v-.8l1,.1v.9l1,0v-.9l1,.2v.9l1-.1v-.8l1,.2v1l1-.5v-.6l1,.1v.9l1-.1v-.7l1-.4v1l1,0v-.8l1-.1v.9l1,0v-.8l1-.1v1l1,.1v-1.1l1,0v1l1,.7v-1.4l1-.1v.9l1,0v-1.2l1,.3v.8l1,.4v-1.1l1,.3v.9l1,.7v-.9l1-.1v1.2l1,.3v-1.2l1,0v1.4l1,.4v-1.1l1,.4v.8l1,.1v-.7l1,0v1l1,.1v-.8l1-.5v.9l1,0v-.7l1-.1v.9l1,.2v-.6l1-.1v1l1-.5v-1.2l1,.4v.9l1,.1v-1.1l1,.4v1.3l1-.6v-1.2l1,.4v1l1,.6v-1.1l1-.1v.7l1,.4v-1.3l1,.5v1l1,.6v-.7l1-.2v.8l1,.1v-.9l1-.2v1.2l1,7.4v-1.7l1,.4v1.6l1,.4v-2.4l1,.9v1.6l1,.9v-2.2l1-.6v1.8l1-.5v-2.3l1,3.5v1.4l1,1.6v-2.5l1-.7v2.1l1-1.8v-2.1l1,1.9v1.6l1-.3v-2.4l1,1v2.4l1,6.1v-6.5l1,.5v2.9l1-2.1v-1.5l1,1.4v1.5l1,.6v-1.7l1,.2v2l1-.6v-2.2l1,.7v1.7l1,1.3v-2l1,1.7v2l1,0v-1.8l1-.7v2.6l1-.3v-2.2l1-1.2v3.7l1,.3v-2.5l1,2.7v1.5l1,.9v-2.4l1-.9v1.8l1-.4v-2.1l1,.8v1.6l1,.7v-2.9l1-1v1.8l1,2.9v-2.5l1,1.6v1.4l1,.9v-1.5l1-.5v2.2l1,.1v-1.8l1-.3v2.9l1-.1v-2.4l1,1v2.2l1-.3v-1.3l1,.7v3.1l1,4.5v-7.6l1,.1v2.3l1,.1v-2.3l1,.3v2.6l1,3.4v-5.5l1,0v3.1l1-.1v-1.8l1,.6v1.7l1,.2v-2.7l1,.7v1.8l1,.2v-1.6l1-.3v3.3l1,3.1v-6l1,.3v2.8l1,0v-1.9l1,0v2.1l1,.2v-2.3l1,1.4v2.9l1-1.7v-2l1,.3v2.3l1-.4v-1.9l1,1.1v2.3l1,.4v-2.4l1,1.1v2.5l1-.2v-2.3l1-.9v2.8l1-.3v-1.6l1,1.2v2.2l1,.3v-1.5l1,.8v2l1,.5v-1.4l1-.6v3l1,0v-2.4l1,.9v1.3l1,.5v-3.6l1,.7v2.3l1,.5v-2l1-1v1.7l1,1v-1.9l1,.2v2.4l1,5.1v-5.5l1,.4v2.4l1,1.5v-3.4l1,1.3v1.4l1-.3v-1.8l1-.9v2.4l1,1.2v-1.5l1,.8v1.6l1-.3v-1.5l1-.5v1.7l1,3.1v-3.3l1,.5v2.3l1-.4v-2.3l1,.9v2.4l1,5.8v-7.5l1-1.3v3.1l1-1.1v-1.8l1,1.1v1.6l1,1.4v-2.3l1,.5v7l1-2.4v-3.2l1,1.6v3.3l1,3.2v-5.8l1-1.1v2.8l1,1.5v-2.8l1,0v2.7l1-1.5v-2.7l1,.6v2.3l1,.9v-2.3l1,.6v2.1l1,0v-1.6l1-.8v3.1l1-.2v-2.2l1,2.9v1.4l1,.8v-2.7l1-1.8v6.2l1-3.2v-2.5l1,1.8v1.6l1,2v-2.1l1,.7v2l1-.6v-1.3l1,.1v2l1,.7v-2.7l1,.8v1.4l1,0v-2.6l1-.9v2.3l1,0v-1.9l1-.4v1.6l1,.3v-1.6l1,.4v1.7l1-.2v-2l1-.6v1.7l1-2.3v-2.5l1-.4v1.8l1,1.6v-2l1-1v1.7l1-1.2v-1.3l1-.9v2l1-.2v-2.5l1,.7v1.4l1,.3v-2.4l1,.9v1.7l1,1.6v-1.8l1-1.1v2.4l1,2.1v-2.3l1,.7v1.8l1-.2v-2.6l1,1.2v1.6l1-.1v-1.9l1,.6v2.2l1,1.4v-2.4l1,.7v1.8l1,1.4v-1.8l1,1.4v2.5l1,4.3v-5.5l1,1.4v2.7l1-.5v-2.1l1,.3v1.8l1,.8v-1.7l1,.2v1.7l1,1v-2.2l1,.2v2l1,.1v-2.6l1-1.3v1.8l1-1.1v-2.5l1,0v2.4l1-.2v-1.5l1,.5v2.1l1-.9v-2l1-.5v1.8l1-.4v-1.6l1-1.4v3l1,0v-1.9l1-1.2v2.6l1-.6v-2.3l1-1.3v3.4l1-1.1v-2.4l1-.7v1.7l1-.6v-2.2l1-.7v2.1l1-.8v-2.1l1-2v2.7l1,.9v-2.5l1,1.1v1.7l1,.2v-2.2l1,1.6v2.4l1-.7v-1.7l1-1.3v2.3l1,1.7v-2.3l1,.3v1.8l1-.4v-2.7l1,2.3v2.3l1,1.1v-2.4l1-.6v2.7l1-2.2v-1.4l1,.3v1.8l1,1.6v-3.1l1,1v2.4l1-1.3v-1.7l1-1.7v2.5l1,.5v-2.2l1,.9v3.1l1,3.1v-5.4l1-1.9v2.8l1,.9v-2.2l1,1.2v2l1,0v-1.4l1-.8v1.2l1,1.7v-2.7l1,1.4v1.7l1,.8v-2.3l1-1v2.3l1,0v-2.1l1,.2v1.6l1-.6v-2l1-.1v1.6l1-.5v-2.4l1,.1v2.4l1,.8v-3l1-.3v2.1l1-1.4v-2.2l1-1.5v4.9l1,2v-4.7l1,.7v3.1l1,2.3v-5.1l1,.8v2.6l1,2.1v-4l1-.5v3.5l1-1.3v-1.7l1,.4v1.7l1,.9v-3l1-.1v3.2l1,3.5v-5.7l1-2.7v2.7l1-1.7v-1.7l1,1.4v3.1l1,3.6v-6.1l1-.2v3.1l1-1.4v-2.8l1,.3v3l1-1.1v-1.4l1-.2v1.7l1-.2v-2.3l1,.7v2.1l1-.4v-1.9l1-.6v2.8l1,1v-1.9l1,.5v1.6l1-.4v-1.7l1-.1v2.2l1,.8v-2.1l1-.8v2.9l1,.5v-2.3l1-.2v6.4l1-3v-4l1,3.2v3.3l1-1v-1.4l1-1.7v3.1l1-.1v-1.9l1-.9v2.7l1-1.6v-1.5l1-.6v1.8l1,.8v-2l1,.2v2.7l1,0v-2.5l1,.7v2.3l1,.4v-1.5l1,.7v1.4l1-.5v-1.9l1-1.3v2.8l1-.1v-2.8l1,1.7v2.2l1,.8v-2.7l1,.6v2.6l1,.1v-2l1,1.2v3l1,4.3v-6.9l1,.8v2.8l1-1.5v-2.7l1-.2v1.8l1,1.4v-3l1,2.5v6.6l1-4.8v-3.2l1-.2v1.9l1,.9v-2.2l1,.5v1.8l1,1.4v-2.1l1,.4v1.8l1-.2v-2.6l1-1.1v2.6l1,1v-1.7l1,.7v2.8l1-2.4v-2.8l1,.7v3.2l1,0v-2.8l1-1.5v2.1l1-2v-2.8l1,.5v1.5l1,1.6v-3.5l1-.1v2.3l1,1.2v-2.7l1,0v1.9l1,.6v-2.8l1-.3v8.2l1-6.5v-2.6l1,.5v2.1l1-.2v-2l1-.4v1.9l1,.8v-2.1l1-.5v1.9l1-1.4v-1.8l1-1.8v2.2l1-.8v-2.3l1,2.4v1.9l1-.7v-1.7l1,0v1.4l1,.1v-2.2l1-.1v2.2l1,.2v-1.7l1-.5v2.3l1-.4v-2.6l1,.9v2.5l1,.6v-2.6l1-.6v2.3l1-.6v-2.3l1-1.5v2.4l1-.7v-1.9l1,2v1.4l1-.7v-2.4l1,.6v1.6l1,.7v-1.6l1-1.6v2.3l1,1.7v-2.9l1,.8v2.3l1-.3v-2.5l1-1.2v2.3l1,.4v-2.4l1,1.6v1.8l1,.9v-1.6l1-1.9v2l1,.1v-2.5l1,.7v2.4l1-.1v-1.8l1,.2v2.4l1,1.5v-2.7l1,1v1.5l1,1.4v-1.8l1-.1v2.4l1-.4v-1.2l1-.1v1.5l1-.3v-2l1,.2v2.5l1,1.5v-2.4l1-.9v3.3l1-2v-1.6l1-.7v2.1l1,2v-5.1l1-1.6v2.7l1,2.8v-5.3l1,0v2.6l1-2v-1.6l1-1.2v2.6l1-.1v-2.5l1-1.2v2.7l1,1.2v-1.7l1,1.4v2.2l1-.5v-2.5l1-1.1v1.8l1-1.1v-2.4l1,.7v2.6l1-1.7v-1.5l1-.1v2l1,2.5v-2.1l1,1.1v1.7" stroke="#c09058" stroke-width="1.5"/><path d="M440.5,786v.8l1-1v-.7l1-1.1v.7l1-1.1v-.7l1-1.5v.6l1-1.3v-.8l1-2.1v.9l1-1.8v-.5l1-2.1v1.2l1-1.7v-.6l1-2.1v1.4l1-2.2v-.7l1-2v.8l1-1.2v-.9l1-1.4v.8l1-1.5v-.6l1-1.5v.6l1-1.4v-.8l1-1.4v.7l1-1v-1l1-1.6v.7l1-1.3v-.8l1-1.6v1.1l1-1.6v-1l1-1v.7l1-1.2v-.6l1-1.4v.6l1-1.1v-.7l1-1.5v.8l1-1.1v-.6l1-1.5v.8l1-.6v-.9l1-1.2v.8l1-1.2v-.7l1-1.3v.8l1-1.2v-.9l1-.9v.5l1-1.1v-.7l1-.4v.6l1-.8v-1.2l1-.6v.6l1-1v-.5l1-.7v.9l1-.3v-.8l1-.4v.7l1-.4v-1l1-.8v1.1l1-.4v-.8l1-.4v.8l1-.6v-.7l1-.2v.8l1,.3v-1.3l1-.4v.9l1-.3v-.8l1-.5v.8l1-.4v-.8l1-.1v.6l1,.5v-.9l1-.6v1.2l1-.7v-.6l1-.4v.9l1,.3v-1l1,0v.6l1-.1v-.9l1-.2v.7l1-.1v-.9l1-.1v.9l1-.8v-.8l1-.1v.6l1-.3v-.9l1,0v.8l1-.5v-.7l1-.1v.8l1,.1v-.9l1,.2v.8l1-.5v-.8l1-.3v.9l1-.1v-1l1-.3v.7l1,0v-.7l1-.3v.7l1-.1v-1.1l1,.1v.7l1-.2v-.9l1-.2v.8l1-.4v-.8l1-.3v.7l1-.2v-.9l1,.1v.7l1,.2v-.8l1,.2v.6l1-.3v-.6l1-.6v1l1-.1v-.9l1,0v.8l1-.1v-.8l1-.1v.8l1-.3v-.7l1-.1v.5l1,0v-.7l1,.4v.9l1-.3v-.7l1,.2v.8l1-.1v-.7l1,0v1.1l1-.3v-.7l1-.2v1.4l1-.4v-.9l1,.1v.7l1-.1v-.9l1-.1v.8l1,.1v-.6l1,.1v.8l1,.1v-1l1,.2v.6l1,.3v-.7l1-.2v.7l1-.1v-.8l1-.3v.6l1-.3v-.7l1-.1v1l1,0v-.8l1,.2v.8l1-.2v-.8l1,.4v.6l1,0v-.7l1,0v1l1,.1v-1.1l1,.2v.6l1,.4v-.7l1-.1v.6l1,.3v-.9l1,.2v1.1l1,.3v-.7l1-.1v1l1,.2v-.8l1,.2v.7l1,.2v-.7l1-.1v.9l1,.1v-.9l1-.1v1.2l1,.2v-.7l1,.4v.8l1,0v-.9l1,.5v1l1,.3v-.9l1,.9v.8l1-.2v-.7l1,0v.7l1,.1v-.6l1,.2v.7l1,.6v-1.1l1,.1v.5l1,.6v-1.1l1,.2v1.1l1,.2v-.9l1-.3v.8l1,.2v-.8l1,.3v.9l1,0v-.9l1,.3v.7l1,.5v-.9l1-.2v1.1l1,.3v-.9l1-.1v1.2l1,0v-.8l1,.3v.6l1,0v-1l1,.4v.8l1-.4v-.6l1,.1v1.2l1-.3v-.5l1-.1v.7l1-.3v-.7l1,.4v.8l1-.2v-.9l1,0v.8l1-.3v-1l1,.2v.9l1,.2v-1l1-.2v1.1l1,.1v-.9l1,.2v.6l1,.4v-.8l1,.1v.6l1-.2v-.7l1-.1v.9l1-.3v-1l1-.1v1.1l1,.2v-.9l1-.3v1l1-.2v-.8l1-.4v1.1l1-.2v-.9l1,0v1l1-.4v-1.1l1,.3v.8l1-.1v-.8l1-.1v.7l1-.1v-.7l1,.7v.6l1,.1v-.6l1,.2v.6l1-.1v-.6l1-.1v.6l1,.3v-.9l1-.2v.7l1,.1v-.9l1,.1v.6l1,.5v-1.3l1-.1v.9l1-.2v-.7l1-.3v.7l1-.1v-.7l1-.1v.6l1-.1v-1l1,0v.9l1-.4v-.7l1-.1v.8l1,.3v-.9l1,.4v.6l1,.3v-.7l1-.1v.7l1-.2v-.6l1-.3v.6l1,0v-.9l1,.1v1l1-.3v-.5l1-.2v1l1-.1v-.6l1-.4v.8l1,0v-.8l1,0v.9l1-.2v-.5l1,0v.5l1-.2v-.6l1-.1v1l1-.3v-.9l1-.1v1.1l1-.6v-.7l1,.4v.8l1-.1v-.7l1,.1v.7l1,.1v-.9l1,.2v.7l1-.3v-.5l1-.5v.9l1,0v-.9l1,.5v.7l1-.3v-.7l1-.1v.9l1-.2v-.8l1,.1v1l1,.1v-.8l1-.2v.6l1,.1v-1l1-.4v1.1l1,.4v-.8l1-.1v.6l1,0v-.8l1-.2v.9l1,.2v-.7l1-.1v.8l1,.1v-.7l1,.1v.7l1-.2v-.8l1-.2v1l1-.3v-.5l1,.3v.6l1-.5v-.6l1,.1v.8l1-.2v-.8l1,.2v.8l1-.3v-.8l1,0v.7l1-.4v-.7l1-.1v1l1-.5v-.8l1,.2v1l1,.4v-1l1,.2v.6l1,.1v-.9l1-.1v.7l1,0v-.7l1-.1v.9l1,.1v-.7l1-.1v.7l1,.1v-.8l1,.1v.5l1,.1v-.7l1-.4v.8l1-.1v-.8l1-.2v.6l1,.4v-.5l1-.1v.6l1,.4v-1.3l1-.2v.8l1,.1v-.7l1,.1v.8l1,.3v-.9l1,0v.7l1-.2v-.6l1-.4v1.1l1-.1v-.9l1,.3v1.1l1,.3v-1l1-.3v.8l1-.6v-.7l1,.1v.7l1,.3v-1.1l1-.1v1.1l1-.2v-.7l1-.3v.7l1,.1v-.7l1-.1v1.3l1,.3v-1l1,.3v.6l1,.3v-.7l1-.2v.7l1-.1v-.6l1-.2v1.1l1-.1v-1.2l1-.1v1.2l1-.5v-.9l1,0v.9l1-.2v-.8l1,.2v.9l1,.4v-1l1-.1v1.2l1,0v-1l1-.2v1.1l1,0v-.6l1-.1v.9l1,.2v-.9l1,0v1l1-.2v-.6l1,.3v.6l1,.2v-.6l1-.3v.8l1-.3v-1l1,0v.7l1,.1v-.8l1,.1v.6l1,.3v-.8l1,.2v.6l1,0v-1l1,.3v.7l1,.5v-.9l1,.4v.8l1-.3v-.7l1,0v.7l1,.2v-1l1,.3v1l1,.2v-.6l1-.3v.7l1,0v-.6l1-.2v.8l1-.1v-.9l1-.1v.7l1,.1v-.7l1,.1v.8l1,.1v-.6l1-.6v1.2l1,.5v-1l1-.1v.8l1,.2v-.8l1-.1v.6l1,.2v-.6l1,.1v.8l1,.5v-.9l1,.3v1l1-.3v-.6l1,.3v.8l1,.1v-.9l1,.1v1l1-.3v-.8l1-.2v1.3l1-.4v-.8l1,.2v.6l1,.4v-1.3l1,.3v.6l1,.5v-.8l1-.4v1l1,.2v-1.1l1,.3v1.5l1-.7v-.6l1-.5v1.4l1-.7v-.8l1,.1v.8l1,1v-1.7l1-.2v1l1,.2v-.8l1-.1v.8l1,0v-1l1,.2v.9l1,.2v-.9l1,0v.6l1,.6v-1l1-.2v1l1-.2v-.8l1,0v.8l1,.1v-.7l1,.1v.8l1,.2v-1l1,.4v.7l1,0v-.7l1-.1v.9l1,0v-.9l1,.2v.8l1,.1v-.7l1,.1v.8l1-.4v-.8l1,.2v.7l1,.2v-.7l1,0v1l1-.7v-.7l1,.2v.6l1,.7v-1l1-.1v.7l1,0v-1l1,.3v.9l1,0v-.7l1-.1v.7l1-.3v-.7l1-.2v.7l1-.2v-.5l1-.4v1.2l1,.2v-1l1,.1v1.1l1-.4v-.8l1-.1v.7l1,.2v-.8l1-.1v1l1,.1v-.9l1,.3v1.2l1-.2v-.7l1,.4v.8l1,.1v-.8l1,0v.7l1-.4v-.8l1,.1v.7l1,0v-.8l1,.2v1.1l1-.4v-.8l1,0v.9l1,0v-.7l1-.1v.9l1-.2v-1l1-.5v.8l1,.1v-.7l1,0v.7l1-.1v-1l1,.4v.6l1,0v-.6l1,.2v1l1,.4v-1.7l1,.5v.8l1-.2v-.9l1-.1v1l1,.2v-.9l1,0v1l1-.1v-.9l1-.1v.8l1,.4v-.8l1,0v.9l1-.2v-1.2l1,.2v.6l1,.1v-.8l1-.2v1l1,.2v-1l1,.8v.7l1,.1v-.9l1,.2v.8l1-.3v-.9l1,.1v.8l1,0v-.7l1,.2v.7l1-.2v-.8l1,0v.8l1,.2v-1.3l1,.5v1.2l1-.4v-.8l1,.4v.7l1,0v-1l1,.1v.6l1,0v-.8l1,.2v.6l1,0v-.6l1-.2v1.4l1-.7v-1l1-.1v.7l1,.5v-1l1,.3v.6l1,.6v-.8l1,0v.8l1-.2v-.6l1-.5v.8l1,.1v-.9l1-.2v.6l1,0v-.7l1,.3v1l1,.3v-.8l1-.1v.8l1-.1v-.5l1,.1v.6l1-.1v-.8l1-.2v1.2l1-.1v-.6l1,.1v1l1-.4v-.9l1,.2v1l1-.1v-.9l1,.1v.6l1,0v-.7l1-.1v1l1,0v-.5l1-.4v1.3l1,.2v-.8l1,.5v.7l1,.1v-1l1,.1v.8l1-.3v-.8l1,0v.7l1,.3v-1.1l1,.2v1l1,.1v-1l1,.6v.9l1,.5v-.8l1,.2v1l1-.4v-.8l1,.2v.6l1-.2v-.7l1-.2v.8l1,.1v-.7l1,.4v.8l1,.4v-.9l1-.1v.8l1,.1v-.9l1,.3v.6l1,0v-1l1,.2v1l1-.2v-.6l1-.1v1l1,.2v-.8l1-.3v.9l1-.2v-.6l1,0v.9l1,0v-.7l1,.1v.8l1-.3v-.8l1,.3v.7l1,.3v-.8l1,.1v.8l1,0v-.8l1-.2v1l1-.3v-.6l1-.1v.9l1,.5v-.9l1,.1v.8l1,0v-.8l1-.8v1.2l1,0v-.8l1,0v1.3l1,.3v-.9l1,.1v.9l1,0v-1l1,.3v.6l1,.1v-.7l1-.1v1.1l1,.4v-1l1,.1v.7l1,.4v-.9l1-.3v.9l1,.1v-1l1,.4v.8l1,.1v-.7l1-.2v.9l1,0v-.8l1,.2v.7l1,.3v-1l1-.1v.9l1,.1v-.9l1,.4v1l1,.1v-.5l1-.2v1l1,.1v-.9l1,.2v.7l1,0v-.9l1,.6v1l1-.5v-.6l1,.3v1.1l1-.2v-1.1l1,.4v.7l1,0v-.7l1-.3v.8l1,.1v-.6l1,0v.9l1-.2v-.7l1,.1v.9l1-.2v-.7l1,.2v.7l1,.1v-.8l1,.2v.8l1-.3v-.7l1,.4v.7l1-.1v-.6l1,.3v1l1-.6v-.8l1,.3v.7l1-.3v-.6l1,.2v.8l1,.2v-1.2l1,0v.7l1,0v-.7l1,0v1.5l1,0v-1.2l1,.2v.8l1-.2v-.6l1,0v.8l1,.1v-.8l1,.1v.7l1,.1v-.7l1,.2v.9l1,0v-.7l1,0v.7l1,0v-.8l1,0v.9l1-.5v-.9l1-.1v.8l1,0v-1l1,.4v.6l1-.1v-.8l1-.2v.8l1,.1v-.7l1-.1v.7l1-.2v-.7l1,.1v.9l1,.3v-.9l1,0v1.1l1-.3v-.9l1-.2v1.1l1,0v-.6l1-.3v.8l1,.3v-.9l1,.1v.9l1-.1v-.8l1,.1v.7l1,.1v-1.1l1,.1v1.3l1,0v-1l1,.3v.9l1-.4v-.6l1-.4v1l1,.2v-.9l1,.2v.9l1,.4v-.9l1-.1v.9l1,.1v-.9l1,.1v.8l1,.6v-1.1l1,.4v.6l1,.1v-.7l1-.3v1l1-.1v-1l1-.2v1l1-.1v-.8l1,.1v.8l1-.1v-.9l1,.3v.6l1,.2v-.7l1-.1v.7l1,.2v-.9l1,.4v.7l1,.1v-.5l1-.3v.9l1-.1v-.7l1,.5v1l1-.3v-.5l1,.1v.7l1,.1v-1l1,0v.9l1-.1v-.8l1-.3v.9l1-.2v-.7l1,.1v1.1l1,.2v-.9l1,.2v.9l1,.2v-.6l1-.2v.8l1-.1v-.8l1-.3v.8l1,.1v-.6l1,.1v.8l1,.5v-.8l1-.2v.7l1,0v-.8l1-.2v.9l1,.4v-.6l1-.4v1.1l1,0v-.6l1,.2v1l1,.1v-.7l1-.3v.9l1-.1v-.9l1-.2v.7l1,.4v-.7l1-.1v.7l1,.1v-.5l1-.2v.6l1,.6v-.9l1,.2v.7l1,0v-.6l1-.4v1.1l1-.1v-1.1l1,.3v.7l1,.4v-1l1,.4v.7l1,.1v-.8l1,.1v.6l1,.2v-1l1-.4v1.1l1-.4v-.8l1-.2v.7l1,.3v-.8l1-.2v1l1,.1v-.6l1-.2v.9l1-.1v-.7l1,.1v.9l1,.2v-.8l1-.5v.8l1,.2v-1l1,.3v1l1-.1v-.6l1,.2v1l1-.5v-.8l1,.3v.7l1-.1v-.9l1,.9v.7l1,.1v-.8l1,.1v.6l1,0v-.6l1-.4v.8l1-.3v-.7l1,0v.7l1,.6v-1.5l1,.1v1l1-.6v-.6l1,.1v.7l1,.4v-1l1,.7v.7l1,.2v-.6l1,.1v.7l1-.3v-.8l1-.1v.7l1-.1v-.7l1,.4v.6l1,.5v-.8l1-.2v.7l1,.2v-.8l1,.1v.9l1,.1v-.9l1,0v1l1-.2v-.8l1-.4v1l1,0v-.9l1,.1v.5l1,.2v-.6l1,.1v.5l1,.8v-1l1,.3v.7l1,.3v-.8l1,0v.8l1-.2v-.7l1-.1v.8l1-.2v-.8l1,.1v1.1l1,.1v-.9l1,.3v.9l1,.3v-.8l1-.4v.9l1,.1v-.8l1,.2v.7l1,.4v-.8l1-.1v.8l1-.1v-1l1,0v.7l1,.5v-1l1,.3v.7l1,.5v-1l1-.1v.9l1-.2v-.9l1-.2v.8l1,.1v-.6l1,.2v.6l1,.2v-1l1-.2v1.1l1-.2v-.8l1-.6v.9l1,.2v-1l1,.5v1l1-.1v-.7l1-.1v1l1-.1v-1l1-.2v.7l1,.1v-1l1,0v1l1,.2v-.7l1-.4v1.2l1-.1v-.5l1-.2v.9l1,.5v-.9l1,0v.9l1,.1v-.8l1,.1v.7l1,0v-.8l1-.4v.8l1,.2v-.7l1-.4v1l1,.1v-.7l1,.1v.7l1,.2v-.8l1-.3v.8l1-.1v-.7l1,.3v.6l1,.3v-.9l1-.3v.9l1-.3v-1l1-.2v1l1,.2v-.6l1,.2v.7l1,.2v-.8l1-.2v1.1l1,.3v-.9l1-.2v1l1,0v-.6l1,0v1l1-.2v-.6l1-.4v.8l1,.3v-.7l1-.1v.8l1,.5v-.9l1,0v.8l1,.1v-.7l1,0v.6l1-.1v-.8l1,.2v.7l1,.6v-.8l1,.5v1.2l1-.3v-.8l1,.2v.6l1-.1v-.7l1,.3v.7l1,.2v-.8l1,.3v.9l1-.3v-.8l1,0v.9l1,0v-1l1,.3v.8l1,.1v-.6l1-.4v1.2l1-.2v-.9l1,.3v.8l1-.2v-.6l1,.5v.7l1,.1v-.7l1-.3v1.2l1-.6v-1.2l1,.5v.6l1,.2v-.7l1,.3v.6l1,.3v-.6l1,.1v.5l1,.2v-.7l1-.1v.9l1,.3v-.8l1,0v.7l1,.1v-.6l1-.2v.6l1-.2v-.6l1-.1v.9l1,.2v-.8l1,.5v.6l1,0v-.7l1-.3v.6l1,.4v-.6l1,0v.6l1,.5v-.7l1-.2v1l1-.1v-.7l1-.3v1l1,.1v-.7l1,.1v.8l1,.3v-.7l1-.2v.7l1-.2v-.6l1-.1v.8l1,.5v-.9l1,.3v.8l1,.1v-.8l1,.1v.8l1,.2v-.9l1-.3v1.1l1,.1v-1.1l1-.3v.6l1,.1v-.8l1,.3v.7l1,.4v-.7l1,0v.9l1,.1v-1.2l1,.2v.9l1,.2v-.9l1,.3v1l1-.2v-.8l1,0v.9l1,0v-1l1,.5v.6l1,.1v-.8l1,.4v.6l1-.2v-.8l1,0v.7l1-.1v-.7l1,.3v.9l1,.2v-1.2l1,.2v.8l1-.2v-.6l1-.3v.8l1-.3v-.8l1,.2v.7l1,.4v-.8l1,.2v.8l1,0v-.7l1,0v.6l1,0v-.7l1-.1v.7l1,1v-1.4l1-.1v1.1l1,.4v-.9l1,.4v.9l1-.4v-.6l1-.2v1l1-.1v-1.3l1,.3v.8l1,.1v-.8l1,.5v.7l1-.1v-.7l1-.3v.9l1-.2v-.8l1,.1v.6l1,.3v-.8l1-.2v.6l1,.1v-.8l1,.2v.7l1,.2v-.8l1,.2v1l1-.3v-.8l1,.2v.7l1,0v-.8l1,.3v.8l1,.5v-1.1l1,.6v.6l1,.2v-.7l1,.3v.7l1,.1v-.7l1,.6v.7l1-.2v-.8l1-.1v.9l1-.2v-.6l1,.6v.6l1,.5v-.8l1,.1v.6l1,.1v-.8l1,.1v.6l1-.3v-.6l1,.1v.7l1,.8v-1.4l1,.6v.8l1,.8v-1.7l1,.4v.6l1,.1v-.5l1,.1v.7l1,.5v-.8l1-.1v1l1,.1v-.8l1-.1v1l1,11.4v-2.9l1,.6v2.8l1-.4v-2.2l1,.7v2.8l1-.4v-2l1-.8v1.5l1-.6v-1.7l1,1v1.5l1,.4v-2.1l1,2v2.1l1,.2v-1.5l1,1.6v1.7l1,.9v-2.5l1-1.3v2.6l1-2.4v-2.2l1,1v2.6l1,0v-2.1l1,.6v1.7l1,1.4v-2.1l1,2.2v1.6l1,.7v-2.8l1-.3v2.2l1-.6v-1.5l1,1.3v1.8l1,.3v-2.3l1-1.2v2.5l1-.6v-1.4l1,1.5v1.7l1,2.6v-2.1l1-1.6v2l1-.2v-3.3l1,2.8v1.7l1,.3v-1.7l1,.1v2.6l1,.8v-2l1,.7v1.4l1,.1v-2.5l1,.1v2.1l1,1v-2.1l1,2.3v1.3l1-.5v-1.6l1-.4v2.1l1,.7v-2.2l1-.8v2.2l1,.3v-2.9l1,.6v5.4l1-1.9v-2.4l1,.8v2.6l1,.9v-2.6l1,0v4.8l1-3.1v-3.2l1,2.4v1.7l1,.8v-2.1l1-.6v2.6l1-1.2v-2.4l1,.1v1.8l1,0v-1.8l1,.9v2.2l1,1.2v-1.9l1-.6v1.8l1,.7v-2.5l1,.9v2.7l1,1v-2.2l1,1v1.6l1,1.2v-2l1,1.1v2l1,2.5v-3.6l1-.7v3.1l1-.2v-1.9l1,1.4v1.4l1-.8v-2.3l1,.2v1.9l1,1.8v-2.6l1,.8v1.5l1,1.7v-2.7l1,.8v1.5l1,1.2v-3l1-1.7v2.2l1,1.2v-2.5l1,1.2v1.9l1,1.6v-2.9l1-1.2v2.7l1,1v-3.1l1,.5v1.6l1-1.1v-2.6l1,2.5v2.1l1,1.9v-2.3l1-.3v4.3l1-.9v-3.5l1,2.4v1.6l1,.9v-2.5l1,.1v2.5l1-.7v-2.2l1,.7v2l1-.1v-2.5l1,.5v3.1l1,.1v-1.9l1-1v3.5l1,.7v-1.5l1,1v2l1-.9v-1.9l1-.1v1.9l1,1.8v-2.1l1,.9v1.7l1,.3v-1.4l1,.3v1.6l1-.9v-1.8l1,1.9v1.7l1,1.3v-2.2l1-.8v1.7l1,2.1v-2l1,.1v2.6l1-1.2v-2.7l1,.7v2.4l1,.4v-1.7l1,1.9v2.2l1,.4v-2l1-.3v2.6l1,0v-2.6l1,.9v2.1l1,2v-1.9l1-.1v2.8l1-2.5v-1.4l1-.8v3.9l1-.6v-2.1l1,.1v2.7l1,.8v-2.3l1-.6v4.4l1-1.8v-1.9l1,.1v2.2l1-.8v-2.3l1-.3v1.7l1,2.1v-1.6l1-.8v1.8l1-.1v-3l1,.9v2.1l1-1.2v-1.4l1-2.5v2l1-.7v-1.7l1-1.5v2.4l1-.9v-2.2l1-.3v2.9l1-.5v-2l1-.1v1.9l1-.4v-2.3l1,1.5v1.8l1-1.5v-2l1,.2v2l1,0v-2.4l1,.2v1.5l1,.3v-2.2l1,1.4v1.7l1,2.3v-1.8l1,0v1.5l1,1.9v-1.7l1,.7v2.3l1-.1v-4l1,1.9v1.8l1,1.8v-1.7l1-.2v2.1l1,.8v-1.5l1,.8v2.1l1,1.3v-2.3l1-1v2.4l1-.3v-1.8l1,.5v1.6l1,2.3v-2l1,1.2v1.9l1,.1v-3l1,.4v3.3l1-1.7v-2.3l1-1v2.5l1-1.5v-1.5l1-.7v3.7l1-1.4v-1.4l1-1.5v1.7l1,1v-2.5l1,.4v4.4l1-2.8v-3.2l1,0v2.7l1-.3v-1.4l1-2.2v3.2l1-.7v-1.9l1-1.1v1.4l1-.8v-2.3l1,.1v3l1,.2v-3.3l1-.3v2l1,.5v-1.8l1,0v2l1-.3v-1.7l1-.8v1.4l1,2.1v-2.4l1,.6v1.9l1-.7v-2.2l1,1.9v2l1,1.8v-4.9l1,.4v2.3l1,3.2v-4.3l1-1.4v4.1l1,.6v-5.4l1,.8v2.7l1-1.4v-2l1,.6v1.8l1,.5v-2.3l1-.2v2.5l1,.5v-1.9l1,.1v2.9l1-1v-2.7l1,1.3v1.4l1,.5v-1.4l1,.1v2l1-1.3v-1.9l1-.8v2.2l1,3.1v-4.6l1,0v2.9l1-1.3v-1.7l1,.1v2.2l1-.1v-2.1l1-.1v1.6l1,.8v-2.2l1,2.4v1.7l1,.6v-2.1l1,0v2.7l1-1.4v-2l1-.2v1.6l1,.2v-1.7l1-1.6v1.9l1-1.2v-1.3l1,.9v2l1-.7v-1.9l1-.9v2.7l1,.8v-1.4l1,.9v1.4l1-.5v-2l1-1.2v1.6l1-.4v-1.9l1-.2v1.3l1,.9v-2.5l1,1v1.7l1,.6v-2.8l1,1v1.5l1,1.8v-3l1-2.4v2.9l1,.5v-1.6l1,1.5v1.5l1,.6v-2.3l1-.9v2.7l1,.4v-2.6l1-.7v2.4l1-.2v-1.8l1,.1v2.5l1-.3v-2.2l1,.4v1.9l1-.2v-2.1l1,.1v2.3l1,2.3v-2.4l1,1.5v4.1l1-2.1v-2.1l1,.9v1.9l1,1v-2.1l1-.8v1.9l1-1v-1.7l1-.6v2.3l1,.3v-1.9l1-.2v3.8l1-1.7v-1.8l1-.6v2l1-.6v-1.4l1,1.1v2l1-.3v-1.8l1-.2v1.8l1,1.7v-1.9l1,.3v2.2l1,0v-1.9l1-.1v2.3l1-.6v-2.5l1,1v2.7l1,.1v-2.5l1,.5v1.8l1,.9v-1.5l1,0v1.5l1,.2v-2.3l1,.5v1.3l1,.7v-1.8l1-.4v2.1l1,.6v-2.6l1,.4v1.9l1,2.5v-1.8l1-.6v1.8l1-.9v-2.2l1,.7v2.6l1,.2v-1.8l1-1.8v2.1l1,1.7v-2.9l1,1.4v2.2l1,1.1v-1.7l1-.5v1.9l1-.5v-2.6l1,.3v2.8l1-.9v-1.7l1-1.2v1.5l1-1.5v-2.3l1,.6v1.8l1-1.5v-1.5l1,.3v2l1,.1v-1.8l1-1.1v2.9l1,.4v-2.2l1-1.5v1.5l1,.3v-1.8l1,2.1v1.6l1-.8v-1.8l1-.7v2.8l1-.4v-2.3l1-.3v2.5l1-1.2v-2.1l1-.1v1.6l1,.1v-2.1l1-.6v2l1-.8v-1.9l1-.6v2.4l1,.7v-2.5l1,.6v2.9l1-1.9v-1.8l1-2.1v2.9l1,.2v-3.1l1,.2v1.8l1,0v-1.7l1,.5v2.6l1,2v-3.8l1,.5v2.5l1,1.1v-3.5l1-.6v2.6l1-1.9v-3.3l1-.2v2.9l1-.7v-1.5l1-.3v2.1l1,.6v-2.5l1,2.5v1.5l1,.7v-1.9l1-.5v2.9l1,0v-2.4l1-1.5v2l1,.7v-2.7l1,2.7v1.8l1-.9v-1.8l1-1.3v2.8l1,2.4v-2.7l1,.8v3.2l1-2v-1.9l1,1.4v2.5l1-.8v-1.9l1-1v2.5l1-.2v-1.6l1,.1v2.1l1-.2v-2.2l1,1.1v1.7l1-1.8v-2.3l1-.3v2.2l1,3v-2.5l1-.8v2.1l1-1.7v-1.8l1,.8v3.1l1-1v-1.3l1-1.4v2.5l1-1v-2l1,0v2l1-.8v-1.7l1,1.1v3l1-2.5v-1.9l1-1v1.7l1,2v-3.3l1,1v1.6l1,.9v-2.3l1-.8v3.9l1-3v-1.9l1,.6v2.1l1-.5v-2.4l1-2.3v3.6" stroke="#b8c828" stroke-width="1.5"/><path d="M440.5,785.2v1.1l1-1.2v-.8l1-.9v.7l1-1.2v-.9l1-1.7v.6l1-1.3v-1l1-1.5v.8l1-1.5v-.9l1-2v.9l1-1.6v-.8l1-1.7v.8l1-1.5v-.9l1-1.4v.7l1-1.2v-1l1-1.4v.5l1-1.4v-.8l1-1.8v.8l1-1.2v-.9l1-1.1v.6l1-1.2v-.6l1-1.2v1.1l1-1.6v-1.1l1-1.4v.6l1-1.5v-.6l1-1.2v.8l1-.8v-.8l1-.9v.7l1-1.1v-.6l1-1.6v.9l1-1.7v-.6l1-1.2v.6l1-.9v-.6l1-1.3v.9l1-1.3v-.9l1-.9v.8l1-.8v-.6l1-.8v.6l1-.9v-1l1-.5v.8l1-1v-.9l1-1v1.1l1-.6v-.8l1-.7v.8l1-.5v-.9l1,0v.6l1,0v-1.2l1-.2v.8l1,.1v-.7l1-.2v.6l1-.5v-.8l1-.3v.7l1-.3v-.7l1,0v.7l1-.3v-.7l1,0v.7l1-.4v-.6l1-.2v.6l1-.1v-.9l1-.1v.8l1-.1v-.5l1-.4v.7l1-.4v-.6l1-.6v1.1l1-.7v-.7l1-.5v.9l1-.1v-.9l1,.5v.6l1,.3v-1.1l1-.1v.6l1,0v-1.1l1-.1v.7l1,0v-.6l1-.3v.7l1-.2v-.6l1-.5v.7l1,.1v-.7l1-.3v1l1-.7v-.5l1-.7v.7l1-.2v-.8l1-.5v.8l1,0v-.6l1-.6v.8l1,.5v-1.6l1-.1v.9l1-.4v-.7l1-.2v.9l1-.3v-.8l1-.4v.9l1,1v-1.7l1,0v.6l1,.2v-1.1l1-.5v1l1,0v-.8l1-.2v1.2l1,.1v-.8l1-.3v1.2l1-.1v-.6l1-.8v.9l1,0v-.7l1-.5v.8l1-.1v-.6l1,0v.8l1,.3v-.7l1-.4v1l1,.1v-.5l1-.1v.7l1-.1v-.9l1,0v.9l1-.2v-1l1,0v.8l1,.1v-.7l1-.1v.7l1,.2v-.8l1-.3v.8l1,.1v-.9l1-.1v.7l1,0v-.7l1-.2v.5l1,0v-.9l1-.1v.8l1,.4v-.9l1,.3v.6l1,.4v-1l1,.2v.8l1-.4v-.6l1-.6v.8l1-.1v-.8l1,0v1l1,.1v-.6l1,.5v.6l1,.7v-.7l1,.5v.7l1,0v-.6l1-.2v.6l1,.1v-1.2l1,1.2v.9l1,.2v-.6l1,.2v.9l1,.3v-1.2l1,.6v.7l1,.3v-.7l1,.1v1l1,.4v-.6l1,0v.7l1,.5v-1.2l1,.5v.7l1,.1v-.8l1,.3v.7l1,.1v-.8l1,.2v.5l1,.5v-.8l1,.4v.6l1,.2v-1.1l1,.6v.6l1,.3v-1.2l1,.4v.6l1,.5v-.9l1,.3v.7l1-.1v-.8l1,0v.8l1,.3v-.9l1-.2v1.1l1,0v-1l1,.3v.7l1,.3v-.6l1,0v.8l1-.1v-.6l1,.1v.8l1-.2v-.7l1,.2v1.3l1-.4v-1l1,.1v.7l1,.2v-1.2l1,.1v.8l1,.1v-.9l1-.1v1l1,.3v-.8l1-.1v1l1,.1v-.8l1-.1v1l1-.2v-.6l1,.2v.8l1-.4v-.8l1-.5v1l1-.1v-.6l1,.2v.6l1,.1v-.9l1,.2v.7l1,0v-1l1-.1v1.3l1-.5v-.8l1-.1v.8l1-.4v-.6l1-.2v1.1l1-.3v-.8l1,0v.9l1-.1v-.6l1,0v1l1-.3v-.6l1-.4v.9l1,.2v-.7l1-.5v2.4l1-1.4v-.9l1,0v.7l1,.3v-.8l1-.1v1.2l1-.1v-1.2l1-.1v.8l1-.1v-.7l1,.3v.7l1,0v-1.1l1,0v.7l1,0v-1.1l1,.4v.6l1-.2v-.6l1-.5v1l1,.1v-1l1,0v1.2l1,0v-.7l1-.2v.7l1,.3v-.9l1-.2v.7l1,0v-.7l1-.3v1.1l1-.2v-.9l1,.2v.8l1-.2v-.7l1,0v.6l1-.2v-.9l1-.2v.6l1,.1v-.7l1-.1v.9l1,.1v-.7l1,.5v.7l1-.1v-.8l1-.7v1l1-.4v-.8l1,.5v.6l1,.5v-1l1,.3v1l1-.8v-.6l1-.3v1.3l1-.1v-1l1,.3v.8l1,.5v-1.1l1,.1v.8l1,0v-.9l1-.8v1l1,.3v-.9l1-.1v.6l1,.8v-.9l1-.5v.8l1,0v-1l1,.2v.6l1-.1v-.8l1-.2v1.1l1-.4v-.7l1,.1v.6l1-.2v-1.1l1,.1v.6l1,.3v-1l1,.2v.8l1-.4v-.9l1,.3v.6l1,.4v-1.2l1,.4v.9l1,.2v-1l1-.2v1l1-.5v-.9l1,.2v.7l1,.2v-.7l1,0v.7l1-.1v-.8l1-.1v1.1l1-.2v-.8l1-.3v.7l1-.1v-.5l1,.1v1.1l1-.2v-.9l1,.1v.9l1-.1v-.7l1-.1v.9l1,.2v-1.1l1-.3v.9l1,.1v-.9l1-.1v1.4l1-.1v-.6l1-.3v1l1,.3v-1.5l1,.2v.7l1-.2v-.7l1-.2v.5l1,0v-.7l1,.2v.9l1-.2v-.7l1-.6v1.3l1-.6v-.7l1-.3v.7l1,.3v-.9l1,.2v.7l1-.1v-.6l1-.1v.8l1-.5v-.6l1-.2v.9l1,0v-.6l1-.1v.8l1-.2v-.7l1-.1v.8l1-.1v-.7l1,.2v.7l1,.6v-1l1,.1v.7l1,.2v-.7l1-.2v1.5l1-.4v-.9l1,.1v1l1,.3v-.9l1,.4v.6l1,0v-1.1l1,.4v.7l1,0v-.9l1,0v.9l1-.2v-.6l1-.2v.8l1-.3v-.7l1-.3v1l1-.1v-.8l1,.1v1.2l1-.3v-.6l1,.3v.7l1,.1v-.8l1,.4v.7l1,.1v-.7l1-.1v.7l1,1v-1.4l1,.1v.6l1,1.5v-1.8l1-.5v1l1,0v-1l1-.3v.9l1-.2v-1.1l1,.5v.7l1,.4v-.9l1-.2v1l1,.1v-1l1,.2v.7l1,.2v-1l1,.3v.6l1,.3v-.5l1,.1v1l1,.1v-.9l1-.2v.8l1,.2v-1l1,.4v.8l1,.3v-.6l1,.4v.5l1,.2v-.7l1,0v.5l1,.4v-.8l1,.4v1.5l1-1v-.6l1,0v.9l1-.1v-1.1l1,.2v1.1l1-.1v-.8l1,.2v.8l1,0v-.8l1,.1v.7l1-.4v-.7l1,0v1.1l1-.4v-.8l1,.4v.8l1,0v-.7l1-.2v1.4l1-.5v-.5l1-.1v.8l1,.5v-1l1,.1v.8l1-.1v-.7l1,0v.7l1,0v-.7l1-.1v.8l1,.2v-.9l1,0v1l1,.1v-.9l1,.3v.9l1-.1v-.7l1-.2v.9l1,0v-.6l1-.4v.7l1,.1v-.9l1-.2v.8l1,0v-.9l1,0v.6l1,.5v-.9l1-.2v1.2l1,0v-1l1-.1v1l1-.3v-.7l1,.1v1.1l1-.3v-.9l1,.1v1.2l1-.6v-.7l1-.1v.9l1,0v-1.2l1,.4v.7l1,.2v-.9l1,.3v.8l1-.1v-.6l1-.1v.9l1,0v-.9l1,0v.9l1,.2v-1l1-.1v.7l1,.2v-.7l1-.2v.8l1,.1v-.7l1-.1v.6l1,.1v-.6l1-.1v1l1-.1v-1l1-.2v.8l1-.2v-.7l1-.1v.9l1,0v-.9l1,.2v.8l1,0v-1.1l1,.1v.9l1,.1v-.7l1,0v.6l1,.6v-1.2l1,.3v.7l1,.4v-.9l1-.1v.9l1,.1v-.6l1-.1v1l1,.4v-.9l1-.3v.8l1,.3v-.8l1-.3v.7l1-.5v-.6l1-.5v.9l1,.1v-1l1,.4v.8l1-.1v-.6l1-.1v.8l1,.2v-.8l1-.4v.8l1-.2v-.9l1,.1v.9l1,.3v-.8l1,.1v.8l1,.1v-.9l1,0v1l1,0v-.7l1-.4v1.1l1-.4v-.6l1-.3v2.1l1-.9v-.9l1,.1v.9l1,.2v-1.1l1,.3v.8l1,.3v-1l1-.1v.8l1-.3v-.8l1-.1v.8l1,.1v-1l1-.3v1l1,.3v-.7l1-.6v1.2l1-.1v-.7l1,.1v.8l1,.2v-.9l1,.1v.7l1,.1v-.7l1,.2v.7l1,.4v-.8l1,.2v.6l1,0v-.7l1,.1v.8l1-.3v-.9l1,.2v.7l1,.1v-.7l1,.5v.7l1,.4v-.9l1-.2v.7l1,.2v-.8l1,0v.9l1,.1v-1l1,.4v.8l1-.1v-.8l1,.1v1.1l1-.5v-.8l1,0v.7l1,.1v-.8l1,.4v.7l1,.2v-.8l1,0v.6l1,.4v-.9l1,.1v.9l1,.4v-.8l1-.1v.6l1,0v-.9l1-.1v.7l1,.4v-.6l1-.1v.8l1,0v-.8l1,.1v.7l1,.3v-1.1l1-.2v1.3l1-.1v-1.1l1,.4v.6l1,.7v-1.8l1,.5v.8l1-.3v-.8l1,.3v.6l1,.1v-1.2l1,.3v.7l1-.3v-.8l1,.3v.7l1,1v-1.7l1-.3v.9l1,.2v-.9l1,.3v.6l1-.1v-.7l1,0v.8l1,.4v-.8l1,.5v.5l1,.2v-.8l1,.2v.6l1,.4v-.6l1-.1v.7l1-.1v-.7l1,.1v.9l1-.1v-.6l1,.2v.8l1,.2v-1l1,.2v.7l1,.6v-1l1-.2v.8l1,.4v-1.3l1,.2v.8l1-.1v-.7l1,.2v.8l1,.2v-.8l1,0v.8l1,0v-.8l1,.2v.6l1-.5v-.7l1-.1v.6l1,.2v-.9l1,.2v.9l1-.1v-1l1,.3v.7l1,.1v-1.1l1,.5v.6l1,.4v-1l1,.5v.6l1,.3v-.7l1,.4v.9l1,.2v-.9l1,.1v1.1l1-.5v-1.2l1,.7v.5l1,.3v-.9l1,.3v.9l1-.1v-.6l1-.3v.8l1-.1v-.6l1-.1v.9l1,0v-.7l1-.1v1.2l1-.4v-.5l1-.1v.6l1,.6v-.8l1,.1v.5l1,.6v-1.1l1,.2v.6l1,.2v-.7l1,.6v.7l1,.1v-.7l1-.1v1.1l1-.3v-.6l1-.1v.7l1,.3v-.9l1,0v.8l1,.4v-.8l1,.1v.7l1-.1v-.8l1-.4v.9l1,.1v-.9l1-.2v.8l1,.2v-.7l1,0v1.1l1,.2v-.8l1,.1v.7l1-.1v-.6l1,.1v.6l1,.9v-1l1-.2v1.2l1-.4v-.6l1-.6v1l1-.4v-.9l1,.3v.8l1,.1v-.8l1,.1v.8l1,0v-1.2l1,.4v.7l1,.1v-.8l1,.1v.8l1,.5v-1l1,.3v.5l1-.1v-.7l1,0v.8l1,0v-.7l1,.1v.7l1,.2v-1l1,.3v.9l1,.1v-.7l1-.4v1l1,.2v-.7l1,0v.9l1,0v-.9l1-.3v1.4l1-.4v-1.2l1,.3v.8l1,.3v-.8l1,.1v.8l1-.3v-.8l1,0v.6l1,.5v-.7l1,0v.7l1-.3v-.7l1-.2v.8l1,.2v-1.1l1,.2v.7l1-.1v-.6l1-.4v1.1l1,0v-.7l1-.2v.9l1,.7v-.7l1,.1v.9l1,.1v-.8l1-.2v.6l1-.2v-.8l1,0v.7l1,1.3v-1.9l1,.3v.7l1,.2v-1.3l1,.4v.9l1-.1v-1l1,.3v.7l1,.2v-.7l1,0v.6l1,0v-1l1,.3v.6l1,0v-.9l1,.3v1.1l1-.4v-1.1l1,.5v.8l1-.4v-.9l1,.8v.7l1,.1v-.6l1-.1v.8l1,.2v-.7l1-.1v.9l1,0v-.8l1-.3v.9l1,.3v-1.1l1,.3v1.1l1-.1v-1l1,.1v1l1,0v-.8l1,0v.9l1,.2v-1.2l1,.2v.9l1,.4v-1.1l1,0v1.1l1,0v-.9l1,.2v.9l1,.1v-1l1,.3v.7l1,.2v-1l1,.2v1l1-.1v-.9l1-.1v1l1,0v-.9l1,.2v1.1l1-.1v-1l1,.1v1l1,.2v-1.2l1,.8v.9l1,.3v-.8l1-.1v.9l1-.1v-1l1,.1v.8l1,.1v-1.2l1,.3v.8l1,0v-.6l1-.3v.8l1,.1v-.7l1-.1v.8l1,.4v-.8l1,0v.6l1,0v-.7l1-.2v.6l1,.1v-.7l1,0v.8l1,.1v-.7l1,.3v.6l1,.2v-1.2l1,.4v.7l1-.1v-.7l1-.3v.8l1,.3v-.5l1-.1v.9l1,.3v-.9l1-.2v.8l1,.2v-1l1,.1v.7l1,.6v-1l1-.4v.9l1,.4v-.5l1-.6v.9l1-.1v-.7l1-.3v.9l1,.1v-.9l1,0v.6l1,.2v-.6l1-.1v.6l1,.2v-.8l1,.1v.6l1-.2v-.9l1,0v.6l1,0v-.8l1,.1v1.1l1,0v-1l1,.2v.8l1,0v-.8l1,.1v.8l1,.3v-1.1l1,.2v.8l1,.2v-.7l1,.6v.7l1,0v-.7l1-.1v.7l1-.1v-.8l1,0v.7l1,.3v-.7l1,.2v1l1,0v-.5l1,.1v1.1l1-.3v-.8l1,0v.8l1-.3v-.6l1,.4v.7l1,.2v-.8l1,.2v1.1l1-.4v-1.1l1,.1v.7l1,.1v-1l1,.1v.9l1,.3v-1l1,0v.9l1,.1v-.7l1,.5v.7l1,.1v-.9l1,.3v.7l1-.1v-1l1-.4v1.1l1-.3v-.9l1,.7v.9l1,.1v-.9l1,.1v.7l1,0v-1.1l1,0v.6l1,.8v-1.1l1,0v.7l1,.8v-1.1l1-.3v.9l1,0v-.6l1-.3v.9l1,.1v-.6l1,.3v1l1-.1v-.8l1,0v.8l1-.2v-1l1,0v.8l1,.5v-.8l1-.2v1l1,.5v-.9l1,0v.7l1,0v-.9l1,0v.5l1-.2v-.7l1,.8v.7l1,0v-.8l1-.2v1l1,.3v-1l1,0v.9l1,.1v-.9l1-.3v.9l1-.4v-.7l1-.3v.8l1-.1v-.6l1,0v.7l1,.1v-.9l1-.1v1.1l1-.1v-1l1,.1v.5l1,.2v-.8l1,.1v.6l1-.1v-.8l1,.3v.7l1-.2v-.6l1,0v.8l1-.3v-.6l1-.3v.7l1,0v-.6l1,.1v.6l1,.1v-.7l1,0v.8l1,0v-.7l1,.1v1l1,.1v-.8l1-.2v1.2l1,.2v-1.2l1,.2v1l1,.1v-.8l1-.1v1.1l1-.5v-1.1l1,.2v.7l1,.4v-1l1-.1v.8l1,.6v-1.1l1-.1v.7l1,.4v-.8l1,.2v.6l1,.3v-1.1l1,.2v.8l1,0v-.6l1-.1v.8l1,.4v-1l1,0v.7l1,.5v-.8l1-.1v.8l1,.2v-.6l1-.1v1l1-.1v-.7l1,.1v.6l1,.2v-.7l1,.1v.7l1,.1v-.8l1,.1v.8l1-.3v-.9l1,.6v.7l1,0v-.7l1,.6v.9l1-.5v-.8l1,.2v1l1-.1v-.7l1-.1v.9l1,.1v-.8l1,0v.6l1,.6v-.9l1,0v.6l1,.5v-.8l1,.1v.8l1,.1v-.8l1,.1v.7l1,.3v-.8l1,.4v.8l1-.3v-.7l1-.2v.8l1-.3v-.6l1,0v1l1-.1v-.9l1-.2v1l1,0v-1.1l1,.6v.9l1,.5v-1l1,.1v.5l1,.3v-.8l1,.2v.9l1,0v-1.1l1,.3v.8l1-.2v-1l1,.3v.6l1-.1v-1l1,.5v.8l1,.1v-1.1l1,.3v.8l1,0v-.9l1,0v.9l1-.2v-.8l1,.4v.8l1,.3v-.9l1-.1v.8l1,0v-.8l1,.3v.6l1,.6v-1.1l1-.2v1.2l1-.2v-1l1,0v.8l1,.1v-.8l1,.2v.9l1,0v-.7l1-.1v1l1,.1v-1l1,.1v.8l1,.3v-.8l1,.1v.6l1,.1v-.6l1-.1v.7l1,.4v-1l1,.4v.6l1,.5v-1.3l1,.3v.7l1,.2v-1.2l1,.4v.8l1,.1v-.9l1-.2v.9l1,.2v-.7l1-.2v.5l1,.1v-.8l1-.2v.8l1,.3v-.8l1,.1v.9l1,.3v-.8l1,.1v.7l1,.1v-1.1l1,.4v.8l1,.2v-.8l1-.1v1.1l1-.1v-.8l1-.3v1l1,.1v-1l1,0v.7l1-.1v-.8l1,0v.7l1,.4v-.8l1,.3v.6l1-.1v-.7l1-.2v1l1-.3v-.6l1,.2v.6l1-.1v-.8l1-.2v1l1,0v-1l1,.4v.7l1,.1v-.5l1,.1v.8l1-.2v-.7l1,.2v.6l1,.4v-.7l1,.2v.9l1-.2v-.8l1,.2v.8l1,.4v-.8l1,.2v.8l1,.3v-.9l1,0v1.9l1-1.1v-.8l1,.2v.6l1,.8v-.9l1,0v1.1l1,.3v-.7l1,.2v.7l1,0v-.9l1-.2v.8l1,.4v-.8l1,.3v.9l1,0v-.7l1,.1v.7l1-.2v-.8l1,.3v.8l1,.3v-1l1,.2v1.1l1-.1v-.7l1,0v.7l1,.2v-.8l1,0v.8l1,.2v-.7l1,.5v.7l1,11.7v-1.9l1-1.4v1.9l1,1.1v-2.9l1,.9v1.3l1-.5v-2.4l1,1.2v1.8l1,1v-2.1l1,.9v2.6l1-.9v-2.1l1,.1v1.6l1,2v-1.8l1,1.4v1.8l1-1.2v-1.6l1-.6v2.2l1-.4v-2l1,1.2v1.6l1,1.6v-2.5l1-.9v1.7l1,.3v-2.8l1,2.1v2.5l1,3.7v-5.7l1,1.3v2.4l1-1.5v-1.9l1,.6v1.8l1,2.2v-3.3l1,.8v2.9l1,.6v-2.3l1-1.4v2.6l1,.5v-2.7l1-.5v2.7l1,.5v-1.8l1,.2v2.7l1,0v-1.7l1-.3v2.9l1,1.1v-3.7l1,.1v2.4l1,2.3v-2.5l1,.5v1.7l1,.2v-3.1l1,.6v2.1l1-1v-2.4l1,.5v1.6l1,1.9v-2.1l1,1.2v2l1,.2v-1.4l1,.4v2.9l1,.4v-3.3l1-.7v3.4l1-1.7v-1.7l1-.7v3l1,1.5v-2l1-.6v2.6l1,1v-2.2l1,1.1v2l1,.1v-1.9l1-1v2.9l1,2.3v-3.8l1-.4v2.8l1-1v-1.4l1,.4v2.9l1,.4v-2.2l1-.4v2.3l1,.9v-2.5l1,1.1v1.6l1,1v-2.7l1-.8v2.2l1,1.5v-2.1l1,.7v2.2l1-.9v-1.7l1-1.4v2.1l1,2.1v-1.7l1,.3v2.4l1,.5v-2.2l1-1v3.6l1,.6v-2.3l1-.5v2.6l1,3.2v-5l1,0v3.3l1,.4v-2.6l1,.7v2.2l1-.2v-2.3l1,1.5v1.8l1-.7v-1.6l1,1.5v2.1l1-.2v-2.8l1,.4v3.7l1-.6v-3.1l1,1.3v1.5l1-1.5v-2.4l1,1.1v2.8l1,0v-2.6l1,1.7v2.8l1-.7v-2.3l1,1.7v2l1,2.6v-4l1,1.5v4l1-2.3v-2.6l1,1.9v1.9l1-.5v-1.3l1-2.3v1.9l1,.9v-1.3l1,2.5v3.2l1-.9v-1.7l1-1v2.5l1,1.8v-4l1-1.3v4.4l1,0v-3.6l1,.1v2.3l1,.2v-2.7l1,1.5v1.6l1,1.6v-2.4l1,1.9v1.7l1-.8v-2.2l1,.1v5.3l1-1.2v-2.3l1,1.2v2.4l1-1.3v-1.5l1-.7v2.5l1,1.1v-1.8l1,1v1.6l1,.3v-2.9l1,.4v1.4l1,1.4v-1.4l1,.8v2l1-.1v-2.4l1,.2v1.7l1,1.1v-2.2l1,1.2v1.5l1,.5v-1.9l1,.8v2l1,.2v-1.7l1,.1v2.1l1-1.1v-2.1l1-1.5v1.5l1-.8v-1.5l1-1v2l1-.5v-1.7l1-.8v2.2l1-1.6v-1.5l1,.2v3.3l1,.9v-4.5l1-1.3v2.7l1,.7v-4.3l1-.7v2.5l1-1.2v-2.1l1,.3v2.1l1-.2v-1.3l1,1.9v1.5l1,.7v-1.6l1,.6v1.7l1,.4v-1.7l1,1.3v2.1l1-.3v-3.8l1,2v3.1l1-1.5v-1.7l1,.3v1.9l1,3.6v-1.9l1,1.3v2.8l1-1.4v-1.8l1,1v2.4l1-.4v-1.5l1-.8v1.8l1,.5v-2.5l1-.4v2.2l1,2.7v-2.9l1-1v1.6l1,0v-1.7l1,2.8v1.7l1,2.6v-1.9l1-1.5v1.8l1,0v-2l1,.3v1.9l1,.1v-2l1-.3v1.8l1-1.4v-1.7l1-2.3v2.8l1,.2v-2.4l1-.9v1.7l1-.7v-2l1-1.2v3.7l1-.6v-1.5l1-1.6v2l1-.2v-3.1l1,.9v4l1-2.7v-2.3l1,.2v1.3l1,.8v-2.5l1-1.7v2l1-.2v-2l1,.6v3l1-1v-2.2l1,1.6v1.7l1,1.1v-2.2l1-1v2.2l1-.6v-2.1l1,.7v2.1l1,1.1v-3.1l1-.4v2l1,.5v-1.9l1-.3v2.1l1-.3v-1.9l1,1.7v3.2l1,1v-3.6l1-.5v1.9l1-1.5v-2.4l1,1.5v4l1,2.5v-3.9l1-.9v2.9l1-.2v-2.6l1-.4v3.6l1-.7v-1.6l1-1.4v1.9l1-.1v-1.7l1,.1v2.9l1-.8v-1.9l1-.2v2.5l1,1.2v-2.2l1-.9v2.9l1-2.1v-1.8l1-.4v2.3l1,1.1v-1.6l1-1v2.7l1-.8v-1.7l1-1.1v2l1,.4v-2.1l1-.3v2.3l1,1.1v-2.2l1-.4v2.3l1-.1v-1.8l1,1.2v2.4l1-.7v-2.4l1-.6v2.7l1,.4v-2.1l1-.9v2.7l1-.1v-1.3l1-1.1v2l1,1.1v-2.8l1,.4v2.8l1-2.1v-2.3l1-.6v2.3l1-.4v-3.1l1,1.6v1.4l1,1v-2.4l1-.4v2.4l1-1.1v-1.5l1,.1v2.6l1,.2v-2.6l1,.9v3.6l1,.1v-4l1-1.9v4.1l1-1.1v-1.3l1-.8v1.7l1,1.5v-2.4l1,1.6v2.1l1-.3v-2.1l1,.6v1.5l1,.4v-2.2l1-.5v2.4l1-.6v-1.4l1-.5v2.6l1,1.5v-2.5l1-.4v2.6l1,.4v-3.2l1,1.5v4.7l1-1.9v-1.9l1-.1v1.7l1,.6v-2.8l1,.2v2.5l1,2.4v-4.4l1-.1v2.9l1-1.7v-1.8l1-.4v2.2l1,.9v-3l1,1v2.8l1,.3v-2.4l1,1.2v2.6l1-1.5v-2.5l1,0v2.3l1,2v-1.5l1-.6v3l1-1.2v-1.9l1,2.1v2.4l1,1v-1.9l1-.4v2.2l1-.1v-2.2l1-.4v2.4l1,0v-2.7l1-.4v2.1l1,1.9v-2.7l1,.9v1.6l1,0v-1.9l1-1v2l1-.6v-2.4l1,.2v4.4l1-.3v-2.1l1,1.3v2.5l1,.9v-2.2l1-.4v3l1-1.9v-2.3l1-.2v2l1-1.7v-1.7l1,.4v1.7l1,.3v-1.8l1-1.5v2.3l1,0v-1.8l1-.8v2.1l1,0v-2.3l1-.7v2.2l1,.3v-1.6l1-1.4v1.6l1-1.3v-2.5l1,.3v2.6l1-.9v-1.7l1-.6v1.9l1,0v-1.5l1,1.5v2.2l1-.5v-2.4l1-.2v2.5l1-.6v-1.4l1,1.1v2.2l1-1.7v-1.9l1-1.2v2.7l1,2v-5.3l1-.7v2.1l1,.6v-1.7l1,.2v1.7l1-.7v-3.6l1,1.2v2.4l1,1.1v-3.6l1,.3v1.8l1,.4v-1.4l1,.1v1.5l1-.1v-2l1-1.3v2.8l1-3.2v-1.6l1-.7v3.5l1,.1v-2.9l1,0v3.2l1-.6v-2.1l1,1.2v1.6l1,.4v-2.7l1,1.3v2.4l1,.3v-2l1,.9v1.9l1,.6v-2.3l1,1.1v1.9l1,.3v-2l1-2.1v2.3l1,.2v-2.1l1-.9v3l1,.9v-1.9l1,.7v1.5l1,1.1v-2.1l1,.1v2.5l1-.6v-2.4l1,1.7v1.4l1,1.7v-3.2l1,1v2.3l1-1.3v-2.1l1-1.7v2.2l1,0v-1.4l1-.7v3.2l1,.8v-4.9l1,1v2.9l1-1.5v-2.3l1,0v2l1-1.2v-1.9l1,0v1.9l1,.3v-2.6l1,.1v2.6l1,.2v-2.2l1-.3v2.5l1-1.2v-2.1l1,1.2v2l1-1.6v-1.7l1-.9v2.1l1,1.2v-2.4l1-.3v2.4l1-3.3v-2.1l1,.6v1.9" stroke="#50e850" stroke-width="1.5"/><path d="M440.5,784.4l1-1l1-1.1l1-1.5l1-1.2l1-2.2l1-1.6l1-1.8l1-1.6l1-1.7l1-1.7l1-1.8l1-1.8l1-2l1-1.6l1-1.5l1-1.6l1-1.7l1-1.3l1-1.6l1-1.3l1-1.6l1-1l1-1.4l1-1.3l1-1.3l1-1l1-1.4l1-1.4l1-1.2l1-1l1-1.1l1-1.9l1-1l1-1l1-.9l1-1.3l1-1l1-1.1l1-1l1-1.1l1-.8l1-.7l1-.4l1-.6l1-.3l1-.6l1-.3l1-.6l1-.5l1-.3l1-.1l1,.1l1-.4l1-.3l1-.4l1-.2l1,0l1-.4l1-.6l1-.2l1-.2l1-.4l1-.4l1-.4l1-.1l1-.1l1-.2l1-.2l1-.2l1,0l1,0l1-.4l1-.2l1-.4l1-.2l1-.2l1-.2l1-.1l1-.3l1-.2l1-.2l1-.3l1,0l1-.3l1-.2l1-.4l1-.1l1-.1l1,0l1-.4l1-.2l1,0l1-.2l1-.2l1-.2l1-.2l1,.2l1-.2l1-.1l1-.1l1,.2l1,.3l1-.3l1,0l1,0l1,0l1,0l1-.2l1,0l1,.2l1,0l1,0l1,.1l1-.1l1,0l1,.2l1-.3l1-.2l1-.2l1,.1l1,0l1-.2l1-.2l1,0l1-.2l1,.2l1,.3l1,.3l1,0l1,.2l1,.6l1,.6l1,.6l1,.4l1,.8l1,.6l1,.9l1,.7l1,.6l1,.6l1,1l1,.4l1,.4l1,.7l1,.5l1,1.2l1,.2l1,.5l1,.5l1,.3l1,.3l1,.2l1,0l1,.4l1,.3l1-.1l1,.4l1-.2l1,0l1,.2l1,0l1,.6l1-.2l1,.4l1-.2l1,.4l1-.3l1,.2l1,.1l1,0l1,.2l1-.2l1,0l1,0l1,.2l1-.2l1,.2l1-.2l1,0l1,0l1,.2l1,0l1-.3l1,.3l1-.1l1,0l1-.3l1,0l1,0l1,0l1,0l1,0l1-.2l1,.3l1-.2l1-.1l1,.1l1-.1l1,0l1-.4l1,0l1,0l1,.2l1,.2l1-.4l1-.1l1-.1l1-.2l1,.4l1-.4l1-.2l1-.3l1,.1l1,0l1-.2l1,0l1,.4l1-.1l1,.1l1-.2l1-.2l1,0l1,0l1,0l1,.2l1-.1l1,0l1,0l1,.1l1,0l1-.1l1,.2l1-.5l1,0l1,0l1,.2l1-.2l1,.1l1-.3l1,.2l1-.2l1-.2l1,0l1-.2l1,.3l1,.1l1,.2l1-.4l1,0l1-.2l1,0l1-.1l1,.3l1-.2l1,0l1-.2l1,.1l1-.1l1,.2l1-.3l1,.4l1-.3l1,0l1,.2l1,0l1,0l1-.1l1,.1l1-.2l1-.1l1-.1l1,.2l1,.2l1-.2l1,0l1-.4l1,.4l1,.1l1,.1l1-.2l1-.2l1,0l1-.1l1-.2l1,.1l1-.2l1,.2l1-.2l1-.3l1,.1l1-.2l1,.3l1-.4l1,.1l1,0l1,.1l1,.1l1,0l1,0l1,.2l1-.3l1-.1l1-.1l1,.1l1,0l1,.2l1,0l1-.2l1,0l1,0l1,0l1,0l1,.3l1,0l1,.1l1,0l1,.2l1,.2l1,.2l1-.3l1,.1l1-.2l1,.2l1,.1l1,.2l1,.1l1-.2l1,.2l1,.2l1,0l1-.1l1-.1l1,.2l1,.1l1,.1l1-.2l1-.2l1,.2l1-.2l1,.2l1-.2l1,.4l1-.2l1,.2l1,0l1,.2l1,.1l1,.1l1-.2l1,.1l1,.2l1,.3l1,.2l1-.2l1,.1l1-.1l1,.1l1,.3l1,0l1,.4l1,0l1,0l1,.2l1-.2l1,.3l1-.2l1,.1l1,0l1,0l1,.4l1-.4l1,0l1,0l1,0l1,.4l1,0l1,.3l1-.3l1,.3l1-.2l1,.1l1,.2l1,0l1,0l1,.2l1,0l1,0l1-.2l1-.1l1,.1l1,.2l1,0l1,0l1,0l1,0l1,0l1-.2l1,.4l1-.2l1-.2l1,0l1,0l1,.1l1,.1l1,0l1,0l1,.4l1-.1l1-.1l1-.2l1,.3l1-.1l1,.4l1-.4l1,.2l1,0l1,.2l1,.2l1,.2l1-.2l1-.2l1,0l1,.1l1-.1l1,.2l1,.2l1,.2l1-.1l1-.5l1,.2l1,0l1-.3l1,.4l1,.1l1,0l1,0l1-.1l1-.1l1,.2l1,0l1,0l1-.1l1,.3l1-.1l1,.2l1-.2l1-.2l1-.2l1,.1l1,.2l1-.3l1,.3l1,0l1,.1l1,.1l1,0l1,0l1-.1l1,.1l1-.1l1,.1l1,0l1-.1l1-.1l1,.2l1-.1l1-.1l1-.3l1,.1l1,0l1,0l1,0l1,0l1,.2l1-.2l1,.4l1-.3l1,.4l1,.1l1-.1l1-.3l1-.1l1,.3l1,0l1,.2l1,.1l1,.3l1,.3l1-.1l1,.1l1-.3l1,0l1,.2l1-.1l1,.1l1,.2l1,0l1-.3l1,.1l1,0l1,.2l1,.3l1,.1l1,0l1,.2l1,.2l1,0l1,.2l1-.2l1,0l1-.2l1,.2l1,.4l1,0l1,.8l1-.2l1,0l1,0l1-.1l1,.1l1,0l1,.4l1-.2l1,.2l1,0l1,0l1,.2l1-.2l1,0l1,.2l1,.1l1-.1l1-.4l1,.2l1,.1l1,.4l1,.1l1,.2l1,0l1,0l1,.4l1,.1l1,.2l1,.1l1,.4l1,.1l1,.1l1-.1l1-.2l1-.1l1,0l1-.1l1,0l1,0l1,.6l1-.4l1,.5l1-.4l1,0l1,.3l1,.3l1,0l1,.2l1,.1l1-.1l1,.2l1,.2l1,.1l1,.1l1,.1l1-.2l1-.1l1,.4l1,0l1,.2l1,.2l1,.1l1,.1l1,0l1,.2l1-.2l1,.3l1,.2l1,0l1,0l1,.1l1,.4l1-.2l1,0l1,.2l1,.2l1,0l1-.2l1-.1l1,.1l1,0l1,.1l1,0l1,.1l1,.4l1-.4l1,.2l1,.1l1,.1l1,.2l1,.1l1,0l1,.1l1-.1l1,0l1,.4l1-.2l1-.1l1-.1l1-.3l1,0l1,.2l1,.4l1-.2l1,0l1,.1l1,.3l1,.1l1-.2l1,.1l1,0l1-.1l1-.3l1,0l1,.2l1,.1l1-.1l1,0l1,.2l1,.2l1,.1l1,.3l1,0l1-.3l1-.3l1,0l1,.1l1,.1l1-.2l1,.1l1,.1l1,.3l1,.1l1-.2l1-.2l1,0l1-.2l1,.2l1,.3l1,.2l1,.3l1,.2l1,0l1,.1l1,0l1-.1l1-.1l1,.1l1,.4l1,.2l1-.2l1-.1l1-.1l1,.2l1,.2l1,.4l1,0l1-.2l1,0l1-.1l1,.2l1-.1l1,.4l1-.2l1,.2l1,.2l1,.2l1,.2l1-.1l1-.1l1,.4l1,0l1,0l1,.5l1-.1l1,.2l1-.1l1,.3l1-.4l1-.1l1,.1l1,.2l1,.2l1,.4l1-.2l1,.2l1-.4l1,.2l1-.2l1,.1l1,.1l1,.2l1,0l1,.2l1,.1l1,.1l1,0l1-.3l1,.1l1,.1l1-.2l1,.1l1,.1l1,0l1-.1l1-.2l1,.3l1-.3l1,.3l1-.5l1,.2l1-.1l1,.1l1,0l1,.2l1,0l1,.6l1,0l1,0l1-.3l1,.3l1,.1l1,.3l1-.2l1,.4l1-.1l1,.1l1,.4l1,.2l1,.1l1-.1l1,.2l1-.3l1,0l1,.1l1,0l1,0l1,.4l1,0l1,.1l1,.1l1,.4l1-.2l1,0l1,.2l1,.3l1,0l1,.1l1,.1l1,.3l1-.2l1,0l1,.3l1,0l1-.1l1-.2l1,.1l1,0l1,.2l1,.1l1,.2l1,0l1,.4l1,0l1,0l1,.3l1-.1l1,.1l1-.1l1,.2l1-.2l1,0l1,.2l1,0l1,.1l1,.1l1-.4l1-.1l1-.1l1,0l1-.1l1,.1l1,.2l1,.2l1,0l1-.2l1-.2l1,0l1,0l1-.1l1,0l1,.1l1,0l1-.2l1,.2l1,0l1,0l1-.2l1,0l1-.1l1,.2l1,.1l1,0l1,0l1-.4l1-.1l1,.1l1,.2l1,.2l1-.1l1,.1l1,.1l1,.1l1,0l1-.2l1-.2l1,.1l1,.3l1,.1l1,.1l1,.2l1,.2l1,.3l1-.3l1,.2l1-.1l1,.3l1-.2l1,.8l1-.2l1,.4l1-.2l1,.4l1-.2l1,.2l1,.1l1,.1l1,.2l1,.1l1,0l1,.1l1,.2l1,0l1,0l1,.2l1-.1l1,.1l1-.2l1,.1l1,0l1,.6l1,.1l1,0l1,.3l1,.1l1-.2l1,0l1,.1l1,.1l1-.2l1,0l1,.2l1,.4l1,.2l1,.2l1-.1l1,.2l1-.1l1,.2l1-.1l1,.1l1,.2l1,0l1,.3l1,0l1,.1l1,0l1,.2l1,0l1,0l1,0l1,.4l1,.4l1,.1l1,.1l1-.1l1-.2l1,.1l1-.1l1,0l1-.3l1-.2l1,.1l1,.7l1-.2l1,.2l1,0l1,.1l1,.1l1,.2l1,.4l1,.1l1-.3l1,.2l1-.1l1,.1l1,.2l1,0l1,.1l1,.1l1-.1l1-.1l1,0l1,0l1,.4l1-.2l1,0l1-.2l1,.2l1-.2l1,0l1,.2l1,0l1,0l1,0l1,0l1-.2l1,.2l1-.2l1,.4l1,0l1,.2l1,0l1,0l1,.1l1-.1l1-.1l1-.1l1,.4l1,0l1,0l1,.3l1,.2l1,.1l1,0l1,.4l1,.2l1,.2l1,.3l1,.3l1,.2l1,0l1,0l1,0l1,.2l1,0l1,.1l1,.1l1,.2l1-.1l1,.1l1,0l1,0l1,.2l1,.6l1,.2l1,.1l1,.5l1,0l1,6.7l1,.6l1,.3l1,0l1,.4l1,.4l1-.2l1,.8l1,.6l1-.1l1-.3l1,.6l1,.8l1,.4l1,.8l1,.5l1,.9l1,.1l1-.3l1,.5l1,.6l1,0l1,.1l1,.4l1-.1l1,.4l1,.6l1,.4l1,.1l1,.4l1,.8l1,1.2l1,.1l1-.7l1,.6l1,1l1-.3l1,.7l1,.8l1,0l1,.2l1,.2l1,.5l1,.3l1-.2l1,1.1l1,.3l1,0l1,.6l1,.6l1,.4l1-.1l1,.3l1,.6l1,.2l1,.1l1,.5l1,.6l1,.2l1,.1l1,.7l1,.7l1,.1l1,.1l1,.7l1,1l1-.2l1,.6l1,.4l1,0l1,1.2l1,.2l1-.2l1,.3l1,.9l1,.2l1,0l1,.6l1,.6l1,.6l1,.1l1,.6l1,.5l1,.4l1-.5l1,.4l1,.7l1,1.2l1,.2l1,.3l1,1.1l1,0l1,.2l1,0l1,.2l1,.6l1,.8l1,.1l1,.3l1,.8l1-.2l1,.1l1,.7l1,1.2l1,.2l1-.1l1,.4l1,.7l1,.6l1,.8l1,.6l1,.6l1,.2l1,.3l1,.5l1,.4l1,.4l1,.2l1,.4l1,.2l1,.3l1,.9l1,.5l1,.6l1,1l1-.1l1,.3l1,1.3l1,.2l1,.3l1,.3l1-1.4l1-1.1l1-.1l1,0l1-.7l1-1.3l1-.4l1-.6l1-.6l1-1.2l1-.2l1-.8l1-.6l1-.4l1,.4l1,1.6l1,1.2l1,.6l1,.4l1,.2l1,.4l1,0l1,1l1,.2l1,1.4l1,.6l1,0l1,0l1,.1l1,1.1l1,.6l1,.6l1,1.2l1,.4l1,.7l1,.9l1,.7l1,1.5l1-1.2l1-.8l1-.4l1,0l1-.6l1-1l1-.5l1-.3l1-.3l1-.7l1,0l1-.3l1-1.3l1-.2l1-.4l1-.9l1,.1l1-.3l1-.2l1,0l1-.3l1-.7l1,.1l1,.5l1,.5l1,0l1,.8l1-.4l1,.4l1,.7l1,1.1l1-1l1,.2l1,.1l1,.4l1-.4l1-.1l1-.3l1,.5l1-.1l1,.4l1,.6l1-.1l1,.2l1,.7l1-.7l1-.4l1,.4l1-.2l1-.2l1,.8l1-.2l1-.5l1,.3l1,.6l1,.2l1-.4l1,.4l1-.5l1-.9l1,0l1,.3l1-.1l1-.1l1-.2l1,0l1,0l1-.1l1,0l1,.2l1-.3l1-.2l1,1.5l1,0l1-1.2l1-.2l1,.8l1,.2l1-.3l1,.7l1,.1l1,.3l1-.5l1,.2l1,.3l1-.2l1,.4l1,.2l1,.2l1,0l1,.1l1,.6l1,1.2l1-.1l1-.4l1,.2l1,.4l1,0l1,.4l1,.6l1,.2l1,0l1-.3l1-.5l1,.9l1,.5l1,.2l1,.4l1,.7l1,.1l1-.4l1-.2l1,.7l1-.1l1,0l1,.6l1,.4l1,.2l1,0l1,0l1,.9l1,.7l1,.1l1-.1l1,1.1l1,.9l1,.8l1-.2l1-.4l1-.6l1-.8l1,.3l1-.4l1-.5l1,0l1-.2l1-.7l1-.6l1-.2l1-.1l1-.4l1-.4l1-.4l1-.2l1,0l1-.6l1-.7l1-.2l1-.2l1-.3l1,0l1,.1l1,.5l1-1.1l1-.5l1,0l1-.1l1-.5l1-.6l1,.4l1,.4l1-.4l1-.2l1,.4l1-1.2l1-.3l1-.3l1-.6l1,.4l1,1.1l1-.1l1,.1l1,.5l1,.4l1,.5l1,.9l1-.2l1,.3l1,.9l1-.2l1,.9l1-.1l1-.2l1,.4l1,.4l1-.4l1,.7l1,.1l1-.2l1-.1l1-.1l1-.5l1-.2l1,.1l1-.6l1-.2l1-.5l1-.7l1,.2l1-.6l1-.2l1-.1l1,.3l1-.6l1-.4l1-.6l1-.4l1-.2l1,0l1,0l1-.4" stroke="#f020c8" stroke-width="1.7"/><path d="M440.5,760v.8l1,.4v-.9l1,.6v.8l1-1.5v-1.1l1-.3v.8l1-1.7v-1.4l1-.8v1.3l1-3.1v-1.1l1-3.7v.9l1-2.9v-1l1-1.1v1.2l1,1.3v-2.1l1-.1v1.2l1-3.5v-.7l1-.3v.8l1,0v-.9l1-2.1v1.1l1-.8v-.9l1-2.8v.9l1-1.3v-.8l1-.7v.7l1-1.2v-1l1-1.5v1.2l1-1.5v-1.2l1-1.4v1.2l1-1.7v-.8l1-1.1v1.3l1-1.9v-.9l1-1.6v1.2l1-1.3v-.9l1-.6v1.2l1,.6v-.8l1-1.3v1l1-1.6v-.8l1-1.3v1l1-.3v-1l1-1v1.1l1-.4v-.9l1-1.7v.8l1-.4v-.9l1-1.4v1l1-.9v-.8l1-1.8v.9l1,.1v-1l1-1.2v1.1l1,.8v-1.2l1,0v.9l1-1.3v-.8l1-1v1l1,.3v-.7l1,0v.9l1,.8v-.9l1,0v.8l1-1.2v-.9l1,1v1l1-.6v-1.2l1-.9v1.3l1-1.2v-.8l1-1v1.1l1-.6v-1.1l1,.3v1l1,1v-1l1-1.2v1.5l1-1.8v-.9l1-.2v1.1l1-1.4v-.7l1-1.2v1.1l1-1.2v-1l1-.8v1.1l1-.5v-1.3l1,1.9v.6l1-.6v-.9l1,.5v.7l1,1.2v-.8l1,.7v.7l1,.1v-.9l1,.3v.8l1,.5v-.9l1,.5v.9l1-1v-.8l1-.5v1.3l1-.4v-1.2l1-.5v1.6l1-1.3v-1l1,.5v.7l1-.5v-1.2l1,.6v1.2l1-.9v-.8l1-.1v.7l1-.5v-1l1,.1v.7l1-.5v-.8l1-.7v.7l1,1.5v-1l1-.9v1l1,.1v-.8l1-.7v1.1l1-.6v-.9l1-.7v1.6l1,1.7v-.8l1-1.9v.9l1,.7v-1l1,.4v.9l1,1v-1.2l1,1.1v1.3l1-2.3v-.8l1,.4v1l1-.1v-.9l1-.3v.7l1,.3v-1.3l1,.3v.8l1,.4v-1.1l1,.3v.7l1,.1v-1l1,.4v.8l1,.4v-1l1,0v1.2l1-.5v-1l1-.3v1.1l1-.2v-1.2l1,.5v1.1l1,.1v-.7l1-.2v1.2l1-.8v-1l1,.4v1.1l1-.4v-1l1,.6v.8l1-.1v-.8l1,.2v1.2l1-.3v-.6l1,.5v1.4l1-.7v-.7l1,.6v1.1l1,.2v-.7l1,.6v.9l1,.5v-1.2l1,.6v1.1l1,.2v-.8l1,.9v.8l1,.9v-1.2l1,.7v2l1-.7v-.8l1,.1v1.7l1,.2v-.8l1,.5v1.2l1,.2v-.9l1,.1v1l1,.5v-1.2l1,.8v1l1,.9v-1l1,.4v1.2l1-.1v-.8l1,.6v1l1-.1v-.9l1,.3v.8l1-.3v-.7l1-.2v1l1,.4v-1.2l1,0v1.2l1-.1v-1l1,.5v.9l1,.3v-1.2l1,.4v.9l1,.4v-.8l1,.4v.9l1,0v-.8l1-.3v.8l1,1.2v-2l1,.2v1.2l1,.6v-1.4l1-.2v1.3l1,.3v-1.3l1,.2v.7l1,.2v-.9l1-.4v.9l1,.1v-1l1,.2v.9l1-.2v-.8l1-.3v1l1-.1v-1l1-.4v.9l1,.6v-.9l1-.3v1.2l1,0v-1l1-.2v1l1,.2v-1.3l1,.2v.9l1-.7v-.7l1,0v1.3l1-.4v-.9l1,.7v.8l1,.4v-1.1l1,.2v1.2l1-.1v-1l1-.1v.9l1,0v-1l1,.2v1.1l1-.1v-.7l1-.3v.8l1-.4v-1.3l1,.5v1l1-.2v-1.2l1,.2v.9l1,1.2v-1.5l1-.2v1.1l1,0v-.9l1-.1v1.1l1,.2v-.9l1-.2v.7l1-.1v-.8l1,.3v.9l1-.9v-.7l1-.1v.9l1,.5v-1.3l1-.1v1.1l1-.2v-1l1-.3v.9l1-.1v-1.1l1,.2v.8l1,.5v-1.2l1,.4v1l1-.1v-.8l1,0v1.1l1-.4v-.8l1,0v1.2l1,0v-1.4l1,.4v.9l1,0v-.8l1,0v.8l1,.4v-1l1-.3v1.1l1,0v-.6l1-.4v.8l1-.1v-.9l1-.4v1.2l1,.6v-1.3l1-.1v1.2l1-.1v-1.1l1,0v1.4l1-.5v-1.1l1,.2v1.4l1-.7v-.7l1-.4v1.3l1,.1v-.9l1-.2v.9l1,0v-.8l1-.7v1.2l1,.1v-.9l1-.2v1.1l1,.7v-1.5l1,.4v.9l1-.3v-.8l1,.2v.8l1-.2v-.7l1-.1v1l1-.5v-.8l1-.1v1.5l1-.3v-.9l1-.3v.8l1-.2v-1l1-.1v1l1,.4v-1.1l1,0v.9l1,.2v-1.2l1,.4v.9l1,.2v-1l1,.1v1.2l1-.6v-.7l1-.6v1.2l1-.3v-1l1,.4v1l1,.3v-1l1-.6v1.2l1,0v-1l1,0v.7l1,.5v-1.5l1,.7v1.1l1,.2v-1.3l1-.3v1l1-.3v-.7l1-.4v1l1,.5v-1.4l1,.2v1.4l1-.1v-1.4l1,0v1.1l1,.2v-1l1-.1v.9l1,.4v-1.2l1-.3v1.4l1-.4v-.7l1-.1v.7l1,.2v-1.4l1,.3v.9l1,.4v-.9l1,.4v.7l1,.2v-1.2l1,.2v.7l1-.1v-1.2l1-.1v.8l1,.1v-1.1l1,.4v.8l1-.1v-1.1l1-.1v1.1l1,.4v-1l1-.2v1.2l1-.1v-.7l1-.8v1.2l1-.4v-.8l1,.3v1.3l1-.1v-1.2l1,.2v1.2l1,0v-1l1,.1v1l1,.2v-1.1l1,.6v.7l1,.4v-1.4l1,.8v.7l1,0v-1.2l1,0v.9l1,0v-.7l1,0v.9l1,.3v-1.3l1,.2v1.5l1-.2v-.8l1-.4v1l1-.2v-1l1-.3v.9l1-.3v-.9l1,0v.7l1,.2v-.8l1,.1v.8l1,.6v-1.1l1,.5v.7l1,.4v-1.1l1,.1v1l1-.2v-.8l1,.1v.9l1-.2v-.8l1-.3v1.1l1,.3v-1.1l1,0v1l1,.7v-1.4l1,0v1.3l1,.1v-1.4l1-.1v1.3l1-.2v-.7l1-.7v1.2l1,.1v-.6l1-.5v1.4l1,.2v-.7l1-.5v1.2l1-.3v-1.2l1,.7v.7l1-.2v-1.2l1,.2v.8l1,.1v-1.3l1,.9v.9l1,.2v-1.2l1,.8v1l1,.3v-1.1l1,.2v.8l1,0v-1.2l1,.3v.9l1-.5v-1.2l1-.1v1.5l1-.4v-.7l1,.1v1.4l1-.3v-1l1,.2v1l1,.1v-.9l1-.1v1l1-.4v-1l1-.1v.7l1,1v-1.9l1,.2v.8l1,.2v-1l1,.4v.9l1,.2v-1.1l1,.2v1.1l1,0v-.9l1,.1v1l1-.2v-1.1l1,.2v.9l1,.1v-1l1,.4v.8l1-.2v-.9l1-.2v1l1,0v-1l1,.9v.7l1,.2v-.7l1-.1v.9l1-.3v-.7l1-.3v.9l1-.1v-1l1-.4v1.6l1-.6v-.8l1-.5v1.2l1-.3v-.8l1,0v.8l1-.1v-1l1,.3v1.1l1,0v-.9l1-.3v1.8l1,.1v-1.2l1,.1v1l1,0v-.8l1,0v1.2l1-.4v-.6l1,.1v1.1l1,.2v-1.1l1,.4v1.5l1,0v-1.2l1,0v.9l1-.3v-.7l1-.3v1.1l1,.3v-1.3l1,0v1.1l1-.6v-1.2l1,.3v1.6l1-1v-1.2l1-.2v1.1l1,.9v-2.2l1,.6v1.3l1-.1v-1l1-.2v.8l1,.3v-.9l1-.1v.9l1,.1v-.9l1-.2v1l1-.1v-1.3l1,.4v.8l1,.7v-1.5l1,.4v.8l1,.2v-1.2l1,.4v.8l1,.2v-.8l1-.2v1l1,.7v-1.2l1,.2v.9l1,.1v-1.3l1-.1v.8l1,0v-1.1l1,.2v1.3l1,.3v-1.2l1,0v.8l1-.5v-1l1,.1v1l1-.2v-.9l1,.1v1.2l1-.4v-1l1-.1v.7l1,.2v-.9l1-.3v.8l1,.5v-1l1,.1v1l1,.1v-1l1,.2v1.1l1-.2v-1.2l1,0v1.1l1-.1v-.9l1,.6v.7l1,.1v-.8l1-.2v1.2l1,.5v-2l1,.3v.8l1,.4v-1.2l1-.1v1.4l1-.2v-1l1-.3v1.1l1,0v-.9l1-.5v.9l1,.4v-1.1l1,.4v.6l1,.2v-.7l1-.2v.7l1,.5v-1l1,.2v1.2l1,.3v-1l1-.5v.8l1,1v-1.1l1-.1v1l1-.5v-1l1-.4v1.3l1,.4v-1.3l1,.4v.9l1-.6v-1l1,.2v1l1,.6v-1.3l1,.2v.8l1,.3v-1.2l1,.4v.7l1,0v-.9l1-.3v.9l1-.1v-1.1l1,.6v1.1l1,.5v-1.2l1,.5v1l1-.2v-1.4l1,.4v.8l1-.3v-.6l1-.3v1l1-.2v-.7l1-.2v1l1,.7v-1.1l1-.1v1.1l1,0v-1l1-.4v2l1-1.2v-1l1,.3v1l1-.1v-1.4l1,1.4v.7l1,.4v-.9l1,.3v1l1-.2v-1.2l1,.2v1l1-.1v-.8l1,0v1l1-.6v-.6l1-.2v1l1-.2v-.7l1,.2v2.1l1-.9v-.8l1-.1v1.6l1-.4v-.9l1-.5v1.2l1,.1v-1.1l1,.1v1.2l1-.6v-.6l1,.2v1l1,.4v-.9l1-.1v1.6l1-.5v-.9l1-.1v1.1l1-.1v-.9l1,.3v1.4l1-.7v-1.1l1,.2v1.2l1-.8v-1l1,.6v.7l1,.4v-1.3l1,.6v1l1,0v-.9l1-.1v1.1l1,.4v-1l1-.1v1.5l1-.5v-1l1,0v.8l1,.1v-1l1,.1v.8l1,.2v-1l1,.1v1.5l1-.4v-.8l1,.4v.7l1,.3v-1.5l1,.4v1.5l1-.1v-1.2l1,.3v.9l1-.4v-.7l1-.1v1.2l1-.1v-.9l1,.1v.8l1,.2v-1.1l1,0v1.1l1,.7v-.8l1,0v1.3l1-.1v-.9l1-.4v1l1,.5v-1.3l1-.5v1.6l1,.2v-1l1,0v1.1l1,.4v-.9l1-.3v.7l1,.2v-.7l1,.1v1.5l1-.7v-.8l1-.1v1.2l1-.1v-1.1l1,.3v.6l1,.3v-.9l1-.3v.9l1-.1v-.8l1-.2v1.5l1-.4v-.9l1,0v1.2l1,.1v-1.3l1,.4v1.2l1,0v-1.4l1,0v1l1-.2v-1.1l1-.1v.8l1,.1v-1l1,.3v1.3l1,.5v-1.1l1,.2v.8l1,.4v-.8l1,.1v.9l1-.1v-.7l1-.3v1.2l1-.5v-.8l1,.1v1.1l1-.2v-1l1,.1v.8l1-.1v-.9l1,.4v1l1,.2v-1l1-.1v1.1l1,0v-.7l1,0v.9l1,.3v-.8l1-.5v1l1-.1v-.9l1-.2v1.2l1,.3v-.9l1,0v1.1l1,.5v-1.2l1,.5v.9l1-.3v-.8l1-.7v1.1l1-.1v-1l1,0v.7l1,.7v-1l1,.4v.7l1-.1v-.9l1-.2v.7l1-.1v-.8l1,.6v.8l1,.2v-1.1l1-.1v.9l1-.2v-1.1l1-.3v.8l1,.3v-1l1,.2v1.3l1-.4v-.8l1-.4v1l1-.2v-.6l1-.3v1.5l1,0v-1.3l1,.7v.7l1,.1v-1.2l1,.1v1l1,.2v-1l1,.2v.7l1-.4v-.9l1-1v1l1,.6v-1.2l1,.2v1.3l1,1v-1.5l1,.2v.8l1,.8v-1.4l1-.2v.8l1-.1v-1.4l1,1v.6l1,.7v-1l1,0v.7l1,0v-.9l1,.3v1.1l1,0v-.8l1,0v1.1l1-.4v-.7l1-.1v1.1l1,.3v-1.3l1,.2v1.1l1,.3v-.9l1,.1v1.2l1-.2v-1.3l1,.1v1l1,0v-.8l1,.6v1.1l1,.3v-1.1l1,.3v.7l1,.2v-1.4l1,.1v1.2l1-.8v-1l1,0v.8l1-.1v-.7l1,.2v1.1l1,.4v-1l1,.2v.8l1-.1v-.9l1,.1v.6l1,.5v-.8l1,.2v.8l1-.1v-.9l1-.4v1.5l1-.2v-.9l1,.3v1.4l1-.3v-.9l1-.1v1l1,.4v-1.2l1,.5v.8l1,.4v-1.1l1-.2v1.3l1-.1v-1.1l1-.3v.9l1,.1v-.7l1,0v.6l1,.5v-.9l1-.3v.9l1,.5v-1.1l1,0v1.2l1,.3v-1l1-.2v.7l1,.2v-.9l1,0v.7l1,.2v-1.2l1,.4v1.1l1-.1v-1l1,.3v1.2l1,.1v-.9l1,.2v.8l1-.1v-1l1,.2v.7l1-.1v-1.1l1,.5v.7l1,.1v-.9l1-.3v.8l1-.1v-1l1-.2v1.5l1,.3v-.7l1,0v1.5l1-.7v-.8l1-.4v1l1-.4v-.6l1-.1v.7l1,.1v-.9l1-.2v1l1-.1v-.8l1-.1v1l1-.2v-.8l1-.2v1.2l1,0v-.9l1,.2v1l1,.3v-.7l1-.2v.8l1-.1v-.7l1,0v1l1-.3v-.9l1,.2v1.1l1,.3v-1.3l1,.2v1l1,.3v-1.2l1-.4v.7l1,0v-.8l1,0v1.7l1-.2v-.6l1-.7v1l1-.1v-.9l1-.2v1.1l1,.7v-1.3l1,.2v1.3l1,.1v-1.2l1-.1v1.1l1,.1v-.8l1,.1v1l1,0v-.8l1,.1v1.6l1-.2v-1.2l1-.6v1.1l1,.4v-1.3l1,.1v.9l1,.5v-.9l1-.1v1.1l1-.2v-.7l1-.4v1l1,.6v-1.1l1,.2v1.1l1,0v-.9l1-.3v1.1l1,.5v-1.5l1-.1v1.1l1-.3v-1.1l1,.4v.9l1,.1v-1.4l1,.7v1.5l1-.1v-1.2l1,.2v.9l1,.3v-1.2l1,0v1l1,.1v-1l1,.1v1.1l1,0v-1.5l1,.4v.8l1,.4v-1.5l1,.1v1.1l1-.2v-1l1,.6v.7l1,.7v-1l1,.1v.7l1,.2v-.8l1-.3v.8l1,.2v-.8l1-.1v.8l1,.2v-1l1,.4v.8l1,.5v-1.2l1-.1v.8l1,.6v-1.3l1-.2v1l1,.3v-.9l1,.3v1l1,0v-1l1-.2v1.1l1-.2v-1l1-.5v1l1-.4v-.8l1-.2v1.2l1,.2v-1.1l1,.3v.7l1-.1v-1.3l1,.6v.7l1-.3v-.7l1-.2v1l1-.4v-1l1-.5v1.2l1,.1v-.9l1,.1v.9l1-.1v-.9l1,.2v1.1l1-.2v-.9l1,.3v.8l1-.1v-.9l1,.2v1.1l1,.4v-1.2l1,.3v.8l1,.1v-1.2l1,.1v.7l1-.1v-1l1,0v1l1,.3v-1l1,.3v.9l1,.2v-1l1,.1v.8l1,.1v-.9l1,.1v1l1-.4v-.9l1,.1v.8l1,0v-.9l1,.6v.7l1,.4v-1.1l1-.2v1.3l1,0v-1.1l1,.3v.9l1-.1v-1.1l1,.5v.8l1-.2v-1.1l1,.6v1.3l1-.5v-.8l1,.4v.8l1,.7v-.7l1-.3v1l1,.2v-1.3l1,0v1.1l1-.2v-1.2l1,.8v.8l1,.1v-.9l1,.3v.7l1,.1v-1l1,.9v1.3l1-.3v-.7l1,.3v1.5l1-1v-.9l1,.1v.7l1-.4v-.7l1,.2v1l1,.2v-.9l1,.3v.9l1-.1v-.9l1,.3v.9l1-.1v-.8l1,0v.8l1,.3v-.9l1-.5v1l1-.1v-1.1l1,.2v1.2l1,.1v-.8l1,.4v1.2l1-.2v-1l1,.1v1.7l1-.5v-1.1l1,.1v.8l1,.5v-.9l1,0v1.2l1,.1v-.8l1-.4v1l1,.1v-1l1,.2v1.6l1-.4v-1l1-.1v.8l1,.4v-1.2l1,.3v.9l1,.2v-.7l1,.2v.8l1,.5v-1.5l1,.1v1.1l1-.1v-1.1l1,.2v.9l1-.2v-.8l1,.1v1.1l1,0v-1l1,.1v.9l1,.1v-.9l1-.4v.6l1,.5v-1.2l1,.2v.7l1,.2v-.9l1,.2v.8l1,.3v-1.4l1,.6v.9l1-.1v-1.1l1,.2v.9l1,.5v-.9l1-.2v1.2l1,.3v-1.2l1,0v.9l1,0v-.8l1,.3v.9l1,.4v-1l1,0v.7l1-.1v-1.3l1-.1v1.2l1,0v-.9l1,.2v.8l1,0v-1l1,.1v.8l1,.2v-1.2l1,.2v1l1,.2v-1l1,0v1.2l1,.1v-1.2l1,.2v1.4l1,.2v-.9l1-.2v.8l1-.2v-1l1,.3v1l1,.3v-1.3l1,0v.8l1,.3v-1l1-.4v.9l1,.2v-.8l1-.3v1.1l1,.2v-.7l1-.4v1.7l1-.4v-1l1,.4v.9l1,0v-.8l1,0v.6l1-.2v-.7l1-.2v1l1-.1v-.8l1,.4v.9l1-.2v-1l1,.3v1.2l1-.2v-1.2l1,.2v1l1-.5v-1l1,.3v1l1,.4v-.9l1,.1v1l1,.2v-1.2l1,.4v1.2l1,.1v-1l1,.1v1l1-.3v-.9l1,.3v1.2l1-.2v-.7l1-.6v1.3l1,.6v-1.1l1-.2v1l1,.6v-1.1l1,.2v.6l1,.2v-.8l1,.6v1.2l1-.1v-1.2l1,0v.9l1-.1v-.9l1,.2v1l1,.6v-1.5l1,.5v.9l1-.2v-.7l1,0v.8l1,.1v-.9l1,.9v.7l1,.3v-.8l1-.5v2.3l1,6.7v-4.2l1,1.5v5l1-2.4v-6.1l1-1v10.8l1-4.6v-3.8l1,2.4v5.3l1,1.5v-3l1-2.1v6l1-.6v-3.4l1,.8v3.6l1,.4v-4.4l1-1.8v5.6l1-.2v-5.3l1-.1v3.1l1-.8v-3.4l1,4.1v3.4l1-.9v-4.8l1-2.2v4l1,2.4v-3.5l1-.1v3.9l1,.6v-4.5l1-.4v6.1l1,4.7v-4.5l1,.5v5.7l1-2.1v-3.3l1-4.3v6.1l1-2.2v-3.2l1-1.6v5l1,1v-5l1,2.3v3l1-.3v-3.7l1-1.7v4.6l1,5.5v-9.5l1,2.1v5.1l1,5.9v-7.8l1,.7v3.8l1-2.5v-3.8l1,.7v3.5l1,3.7v-4.7l1,.2v3l1-.3v-3.7l1,1.3v2.9l1-.5v-3.7l1-2.7v2.9l1-2.5v-2.2l1,1.8v5.8l1-1.2v-3.3l1,.8v3.4l1-1.3v-4.2l1-1.3v4.4l1-.3v-3.2l1,1.3v3.7l1,.6v-3.9l1-1.1v5.3l1,2.4v-3.2l1,1.4v4.5l1,.4v-4.8l1,1.1v4.2l1,1.8v-3.6l1,.2v7.4l1-3.5v-5.4l1,.1v4.4l1,3.8v-3.9l1,2.3v3.1l1-5.1v-3.6l1,4.2v2l1,1.8v-4.1l1-.4v3.6l1,1.9v-6.6l1,.6v6l1,0v-4.4l1,.7v7.6l1-5v-2.9l1-.7v4.2l1,.5v-3l1,.8v6l1-3.4v-2.9l1,.1v4.4l1,5.3v-4.2l1-1v3.9l1,.4v-4.5l1-.5v3.3l1,1.6v-3.8l1,.2v5.7l1-3.3v-2.3l1-1.2v3.2l1,.7v-3.2l1-.6v3.2l1,1.1v-4.3l1-.3v5.1l1-.4v-2.3l1-1.7v4.8l1,1v-4l1-3.2v6.8l1-.7v-7.9l1,4.5v7.5l1-3.4v-3.4l1-2.8v5.9l1,2v-2.3l1,.6v4.5l1-.1v-3.6l1-.1v4.1l1,2.5v-3.9l1-3.3v6.3l1,.6v-5.6l1,1.4v4.5l1-4.5v-2.1l1-3.9v5.7l1,.7v-4.1l1,3.5v3.9l1,1.5v-3.8l1-.4v9.5l1-5.8v-4.5l1,3.9v4l1,.3v-3.4l1,.4v5.9l1,.2v-4.9l1-.9v4.1l1,1.5v-5.7l1,3.9v3.8l1-3.3v-3.3l1-.2v4.2l1,1.1v-3.7l1,1.9v3.3l1,.4v-5.1l1,2.7v2.6l1,1.7v-4.5l1,.3v8.3l1-3.8v-5l1,1.2v8.9l1-4.6v-6.2l1,1v6.5l1,4.2v-11.3l1-1.7v4.7l1-5.7v-2.8l1-1.1v5.2l1-.8v-3l1,.3v4l1-.3v-3.7l1,3v1.8l1,.4v-4.9l1-2v7.1l1-4.9v-3.5l1,1.3v4.8l1,1.5v-7.1l1-3.4v4.7l1,0v-5.4l1,2.7v3.1l1,2.3v-4.1l1-1.5v4.4l1-2.5v-3.6l1,1.2v3.6l1,3.1v-2.5l1,1.6v2.4l1-.9v-3.4l1,1.4v4.2l1,3.3v-5.3l1,.9v6.1l1-3.7v-2.9l1,.3v4.8l1,5.7v-7.9l1,.8v4.3l1,6.9v-9.4l1,1.5v4.9l1,2.9v-9.7l1,3.6v6l1,2.2v-7.3l1-1v3.6l1,0v-3l1-.6v3.1l1-.5v-3l1-2.6v3.1l1-1.8v-1.9l1-.9v2.5l1,1.5v-3.8l1-2.2v7.4l1-4.4v-4.9l1-2.4v6.2l1-2v-2.4l1-.7v2.5l1,.6v-2.3l1-1.7v4.5l1-2.1v-4.9l1-.6v3.1l1,2.3v-3l1,0v2.6l1-2.1v-3.8l1,2.1v2.7l1,3.7v-3.9l1,.3v4l1-2.5v-3.8l1-.7v3.9l1,1.8v-4.3l1-1v7.3l1,4.3v-9.5l1,2.6v4l1-1.4v-3.7l1,1.5v8.8l1-6.7v-3.5l1-1.5v4.7l1,2v-3.4l1-1.7v3.8l1-.9v-5l1,2v3.8l1-.9v-2.8l1-1.1v2.8l1,.5v-5.4l1,4.3v3.8l1-.9v-4.4l1-3v6.6l1,4.4v-9.4l1-2.7v5.3l1,4.5v-7.6l1,.7v4.5l1,.2v-4.1l1-2.4v4.8l1,3.3v-5.9l1,4.1v3.3l1-2.4v-3.2l1-1.4v2.8l1,2.7v-6.4l1,1.3v4.6l1-.7v-4l1-1.9v5.9l1-1v-3.5l1,3.5v2.5l1,1v-8.1l1,1.9v7.6l1-1.4v-4.4l1,2.2v4.7l1,0v-3.2l1,.3v8.7l1-.1v-9.9l1,.6v3.9l1-2.6v-2.4l1-.5v4.9l1-.7v-3.5l1,.5v3.1l1-.7v-3.2l1-2.6v4.8l1,1.2v-5.8l1-1.3v3.4l1-.3v-2.4l1-.6v4.5l1-.9v-3.7l1,.4v3.6l1,1.4v-3.7l1-1v3.6l1-1.2v-1.9l1-1.2v3.2l1,1.3v-5.9l1,1.8v2.8l1,1.4v-3.4l1,0v2.5l1,3.4v-6l1-.4v8.5l1-4.1v-6l1-1.6v8.6l1-2.3v-8.2l1,4.2v3.1l1,2.7v-5l1,2.7v7.6l1-1.8v-2.2l1-2.4v2.3l1,.9v-6.2l1,2.8v4.6l1-1.2v-2.4l1,.6v2.5l1,2.2v-3.6l1-.1v4.2l1-1.8v-3.8l1-1.3v3.7l1,.1v-5l1,1.5v4.6l1,2v-3.5l1-2.2v3.2l1,.3v-3.9l1-.2v5.3l1-3.3v-4.1l1,1.3v3.7l1,5.2v-5.2l1-.9v9.8l1-2.6v-5l1-3.8v3l1-1.8v-3.7l1,5.1v5.1l1,.2v-4.2l1-.8v5.4l1,.5v-2.9l1,.4v4.1l1-4.5v-2.8l1,.8v2.9l1,2.1v-2.6l1,2.7v3.5l1-2v-3.7l1,.4v3.8l1,1.5v-5l1-1.9v6.8l1-4.3v-3.3l1,2.9v3.8l1,.7v-5.4l1-1.4v3.7l1,1.3v-3l1-2.6v3.8l1,.2v-4.9l1,.5v6.1l1-3.8v-3.7l1-1.1v5l1,1.1v-3.2l1,.7v4.3l1-2.8v-2.2l1-2.4v2.1l1,2.1v-3.5l1,2.3v2.7l1,2.3v-7.8l1,2.1v4.4l1-1.4v-3.3l1-2.4v5.4l1-5.7v-2.4l1-1.7v3.5l1,2.9v-5.7l1,.3v7.9l1-4.2v-5.3l1,.3v3.4l1,1.1v-5.3l1,2.7v4.9l1,1.3v-2.8l1-1.8v2.7l1-1.2v-3.7l1-.8v8.7l1-5.1v-4l1-1.1v6l1-.3v-3.1l1-.9v5.3l1,4.8v-12.3l1-2.7v4.1l1-1.3v-3.4l1,.1v2.5l1,2.4v-5l1,.8v4.6l1,2.8v-2.1l1,.7v4.3l1-1.8v-4.5l1,0v2.7l1-.3v-4.1l1-.2v3.5l1,1.6v-3.2l1,1.8v3l1,2.3v-2.6l1-1.3v2.8l1,3.2v-5.2l1,0v3.1l1,5.3v-4.8l1,3.6v2.5l1-1.4v-5.2l1,.7v7.2l1,3.9v-9.4l1,1v6.4l1-8.2v-2.9l1-3.2v5.5l1,2.3v-5.4l1-1.9v5.6l1,.9v-8.1l1,2.3v8.7l1-3.2v-4.8l1-.4v3.6l1-2v-3.6l1,.4v4l1,.9v-2.5l1-2.5v4.4l1-1.2v-5.6l1,1.3v3.1l1,3.3v-2.4l1-.5v3.8l1,.9v-3.4l1,1v2.5l1,.3v-2.7l1,.6v3.1l1,1.7v-5l1-5.8v5.3" stroke="#f0c020" stroke-width="1.8"/><path d="M440.5,733.5v4.2l1-7v-1l1,.5v1.6l1-3.5v-1.1l1-2.8v1l1-2.8v-.7l1-2v1.1l1-1.8v-.7l1-1.7v1.2l1-3.1v-1.1l1-.5v.6l1-1.1v-.7l1-2.9v1.3l1-2.2v-.7l1-2.7v1.3l1-1.7v-1.7l1,1.1v1.3l1-1.6v-1.1l1-.7v.7l1-.6v-.7l1-1.5v.8l1-1.5v-.8l1-.2v1.6l1-1.9v-1.5l1-.2v.7l1-1.4v-.9l1-1.2v.7l1-1.5v-.8l1-2.1v1.1l1-1.2v-.8l1-1.2v1.2l1-1v-1.1l1-1.4v.6l1-1.5v-.9l1-2.2v1.1l1-.3v-2.1l1-.2v1l1-.7v-1l1-1.3v1.2l1,0v-1.2l1,.2v.7l1,1.2v-1.1l1,.8v1.1l1-.4v-1.2l1-.2v.7l1,1.1v-1.1l1,.2v.7l1-1.6v-.9l1-.4v.9l1-1.8v-1.1l1-.8v.8l1,.7v-1l1-1v1.2l1,.6v-1.8l1,1v1.2l1-1.2v-.7l1,.8v1.7l1-.4v-1l1,0v1.1l1,.8v-1l1,.8v.7l1-1.8v-.8l1-1.2v1.4l1-1.5v-.6l1,1v.8l1-.5v-1l1-1v.9l1-.2v-.7l1,.5v1.1l1,1v-1.3l1,1v1.1l1-1.3v-.9l1,.2v.7l1-.2v-.9l1-2.4v.7l1-1.3v-.8l1,.9v1.2l1-.9v-.8l1,.3v.9l1,.7v-1.1l1,1.4v.7l1-.3v-1.4l1,.6v.8l1-1.1v-.8l1-.5v1.3l1-.8v-.7l1-1.7v.7l1-1.2v-1.2l1,.3v.8l1,.6v-1.1l1,.4v1l1-1.1v-.8l1,.4v.8l1,.7v-1.5l1,1.6v.7l1-1.3v-1.4l1,1.4v.7l1,.4v-.8l1,.2v.6l1,1v-1.4l1,1.9v1.1l1-1.2v-1.3l1,1.4v1.1l1-.3v-.9l1-.3v.7l1-1.5v-.7l1,.2v.7l1-.1v-1.3l1,.3v1.1l1-.3v-.7l1-.5v.6l1,.6v-.9l1,.2v.7l1,.5v-1.3l1-.1v1.1l1,.3v-.9l1-.4v.9l1,.3v-1.2l1-.3v.9l1,.7v-1.2l1,.4v1.3l1-.3v-.6l1-.3v1l1,.2v-1.3l1,.1v.6l1-.4v-.7l1-.2v.9l1,.4v-.9l1,.5v1.2l1,.2v-1.1l1,.4v1l1,.5v-.7l1,.8v1.8l1-.1v-1.4l1,.9v.9l1,.9v-1.5l1,.8v1.1l1,.4v-.6l1-.2v1.6l1,.7v-.9l1-.1v.9l1,.6v-.7l1-.1v1.3l1,.9v-1.1l1,.8v1.1l1,1v-.8l1,.6v1l1,.4v-1.1l1,.8v.8l1-.1v-.8l1,.3v.8l1,.1v-.9l1,.4v.7l1,.4v-1.1l1,.5v.9l1,.3v-1.3l1-.2v1.2l1,0v-.8l1-.6v1.3l1-.1v-.9l1,.2v.6l1,.3v-.9l1,.2v.7l1,.2v-.8l1,.7v.9l1-.4v-1.6l1,.4v1.2l1-.1v-1.1l1,.3v.8l1-.1v-1l1-.1v1.6l1,.2v-1.2l1,.7v.7l1,.4v-1l1-.3v1.3l1,.2v-.7l1-.3v.6l1,.4v-1.2l1,0v1.2l1,0v-1.2l1,.3v.9l1,.4v-.9l1-.5v.9l1,0v-.8l1,.1v.8l1,0v-1.7l1,.6v.7l1-.4v-1.2l1,.5v1.1l1-.7v-.9l1,.2v.8l1,.4v-.7l1,.1v.9l1-.3v-1.5l1,.5v.9l1,.2v-.9l1,.3v.7l1-.4v-1.1l1,.3v1l1,.5v-1.3l1,.1v1.4l1-.3v-.8l1,.2v1.3l1-.4v-.7l1-.3v1.2l1-.5v-1.3l1-.3v1l1,.6v-1l1-.1v1l1-.3v-.7l1,.2v.8l1,0v-.8l1-.2v.9l1-.5v-1.2l1-.5v1.3l1-.5v-.9l1-.4v1.4l1,.3v-1.6l1,.5v1.3l1-.3v-1.2l1,.4v.6l1,.3v-1.1l1,0v1l1-.4v-.8l1,.2v1.3l1-.1v-.6l1-.1v1.2l1-.1v-.8l1-.6v.7l1-.3v-.6l1-.1v.7l1,.7v-.9l1,.3v.8l1,.4v-.6l1-.3v1.1l1,.5v-.9l1-.2v.9l1-.4v-.8l1-.2v.8l1,.1v-.8l1,0v1.1l1,.5v-1l1-.2v1.4l1-.3v-.8l1-1.1v1.2l1-.3v-.8l1-.3v1.4l1-.2v-.9l1,.4v1l1,.2v-1.2l1-.1v1l1,.1v-1l1-.2v.9l1,.1v-.7l1,0v1.1l1-.5v-1.2l1-.3v.8l1-.1v-.7l1-.1v1.3l1,.4v-.9l1,.5v.7l1-.1v-1.1l1-.5v1l1-.7v-.6l1,0v.8l1,.8v-1.1l1,.2v1.1l1,.3v-1.1l1-.1v.8l1-.3v-1.1l1,.4v.9l1-.1v-.8l1-.1v1.5l1-.5v-1.2l1-.7v1.4l1-.1v-.8l1-.3v.8l1,.1v-1.5l1-.4v.9l1,.2v-1.3l1,.5v.7l1,.9v-1.5l1,.4v.8l1,.2v-.9l1-.7v1.1l1,.3v-1.6l1,.5v.8l1,.1v-.9l1-.2v1.4l1,.2v-1.4l1,.1v1.4l1-.2v-.7l1-.6v1.1l1,.4v-1l1,.1v.9l1,.4v-1.4l1-.5v1l1-.2v-.9l1,0v1l1,.2v-1.1l1-.1v1.1l1,.1v-.7l1,.1v1l1-.4v-.6l1-.3v1.2l1,0v-1.4l1,.6v.9l1-.1v-1.1l1-.2v1l1-.1v-.8l1,.4v1l1-.2v-1l1,.4v1.3l1-.3v-.8l1,0v.9l1-.1v-.6l1-.1v.7l1-.6v-1.3l1,.4v1.1l1,.2v-.9l1,.7v.9l1-.1v-1l1-.9v1.4l1-.2v-1.1l1,.4v1.1l1,.5v-.7l1-.8v.9l1-.3v-1.5l1,0v1.1l1,0v-.8l1-.2v1l1,.6v-1l1,.2v.8l1,.1v-.9l1-.3v1l1,0v-1.1l1,.7v.7l1,.1v-.9l1,.4v.9l1,.3v-.8l1,.4v.7l1,.2v-.9l1-.4v1.1l1,.4v-1.2l1-.5v1l1-.2v-1.1l1,.4v.6l1,.3v-1.2l1-.6v.7l1,.2v-.9l1,.4v.7l1,.7v-.8l1,.2v.7l1,.5v-.7l1,.4v1.2l1,.1v-1.2l1-.5v1.1l1-.8v-.7l1,0v1l1-.3v-1.2l1,.4v.6l1,.5v-.9l1-.2v1.2l1,.2v-.5l1-.2v1.1l1,.5v-1.1l1-.3v1.2l1,.7v-1l1-.1v1l1-.2v-.6l1-.1v.6l1,.4v-1.4l1-.3v.8l1-.1v-.6l1-.3v.7l1,.1v-1.3l1,.6v1.3l1-.2v-.9l1-.2v.6l1,.4v-1.1l1-.1v1l1,.5v-1l1-.5v.8l1-.3v-1l1,.5v1.2l1,.3v-1.1l1-.2v1.2l1,.5v-.7l1,0v1.1l1-.2v-.8l1,.1v1l1-.5v-.6l1-.2v1l1-.2v-1.2l1,.1v.9l1,.1v-1.4l1-.4v1.5l1-.1v-.7l1,.4v.6l1,.3v-.6l1-.3v.7l1-.1v-1.2l1,.2v1.2l1-.5v-.8l1-.6v1.3l1,.1v-.9l1,.3v1l1,0v-.7l1-.9v1.4l1,.4v-.9l1,.1v1.3l1-.1v-.8l1-.5v1.1l1-.6v-.8l1,.4v.7l1,.4v-.8l1-.1v1l1,0v-.8l1-.1v.7l1,.2v-.8l1,.1v.8l1,.1v-1.3l1,.3v.7l1,0v-.7l1-.2v1.1l1-.4v-.6l1-.4v1l1-.4v-.7l1,.1v.8l1-.2v-.8l1,.3v1.1l1-.7v-1l1,.8v1.3l1,0v-.8l1,.3v.8l1-.4v-.7l1-.7v.8l1-.2v-1.8l1,1.1v.8l1,.8v-1.2l1,.4v1.5l1-.7v-1l1-.2v.7l1-.2v-.7l1-.4v1.2l1-.2v-1.2l1,.5v1l1-.3v-1.1l1-.3v1.5l1-.8v-.7l1-.6v1.9l1,.4v-2l1,1.1v1.2l1-.1v-.8l1-.3v1l1-.3v-.8l1,.2v1l1,.4v-.8l1,.4v1.1l1-.3v-1l1-.1v1l1-.6v-.7l1-.2v.9l1,0v-1.1l1,.1v1l1-.3v-1.1l1,0v1.1l1-.1v-1l1,.4v1l1-.3v-.8l1-.2v1.2l1-.6v-.8l1-.2v.8l1,.3v-1.3l1,.5v1.2l1,.8v-1.9l1-.3v1.1l1-.2v-1.3l1,.5v.6l1,.5v-.9l1,.6v.8l1,.4v-1l1,.2v.7l1,.3v-1.1l1-.1v1.2l1,0v-.7l1,.1v1.1l1-.2v-1.2l1,.2v.9l1-.2v-.9l1,.2v.7l1,.5v-.9l1,.4v1l1-.5v-1.2l1,.3v.8l1,.2v-1l1,0v1l1-.2v-1.1l1-.3v1.3l1,.1v-1.4l1,0v.7l1,.8v-1.1l1,.2v.7l1,.3v-1.4l1,.6v.7l1,.3v-1.2l1,.2v1.3l1-.3v-1.1l1,.6v.7l1,.2v-.9l1-.1v1l1-.3v-1l1,0v1.1l1,.9v-1.5l1,.5v1.8l1-.6v-1l1-.6v.9l1,.4v-1.1l1,.5v.8l1,.1v-.7l1-.2v.8l1,.2v-1.1l1,1v.8l1-.1v-.9l1-.3v.8l1-.3v-1l1,.4v1.1l1,.1v-1.1l1-.4v1l1-.1v-1.2l1,.2v1.6l1-.2v-.7l1-.2v.8l1,.2v-1.3l1,0v.6l1,1v-1.3l1-.1v.8l1,.6v-1l1-.5v.9l1,.3v-.6l1-.3v.7l1,.2v-1.1l1,.7v.6l1,.3v-.9l1,.8v.7l1-.1v-.7l1-.3v.6l1,.7v-1.3l1-.7v.7l1-.2v-.6l1,.6v.8l1,.3v-.7l1-.5v1.1l1-.6v-.8l1,.4v.8l1,.5v-1.9l1,.5v1.3l1-.1v-.8l1,.3v.9l1,.4v-1l1,.1v1l1-.3v-.8l1-.4v1.1l1,.5v-.5l1,.1v.6l1,.3v-1l1,.1v.8l1,.7v-.9l1,.2v1.5l1-.8v-.8l1-.4v1l1,.4v-.9l1,.2v1.2l1-.7v-.8l1-.1v.7l1-.4v-.9l1,.3v1.2l1,.8v-1.2l1,.5v1l1-.1v-.8l1,.3v.7l1,.2v-.8l1-.1v.6l1-.2v-.8l1,.1v1.6l1,.3v-1.3l1,.3v1l1-.1v-.8l1-.5v.8l1,.4v-.9l1,.4v.8l1-.5v-1l1,.3v.8l1,.3v-1.3l1,.9v.7l1-.3v-.6l1-.4v1.4l1,.4v-1.3l1,.4v1.3l1,0v-.8l1-.5v1l1-.4v-.7l1,.2v.7l1-.2v-1.3l1,.9v1l1-.5v-1.3l1,.7v1l1-.5v-.6l1,.2v1l1,.3v-1.3l1-.3v1.4l1,.5v-1.1l1-.1v.8l1-.2v-1.2l1,.7v.8l1-.2v-.7l1-.8v1.5l1-.9v-.8l1,.3v.8l1,.8v-1.5l1-.3v1.1l1,.3v-1.2l1,.1v.9l1,0v-.8l1-.3v1.7l1-1.2v-.9l1,.3v.8l1-.2v-.7l1-.2v1.1l1,.1v-.8l1-.3v.9l1-.1v-.6l1-.3v.8l1,.2v-1.2l1-.1v1.7l1-.6v-.9l1-.2v1.1l1,.2v-1l1-.1v.7l1,.7v-.9l1,.1v.7l1-.4v-.8l1-.7v.7l1,.2v-.8l1,.5v1.2l1-.4v-.6l1,.4v.7l1,.6v-1.6l1,.1v.9l1-.4v-.9l1,.1v.9l1,.3v-.8l1,.5v.8l1-.2v-.8l1,.1v.9l1-.1v-1l1-.2v1.1l1-.5v-.8l1-.7v1.4l1,.1v-1.2l1,.4v1.3l1,.5v-.8l1,.7v.6l1-.2v-1.4l1,.7v.9l1,.1v-.9l1,.1v.7l1,0v-1.3l1,1v.8l1,.3v-.5l1,.5v.6l1,.3v-.9l1-.4v1.3l1-.5v-.7l1-.1v.9l1,.2v-1l1-.3v.9l1,.2v-1l1,.5v.9l1,.3v-1.1l1,.6v.9l1-.3v-1.2l1,.1v1.1l1-.3v-.9l1-.1v1.4l1,.3v-.7l1,.2v1.4l1-.7v-.5l1-.8v1.4l1,.2v-.9l1-.3v1.4l1-.9v-1l1,.4v1l1-.1v-.6l1-.3v1.2l1,.2v-1.1l1-.4v1.8l1-.3v-.7l1-.7v.8l1,.1v-.8l1,.1v.9l1,.5v-.9l1-.3v1l1,.1v-.8l1-.3v.8l1,.9v-1.6l1,.7v.9l1,.4v-1.1l1,.1v1.1l1-.2v-1l1-.6v.8l1,.1v-.9l1,.3v.8l1,.2v-1.1l1,.1v1l1,.3v-1.5l1,.1v.6l1,.1v-1l1,0v.6l1,.2v-.9l1,.1v.6l1-.2v-.7l1,0v.9l1,.5v-1l1,.3v.9l1,0v-.7l1-.3v1l1,.6v-1.4l1,0v1.2l1,0v-.5l1-.4v.8l1,.6v-1.2l1,1v.7l1,.6v-.9l1-.2v.8l1-.6v-1l1-.4v.8l1,.5v-.9l1,.6v.8l1,.2v-1.1l1-.4v1l1-.1v-.6l1,.3v.8l1-.1v-.8l1,0v1l1-.4v-1.1l1,.3v1.4l1,0v-1l1,.2v1l1,0v-.7l1,.3v1l1,.2v-.9l1,0v.7l1,.4v-1.3l1,.5v.8l1-.4v-.8l1-.6v1.1l1,.2v-1.1l1,.8v1l1,.2v-.7l1,0v1.1l1,.4v-1.3l1,.5v1l1-.2v-.8l1,.2v.8l1-.5v-.9l1,.6v.6l1,.2v-.8l1,.4v.5l1,.3v-.7l1-.2v.8l1-.3v-.9l1-.3v.6l1,.8v-1.1l1,.4v1l1,.1v-1.1l1,.3v.9l1-.1v-1.2l1,.7v1.4l1-.5v-.7l1-.4v1.4l1-.4v-1.2l1,.5v.9l1,.3v-1.1l1-.1v.9l1,.2v-1.3l1,.1v.8l1,.7v-1.1l1,.3v.8l1,.2v-.7l1-.5v1l1-.3v-.9l1-.4v.9l1,.1v-1.1l1-.3v.9l1,.4v-1.1l1-.3v.6l1,.8v-1.6l1,.2v.7l1,.9v-1.5l1,.2v1l1-.5v-.9l1-.1v1l1,0v-.8l1,.2v.7l1-.1v-.7l1,.2v1l1,.1v-.9l1,.6v.9l1,.2v-.9l1,.2v1l1,.6v-1.1l1-.3v1l1,.2v-1l1-.4v1l1-.2v-1l1-.4v1.1l1,.2v-1.1l1,.3v.5l1,.1v-.9l1-.5v1.4l1-.4v-.9l1,.3v1.4l1-.5v-1l1,.3v1.1l1,.2v-1l1-.2v1.2l1-.8v-.8l1,.1v.8l1-.4v-.7l1,.8v.7l1-.4v-1l1,.4v1l1,0v-.9l1,.4v.7l1,.5v-1.1l1,.2v1.2l1,.2v-1.2l1-.4v1.3l1-.2v-1l1,.6v.8l1-.7v-.7l1,.1v1l1,.1v-.9l1,.3v.5l1,.4v-1l1-.3v.9l1,.4v-1.1l1-.3v.9l1,.6v-.7l1,.1v1.7l1-.4v-1.4l1-.3v1.1l1,0v-1.2l1-.3v1.1l1,.6v-1.1l1,.2v1l1,.3v-.8l1,0v1l1-.4v-1l1,0v.8l1,.4v-.8l1,.7v.6l1,.4v-1.3l1,0v.9l1,.3v-1.3l1,.1v.7l1,.1v-.7l1,.1v1l1,0v-.8l1-.3v.6l1,.7v-1.4l1,.2v.7l1,.3v-1.4l1,.6v.5l1,.3v-.9l1,.2v.9l1-.2v-.7l1,.1v.8l1,.4v-.8l1-.3v.9l1-.2v-.8l1,.3v.7l1,0v-.8l1-.1v1.3l1-.7v-.6l1,.2v1l1,.9v-1.2l1,.5v.9l1,.5v-.9l1,.2v.9l1,.1v-1.4l1,.3v.7l1,.2v-1.2l1,.3v1.3l1-.1v-.8l1,.1v.7l1,0v-.7l1-.4v1.2l1,0v-.8l1-.6v1.1l1,0v-1l1,.1v.7l1,.6v-1.1l1,.1v.9l1,0v-.8l1,.1v.9l1,.6v-1l1,.1v1l1-.2v-1l1-.2v1l1-.2v-1.2l1-.2v1.1l1,1v-1.4l1-.3v1.3l1,.4v-1l1,.3v.8l1-.1v-1.1l1,.1v1l1-.6v-.8l1-.1v1l1-.2v-1.2l1,.3v.7l1,.4v-.8l1-.1v.7l1,.1v-.6l1-.9v2l1-.4v-.7l1-.3v1.1l1,.5v-.9l1,.4v1.1l1-.1v-1.1l1,.2v1.1l1-.2v-1.3l1,.7v.9l1-.2v-.8l1-.1v.7l1,.1v-1.3l1,.4v1l1,.5v-1.1l1,.4v.8l1-.2v-.7l1,.1v1.1l1-1v-.6l1-.5v1.2l1-.6v-.7l1,.2v1l1,.7v-1.4l1,.3v1.3l1-.5v-.6l1-.7v1.7l1-.1v-1.1l1,.2v.9l1,.8v-1.4l1,.3v.7l1,.4v-.9l1,.6v1l1,.7v-1.6l1,.4v1.1l1,.1v-1.3l1,1v1l1,.2v-1l1-.1v.9l1,.3v-1l1,.5v1.5l1-.2v-.8l1,.2v1.2l1-.7v-1l1,.1v.7l1,.1v-.6l1,.5v.8l1,.5v-1.4l1-.6v1.2l1,.1v-.9l1,.4v.8l1,.8v-1l1-.6v1.3l1-.2v-1.4l1-.1v1.3l1,.1v-1.2l1,.5v1.1l1-.3v-1.1l1,.2v1.3l1,.5v-.8l1,.2v1.1l1,6.7v-2.7l1,.6v4.3l1,13.8v-19l1,3.5v30.3l1-24.2v-7.7l1-.1v2.3l1,.3v-2.9l1,.4v2.6l1,4.9v-7.3l1,2.9v25.4l1-6.6v-17.8l1-.5v5.7l1,9.3v-15.5l1-1v20.4l1-14.5v-5.9l1,1.4v6.9l1,18.2v-23l1-2.4v7.3l1-1.7v-3.1l1,.1v2.8l1-1.1v-2.9l1-1.1v3.3l1,.1v-2.5l1,.2v2.1l1,1.8v-2.7l1,1.9v5.2l1,9.5v-15.2l1,.5v5.3l1-3.4v-2.3l1-.3v7.2l1,25.3v-29.7l1,2.1v36.7l1-4.6v-33.4l1-.7v7.2l1,.1v-6.9l1,3.8v28.7l1-25.7v-6.8l1-2.6v7.5l1,16.5v-20.8l1-1.7v6.1l1-2v-2.1l1,.6v6.6l1,12.7v-18.6l1,1.1v4.9l1-3v-2.4l1-1.4v3.6l1,.8v-3.3l1,1.8v2.5l1,.7v-3.2l1-1.2v2.5l1,2.5v-1.8l1-.2v7.7l1,12.2v-20.5l1-1.2v8.9l1,13.6v-19.5l1-2.2v6.3l1-.5v-4.4l1,.5v13.1l1,3.7v-16.4l1,1.1v7.6l1,6.5v-12.7l1-3v5.1l1-1.8v-2.5l1,.3v4.3l1,11.2v-13.8l1-.8v6.5l1,10.8v-13.6l1,1.9v22.2l1-18.7v-6.3l1,3v2.4l1,.3v-3.2l1-3.4v4.7l1,9.4v-11.7l1,.3v5.1l1-1.8v-1.8l1-1.2v2.5l1,0v-1.9l1,.3v5.7l1,14v-18.7l1,.9v26l1-21.1v-6.3l1-.6v3.6l1,4.5v-7.3l1,3.7v23.9l1-16.5v-8.8l1,2.1v16.9l1-12.5v-5.5l1-2.4v4l1,1.6v-3.5l1,1.9v11.6l1-5.9v-6.3l1,1.3v12.9l1-9.1v-5l1-.2v3.3l1,1.1v-3.2l1,2.3v2.4l1,.9v-2.1l1,.6v6l1,16.2v-21.7l1-1.3v17.1l1-12.3v-4.1l1-1.2v2.3l1-.5v-3.4l1,3.2v2.2l1,5.9v-7.5l1,2.5v21.2l1-18.5v-6.1l1,1.3v2.6l1-.3v-2.6l1-.9v2.7l1,3.1v-3.5l1,1.2v1.8l1-.8v-2.2l1,2v4.6l1-2v-3.1l1-.1v7.8l1,16.1v-20.6l1-3v8.3l1-1.8v-2.9l1,.8v7l1,17.7v-22l1,.4v18.7l1-12.7v-8.4l1,1.8v17l1-12.2v-5.7l1,.2v2.7l1-.3v-2.3l1-1.6v2.9l1,1v-4.5l1,1.7v12.1l1,3.2v-14.8l1-.5v4.3l1,.1v-2.8l1-1.3v3.6l1,2.5v-6l1,.1v17.7l1-12.9v-6.2l1-3.1v2.8l1,.6v-4.3l1-1.9v8.6l1,21.6v-27.1l1-1v6.8l1-2.5v-5.9l1,2.1v18.2l1-13.7v-5.3l1-1.9v6.9l1,13.2v-17.3l1-1v5.2l1-.9v-5.1l1,3.2v12.2l1-6.8v-6.3l1,4v2.9l1,.4v-2.3l1,.3v2l1,2.5v-6.4l1,3.6v24.5l1-18.7v-7.4l1-.4v2.7l1,.6v-2.2l1,0v2.8l1,0v-2.1l1,.9v7.9l1,25v-27.1l1-3.8v12.3l1,12.1v-24l1-1.2v7.6l1-1.4v-4.1l1-.7v4.2l1,.8v-4l1-1.6v2.5l1,4.1v-6.9l1,1.5v20.8l1-14.6v-11l1,4.6v25.1l1-8.1v-18.2l1-3.3v7.7l1,7v-12.6l1-1v4.1l1-1.8v-2.3l1-.8v5.7l1,19.3v-23.6l1-1.1v18.5l1-12.6v-8.1l1,1.1v12.9l1-10.4v-4.8l1-.6v3.3l1-1.5v-2.3l1-2.1v2.5l1,1.9v-4.5l1-.4v3.2l1-2v-2.3l1,2.7v2.3l1,1.7v-1.7l1-1.2v7.1l1,18.6v-24.8l1-2.2v6.7l1-3.5v-2.5l1-.2v3.1l1,5v-6.5l1,3.2v28.8l1,2v-30.5l1-4.3v9.1l1-4.6v-3.9l1,.9v1.9l1,1.2v-2.2l1,.2v4.5l1,12.4v-14.4l1,2.1v19.4l1-15v-6.2l1-1.2v2l1,4.5v-5.2l1,.8v20l1-17.8v-5.8l1-.7v3.2l1,3.3v-7.4l1,4.7v21.8l1-14.4v-7.2l1,.8v2.4l1-2.2v-2.3l1-2v1.9l1-.3v-2.1l1-.8v3.2l1,.1v-3.1l1-.1v2.6l1,3.3v-6.1l1,4.2v24.2l1-3.9v-20.2l1-3.1v6.3l1-4.1v-3.6l1,2.3v2.7l1-.2v-3.5l1,1.5v6.8l1,19.9v-26.8l1-2.3v7.3l1-4.2v-2.9l1,.3v2.5l1-.1v-2.4l1,1v1.9l1,1.4v-3.7l1,.1v2.5l1,4.1v-6.8l1,4.7v20.2l1-2.1v-20l1-4.1v4.8l1-1.5v-3.7l1-.8v3.3l1-1.6v-1.6l1,.3v5.4l1,15.1v-18.8l1,1.1v9.7l1,12.1v-18.5l1-1v4.9l1-2.3v-2l1-.3v2.5l1-1.8v-2.1l1-.9v2.1l1,1.6v-3.3l1,.6v2.6l1-.3v-2.8l1,2.1v2.4l1,.1v-3.6l1,.2v7.3l1,14.4v-20.5l1,.5v8.5l1,10.7v-18.2l1-1.3v6.3l1,1.2v-8.1l1,3.9v25.1l1-7.5v-18.3l1-2.4v4.7l1,2.5v-7.3l1,2.7v24.5l1-.6v-23.6l1,1.4v26.4l1-19.6v-8.8l1-.4v11.7l1-7.5v-3.7l1-.3v3.2l1,2.4v-6.6l1,3.7v18.1l1-13.4v-6.7l1-.5v2.6l1,4.6v-6.3l1,3.3v28.3l1,7.9v-38.4l1,1.4v29.6l1-22.8v-6.5l1,.9v2.4l1,1.8v-2.5l1-1.1v2.6l1,4.9v-6.8l1,.9v22l1-11.8v-11.4l1,3.4v24.2l1-20.2v-6.8l1-2.3v3.2l1-1.6v-1.7l1-.1v2.9l1,5.7v-7.8l1,1.8v26.9l1-21.7v-6.7l1-1.6v2.8l1,1.7v-2.4l1-1.9v4.5l1-2.5v-1.8l1,.1v4.6l1,10v-13.5l1-.8v9.1l1,20.6v-26.3l1-2v18.9l1-3.5v-17.8l1-2v5l1,1.9v-4l1-.1v2.2l1,2.7v-7.1l1,1.3v18.8l1-15.8v-7l1-.2v5l1,11.2v-13.8l1-3.2v7.3l1,8.1v-15.8l1,.3v5.5l1-2.9v-3.3l1-1.2v2.8l1,3.5v-5.5l1,2.4v19.4l1-15.4v-6.7l1,2.7v2.1l1,4.2v-7.1l1,3v21.4l1-20.4v-7.1l1,.7v2.9l1-.2v-2l1-2.3v5.4l1,6.9v-12.3l1,0v4l1-.4v-3.8l1,3v7.8l1,23.6v-30.7l1-3.7v28.3l1,5.3v-29.3l1-1.9v7.6l1-6.2v-3.4l1,1.1v3.5l1,.1v-3.3l1,.9v2.5l1,3.6v-4.4l1,3.5v6.1l1,22.1v-25.6l1-3v10.3l1,12v-19.9l1-3.6v7.3l1-6v-2.7l1,2.3v2.6l1-.9v-2.8l1-.3v2.8l1,1v-3.2l1-1.3v6.1l1,9.5v-15.2l1-1v4.9l1-.7v-3l1-.9v3.1l1,.7v-3.6l1,1.2v2.9l1,2.3v-5.9l1,1.5v22.6l1,2.2v-23.9l1-3.9v6.7l1-3.6v-3.8l1,2.2v2.2l1-.4v-3.1l1-2.5v9.3l1,25.7v-30.7l1-2.8v31.2l1-26.6v-7l1,.1v2.4l1,.8v-3.2l1-.2v3.1l1,2.4v-5.5l1,2.5v18.2" stroke="#7828c8" stroke-width="1.9"/></g><path d="M1057.5 618V950M1058.5 619V950" stroke="#000" stroke-width="1" stroke-dasharray="1 1" shape-rendering="crispEdges"/><path d="M439.5 586V950.5H1858" stroke="#2a2a2a" stroke-width="1" fill="none"/><path d="M1804.5 586V950.5" stroke="#2a2a2a" stroke-width="1" fill="none"/><path d="M439.5 583l-5.5 10.5l5.5-3l5.5 3z" fill="#222"/><path d="M1804.5 583l-5.5 10.5l5.5-3l5.5 3z" fill="#222"/><path d="M1862 950.5l-10.5-5.5l3 5.5l-3 5.5z" fill="#222"/><path d="M431.5 617.5H439.5" stroke="#2a2a2a" stroke-width="1" fill="none"/><path d="M435.5 639.5H439.5" stroke="#2a2a2a" stroke-width="1" fill="none"/><path d="M435.5 661.5H439.5" stroke="#2a2a2a" stroke-width="1" fill="none"/><path d="M431.5 684.5H439.5" stroke="#2a2a2a" stroke-width="1" fill="none"/><path d="M435.5 706.5H439.5" stroke="#2a2a2a" stroke-width="1" fill="none"/><path d="M435.5 728.5H439.5" stroke="#2a2a2a" stroke-width="1" fill="none"/><path d="M431.5 750.5H439.5" stroke="#2a2a2a" stroke-width="1" fill="none"/><path d="M435.5 772.5H439.5" stroke="#2a2a2a" stroke-width="1" fill="none"/><path d="M435.5 795.5H439.5" stroke="#2a2a2a" stroke-width="1" fill="none"/><path d="M431.5 817.5H439.5" stroke="#2a2a2a" stroke-width="1" fill="none"/><path d="M435.5 839.5H439.5" stroke="#2a2a2a" stroke-width="1" fill="none"/><path d="M435.5 861.5H439.5" stroke="#2a2a2a" stroke-width="1" fill="none"/><path d="M431.5 883.5H439.5" stroke="#2a2a2a" stroke-width="1" fill="none"/><path d="M435.5 906.5H439.5" stroke="#2a2a2a" stroke-width="1" fill="none"/><path d="M435.5 928.5H439.5" stroke="#2a2a2a" stroke-width="1" fill="none"/><path d="M431.5 950.5H439.5" stroke="#2a2a2a" stroke-width="1" fill="none"/><path d="M439.5 950.5V959.5" stroke="#2a2a2a" stroke-width="1" fill="none"/><path d="M496.5 950.5V955.5" stroke="#2a2a2a" stroke-width="1" fill="none"/><path d="M553.5 950.5V955.5" stroke="#2a2a2a" stroke-width="1" fill="none"/><path d="M610.5 950.5V955.5" stroke="#2a2a2a" stroke-width="1" fill="none"/><path d="M667.5 950.5V959.5" stroke="#2a2a2a" stroke-width="1" fill="none"/><path d="M723.5 950.5V955.5" stroke="#2a2a2a" stroke-width="1" fill="none"/><path d="M780.5 950.5V955.5" stroke="#2a2a2a" stroke-width="1" fill="none"/><path d="M837.5 950.5V955.5" stroke="#2a2a2a" stroke-width="1" fill="none"/><path d="M894.5 950.5V959.5" stroke="#2a2a2a" stroke-width="1" fill="none"/><path d="M951.5 950.5V955.5" stroke="#2a2a2a" stroke-width="1" fill="none"/><path d="M1008.5 950.5V955.5" stroke="#2a2a2a" stroke-width="1" fill="none"/><path d="M1065.5 950.5V955.5" stroke="#2a2a2a" stroke-width="1" fill="none"/><path d="M1122.5 950.5V959.5" stroke="#2a2a2a" stroke-width="1" fill="none"/><path d="M1178.5 950.5V955.5" stroke="#2a2a2a" stroke-width="1" fill="none"/><path d="M1235.5 950.5V955.5" stroke="#2a2a2a" stroke-width="1" fill="none"/><path d="M1292.5 950.5V955.5" stroke="#2a2a2a" stroke-width="1" fill="none"/><path d="M1349.5 950.5V959.5" stroke="#2a2a2a" stroke-width="1" fill="none"/><path d="M1406.5 950.5V955.5" stroke="#2a2a2a" stroke-width="1" fill="none"/><path d="M1463.5 950.5V955.5" stroke="#2a2a2a" stroke-width="1" fill="none"/><path d="M1520.5 950.5V955.5" stroke="#2a2a2a" stroke-width="1" fill="none"/><path d="M1577.5 950.5V959.5" stroke="#2a2a2a" stroke-width="1" fill="none"/><path d="M1633.5 950.5V955.5" stroke="#2a2a2a" stroke-width="1" fill="none"/><path d="M1690.5 950.5V955.5" stroke="#2a2a2a" stroke-width="1" fill="none"/><path d="M1747.5 950.5V955.5" stroke="#2a2a2a" stroke-width="1" fill="none"/><path d="M1804.5 950.5V959.5" stroke="#2a2a2a" stroke-width="1" fill="none"/><text x="427" y="621.8" font-size="11" text-anchor="end" fill="#111">29.0</text><text x="427" y="688.4" font-size="11" text-anchor="end" fill="#111">28.2</text><text x="427" y="755.0" font-size="11" text-anchor="end" fill="#111">27.4</text><text x="427" y="821.6" font-size="11" text-anchor="end" fill="#111">26.6</text><text x="427" y="888.2" font-size="11" text-anchor="end" fill="#111">25.8</text><text x="427" y="954.8" font-size="11" text-anchor="end" fill="#111">25.0</text><text x="439.5" y="980" font-size="11" text-anchor="middle" fill="#111">17:51:55</text><text x="439.5" y="1008" font-size="11" text-anchor="middle" fill="#111">2023-10-20</text><text x="667.0" y="980" font-size="11" text-anchor="middle" fill="#111">21:11:22</text><text x="667.0" y="1008" font-size="11" text-anchor="middle" fill="#111">2023-10-20</text><text x="894.5" y="980" font-size="11" text-anchor="middle" fill="#111">00:30:44</text><text x="894.5" y="1008" font-size="11" text-anchor="middle" fill="#111">2023-10-21</text><text x="1122.0" y="980" font-size="11" text-anchor="middle" fill="#111">03:50:11</text><text x="1122.0" y="1008" font-size="11" text-anchor="middle" fill="#111">2023-10-21</text><text x="1349.5" y="980" font-size="11" text-anchor="middle" fill="#111">07:09:44</text><text x="1349.5" y="1008" font-size="11" text-anchor="middle" fill="#111">2023-10-21</text><text x="1577.0" y="980" font-size="11" text-anchor="middle" fill="#111">10:29:00</text><text x="1577.0" y="1008" font-size="11" text-anchor="middle" fill="#111">2023-10-21</text><text x="1804.5" y="980" font-size="11" text-anchor="middle" fill="#111">13:48:33</text><text x="1804.5" y="1008" font-size="11" text-anchor="middle" fill="#111">2023-10-21</text><text x="452" y="589" font-size="13.5" letter-spacing="-0.6" fill="#111">RTD</text><text x="341" y="589" font-size="13.5" fill="#111">P1</text><text x="1816" y="941" font-size="13" fill="#111">Time</text><rect x="333" y="596" width="53" height="21" fill="#efefef"/><rect x="333.5" y="600.5" width="11" height="11" fill="#fff" stroke="#d8d8d8"/><path d="M333.5 612V600.5H345" stroke="#686868" stroke-width="1.6" fill="none"/><path d="M336 605.5l2.5 3l4.5-6" stroke="#000" stroke-width="1.8" fill="none"/><text x="351" y="610" font-size="9.8" font-weight="700" fill="#111">All</text><rect x="333" y="618" width="53" height="21" fill="#efefef"/><rect x="333.5" y="622.5" width="11" height="11" fill="#fff" stroke="#d8d8d8"/><path d="M333.5 634V622.5H345" stroke="#686868" stroke-width="1.6" fill="none"/><path d="M336 627.5l2.5 3l4.5-6" stroke="#000" stroke-width="1.8" fill="none"/><text x="351" y="632" font-size="9.8" font-weight="700" fill="#111">CH1</text><rect x="333" y="640" width="53" height="21" fill="#efefef"/><rect x="333.5" y="644.5" width="11" height="11" fill="#fff" stroke="#d8d8d8"/><path d="M333.5 656V644.5H345" stroke="#686868" stroke-width="1.6" fill="none"/><path d="M336 649.5l2.5 3l4.5-6" stroke="#000" stroke-width="1.8" fill="none"/><text x="351" y="654" font-size="9.8" font-weight="700" fill="#111">CH2</text><rect x="333" y="662" width="53" height="21" fill="#efefef"/><rect x="333.5" y="666.5" width="11" height="11" fill="#fff" stroke="#d8d8d8"/><path d="M333.5 678V666.5H345" stroke="#686868" stroke-width="1.6" fill="none"/><path d="M336 671.5l2.5 3l4.5-6" stroke="#000" stroke-width="1.8" fill="none"/><text x="351" y="676" font-size="9.8" font-weight="700" fill="#111">CH3</text><rect x="333" y="684" width="53" height="21" fill="#efefef"/><rect x="333.5" y="688.5" width="11" height="11" fill="#fff" stroke="#d8d8d8"/><path d="M333.5 700V688.5H345" stroke="#686868" stroke-width="1.6" fill="none"/><path d="M336 693.5l2.5 3l4.5-6" stroke="#000" stroke-width="1.8" fill="none"/><text x="351" y="698" font-size="9.8" font-weight="700" fill="#111">CH4</text><rect x="333" y="706" width="53" height="21" fill="#efefef"/><rect x="333.5" y="710.5" width="11" height="11" fill="#fff" stroke="#d8d8d8"/><path d="M333.5 722V710.5H345" stroke="#686868" stroke-width="1.6" fill="none"/><path d="M336 715.5l2.5 3l4.5-6" stroke="#000" stroke-width="1.8" fill="none"/><text x="351" y="720" font-size="9.8" font-weight="700" fill="#111">CH5</text><rect x="333" y="728" width="53" height="21" fill="#efefef"/><rect x="333.5" y="732.5" width="11" height="11" fill="#fff" stroke="#d8d8d8"/><path d="M333.5 744V732.5H345" stroke="#686868" stroke-width="1.6" fill="none"/><path d="M336 737.5l2.5 3l4.5-6" stroke="#000" stroke-width="1.8" fill="none"/><text x="351" y="742" font-size="9.8" font-weight="700" fill="#111">CH6</text><rect x="333" y="750" width="53" height="21" fill="#efefef"/><rect x="333.5" y="754.5" width="11" height="11" fill="#fff" stroke="#d8d8d8"/><path d="M333.5 766V754.5H345" stroke="#686868" stroke-width="1.6" fill="none"/><path d="M336 759.5l2.5 3l4.5-6" stroke="#000" stroke-width="1.8" fill="none"/><text x="351" y="764" font-size="9.8" font-weight="700" fill="#111">CH7</text><rect x="333" y="772" width="53" height="21" fill="#efefef"/><rect x="333.5" y="776.5" width="11" height="11" fill="#fff" stroke="#d8d8d8"/><path d="M333.5 788V776.5H345" stroke="#686868" stroke-width="1.6" fill="none"/><path d="M336 781.5l2.5 3l4.5-6" stroke="#000" stroke-width="1.8" fill="none"/><text x="351" y="786" font-size="9.8" font-weight="700" fill="#111">CH8</text><rect x="333" y="794" width="53" height="21" fill="#efefef"/><rect x="333.5" y="798.5" width="11" height="11" fill="#fff" stroke="#d8d8d8"/><path d="M333.5 810V798.5H345" stroke="#686868" stroke-width="1.6" fill="none"/><path d="M336 803.5l2.5 3l4.5-6" stroke="#000" stroke-width="1.8" fill="none"/><text x="351" y="808" font-size="9.8" font-weight="700" fill="#111">CH9</text><rect x="333" y="816" width="53" height="21" fill="#efefef"/><rect x="333.5" y="820.5" width="11" height="11" fill="#fff" stroke="#d8d8d8"/><path d="M333.5 832V820.5H345" stroke="#686868" stroke-width="1.6" fill="none"/><path d="M336 825.5l2.5 3l4.5-6" stroke="#000" stroke-width="1.8" fill="none"/><text x="351" y="830" font-size="9.8" font-weight="700" fill="#111">CH10</text><rect x="333" y="838" width="53" height="21" fill="#efefef"/><rect x="333.5" y="842.5" width="11" height="11" fill="#fff" stroke="#d8d8d8"/><path d="M333.5 854V842.5H345" stroke="#686868" stroke-width="1.6" fill="none"/><path d="M336 847.5l2.5 3l4.5-6" stroke="#000" stroke-width="1.8" fill="none"/><text x="351" y="852" font-size="9.8" font-weight="700" fill="#111">CH11</text><rect x="333" y="860" width="53" height="21" fill="#efefef"/><rect x="333.5" y="864.5" width="11" height="11" fill="#fff" stroke="#d8d8d8"/><path d="M333.5 876V864.5H345" stroke="#686868" stroke-width="1.6" fill="none"/><path d="M336 869.5l2.5 3l4.5-6" stroke="#000" stroke-width="1.8" fill="none"/><text x="351" y="874" font-size="9.8" font-weight="700" fill="#111">CH12</text><rect x="333" y="882" width="53" height="21" fill="#efefef"/><rect x="333.5" y="886.5" width="11" height="11" fill="#fff" stroke="#d8d8d8"/><path d="M333.5 898V886.5H345" stroke="#686868" stroke-width="1.6" fill="none"/><path d="M336 891.5l2.5 3l4.5-6" stroke="#000" stroke-width="1.8" fill="none"/><text x="351" y="896" font-size="9.8" font-weight="700" fill="#111">CH13</text><rect x="333" y="904" width="53" height="21" fill="#efefef"/><rect x="333.5" y="908.5" width="11" height="11" fill="#fff" stroke="#d8d8d8"/><path d="M333.5 920V908.5H345" stroke="#686868" stroke-width="1.6" fill="none"/><path d="M336 913.5l2.5 3l4.5-6" stroke="#000" stroke-width="1.8" fill="none"/><text x="351" y="918" font-size="9.8" font-weight="700" fill="#111">CH14</text><rect x="333" y="926" width="53" height="21" fill="#efefef"/><rect x="333.5" y="930.5" width="11" height="11" fill="#fff" stroke="#d8d8d8"/><path d="M333.5 942V930.5H345" stroke="#686868" stroke-width="1.6" fill="none"/><path d="M336 935.5l2.5 3l4.5-6" stroke="#000" stroke-width="1.8" fill="none"/><text x="351" y="940" font-size="9.8" font-weight="700" fill="#111">CH15</text><rect x="333" y="948" width="53" height="21" fill="#efefef"/><rect x="333.5" y="952.5" width="11" height="11" fill="#fff" stroke="#d8d8d8"/><path d="M333.5 964V952.5H345" stroke="#686868" stroke-width="1.6" fill="none"/><path d="M336 957.5l2.5 3l4.5-6" stroke="#000" stroke-width="1.8" fill="none"/><text x="351" y="962" font-size="9.8" font-weight="700" fill="#111">CH16</text></svg>
<div id="status" class="abs"></div>
<div class="abs sc" style="left:82px;width:167px;padding-left:16px;color:#e8ecf4">2023-10-21 02:54:35</div>
<div class="abs sc" style="left:249px;width:91px;color:#e02030">27.50 ℃</div>
<div class="abs sc" style="left:340px;width:91px;color:#4a7a30">27.66 ℃</div>
<div class="abs sc" style="left:431px;width:91px;color:#6e6a30">27.27 ℃</div>
<div class="abs sc" style="left:522px;width:91px;color:#1e6e28">28.17 ℃</div>
<div class="abs sc" style="left:613px;width:91px;color:#f09030">27.39 ℃</div>
<div class="abs sc" style="left:704px;width:91px;color:#b050f0">28.06 ℃</div>
<div class="abs sc" style="left:795px;width:91px;color:#30e0e8">27.40 ℃</div>
<div class="abs sc" style="left:886px;width:91px;color:#a01820">27.34 ℃</div>
<div class="abs sc" style="left:977px;width:91px;color:#2890f0">27.93 ℃</div>
<div class="abs sc" style="left:1068px;width:91px;color:#50c0c8">27.39 ℃</div>
<div class="abs sc" style="left:1159px;width:91px;color:#c08858">27.42 ℃</div>
<div class="abs sc" style="left:1250px;width:91px;color:#c0c840">27.54 ℃</div>
<div class="abs sc" style="left:1341px;width:91px;color:#50e858">27.50 ℃</div>
<div class="abs sc" style="left:1432px;width:91px;color:#f020e0">27.51 ℃</div>
<div class="abs sc" style="left:1523px;width:91px;color:#f0c030">27.67 ℃</div>
<div class="abs sc" style="left:1614px;width:91px;color:#5a58a8">28.03 ℃</div>
<div class="abs sc" style="left:1705px;width:10px"></div>
<svg class="abs" style="left:1740px;top:1008px" width="177" height="30" viewBox="0 0 177 30"><rect x="3" y="6" width="174" height="24" fill="#fff"/><rect x="3" y="6" width="174" height="1" fill="#c4d0e4"/><g transform="rotate(-15 17.5 16)"><rect x="3.5" y="2.5" width="28" height="29" rx="5" fill="#f26522"/><text x="17.5" y="26" font-size="27" font-weight="700" text-anchor="middle" fill="#fff" font-family="Liberation Sans, sans-serif" transform="skewX(-8)" style="transform-origin:17px 16px">S</text></g><text x="47" y="24.5" font-size="15.5" font-weight="700" text-anchor="middle" fill="#1a6fd8" font-family="'Noto Sans CJK SC', sans-serif">中</text><circle cx="67.5" cy="16.5" r="1.7" fill="none" stroke="#1a6fd8" stroke-width="1.4"/><path d="M74.5 18.5 q1.8 0 1.8 2 q0 3 -3 4 q1.4-1.5 1-3 q-1.4 0-1.4-1.5 q0-1.5 1.6-1.5z" fill="#1a6fd8"/><rect x="91.5" y="11" width="7" height="10.5" rx="3.5" fill="#1a6fd8"/><path d="M88.5 17.5 q0 7 6.5 7 q6.5 0 6.5-7 M95 24.5v2.5 M91.5 27h7" stroke="#1a6fd8" stroke-width="1.5" fill="none"/><rect x="112" y="14" width="14.5" height="10.5" rx="1.8" fill="#1a6fd8"/><path d="M114.2 17h10.5M114.2 19.3h10.5" stroke="#fff" stroke-width="1.2" stroke-dasharray="1.6 0.9"/><path d="M115.5 22h7.6" stroke="#fff" stroke-width="1.2"/><path d="M136 15.5 l4.8-3.2 q2.7 2 5.4 0 l4.8 3.2 l-2.4 4 l-1.8-1 v7.5 h-6.6 v-7.5 l-1.8 1z" fill="#1a6fd8"/><rect x="161" y="13.5" width="5.8" height="5.8" rx="1.5" fill="#1a6fd8"/><rect x="168.4" y="13.5" width="5.8" height="5.8" rx="2.9" fill="#1a6fd8"/><rect x="161" y="20.7" width="5.8" height="5.8" rx="1.5" fill="#1a6fd8"/><rect x="168.4" y="20.7" width="5.8" height="5.8" rx="1.5" fill="#1a6fd8"/></svg>
</body></html>
